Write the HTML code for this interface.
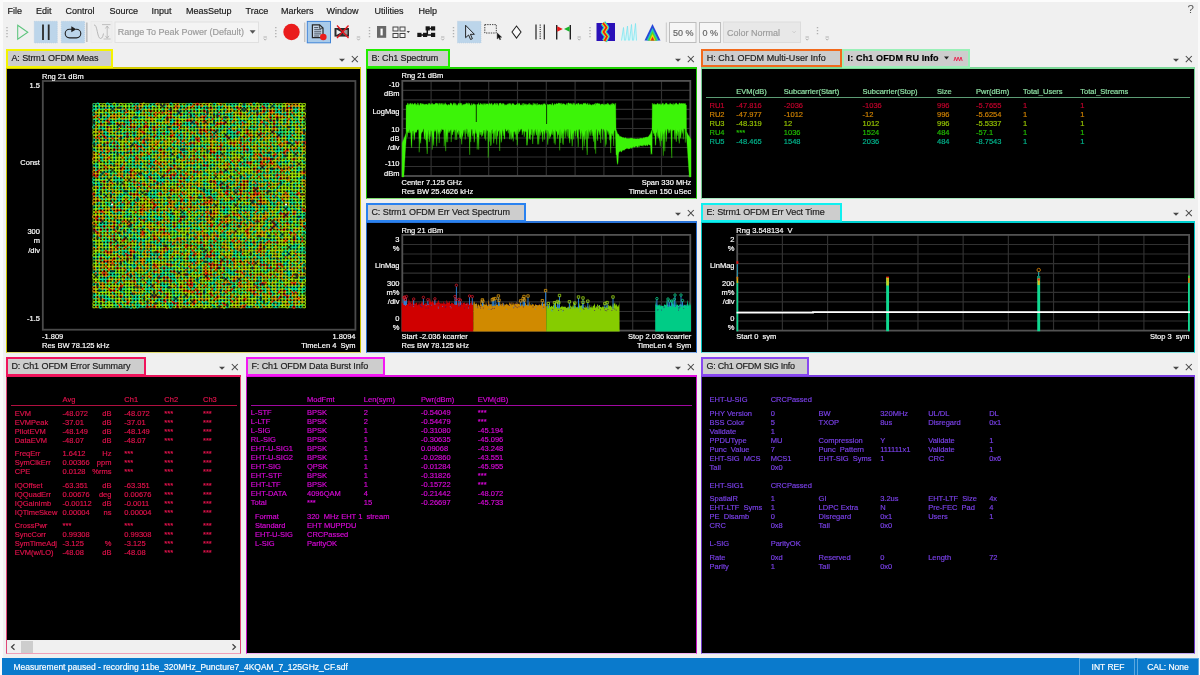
<!DOCTYPE html>
<html><head><meta charset="utf-8"><title>VSA</title>
<style>
html,body{margin:0;padding:0}
body{width:1200px;height:675px;overflow:hidden;background:#f0f0f0;font-family:"Liberation Sans",sans-serif;position:relative}
.t{position:absolute;white-space:pre;-webkit-text-stroke:.18px}
#w{position:absolute;left:0;top:0;width:1200px;height:675px;will-change:transform}
.u{font-size:9px;line-height:12px;color:#1a1a1a}
svg{position:absolute;overflow:visible}
</style></head><body><div id="w">
<div style="position:absolute;left:0px;top:0px;width:1200px;height:2px;background:#fcfcfc"></div>
<div style="position:absolute;left:0px;top:0px;width:3px;height:675px;background:#fafafa"></div>
<div style="position:absolute;left:1198px;top:0px;width:2px;height:675px;background:#fafafa"></div>
<div class="t u" style="left:7.6px;top:4.5px">File</div>
<div class="t u" style="left:36px;top:4.5px">Edit</div>
<div class="t u" style="left:65.5px;top:4.5px">Control</div>
<div class="t u" style="left:109.5px;top:4.5px">Source</div>
<div class="t u" style="left:151.5px;top:4.5px">Input</div>
<div class="t u" style="left:186px;top:4.5px">MeasSetup</div>
<div class="t u" style="left:245.5px;top:4.5px">Trace</div>
<div class="t u" style="left:281px;top:4.5px">Markers</div>
<div class="t u" style="left:326.5px;top:4.5px">Window</div>
<div class="t u" style="left:374.5px;top:4.5px">Utilities</div>
<div class="t u" style="left:418.5px;top:4.5px">Help</div>
<div class="t" style="left:1187.6px;top:2px;color:#555;font-size:11.5px;line-height:14px;-webkit-text-stroke:0">?</div>
<svg style="left:0;top:20px" width="800" height="26" viewBox="0 20 800 26">
<g fill="none" stroke-linecap="butt">
<!-- grip -->
<path d="M7 27v11" stroke="#b0b0b0" stroke-width="1.4" stroke-dasharray="1.3 1.7"/>
<!-- play -->
<path d="M17.7 25.2 L27.8 32.2 L17.7 39.3Z" stroke="#5cc47c" stroke-width="1.05" stroke-linejoin="miter"/>
<!-- pause -->
<rect x="34.3" y="21.3" width="23" height="21.6" fill="#bcd5ea" stroke="#a8c6e0" stroke-width=".6" stroke-dasharray="1 1"/>
<path d="M43 24.5v15.5M48.7 24.5v15.5" stroke="#2a2a2a" stroke-width="1.8"/>
<!-- loop -->
<rect x="61.3" y="21.3" width="23.3" height="21.6" fill="#bcd5ea" stroke="#a8c6e0" stroke-width=".6" stroke-dasharray="1 1"/>
<path d="M72.5 29.3 h-3 a4.3 4.3 0 0 0 0 8.6 h7 a4.3 4.3 0 0 0 0 -8.6 h-0.5" stroke="#1e1e1e" stroke-width="1.1"/>
<path d="M71.3 26.2 l5 3 l-5 3z" fill="#1e1e1e" stroke="none"/>
<path d="M86.8 22.5v19.5" stroke="#c0c0c0" stroke-width="1.7"/>
<!-- range icon (disabled) -->
<rect x="91" y="21.5" width="21" height="21" fill="#eeeeee" stroke="#e6e6e6" stroke-width=".6"/>
<path d="M94 25 c3.5 -1 3 13.5 6.5 13.5 c2 0 2.5 -3 3 -5" stroke="#b8b8b8" stroke-width="1"/>
<path d="M102 24.6h8.5M103.6 39h7M107.2 26v12M105.4 28.5l1.8-2.5l1.8 2.5M105.4 35.8l1.8 2.5l1.8-2.5" stroke="#b4b4b4" stroke-width=".8"/>
<!-- combo -->
<rect x="115" y="22" width="143.5" height="20.5" fill="#f4f4f4" stroke="#e0e0e0" stroke-width="1"/>
<path d="M249.6 30.3h6l-3 3.4z" fill="#555" stroke="none"/>
<!-- overflow chevrons -->
<g stroke="#a8a8a8" stroke-width=".9">
<path d="M263.5 37h3.4M263.8 38.6l1.4 1.6l1.4-1.6"/>
<path d="M356.8 37h3.4M357.1 38.6l1.4 1.6l1.4-1.6"/>
<path d="M441 37h3.4M441.3 38.6l1.4 1.6l1.4-1.6"/>
<path d="M577.5 37h3.4M577.8 38.6l1.4 1.6l1.4-1.6"/>
<path d="M805.5 37h3.4M805.8 38.6l1.4 1.6l1.4-1.6"/>
<path d="M825.5 37h3.4M825.8 38.6l1.4 1.6l1.4-1.6"/>
</g>
<!-- grips -->
<g stroke="#b0b0b0" stroke-width="1.4" stroke-dasharray="1.3 1.7">
<path d="M275.8 27v11"/><path d="M369.5 27v11"/><path d="M453.5 27v11"/><path d="M590 27v11"/><path d="M817.5 27v8"/>
</g>
<!-- record -->
<circle cx="291.5" cy="32" r="8.2" fill="#ea1c1c"/>
<path d="M304.8 22.5v19.5" stroke="#b4b4b4" stroke-width="1"/>
<!-- doc button -->
<rect x="307.3" y="21.4" width="23.2" height="21.4" fill="#a9cbea" stroke="#3f83d6" stroke-width="1"/>
<path d="M312.4 24.8h7.2l3.4 3.3v9.6h-10.6z" fill="#c4d4e4" stroke="#262626" stroke-width="1.2"/>
<path d="M319.4 25v3.3h3.4" fill="none" stroke="#262626" stroke-width=".8"/>
<path d="M314.2 27.6h4M314.2 29.7h7M314.2 31.8h7M314.2 33.9h7M314.2 36h5" stroke="#3a4450" stroke-width=".9"/>
<circle cx="323.3" cy="37" r="3.3" fill="#ea1c1c"/>
<!-- camera crossed -->
<rect x="334.5" y="28" width="14.5" height="8.6" fill="#2c2c2c"/>
<path d="M336.5 29.6l5 2.7l-5 2.7z" fill="#eee"/><rect x="343.5" y="30" width="4" height="4.6" fill="#999"/>
<path d="M337 25.5l11.5 12.5M348.5 25.5l-11.5 12.5" stroke="#e8141c" stroke-width="1.3"/>
<!-- group 3 -->
<rect x="377" y="26" width="9.2" height="11.8" fill="#686868" stroke="none"/><rect x="380.5" y="28.6" width="2.2" height="6.8" fill="#fff" stroke="none"/>
<g stroke="#444" stroke-width="1" fill="#f4f4f4">
<rect x="393" y="27" width="5" height="4"/><rect x="400" y="27" width="5" height="4"/><rect x="393" y="33.5" width="5" height="4"/><rect x="400" y="33.5" width="5" height="4"/>
</g>
<path d="M406.6 31h3.4l-1.7 2z" fill="#444"/>
<g fill="#161616"><rect x="417.3" y="32.8" width="4.2" height="4.2"/><rect x="423" y="32.8" width="4.2" height="4.2"/><rect x="431" y="32.8" width="4.2" height="4.2"/><rect x="425.6" y="26.3" width="4.2" height="4.2"/><rect x="431" y="26.3" width="4.2" height="4.2"/></g>
<path d="M420 34.9h13M427.3 28.4v6.5M427 28.4h6" stroke="#161616" stroke-width="1.5"/>
<!-- pointer button -->
<rect x="457.5" y="21.3" width="23.5" height="21.6" fill="#bcd5ea" stroke="#a8c6e0" stroke-width=".6" stroke-dasharray="1 1"/>
<path d="M465.6 25.3v12.4l3-2.7l2 4.5l1.8-.8l-2-4.4h4z" fill="#cfe0f0" stroke="#111" stroke-width=".9" stroke-linejoin="round"/>
<!-- rect select -->
<rect x="484.8" y="24.6" width="11.5" height="8.4" fill="none" stroke="#444" stroke-width="1" stroke-dasharray="1.4 1"/>
<path d="M497.2 33v6l1.6-1.4l1 2.2l.9-.4l-1-2.2h2z" fill="#111" stroke="#111" stroke-width=".4"/>
<!-- diamond -->
<path d="M516.5 26l4.5 6l-4.5 6l-4.5-6z" fill="#fafafa" stroke="#222" stroke-width="1.05"/>
<!-- bars -->
<path d="M536 24.5v15M544.3 24.5v15" stroke="#333" stroke-width="1.3"/><path d="M540.2 24.5v15" stroke="#333" stroke-width="1.1" stroke-dasharray="1.2 1"/>
<!-- flags -->
<path d="M556.7 25v14.5M570.3 25v14.5" stroke="#222" stroke-width="1.4"/>
<path d="M557.2 26.3l5.6 2.7l-5.6 2.7z" fill="#e81818"/><path d="M569.6 26.3l-5.6 2.7l5.6 2.7z" fill="#18b428"/>
<!-- spectrogram icon -->
<rect x="596.5" y="23" width="18.5" height="18" fill="#2a10b8"/>
<path d="M603 23l3.5 4.5l-3 4.5l3.5 4.5l-2.5 4.5" stroke="#18c8d8" stroke-width="5.5" stroke-linejoin="round" />
<path d="M603 23l3.5 4.5l-3 4.5l3.5 4.5l-2.5 4.5" stroke="#f0e020" stroke-width="3.4" stroke-linejoin="round" />
<path d="M603 23l3.5 4.5l-3 4.5l3.5 4.5l-2.5 4.5" stroke="#e82010" stroke-width="1.8" stroke-linejoin="round" />
<!-- waterfall icon -->
<g stroke="#7ce4f0" stroke-width=".8" fill="#d8f8fa"><path d="M621.5 40.5l2-13l1 13M625.5 40.5l2-14.5l1 14.5M629.5 40.5l2-16l1 16M633.5 40.5l2-17l1 17"/></g>
<!-- cumulative history icon -->
<path d="M644.5 40.5l8-16.5l8 16.5z" fill="#2848d8"/>
<path d="M646.5 40.5l6-12.5l6 12.5z" fill="#20c8c0"/>
<path d="M648 40.5l4.5-9.5l4.5 9.5z" fill="#58d820"/>
<path d="M649.5 40.5l3-6.5l3 6.5z" fill="#f0d810"/>
<path d="M650.7 40.5l1.8-3.8l1.8 3.8z" fill="#e82818"/>
<path d="M666.3 22.5v19.5" stroke="#c8c8c8" stroke-width="1"/>
<!-- 50% / 0% boxes -->
<rect x="669.5" y="22.5" width="26.5" height="20" fill="#f6f6f6" stroke="#bdbdbd" stroke-width="1"/>
<rect x="699.5" y="22.5" width="21" height="20" fill="#f6f6f6" stroke="#bdbdbd" stroke-width="1"/>
<rect x="723.5" y="22" width="77" height="20.5" fill="#e8e8e8" stroke="#dcdcdc" stroke-width="1"/>
<path d="M792.5 31.2l1.6 1.6l1.6-1.6" stroke="#c4c4c4" stroke-width=".8"/>
</g></svg>
<div class="t u" style="left:117.7px;top:26px;color:#9c9c9c">Range To Peak Power (Default)</div>
<div class="t u" style="left:673px;top:26.5px;color:#666">50 %</div>
<div class="t u" style="left:702.5px;top:26.5px;color:#666">0 %</div>
<div class="t u" style="left:727px;top:26.5px;color:#9c9c9c">Color Normal</div>
<div style="position:absolute;left:6px;top:69.2px;width:355.4px;height:283.8px;background:#000;box-sizing:border-box;border:1px solid #c8c000;border-top:none;border-bottom-color:#e0dc70"></div>
<div style="position:absolute;left:6px;top:67px;width:355.4px;height:2.3px;background:#d4cc00"></div>
<div style="position:absolute;left:6px;top:49.2px;width:106.8px;height:18.5px;background:#cdcdcd;box-sizing:border-box;border:2.1px solid #f4f400;border-bottom-width:2.6px"></div>
<div class="t u" style="left:11.4px;top:51.9px;color:#1c1c1c;letter-spacing:-0.089px">A: Strm1 OFDM Meas</div>
<svg style="left:336.4px;top:53px" width="26" height="13" viewBox="0 0 26 13"><path d="M3 5.8h6l-3 2.9z" fill="#484848"/><path d="M15.8 3l6 6.2M21.8 3l-6 6.2" stroke="#484848" stroke-width="1.05" fill="none"/></svg>
<div style="position:absolute;left:366px;top:69.2px;width:331px;height:129.8px;background:#000;box-sizing:border-box;border:1px solid #18c000;border-top:none;border-bottom-color:#80e070"></div>
<div style="position:absolute;left:366px;top:67px;width:331px;height:2.3px;background:#1cd000"></div>
<div style="position:absolute;left:366px;top:49.2px;width:83.6px;height:18.5px;background:#cdcdcd;box-sizing:border-box;border:2.1px solid #22ee00;border-bottom-width:2.6px"></div>
<div class="t u" style="left:371.4px;top:51.9px;color:#1c1c1c;letter-spacing:-0.127px">B: Ch1 Spectrum</div>
<svg style="left:672px;top:53px" width="26" height="13" viewBox="0 0 26 13"><path d="M3 5.8h6l-3 2.9z" fill="#484848"/><path d="M15.8 3l6 6.2M21.8 3l-6 6.2" stroke="#484848" stroke-width="1.05" fill="none"/></svg>
<div style="position:absolute;left:366px;top:223.2px;width:331px;height:129.8px;background:#000;box-sizing:border-box;border:1px solid #2468c8;border-top:none;border-bottom-color:#88b0e8"></div>
<div style="position:absolute;left:366px;top:221px;width:331px;height:2.3px;background:#2a74d8"></div>
<div style="position:absolute;left:366px;top:203.2px;width:159.8px;height:18.5px;background:#cdcdcd;box-sizing:border-box;border:2.1px solid #2a82f0;border-bottom-width:2.6px"></div>
<div class="t u" style="left:371.4px;top:205.9px;color:#1c1c1c;letter-spacing:-0.051px">C: Strm1 OFDM Err Vect Spectrum</div>
<svg style="left:672px;top:207px" width="26" height="13" viewBox="0 0 26 13"><path d="M3 5.8h6l-3 2.9z" fill="#484848"/><path d="M15.8 3l6 6.2M21.8 3l-6 6.2" stroke="#484848" stroke-width="1.05" fill="none"/></svg>
<div style="position:absolute;left:701px;top:69.2px;width:493.5px;height:129.8px;background:#000;box-sizing:border-box;border:1px solid #70c890;border-top:none;border-bottom-color:#a8e8c0"></div>
<div style="position:absolute;left:701px;top:67px;width:493.5px;height:2.3px;background:#7cd898"></div>
<div style="position:absolute;left:701.3px;top:49.2px;width:140.6px;height:17.4px;background:#cdcdcd;box-sizing:border-box;border:2.1px solid #f26a1c;border-bottom-width:2.1px"></div>
<div class="t u" style="left:706.6999999999999px;top:51.9px;color:#1c1c1c;letter-spacing:0.037px">H: Ch1 OFDM Multi-User Info</div>
<div style="position:absolute;left:842.2px;top:49.2px;width:127.6px;height:18.5px;background:#cdcdcd;box-sizing:border-box;border:2.1px solid #9af0b8;border-bottom-width:2.6px"></div>
<div class="t u" style="left:847.6px;top:51.9px;font-weight:700;color:#000;letter-spacing:0.139px">I: Ch1 OFDM RU Info</div>
<svg style="left:1169.5px;top:53px" width="26" height="13" viewBox="0 0 26 13"><path d="M3 5.8h6l-3 2.9z" fill="#484848"/><path d="M15.8 3l6 6.2M21.8 3l-6 6.2" stroke="#484848" stroke-width="1.05" fill="none"/></svg>
<div style="position:absolute;left:701px;top:223.2px;width:493.5px;height:129.8px;background:#000;box-sizing:border-box;border:1px solid #00c0c0;border-top:none;border-bottom-color:#80e0e0"></div>
<div style="position:absolute;left:701px;top:221px;width:493.5px;height:2.3px;background:#00d0d0"></div>
<div style="position:absolute;left:701px;top:203.2px;width:140.6px;height:18.5px;background:#cdcdcd;box-sizing:border-box;border:2.1px solid #10f0f0;border-bottom-width:2.6px"></div>
<div class="t u" style="left:706.4px;top:205.9px;color:#1c1c1c;letter-spacing:-0.085px">E: Strm1 OFDM Err Vect Time</div>
<svg style="left:1169.5px;top:207px" width="26" height="13" viewBox="0 0 26 13"><path d="M3 5.8h6l-3 2.9z" fill="#484848"/><path d="M15.8 3l6 6.2M21.8 3l-6 6.2" stroke="#484848" stroke-width="1.05" fill="none"/></svg>
<div style="position:absolute;left:6px;top:377.2px;width:235px;height:276.8px;background:#000;box-sizing:border-box;border:1px solid #e04878;border-top:none;border-bottom-color:#f0a0b8"></div>
<div style="position:absolute;left:6px;top:375px;width:235px;height:2.3px;background:#e8145a"></div>
<div style="position:absolute;left:6px;top:357.2px;width:139.6px;height:18.5px;background:#cdcdcd;box-sizing:border-box;border:2.1px solid #f0145c;border-bottom-width:2.6px"></div>
<div class="t u" style="left:11.4px;top:359.9px;color:#1c1c1c;letter-spacing:-0.063px">D: Ch1 OFDM Error Summary</div>
<svg style="left:216px;top:361px" width="26" height="13" viewBox="0 0 26 13"><path d="M3 5.8h6l-3 2.9z" fill="#484848"/><path d="M15.8 3l6 6.2M21.8 3l-6 6.2" stroke="#484848" stroke-width="1.05" fill="none"/></svg>
<div style="position:absolute;left:246px;top:377.2px;width:451px;height:276.8px;background:#000;box-sizing:border-box;border:1px solid #c810c8;border-top:none;border-bottom-color:#f0b0f0"></div>
<div style="position:absolute;left:246px;top:375px;width:451px;height:2.3px;background:#e010e0"></div>
<div style="position:absolute;left:246px;top:357.2px;width:139.2px;height:18.5px;background:#cdcdcd;box-sizing:border-box;border:2.1px solid #f418f4;border-bottom-width:2.6px"></div>
<div class="t u" style="left:251.4px;top:359.9px;color:#1c1c1c;letter-spacing:-0.067px">F: Ch1 OFDM Data Burst Info</div>
<svg style="left:672px;top:361px" width="26" height="13" viewBox="0 0 26 13"><path d="M3 5.8h6l-3 2.9z" fill="#484848"/><path d="M15.8 3l6 6.2M21.8 3l-6 6.2" stroke="#484848" stroke-width="1.05" fill="none"/></svg>
<div style="position:absolute;left:701px;top:377.2px;width:493.5px;height:276.8px;background:#000;box-sizing:border-box;border:1px solid #6c38c8;border-top:none;border-bottom-color:#c0a8f0"></div>
<div style="position:absolute;left:701px;top:375px;width:493.5px;height:2.3px;background:#7a3ee0"></div>
<div style="position:absolute;left:701px;top:357.2px;width:107.6px;height:18.5px;background:#cdcdcd;box-sizing:border-box;border:2.1px solid #8848f0;border-bottom-width:2.6px"></div>
<div class="t u" style="left:706.4px;top:359.9px;color:#1c1c1c;letter-spacing:-0.228px">G: Ch1 OFDM SIG Info</div>
<svg style="left:1169.5px;top:361px" width="26" height="13" viewBox="0 0 26 13"><path d="M3 5.8h6l-3 2.9z" fill="#484848"/><path d="M15.8 3l6 6.2M21.8 3l-6 6.2" stroke="#484848" stroke-width="1.05" fill="none"/></svg>
<svg style="left:940px;top:53px" width="30" height="12" viewBox="0 0 30 12"><path d="M4 3.5h5l-2.5 3z" fill="#222"/><path d="M14 8l1.2-4l1.5 4l1.4-4l1.5 4l1.4-4l1.2 4" stroke="#e8204c" stroke-width=".9" fill="none"/></svg>
<div style="position:absolute;left:7px;top:640px;width:233px;height:13px;background:#f0f0f0"></div>
<div style="position:absolute;left:20.5px;top:641px;width:12.5px;height:11.5px;background:#cdcdcd"></div>
<svg style="left:7px;top:641px" width="233" height="12" viewBox="0 0 233 12"><path d="M7.5 3.2l-3 2.8l3 2.8M225.5 3.2l3 2.8l-3 2.8" stroke="#404040" stroke-width="1.2" fill="none"/></svg>
<div style="position:absolute;left:2px;top:657.5px;width:1196px;height:17.5px;background:#0a7acc"></div>
<div class="t" style="left:13.5px;top:661px;font-size:8.5px;line-height:12px;color:#fff">Measurement paused - recording 11be_320MHz_Puncture7_4KQAM_7_125GHz_CF.sdf</div>
<div style="position:absolute;left:1078.5px;top:658px;width:56px;height:17px;box-sizing:border-box;border:1px solid #5aa8e0;border-bottom:none"></div>
<div style="position:absolute;left:1136.5px;top:658px;width:62px;height:17px;box-sizing:border-box;border:1px solid #5aa8e0;border-bottom:none"></div>
<div class="t" style="left:1058px;width:100px;text-align:center;top:661px;font-size:8.5px;line-height:12px;color:#fff">INT REF</div>
<div class="t" style="left:1118px;width:100px;text-align:center;top:661px;font-size:8.5px;line-height:12px;color:#fff">CAL: None</div>
<svg style="left:0;top:0" width="1200" height="675" viewBox="0 0 1200 675">
<rect x="42.8" y="81" width="312.59999999999997" height="248.7" fill="none" stroke="#4a4a4a" stroke-width="1.8"/>
<rect x="92.6" y="103" width="213" height="205.2" fill="#5c8c14"/>
<path d="M94.2 105.0h.01M97.8 104.2h.01M107.5 104.2h.01M110.8 104.9h.01M117.2 105.0h.01M134.1 104.9h.01M137.3 104.3h.01M150.9 104.9h.01M153.8 104.7h.01M171.0 104.2h.01M187.5 105.0h.01M190.8 104.4h.01M214.5 104.4h.01M227.0 104.8h.01M230.8 104.6h.01M234.2 104.6h.01M237.1 104.8h.01M244.4 104.7h.01M254.1 104.2h.01M264.2 104.3h.01M267.7 104.4h.01M274.1 104.8h.01M94.2 107.6h.01M97.3 108.0h.01M100.7 108.2h.01M104.6 108.2h.01M107.3 107.8h.01M110.5 107.7h.01M113.8 107.8h.01M120.7 107.6h.01M137.4 107.9h.01M144.5 107.7h.01M147.0 108.1h.01M150.9 107.9h.01M181.2 108.0h.01M197.8 108.1h.01M200.6 108.3h.01M203.7 107.4h.01M217.4 107.9h.01M220.7 107.8h.01M234.1 108.1h.01M244.4 107.4h.01M260.7 107.6h.01M267.0 107.9h.01M277.2 108.2h.01M280.5 107.7h.01M293.8 107.8h.01M297.4 108.0h.01M93.9 110.7h.01M117.7 110.9h.01M120.9 111.2h.01M124.1 110.6h.01M137.8 110.9h.01M140.7 111.0h.01M181.1 111.1h.01M187.5 110.8h.01M191.1 110.8h.01M197.3 110.6h.01M207.1 110.8h.01M217.0 111.2h.01M224.1 111.4h.01M244.4 111.3h.01M250.8 110.7h.01M253.6 111.2h.01M257.1 111.1h.01M260.3 110.6h.01M267.5 111.5h.01M277.3 111.3h.01M280.3 111.3h.01M294.2 110.7h.01M297.5 111.1h.01M94.1 114.6h.01M101.0 114.0h.01M107.9 114.1h.01M127.1 113.8h.01M137.8 114.0h.01M174.2 114.6h.01M177.8 113.9h.01M184.1 114.5h.01M187.2 114.1h.01M190.8 114.4h.01M194.1 114.0h.01M200.7 114.0h.01M204.1 114.4h.01M207.3 114.4h.01M214.5 114.0h.01M217.5 114.6h.01M220.5 113.8h.01M223.8 113.9h.01M227.7 114.2h.01M230.3 114.0h.01M247.4 114.4h.01M263.8 114.4h.01M280.9 114.0h.01M284.1 114.1h.01M290.8 113.9h.01M100.6 117.7h.01M103.7 117.1h.01M107.4 117.1h.01M133.9 117.5h.01M137.3 117.7h.01M140.9 117.7h.01M143.8 117.7h.01M163.7 117.5h.01M180.6 117.5h.01M183.9 117.2h.01M187.2 117.8h.01M194.3 117.2h.01M207.4 117.6h.01M210.6 117.8h.01M217.7 117.8h.01M224.4 117.8h.01M230.5 117.7h.01M237.8 117.7h.01M250.7 117.4h.01M257.7 117.7h.01M260.9 117.6h.01M294.0 117.8h.01M297.4 117.6h.01M94.5 120.4h.01M97.9 120.8h.01M104.0 120.7h.01M111.1 120.7h.01M117.2 120.5h.01M121.1 120.7h.01M123.8 120.4h.01M127.5 120.2h.01M157.4 120.5h.01M160.9 121.0h.01M170.8 120.9h.01M173.8 120.7h.01M194.2 121.0h.01M214.5 121.1h.01M217.2 120.2h.01M223.6 120.4h.01M230.4 120.3h.01M241.0 121.0h.01M243.6 120.9h.01M257.8 120.4h.01M263.6 120.3h.01M270.8 120.8h.01M277.1 121.0h.01M284.1 120.2h.01M290.7 120.7h.01M297.4 120.4h.01M94.5 124.0h.01M110.9 124.1h.01M114.3 123.5h.01M127.7 123.7h.01M144.0 123.5h.01M150.7 123.8h.01M154.3 124.2h.01M170.8 123.5h.01M184.4 124.1h.01M187.8 123.7h.01M190.6 124.0h.01M193.8 124.3h.01M200.4 123.6h.01M210.4 124.3h.01M214.3 124.1h.01M233.9 124.3h.01M240.6 124.1h.01M257.4 124.1h.01M263.8 124.2h.01M267.6 123.5h.01M277.6 124.0h.01M283.6 124.0h.01M291.0 124.2h.01M93.8 127.1h.01M100.8 126.8h.01M104.0 127.3h.01M117.8 126.9h.01M124.3 127.2h.01M137.7 127.1h.01M150.4 127.2h.01M167.7 126.6h.01M173.7 127.0h.01M177.6 127.4h.01M190.6 126.8h.01M193.8 126.8h.01M201.2 127.1h.01M207.6 126.6h.01M223.7 126.7h.01M227.6 127.0h.01M230.4 127.0h.01M244.5 127.3h.01M250.6 127.5h.01M257.2 127.0h.01M264.1 126.7h.01M270.6 127.0h.01M280.9 126.8h.01M290.5 127.3h.01M293.6 127.4h.01M301.1 127.1h.01M103.9 129.9h.01M114.2 130.7h.01M121.3 130.4h.01M150.9 130.1h.01M157.6 130.1h.01M167.3 130.7h.01M174.2 130.0h.01M181.0 130.6h.01M197.3 129.9h.01M220.3 130.1h.01M227.9 130.1h.01M231.0 130.5h.01M237.4 130.6h.01M240.4 130.0h.01M254.0 129.9h.01M280.5 130.1h.01M291.1 130.5h.01M293.6 130.2h.01M304.1 129.9h.01M104.6 133.2h.01M107.3 133.2h.01M117.5 133.3h.01M121.0 133.9h.01M123.8 133.4h.01M134.3 133.9h.01M147.9 133.1h.01M151.2 133.8h.01M157.6 133.7h.01M160.9 133.2h.01M167.4 133.1h.01M177.6 133.7h.01M181.1 133.4h.01M187.3 133.7h.01M197.0 133.6h.01M204.5 133.7h.01M214.5 133.4h.01M227.5 133.7h.01M230.9 133.4h.01M234.4 133.0h.01M267.7 133.1h.01M277.8 133.7h.01M280.6 133.5h.01M290.9 133.3h.01M294.1 133.7h.01M101.0 136.4h.01M107.7 136.6h.01M110.4 136.6h.01M114.2 136.3h.01M123.9 136.5h.01M134.2 136.8h.01M144.3 136.6h.01M157.0 137.0h.01M177.3 136.5h.01M180.9 136.5h.01M187.1 136.4h.01M193.9 136.8h.01M200.3 136.3h.01M203.9 136.3h.01M211.0 137.1h.01M214.5 136.6h.01M230.9 136.9h.01M233.7 136.8h.01M237.0 136.9h.01M280.9 136.8h.01M287.8 136.7h.01M290.6 136.2h.01M303.6 136.5h.01M94.5 140.0h.01M104.4 139.8h.01M107.6 140.1h.01M140.9 140.3h.01M180.5 140.1h.01M190.6 140.0h.01M194.0 140.1h.01M201.2 139.7h.01M217.3 140.1h.01M224.0 139.7h.01M247.4 139.6h.01M254.2 139.8h.01M260.3 139.7h.01M270.5 140.1h.01M287.5 139.9h.01M294.4 140.0h.01M297.3 140.2h.01M301.0 140.0h.01M303.6 140.0h.01M94.1 143.1h.01M97.8 142.7h.01M110.9 143.5h.01M117.4 143.2h.01M134.3 142.7h.01M137.9 143.2h.01M147.3 143.4h.01M160.8 143.0h.01M174.1 143.0h.01M181.0 142.8h.01M184.1 142.9h.01M257.0 142.7h.01M264.3 143.0h.01M291.0 143.0h.01M293.7 143.4h.01M110.4 146.3h.01M114.0 145.9h.01M127.7 146.6h.01M143.8 146.5h.01M147.8 146.6h.01M174.1 145.9h.01M177.3 146.1h.01M181.2 146.2h.01M184.5 146.1h.01M187.0 146.6h.01M190.4 146.5h.01M194.2 146.1h.01M197.7 146.2h.01M201.2 146.3h.01M204.5 146.7h.01M227.7 146.2h.01M231.2 146.5h.01M247.5 146.5h.01M274.0 146.3h.01M277.8 146.1h.01M94.4 149.4h.01M103.8 149.9h.01M133.8 149.4h.01M140.5 149.4h.01M167.4 149.8h.01M170.9 149.3h.01M180.8 149.4h.01M183.7 149.1h.01M190.6 149.4h.01M227.0 149.9h.01M230.7 149.5h.01M234.2 149.1h.01M250.4 149.4h.01M260.7 149.5h.01M277.6 149.7h.01M280.7 149.7h.01M290.5 149.9h.01M100.6 152.7h.01M103.9 152.4h.01M110.9 152.8h.01M114.1 153.0h.01M117.6 152.9h.01M120.5 152.5h.01M123.7 152.4h.01M127.8 152.4h.01M134.3 153.0h.01M137.8 153.1h.01M153.8 153.0h.01M157.6 152.8h.01M171.1 152.3h.01M183.7 152.6h.01M187.5 152.3h.01M197.2 152.6h.01M207.4 152.5h.01M217.3 152.8h.01M220.5 152.6h.01M227.1 153.0h.01M237.4 152.6h.01M240.8 153.0h.01M247.1 153.0h.01M250.8 152.9h.01M261.1 152.4h.01M271.0 152.3h.01M277.5 152.5h.01M287.7 152.6h.01M293.8 152.9h.01M300.2 152.4h.01M100.4 155.8h.01M114.1 155.9h.01M130.6 155.8h.01M134.2 156.3h.01M147.8 156.2h.01M150.8 155.5h.01M171.1 155.7h.01M177.5 155.8h.01M180.6 156.3h.01M190.7 156.2h.01M230.8 155.7h.01M250.7 155.5h.01M263.9 155.7h.01M267.5 155.8h.01M270.8 156.3h.01M276.9 156.2h.01M283.6 155.5h.01M297.1 156.0h.01M303.6 155.7h.01M101.1 158.9h.01M114.3 159.2h.01M127.2 159.3h.01M133.7 159.0h.01M144.2 159.0h.01M147.0 159.3h.01M150.5 159.2h.01M154.2 159.3h.01M167.4 159.3h.01M174.5 159.1h.01M203.7 159.2h.01M227.5 159.1h.01M244.0 158.8h.01M250.6 159.4h.01M261.0 158.9h.01M110.7 162.3h.01M134.0 161.9h.01M140.8 162.5h.01M151.1 162.3h.01M174.1 162.4h.01M184.2 162.0h.01M204.4 162.3h.01M207.2 162.1h.01M217.2 162.4h.01M230.8 162.4h.01M240.8 162.7h.01M244.2 162.1h.01M254.3 162.5h.01M267.2 162.0h.01M277.6 161.9h.01M280.8 162.2h.01M284.2 162.1h.01M287.3 162.1h.01M293.9 162.1h.01M303.9 162.7h.01M94.5 165.8h.01M97.9 165.3h.01M121.1 165.8h.01M134.2 165.4h.01M137.3 165.2h.01M141.1 165.5h.01M147.2 165.3h.01M150.5 165.6h.01M154.4 165.1h.01M170.6 165.9h.01M187.5 165.6h.01M190.5 165.3h.01M194.2 165.2h.01M200.7 165.2h.01M210.8 165.3h.01M213.9 165.7h.01M233.7 165.4h.01M240.8 165.6h.01M244.4 165.6h.01M247.6 165.2h.01M280.4 165.1h.01M290.4 165.5h.01M294.3 165.3h.01M97.1 168.8h.01M127.6 168.6h.01M140.5 168.5h.01M144.1 169.0h.01M153.7 168.8h.01M161.2 168.6h.01M194.2 168.5h.01M201.1 169.1h.01M204.5 168.5h.01M210.6 169.1h.01M217.2 168.4h.01M237.4 168.3h.01M257.8 168.6h.01M260.7 168.6h.01M264.3 168.4h.01M270.7 169.2h.01M277.3 169.1h.01M297.5 168.9h.01M300.8 168.9h.01M104.0 171.8h.01M107.4 172.4h.01M110.9 172.0h.01M123.9 171.7h.01M127.1 171.7h.01M150.6 172.2h.01M160.5 171.7h.01M177.1 171.7h.01M191.1 172.0h.01M204.1 172.2h.01M217.4 171.8h.01M224.5 172.0h.01M227.5 172.1h.01M234.2 172.0h.01M254.0 171.7h.01M264.2 171.7h.01M270.7 172.1h.01M287.3 171.7h.01M297.0 171.7h.01M101.0 174.8h.01M111.2 175.2h.01M124.5 175.3h.01M137.8 175.3h.01M144.5 174.8h.01M147.6 174.9h.01M151.2 175.4h.01M154.5 175.0h.01M157.5 175.0h.01M177.7 174.9h.01M183.8 174.9h.01M194.4 175.1h.01M203.8 174.9h.01M207.3 175.0h.01M247.0 175.4h.01M251.0 175.1h.01M273.7 175.3h.01M94.0 178.6h.01M101.0 178.4h.01M104.1 178.5h.01M114.0 177.9h.01M117.8 178.3h.01M120.7 177.9h.01M147.6 178.2h.01M153.9 178.7h.01M157.4 178.6h.01M160.5 178.3h.01M163.9 178.6h.01M167.6 178.3h.01M173.9 178.5h.01M180.7 178.3h.01M187.4 178.8h.01M197.1 178.3h.01M214.0 178.2h.01M233.9 178.2h.01M240.7 178.4h.01M243.7 178.3h.01M247.2 178.0h.01M263.6 178.4h.01M270.6 178.2h.01M277.7 178.1h.01M297.6 178.0h.01M300.8 178.1h.01M304.2 177.9h.01M93.8 181.9h.01M97.5 181.5h.01M107.4 181.5h.01M114.0 181.3h.01M117.2 181.9h.01M120.7 181.6h.01M140.7 181.7h.01M147.7 181.9h.01M157.7 181.2h.01M160.8 181.5h.01M163.7 181.7h.01M170.6 181.8h.01M174.1 181.1h.01M177.3 182.0h.01M187.7 181.4h.01M193.7 181.4h.01M203.8 181.2h.01M217.4 181.4h.01M220.8 181.2h.01M227.8 181.3h.01M230.8 181.3h.01M234.0 181.3h.01M241.0 182.0h.01M250.7 182.0h.01M257.2 181.6h.01M260.5 181.7h.01M264.0 181.4h.01M267.3 181.1h.01M273.7 181.5h.01M277.5 181.1h.01M281.1 181.3h.01M284.4 181.5h.01M94.4 184.4h.01M97.6 184.5h.01M100.6 185.2h.01M137.2 185.0h.01M140.4 185.1h.01M151.1 184.6h.01M154.4 184.8h.01M160.7 184.4h.01M184.6 185.2h.01M204.3 184.4h.01M207.8 184.6h.01M217.4 184.5h.01M230.4 185.0h.01M250.3 185.0h.01M254.0 184.5h.01M257.3 184.4h.01M267.1 184.7h.01M280.8 184.4h.01M287.1 184.4h.01M294.0 184.4h.01M100.4 188.0h.01M114.5 187.9h.01M121.1 188.1h.01M134.3 188.2h.01M144.2 188.1h.01M197.6 187.6h.01M200.3 188.2h.01M204.4 187.9h.01M217.2 188.2h.01M234.0 187.9h.01M237.0 187.7h.01M250.9 188.0h.01M260.4 188.3h.01M264.3 187.9h.01M277.7 188.1h.01M294.1 187.7h.01M297.4 188.4h.01M97.8 190.9h.01M107.3 191.4h.01M110.5 191.3h.01M124.3 191.5h.01M127.7 190.8h.01M131.1 191.1h.01M133.9 191.5h.01M151.0 191.0h.01M154.6 191.0h.01M157.7 191.4h.01M160.9 191.3h.01M204.3 190.9h.01M207.8 191.3h.01M223.8 191.4h.01M233.8 191.0h.01M237.7 191.0h.01M244.2 191.0h.01M247.6 191.0h.01M257.1 190.9h.01M270.3 191.0h.01M274.1 191.0h.01M287.3 190.8h.01M290.3 191.3h.01M300.9 191.5h.01M97.2 194.0h.01M104.2 194.7h.01M111.2 194.1h.01M114.3 194.1h.01M120.6 193.9h.01M123.7 194.7h.01M127.8 194.7h.01M147.7 194.7h.01M150.4 194.1h.01M154.2 194.2h.01M167.1 194.4h.01M174.0 194.8h.01M180.6 194.4h.01M194.0 194.0h.01M200.4 194.8h.01M207.4 194.4h.01M210.5 194.7h.01M214.0 194.3h.01M274.4 194.8h.01M280.3 194.2h.01M290.3 194.7h.01M293.8 194.6h.01M100.8 197.5h.01M117.2 198.0h.01M120.9 197.5h.01M131.1 197.2h.01M137.3 197.4h.01M150.8 197.8h.01M154.0 197.4h.01M157.8 197.7h.01M164.3 198.0h.01M200.4 197.6h.01M213.7 197.7h.01M237.7 197.4h.01M257.3 197.1h.01M267.4 198.0h.01M273.6 197.3h.01M277.6 197.7h.01M297.7 197.3h.01M117.6 200.6h.01M120.8 200.7h.01M137.2 200.8h.01M184.5 201.0h.01M187.2 200.4h.01M197.8 200.6h.01M220.5 200.8h.01M230.7 201.2h.01M234.1 201.1h.01M247.7 201.1h.01M254.2 200.8h.01M270.4 200.9h.01M277.0 200.9h.01M280.8 200.7h.01M287.1 201.1h.01M290.6 201.0h.01M301.0 201.2h.01M97.4 204.2h.01M101.2 204.1h.01M107.2 203.8h.01M110.9 204.0h.01M120.9 203.8h.01M124.0 204.2h.01M131.2 204.1h.01M133.8 203.6h.01M163.9 204.2h.01M167.2 203.7h.01M177.8 204.4h.01M181.0 203.9h.01M194.4 203.9h.01M214.0 204.3h.01M220.5 203.6h.01M224.3 204.2h.01M230.9 204.3h.01M240.3 203.7h.01M270.9 204.1h.01M273.8 204.2h.01M290.4 204.0h.01M293.7 204.0h.01M300.6 203.7h.01M94.6 207.2h.01M101.2 207.6h.01M111.2 206.9h.01M117.2 206.9h.01M120.7 207.1h.01M137.3 207.4h.01M157.5 207.0h.01M177.0 207.2h.01M200.8 207.4h.01M203.7 207.2h.01M207.5 207.6h.01M220.7 207.6h.01M227.3 207.2h.01M240.5 207.1h.01M243.7 207.6h.01M247.4 207.5h.01M250.5 207.2h.01M253.8 207.3h.01M260.8 207.0h.01M264.4 206.8h.01M267.1 207.4h.01M273.8 207.6h.01M280.8 207.3h.01M284.4 207.6h.01M287.2 207.6h.01M293.7 207.3h.01M300.8 207.1h.01M111.2 210.5h.01M127.7 210.1h.01M150.5 210.0h.01M154.6 210.8h.01M171.1 210.8h.01M197.2 210.2h.01M200.8 210.4h.01M204.5 210.1h.01M210.6 210.1h.01M220.8 210.8h.01M224.1 210.3h.01M227.0 210.4h.01M240.8 210.0h.01M243.7 210.4h.01M247.5 210.5h.01M250.5 210.3h.01M254.2 210.3h.01M263.6 210.6h.01M267.6 210.8h.01M280.5 210.1h.01M287.6 210.1h.01M290.4 210.5h.01M297.7 210.5h.01M300.5 210.5h.01M101.0 213.7h.01M113.9 214.0h.01M117.3 214.0h.01M120.7 213.3h.01M127.9 213.7h.01M130.5 213.4h.01M147.3 213.9h.01M150.4 213.4h.01M161.2 213.2h.01M167.6 213.9h.01M170.7 214.0h.01M184.1 213.3h.01M204.5 214.0h.01M224.3 213.5h.01M227.7 213.2h.01M240.9 213.7h.01M250.8 213.6h.01M257.1 213.3h.01M270.4 213.9h.01M277.1 213.4h.01M290.8 213.5h.01M297.4 214.0h.01M300.7 214.0h.01M304.0 213.6h.01M107.9 216.5h.01M127.2 216.9h.01M137.7 216.8h.01M141.0 216.7h.01M144.2 217.0h.01M147.6 216.9h.01M154.3 216.8h.01M157.4 216.7h.01M160.6 216.9h.01M170.9 217.0h.01M174.0 216.4h.01M187.3 217.1h.01M197.6 216.9h.01M201.2 216.5h.01M203.7 216.9h.01M234.4 216.9h.01M244.1 216.6h.01M251.1 216.7h.01M260.6 216.6h.01M274.0 216.8h.01M293.7 216.7h.01M297.8 216.7h.01M300.6 217.0h.01M303.6 216.5h.01M117.1 219.9h.01M137.8 219.8h.01M147.8 219.8h.01M150.5 220.0h.01M157.7 219.7h.01M160.7 219.7h.01M171.2 220.2h.01M197.4 220.3h.01M201.0 220.4h.01M204.3 219.8h.01M217.7 220.2h.01M237.1 220.1h.01M241.1 219.7h.01M247.1 220.1h.01M250.7 219.9h.01M267.3 220.1h.01M280.9 220.1h.01M290.6 219.6h.01M297.4 219.9h.01M100.4 223.6h.01M103.8 223.5h.01M107.2 223.3h.01M111.0 223.6h.01M117.7 223.2h.01M137.1 223.4h.01M171.2 223.4h.01M184.3 223.4h.01M191.0 222.9h.01M193.7 222.9h.01M197.2 223.5h.01M204.0 223.6h.01M217.6 223.1h.01M247.4 223.1h.01M253.9 223.4h.01M267.5 223.7h.01M277.2 223.4h.01M290.8 223.0h.01M304.4 223.5h.01M101.3 226.4h.01M124.1 226.1h.01M130.8 226.0h.01M144.3 226.5h.01M167.2 226.1h.01M170.9 226.8h.01M177.7 226.5h.01M180.6 226.3h.01M184.4 226.2h.01M187.4 226.5h.01M190.3 226.1h.01M214.3 226.6h.01M227.5 226.1h.01M240.9 226.7h.01M264.5 226.1h.01M277.7 226.0h.01M297.0 226.2h.01M97.2 229.8h.01M110.9 230.0h.01M120.7 229.3h.01M127.2 229.3h.01M130.4 230.0h.01M137.9 229.9h.01M147.2 229.4h.01M157.3 229.9h.01M170.8 229.4h.01M173.9 229.7h.01M190.5 229.4h.01M197.8 229.5h.01M200.6 229.3h.01M210.9 229.8h.01M227.5 229.8h.01M250.6 229.9h.01M263.9 230.0h.01M291.0 229.7h.01M123.9 232.9h.01M127.6 232.9h.01M130.9 232.7h.01M133.9 233.0h.01M137.8 233.0h.01M150.4 232.9h.01M190.6 232.8h.01M193.8 233.1h.01M207.7 232.4h.01M217.2 233.2h.01M224.3 232.9h.01M254.2 232.4h.01M267.4 233.0h.01M304.4 232.4h.01M94.4 235.9h.01M120.4 235.8h.01M124.1 235.7h.01M127.5 236.0h.01M134.4 235.7h.01M177.8 236.4h.01M181.1 236.0h.01M187.1 235.7h.01M200.8 236.4h.01M220.5 235.6h.01M224.3 236.3h.01M230.8 235.9h.01M237.5 235.7h.01M240.9 236.3h.01M273.9 235.8h.01M280.3 236.0h.01M297.5 235.9h.01M107.5 239.4h.01M130.8 239.6h.01M134.4 239.1h.01M137.5 239.2h.01M140.4 238.9h.01M143.9 239.6h.01M147.2 239.1h.01M161.1 239.2h.01M163.9 239.0h.01M187.0 239.1h.01M190.7 239.4h.01M193.9 239.2h.01M217.2 239.0h.01M240.7 239.5h.01M244.0 239.3h.01M250.5 239.7h.01M260.7 239.7h.01M264.4 238.9h.01M267.6 239.7h.01M270.9 239.7h.01M273.9 239.4h.01M297.5 238.9h.01M300.4 239.1h.01M94.3 242.1h.01M104.6 242.2h.01M107.1 242.8h.01M117.4 242.2h.01M137.7 242.3h.01M144.0 242.5h.01M151.1 242.3h.01M154.3 242.4h.01M160.4 242.6h.01M167.4 242.5h.01M171.1 242.7h.01M177.5 242.1h.01M187.2 242.9h.01M230.5 242.9h.01M247.8 242.3h.01M250.6 242.9h.01M257.4 242.3h.01M264.4 242.4h.01M94.4 246.1h.01M104.4 245.4h.01M107.5 245.3h.01M137.2 245.4h.01M144.3 245.3h.01M157.3 245.6h.01M161.0 245.5h.01M170.5 245.7h.01M174.0 246.1h.01M200.8 245.5h.01M214.2 245.9h.01M230.9 246.1h.01M247.7 245.3h.01M251.1 245.4h.01M257.1 245.5h.01M290.3 245.2h.01M294.0 245.8h.01M297.1 245.6h.01M107.6 248.8h.01M134.6 248.9h.01M137.8 249.0h.01M144.2 248.6h.01M150.6 249.1h.01M157.9 248.8h.01M177.6 248.5h.01M210.6 248.5h.01M220.3 248.9h.01M233.6 248.7h.01M247.3 248.5h.01M254.1 248.6h.01M290.6 249.2h.01M294.3 249.0h.01M301.0 248.5h.01M303.9 248.6h.01M113.9 252.4h.01M117.1 251.8h.01M124.3 251.7h.01M127.5 252.2h.01M141.1 252.2h.01M147.1 252.0h.01M150.4 251.7h.01M167.9 251.9h.01M170.6 252.5h.01M180.7 251.6h.01M190.7 252.0h.01M217.3 252.0h.01M224.3 251.9h.01M234.3 252.5h.01M237.0 251.8h.01M240.6 252.5h.01M254.2 252.5h.01M267.7 251.7h.01M277.6 251.7h.01M284.2 252.1h.01M287.7 252.3h.01M297.2 251.8h.01M300.4 251.9h.01M304.3 252.3h.01M97.9 255.7h.01M100.6 255.7h.01M103.8 255.7h.01M124.5 255.0h.01M134.5 254.9h.01M137.6 255.2h.01M140.8 255.6h.01M151.1 254.8h.01M153.9 255.5h.01M157.8 255.3h.01M163.9 255.6h.01M167.7 255.0h.01M177.3 255.5h.01M190.6 255.2h.01M204.4 255.1h.01M217.3 255.0h.01M234.2 255.7h.01M240.3 255.0h.01M254.0 254.9h.01M257.1 255.5h.01M267.3 255.2h.01M270.5 255.0h.01M283.8 254.9h.01M286.9 255.1h.01M293.8 255.3h.01M94.4 258.2h.01M97.9 258.7h.01M107.5 258.2h.01M117.6 258.6h.01M134.2 258.1h.01M137.5 258.8h.01M147.6 258.9h.01M150.5 258.2h.01M154.1 258.8h.01M157.0 258.4h.01M167.7 258.5h.01M174.4 258.4h.01M177.3 258.9h.01M180.4 258.8h.01M190.6 258.3h.01M193.7 258.9h.01M200.4 258.3h.01M203.7 258.5h.01M207.7 258.7h.01M210.8 258.9h.01M217.2 258.6h.01M224.1 258.9h.01M244.1 258.2h.01M257.7 258.1h.01M261.0 258.3h.01M270.5 258.8h.01M274.0 258.3h.01M280.5 258.1h.01M301.0 258.2h.01M124.5 262.1h.01M134.4 261.9h.01M147.3 261.4h.01M150.5 261.7h.01M167.4 261.9h.01M170.9 262.0h.01M174.3 261.9h.01M180.4 262.0h.01M191.0 261.4h.01M194.0 261.7h.01M204.5 261.8h.01M207.4 261.7h.01M210.6 262.0h.01M230.5 261.4h.01M250.9 261.8h.01M261.1 261.7h.01M277.7 261.3h.01M280.5 261.5h.01M287.3 261.4h.01M301.0 261.6h.01M127.8 264.8h.01M131.1 265.0h.01M134.3 264.7h.01M151.1 264.6h.01M177.2 264.9h.01M194.3 264.7h.01M224.0 265.0h.01M247.0 264.6h.01M270.2 265.3h.01M284.3 264.7h.01M287.7 264.8h.01M294.2 264.8h.01M303.8 264.7h.01M97.2 268.5h.01M127.4 268.5h.01M134.2 267.8h.01M143.9 268.0h.01M151.0 267.9h.01M160.7 268.5h.01M167.1 268.2h.01M171.0 268.5h.01M174.4 267.7h.01M184.5 268.5h.01M187.7 267.7h.01M197.3 267.7h.01M200.8 267.8h.01M227.0 267.9h.01M287.4 268.4h.01M94.4 271.8h.01M97.1 271.5h.01M111.1 271.1h.01M114.3 271.6h.01M127.3 271.2h.01M147.3 271.6h.01M163.7 271.5h.01M167.4 271.7h.01M177.0 271.0h.01M180.4 271.1h.01M187.6 271.6h.01M191.1 271.4h.01M200.8 271.6h.01M227.5 271.6h.01M230.5 271.4h.01M233.9 271.0h.01M243.8 271.0h.01M247.2 271.2h.01M267.5 271.1h.01M284.3 271.6h.01M287.5 270.9h.01M290.5 271.2h.01M303.7 271.1h.01M97.3 274.5h.01M111.1 274.6h.01M114.1 274.5h.01M117.7 274.5h.01M130.6 274.6h.01M137.2 274.6h.01M154.5 274.6h.01M157.3 274.3h.01M161.0 274.1h.01M164.3 274.3h.01M167.2 274.6h.01M170.7 274.1h.01M173.8 274.8h.01M213.8 274.2h.01M223.7 274.7h.01M231.0 274.1h.01M234.0 274.9h.01M237.0 274.2h.01M247.6 274.6h.01M277.3 274.5h.01M287.3 274.1h.01M290.6 274.2h.01M100.4 277.8h.01M104.1 277.7h.01M107.8 277.7h.01M127.2 277.8h.01M137.5 277.7h.01M141.2 278.1h.01M144.5 278.2h.01M154.2 277.7h.01M160.5 277.4h.01M170.7 277.4h.01M174.4 278.0h.01M181.1 277.6h.01M187.6 277.6h.01M200.6 277.4h.01M214.0 278.1h.01M217.3 277.5h.01M224.3 277.5h.01M227.7 278.2h.01M257.7 277.6h.01M261.1 277.4h.01M284.4 277.5h.01M300.6 278.1h.01M304.2 277.9h.01M101.2 280.7h.01M104.4 280.9h.01M114.1 280.7h.01M120.6 281.1h.01M137.3 280.8h.01M147.6 281.4h.01M150.9 281.4h.01M174.5 280.8h.01M197.3 280.5h.01M214.2 280.8h.01M230.9 281.2h.01M237.5 280.8h.01M261.0 281.1h.01M270.6 281.2h.01M280.5 281.2h.01M300.7 280.8h.01M94.2 284.3h.01M97.8 284.0h.01M117.7 283.9h.01M137.9 283.7h.01M141.2 284.1h.01M147.5 284.4h.01M151.0 284.3h.01M160.9 284.3h.01M163.9 284.4h.01M167.7 283.9h.01M177.3 283.9h.01M194.1 284.0h.01M210.9 283.8h.01M213.9 283.8h.01M227.8 284.4h.01M234.5 284.2h.01M257.1 284.2h.01M277.1 284.3h.01M296.9 283.7h.01M124.5 287.4h.01M147.1 287.4h.01M150.4 287.5h.01M164.4 287.5h.01M167.3 287.0h.01M177.8 287.0h.01M187.7 287.3h.01M194.2 287.5h.01M214.4 287.3h.01M233.9 287.2h.01M270.9 287.1h.01M277.6 287.6h.01M287.0 287.0h.01M290.7 287.7h.01M293.9 287.5h.01M297.0 287.7h.01M304.2 287.6h.01M100.5 290.9h.01M104.4 290.3h.01M120.5 290.7h.01M137.2 290.4h.01M147.2 290.7h.01M154.0 290.8h.01M164.1 290.2h.01M173.9 290.6h.01M177.4 290.4h.01M204.2 290.9h.01M214.5 290.5h.01M220.9 290.4h.01M234.3 290.3h.01M264.5 290.9h.01M271.1 291.0h.01M277.1 290.5h.01M287.3 290.4h.01M293.8 290.6h.01M297.4 290.5h.01M304.0 290.6h.01M94.5 294.1h.01M113.8 294.0h.01M124.6 294.2h.01M131.2 293.5h.01M144.6 293.8h.01M160.5 293.9h.01M174.0 294.1h.01M204.1 293.4h.01M220.4 293.4h.01M224.0 293.7h.01M240.6 294.2h.01M260.3 294.0h.01M274.1 294.0h.01M287.3 293.5h.01M290.7 293.6h.01M94.2 297.1h.01M100.8 297.2h.01M104.0 297.4h.01M107.4 297.0h.01M123.9 296.8h.01M127.1 296.8h.01M134.5 297.0h.01M137.9 296.8h.01M174.3 296.5h.01M177.8 296.6h.01M184.1 296.8h.01M190.9 296.9h.01M197.1 297.2h.01M204.0 297.1h.01M227.1 296.9h.01M250.9 297.1h.01M257.2 296.8h.01M260.6 296.8h.01M277.8 296.7h.01M284.4 296.7h.01M290.3 297.0h.01M107.6 300.1h.01M110.8 299.9h.01M114.1 300.3h.01M124.2 300.4h.01M134.5 299.9h.01M137.8 300.2h.01M157.3 300.4h.01M160.5 300.3h.01M167.1 300.4h.01M173.9 300.5h.01M177.2 300.6h.01M184.5 300.4h.01M187.6 300.1h.01M220.7 300.5h.01M223.8 300.6h.01M257.4 300.6h.01M260.4 300.3h.01M114.6 303.1h.01M120.8 303.4h.01M130.6 303.3h.01M137.5 303.2h.01M167.6 303.5h.01M171.1 303.3h.01M184.2 303.0h.01M203.7 303.3h.01M207.2 303.7h.01M220.7 303.8h.01M241.2 303.7h.01M257.8 303.2h.01M267.8 303.7h.01M273.6 303.3h.01M277.6 303.1h.01M280.4 303.3h.01M100.5 307.0h.01M117.4 306.2h.01M127.2 306.5h.01M130.9 307.0h.01M137.5 306.8h.01M140.9 306.2h.01M144.0 306.3h.01M170.5 306.9h.01M214.3 306.4h.01M227.1 306.6h.01M247.3 306.6h.01M250.3 306.4h.01M260.7 306.7h.01M274.3 306.6h.01M276.9 306.6h.01M290.5 306.3h.01M296.9 306.4h.01M300.4 306.6h.01" stroke="#00e4a4" stroke-width="3.3" stroke-linecap="round" fill="none"/>
<path d="M100.4 104.8h.01M104.3 104.7h.01M114.3 104.2h.01M120.9 104.3h.01M124.4 105.0h.01M143.7 104.2h.01M147.5 105.0h.01M160.5 104.6h.01M163.7 104.7h.01M174.5 104.6h.01M183.8 105.0h.01M203.9 104.3h.01M210.4 104.4h.01M217.7 104.4h.01M224.4 104.8h.01M240.4 104.4h.01M247.4 104.8h.01M257.2 104.2h.01M271.0 104.7h.01M277.1 104.9h.01M284.3 104.4h.01M300.3 104.5h.01M304.2 104.6h.01M117.9 108.0h.01M124.6 107.4h.01M134.3 107.7h.01M153.8 107.4h.01M157.8 107.7h.01M160.8 108.2h.01M171.0 107.5h.01M194.0 107.6h.01M224.5 107.6h.01M230.4 107.5h.01M247.5 107.5h.01M254.3 107.7h.01M273.6 108.0h.01M283.9 107.8h.01M300.8 107.7h.01M303.6 107.5h.01M97.2 111.2h.01M100.7 111.4h.01M104.0 110.8h.01M107.2 110.7h.01M111.0 111.1h.01M114.0 111.3h.01M130.7 111.1h.01M133.8 111.3h.01M147.1 111.2h.01M154.6 111.3h.01M157.9 111.3h.01M160.4 110.7h.01M164.6 111.3h.01M173.8 111.1h.01M200.8 111.0h.01M211.0 110.8h.01M220.7 110.7h.01M233.7 111.4h.01M237.5 110.9h.01M240.5 110.7h.01M284.0 110.8h.01M290.8 110.8h.01M300.9 111.4h.01M303.8 111.2h.01M97.8 114.5h.01M104.6 114.6h.01M111.1 114.4h.01M117.5 114.1h.01M121.1 114.4h.01M124.2 114.6h.01M130.8 113.9h.01M134.5 113.8h.01M140.5 114.4h.01M147.6 114.3h.01M157.4 114.4h.01M160.5 114.4h.01M164.5 114.5h.01M210.7 113.8h.01M234.1 113.9h.01M237.2 114.6h.01M244.1 113.9h.01M250.3 114.3h.01M253.9 114.4h.01M267.6 113.8h.01M274.0 114.6h.01M294.3 113.9h.01M297.2 114.5h.01M301.1 114.1h.01M304.4 113.8h.01M97.1 117.7h.01M117.9 117.7h.01M120.5 117.8h.01M127.5 117.1h.01M130.7 117.2h.01M154.1 117.6h.01M157.5 117.1h.01M160.6 117.7h.01M177.1 117.4h.01M197.5 117.0h.01M214.2 117.0h.01M220.6 117.6h.01M241.2 117.8h.01M244.1 117.6h.01M247.5 117.3h.01M253.8 117.2h.01M264.0 117.5h.01M267.5 117.0h.01M273.8 117.4h.01M287.7 117.2h.01M291.1 117.3h.01M300.3 117.0h.01M100.6 120.8h.01M133.8 121.0h.01M137.2 120.9h.01M141.1 120.5h.01M144.2 121.1h.01M154.6 120.5h.01M164.3 120.3h.01M180.9 120.2h.01M184.1 120.4h.01M197.2 120.4h.01M200.5 120.3h.01M207.1 120.5h.01M211.1 121.0h.01M220.5 120.6h.01M227.4 120.8h.01M237.1 120.3h.01M247.7 120.8h.01M250.5 120.9h.01M253.7 120.2h.01M280.8 120.8h.01M294.0 120.9h.01M97.3 123.8h.01M104.2 123.8h.01M137.9 123.7h.01M141.2 124.1h.01M147.8 123.8h.01M160.5 123.7h.01M163.7 123.6h.01M167.3 123.5h.01M204.0 124.3h.01M227.1 123.5h.01M237.1 123.5h.01M250.6 123.4h.01M253.7 124.0h.01M270.9 123.4h.01M280.9 123.6h.01M293.9 123.9h.01M300.8 123.9h.01M97.5 126.9h.01M111.2 126.7h.01M120.5 127.5h.01M161.0 127.2h.01M164.5 126.7h.01M170.9 127.1h.01M184.4 126.7h.01M197.4 127.2h.01M213.8 127.3h.01M217.1 126.9h.01M234.0 127.5h.01M237.0 126.8h.01M240.3 127.1h.01M247.0 127.1h.01M254.2 127.1h.01M260.7 126.9h.01M284.1 126.6h.01M287.1 126.8h.01M304.3 127.4h.01M94.2 130.6h.01M97.1 130.5h.01M117.3 130.5h.01M124.1 130.2h.01M127.5 129.9h.01M130.4 130.1h.01M133.9 130.6h.01M137.4 130.6h.01M144.5 130.4h.01M147.4 130.0h.01M160.7 130.3h.01M164.6 130.7h.01M177.7 130.2h.01M217.4 130.2h.01M224.1 130.1h.01M243.6 130.2h.01M251.1 130.2h.01M257.6 130.3h.01M267.3 130.7h.01M270.4 130.0h.01M287.5 130.6h.01M297.1 129.9h.01M300.4 130.5h.01M94.0 133.1h.01M97.9 133.7h.01M100.8 133.9h.01M111.0 133.5h.01M114.2 133.7h.01M130.8 133.8h.01M137.6 133.5h.01M141.2 133.7h.01M154.3 133.9h.01M170.8 133.2h.01M217.2 133.3h.01M220.8 133.5h.01M223.9 133.1h.01M240.8 133.5h.01M243.8 133.5h.01M271.0 133.3h.01M287.4 133.5h.01M297.2 133.6h.01M94.5 136.5h.01M130.8 136.5h.01M137.5 136.9h.01M140.9 136.3h.01M147.7 137.1h.01M160.8 136.6h.01M164.1 136.5h.01M167.2 136.8h.01M190.5 136.6h.01M197.8 136.3h.01M220.8 137.0h.01M224.4 136.3h.01M241.0 136.5h.01M247.8 136.8h.01M254.3 137.1h.01M257.3 136.4h.01M267.6 137.1h.01M270.7 137.0h.01M294.0 136.5h.01M296.9 137.1h.01M110.8 139.8h.01M114.2 140.1h.01M121.1 139.8h.01M124.3 139.8h.01M127.9 140.3h.01M134.0 139.8h.01M154.4 139.8h.01M157.1 140.2h.01M161.1 140.1h.01M167.5 139.7h.01M170.8 139.8h.01M174.6 140.0h.01M187.5 140.1h.01M203.6 140.2h.01M207.4 140.0h.01M214.0 140.3h.01M221.0 139.7h.01M227.3 139.8h.01M231.0 139.5h.01M234.5 140.1h.01M237.5 140.0h.01M240.5 140.1h.01M244.4 139.8h.01M257.5 139.6h.01M267.4 139.7h.01M273.9 140.1h.01M280.3 140.2h.01M284.1 139.9h.01M291.0 139.4h.01M101.2 142.9h.01M104.0 142.7h.01M120.7 143.2h.01M123.9 142.7h.01M127.6 143.3h.01M130.5 142.7h.01M140.5 143.0h.01M151.2 143.3h.01M154.3 143.2h.01M164.4 142.9h.01M167.4 143.2h.01M171.2 142.9h.01M187.5 143.3h.01M197.6 142.8h.01M200.5 142.9h.01M203.9 143.4h.01M213.8 143.0h.01M217.8 142.7h.01M224.4 142.9h.01M227.4 142.7h.01M237.6 142.9h.01M243.7 143.5h.01M250.6 142.7h.01M254.1 143.3h.01M260.9 143.0h.01M274.1 143.0h.01M277.6 143.3h.01M300.9 143.2h.01M94.0 146.0h.01M103.9 146.3h.01M120.8 146.0h.01M130.7 145.9h.01M134.6 145.9h.01M151.1 146.2h.01M154.2 146.6h.01M157.4 146.1h.01M160.4 146.0h.01M167.3 146.1h.01M171.2 146.5h.01M213.7 146.5h.01M237.3 146.4h.01M250.9 146.6h.01M261.1 146.4h.01M263.7 146.0h.01M284.1 146.7h.01M290.7 145.9h.01M293.8 146.4h.01M297.0 146.4h.01M300.5 146.2h.01M97.6 149.9h.01M111.0 149.2h.01M121.3 149.6h.01M147.1 149.7h.01M150.6 149.9h.01M157.6 149.2h.01M164.2 149.2h.01M174.0 149.8h.01M177.1 149.5h.01M187.8 149.4h.01M197.7 149.7h.01M200.5 149.3h.01M203.7 149.3h.01M207.4 149.7h.01M214.5 149.5h.01M237.2 149.4h.01M240.9 149.7h.01M254.2 149.9h.01M264.3 149.1h.01M267.5 149.3h.01M270.9 149.7h.01M284.4 149.3h.01M97.5 153.1h.01M144.6 152.9h.01M150.8 153.0h.01M160.7 152.6h.01M167.4 152.9h.01M173.7 153.1h.01M177.2 153.0h.01M190.3 152.5h.01M194.4 152.9h.01M200.7 152.9h.01M224.1 152.6h.01M230.3 153.1h.01M233.7 152.7h.01M253.9 152.5h.01M257.5 152.8h.01M267.7 152.7h.01M274.2 152.5h.01M280.4 152.5h.01M290.3 153.0h.01M304.2 152.7h.01M97.6 156.3h.01M107.9 155.6h.01M110.9 155.7h.01M121.0 156.0h.01M123.8 156.3h.01M127.1 155.7h.01M144.0 155.9h.01M154.0 156.2h.01M160.9 155.5h.01M174.2 155.8h.01M187.3 155.9h.01M197.1 155.9h.01M200.6 156.3h.01M207.5 155.8h.01M210.8 156.3h.01M234.5 156.1h.01M237.6 156.2h.01M240.9 155.8h.01M244.5 156.3h.01M247.5 155.8h.01M257.5 155.9h.01M280.7 155.8h.01M286.9 156.3h.01M290.3 155.7h.01M300.8 156.3h.01M97.3 158.7h.01M110.9 159.4h.01M117.4 159.4h.01M120.9 159.0h.01M124.2 159.1h.01M131.1 159.2h.01M140.8 159.3h.01M157.1 159.5h.01M161.0 159.4h.01M163.8 159.3h.01M177.4 159.3h.01M180.5 159.5h.01M200.9 158.8h.01M207.0 159.3h.01M214.4 159.2h.01M220.6 158.7h.01M224.3 159.3h.01M230.7 159.5h.01M234.0 158.8h.01M241.1 159.5h.01M247.4 159.1h.01M253.8 159.5h.01M274.4 159.5h.01M284.1 159.5h.01M287.8 159.3h.01M290.5 159.0h.01M297.6 158.9h.01M300.4 159.1h.01M304.4 159.2h.01M93.8 162.3h.01M100.8 162.3h.01M107.5 162.7h.01M117.6 162.2h.01M121.1 162.4h.01M130.5 162.2h.01M137.7 162.3h.01M143.8 162.0h.01M167.9 162.5h.01M170.8 162.5h.01M177.4 162.7h.01M181.2 162.4h.01M197.2 162.4h.01M201.0 161.9h.01M210.8 162.5h.01M213.8 161.9h.01M220.7 162.6h.01M224.3 162.2h.01M227.5 162.0h.01M233.8 162.5h.01M237.1 162.7h.01M264.4 162.8h.01M290.2 162.6h.01M297.7 162.2h.01M300.7 162.0h.01M100.5 165.2h.01M107.4 165.7h.01M143.8 165.9h.01M157.9 165.7h.01M164.1 165.2h.01M167.2 165.9h.01M177.1 165.5h.01M181.1 165.4h.01M183.9 165.1h.01M197.7 165.9h.01M217.8 165.4h.01M220.8 165.3h.01M230.8 165.1h.01M251.1 165.9h.01M254.1 165.8h.01M257.4 165.5h.01M267.7 165.5h.01M271.1 165.4h.01M273.6 165.5h.01M284.2 165.2h.01M287.7 165.6h.01M300.4 165.6h.01M304.2 165.6h.01M100.7 168.6h.01M110.9 168.5h.01M114.6 168.5h.01M117.3 168.5h.01M133.7 168.3h.01M137.8 169.1h.01M147.3 169.1h.01M150.4 169.1h.01M164.5 169.1h.01M167.3 169.0h.01M174.0 169.0h.01M183.8 168.5h.01M187.8 168.5h.01M197.0 168.4h.01M207.8 168.7h.01M214.4 168.9h.01M220.5 168.5h.01M223.8 168.8h.01M231.1 168.6h.01M240.8 168.3h.01M244.0 168.8h.01M247.4 168.5h.01M251.0 169.2h.01M284.1 169.0h.01M291.1 169.2h.01M294.1 168.6h.01M303.9 168.9h.01M100.6 171.7h.01M117.8 172.0h.01M120.9 171.8h.01M134.2 171.6h.01M137.7 171.9h.01M140.9 171.9h.01M144.4 172.1h.01M154.0 171.7h.01M157.1 172.4h.01M164.5 171.5h.01M174.6 171.8h.01M180.3 171.7h.01M184.2 172.3h.01M187.1 171.7h.01M207.0 171.7h.01M210.7 172.0h.01M214.3 172.1h.01M230.7 171.9h.01M237.8 171.8h.01M240.7 172.4h.01M244.3 172.0h.01M247.2 171.6h.01M250.6 171.9h.01M273.9 172.0h.01M284.4 172.1h.01M290.3 172.1h.01M294.2 171.8h.01M104.0 175.0h.01M160.7 175.5h.01M191.1 175.6h.01M197.7 175.3h.01M200.7 175.2h.01M210.9 174.9h.01M213.8 175.5h.01M217.7 175.5h.01M221.0 174.9h.01M224.1 175.4h.01M227.7 174.9h.01M230.7 175.2h.01M233.6 174.9h.01M254.3 175.4h.01M270.3 175.2h.01M287.6 174.9h.01M291.0 175.2h.01M294.2 175.2h.01M297.8 175.3h.01M300.6 175.2h.01M304.1 174.9h.01M97.8 178.8h.01M107.7 178.7h.01M111.1 178.2h.01M124.2 178.7h.01M127.3 178.6h.01M131.1 178.5h.01M137.6 178.4h.01M141.2 178.4h.01M144.0 178.7h.01M191.0 178.3h.01M194.0 178.1h.01M204.1 178.1h.01M207.5 178.2h.01M210.9 178.6h.01M217.0 178.1h.01M220.9 178.6h.01M223.8 178.8h.01M227.8 178.2h.01M230.8 178.5h.01M250.7 178.5h.01M254.1 178.3h.01M257.5 178.3h.01M261.1 178.1h.01M291.0 178.7h.01M293.8 178.0h.01M101.3 181.8h.01M124.5 181.7h.01M127.2 182.0h.01M131.2 181.9h.01M137.6 181.1h.01M144.2 182.0h.01M151.2 181.4h.01M190.9 181.1h.01M197.6 181.2h.01M200.4 181.9h.01M207.1 181.2h.01M224.2 181.1h.01M270.3 181.9h.01M287.4 181.6h.01M290.3 181.6h.01M294.2 181.8h.01M297.6 181.7h.01M104.3 185.0h.01M107.6 184.8h.01M111.2 184.4h.01M114.1 184.5h.01M117.6 184.7h.01M127.7 184.7h.01M133.8 185.0h.01M147.2 185.1h.01M164.4 185.0h.01M167.2 184.7h.01M180.6 184.7h.01M193.8 184.8h.01M200.6 185.1h.01M211.2 184.4h.01M214.4 184.8h.01M224.1 185.2h.01M234.2 185.1h.01M264.5 184.9h.01M273.9 184.4h.01M284.3 184.7h.01M290.7 184.6h.01M297.2 184.8h.01M300.3 184.8h.01M93.9 188.1h.01M107.2 188.3h.01M110.5 188.1h.01M117.6 187.8h.01M123.8 188.1h.01M127.2 187.9h.01M130.5 188.0h.01M140.8 188.3h.01M147.7 188.1h.01M151.2 188.4h.01M161.0 188.0h.01M167.3 187.7h.01M170.9 187.6h.01M174.1 187.8h.01M180.9 188.1h.01M183.7 188.3h.01M187.6 188.3h.01M194.5 188.2h.01M207.2 187.9h.01M211.1 188.2h.01M220.5 188.3h.01M231.1 187.5h.01M241.2 188.3h.01M247.8 188.3h.01M267.7 187.8h.01M270.6 188.0h.01M274.5 187.7h.01M281.1 187.8h.01M284.2 188.3h.01M287.7 188.1h.01M291.0 188.1h.01M303.8 187.7h.01M94.5 190.9h.01M100.7 191.6h.01M103.9 191.2h.01M114.0 191.6h.01M117.4 191.3h.01M143.8 190.9h.01M163.8 191.5h.01M167.8 191.2h.01M180.8 190.8h.01M184.4 191.4h.01M187.3 190.7h.01M191.1 191.5h.01M194.3 190.9h.01M213.8 191.4h.01M217.0 190.9h.01M220.4 191.2h.01M231.1 191.6h.01M260.9 191.3h.01M280.6 191.3h.01M283.8 191.3h.01M294.3 191.3h.01M297.7 191.3h.01M304.1 191.2h.01M100.8 194.2h.01M107.3 194.7h.01M117.1 194.1h.01M140.8 194.2h.01M143.8 194.0h.01M157.5 194.4h.01M164.1 194.7h.01M177.7 194.8h.01M187.6 194.4h.01M190.8 194.7h.01M197.1 194.1h.01M224.0 194.7h.01M230.7 194.2h.01M233.8 194.6h.01M244.3 194.6h.01M267.1 194.3h.01M277.2 194.2h.01M107.2 197.8h.01M124.0 197.5h.01M127.9 197.5h.01M140.7 197.7h.01M147.2 197.9h.01M167.7 198.0h.01M170.7 197.4h.01M183.8 197.3h.01M187.1 197.4h.01M197.3 197.6h.01M207.8 197.9h.01M217.7 197.4h.01M220.4 197.8h.01M224.1 197.6h.01M227.1 197.6h.01M234.4 197.2h.01M244.3 197.5h.01M264.1 198.0h.01M280.5 197.3h.01M284.1 198.0h.01M303.7 197.3h.01M103.9 200.4h.01M107.2 200.3h.01M111.0 200.4h.01M124.0 200.4h.01M127.2 200.5h.01M130.6 200.6h.01M141.0 200.8h.01M144.4 201.0h.01M147.4 200.5h.01M154.0 200.6h.01M161.2 200.8h.01M164.4 201.1h.01M167.2 200.5h.01M177.4 200.7h.01M194.1 201.1h.01M201.2 200.6h.01M203.8 200.6h.01M214.4 201.1h.01M224.5 200.9h.01M227.7 200.5h.01M237.7 200.7h.01M240.9 201.0h.01M244.0 200.8h.01M266.9 200.4h.01M297.1 200.9h.01M303.7 200.6h.01M103.9 203.9h.01M113.9 203.8h.01M117.9 204.1h.01M137.7 203.7h.01M140.8 204.1h.01M147.6 204.4h.01M150.8 203.9h.01M161.1 204.4h.01M173.9 203.8h.01M187.0 203.6h.01M233.8 203.6h.01M244.2 203.7h.01M267.8 204.1h.01M297.8 203.6h.01M97.6 207.4h.01M104.0 206.9h.01M107.9 207.3h.01M124.3 207.6h.01M127.4 207.3h.01M130.8 207.1h.01M134.0 206.8h.01M141.1 207.4h.01M147.2 207.0h.01M151.3 207.3h.01M164.5 207.6h.01M197.5 207.0h.01M217.7 207.4h.01M231.0 206.9h.01M234.1 206.8h.01M237.0 207.6h.01M271.1 207.5h.01M297.2 207.6h.01M304.4 206.9h.01M94.4 210.5h.01M97.1 210.4h.01M130.6 210.4h.01M134.3 210.2h.01M160.8 210.1h.01M173.8 210.6h.01M177.2 210.8h.01M184.3 210.2h.01M187.1 210.4h.01M190.4 210.4h.01M234.0 210.5h.01M237.3 210.6h.01M271.1 210.6h.01M274.0 210.2h.01M277.5 210.3h.01M284.1 210.6h.01M94.3 213.7h.01M97.9 213.9h.01M107.7 213.4h.01M110.5 213.7h.01M124.2 213.5h.01M133.8 213.6h.01M144.4 213.8h.01M153.7 214.0h.01M157.5 213.9h.01M177.3 213.3h.01M187.5 213.2h.01M190.6 213.8h.01M193.8 213.6h.01M197.1 214.0h.01M200.5 214.0h.01M220.6 214.0h.01M243.7 213.6h.01M247.7 213.7h.01M253.9 213.2h.01M260.3 213.2h.01M264.3 214.1h.01M273.9 213.9h.01M110.9 216.8h.01M113.8 216.6h.01M117.5 216.8h.01M131.2 217.2h.01M134.3 216.8h.01M150.7 216.7h.01M167.6 216.9h.01M177.3 216.8h.01M190.4 217.2h.01M194.1 216.8h.01M211.2 216.8h.01M217.2 216.6h.01M220.4 217.3h.01M224.3 216.7h.01M237.8 216.8h.01M247.7 216.6h.01M254.3 217.0h.01M267.2 216.7h.01M280.4 217.0h.01M290.4 216.6h.01M94.5 219.9h.01M104.1 220.2h.01M107.5 219.8h.01M110.7 219.9h.01M114.0 220.3h.01M127.6 219.8h.01M140.4 220.1h.01M187.9 220.2h.01M191.1 219.9h.01M193.7 219.8h.01M214.5 220.1h.01M220.8 220.0h.01M224.5 220.3h.01M253.7 219.8h.01M261.1 220.0h.01M271.1 219.6h.01M283.8 220.0h.01M287.3 219.7h.01M294.2 220.5h.01M97.2 223.4h.01M124.6 222.8h.01M140.6 222.8h.01M143.9 223.6h.01M147.2 223.6h.01M153.7 223.4h.01M161.2 223.0h.01M167.7 223.0h.01M181.2 223.6h.01M214.3 223.5h.01M224.1 223.3h.01M260.7 223.6h.01M264.2 223.6h.01M280.8 222.8h.01M284.1 223.1h.01M294.2 222.9h.01M94.3 226.5h.01M97.6 226.8h.01M107.5 226.7h.01M127.9 226.8h.01M134.3 226.4h.01M137.4 226.3h.01M150.8 226.1h.01M153.9 226.5h.01M157.6 226.6h.01M161.0 226.3h.01M193.8 226.7h.01M200.5 226.9h.01M203.8 226.7h.01M220.6 226.4h.01M231.1 226.5h.01M243.8 226.3h.01M247.8 226.6h.01M257.5 226.1h.01M270.3 226.0h.01M283.9 226.3h.01M287.1 226.7h.01M293.7 226.6h.01M301.1 226.2h.01M117.4 229.7h.01M124.6 229.6h.01M140.9 229.5h.01M144.3 229.9h.01M167.5 229.6h.01M181.2 229.6h.01M194.0 229.3h.01M204.0 229.9h.01M207.5 230.0h.01M214.0 229.9h.01M217.4 229.3h.01M220.5 229.9h.01M223.7 229.4h.01M230.7 229.8h.01M237.0 229.6h.01M241.2 229.7h.01M243.9 229.8h.01M257.5 229.5h.01M260.6 229.9h.01M267.4 230.0h.01M273.6 230.0h.01M287.0 230.0h.01M300.8 230.0h.01M304.0 229.6h.01M94.3 232.6h.01M101.3 232.5h.01M104.3 232.9h.01M110.7 233.0h.01M113.9 232.7h.01M117.6 233.1h.01M121.3 233.2h.01M147.8 233.0h.01M154.4 232.6h.01M160.8 232.9h.01M180.4 232.7h.01M184.4 233.3h.01M187.2 232.6h.01M200.6 233.0h.01M203.7 232.8h.01M220.5 232.8h.01M237.0 233.0h.01M240.5 233.2h.01M244.4 233.1h.01M251.0 232.7h.01M270.3 232.6h.01M273.8 233.0h.01M277.7 233.0h.01M283.7 232.6h.01M287.4 233.1h.01M300.7 232.5h.01M97.9 235.9h.01M104.1 236.3h.01M117.6 236.1h.01M130.6 236.3h.01M137.6 236.5h.01M147.3 235.8h.01M150.5 235.8h.01M157.7 235.6h.01M163.9 235.6h.01M167.8 235.7h.01M170.6 235.9h.01M183.7 235.8h.01M190.4 235.9h.01M211.1 236.3h.01M227.1 235.6h.01M233.9 236.4h.01M244.1 236.5h.01M250.3 235.9h.01M253.9 236.0h.01M266.9 235.9h.01M277.6 236.4h.01M284.1 236.2h.01M287.1 236.4h.01M290.8 236.3h.01M300.5 235.9h.01M94.0 239.6h.01M97.5 239.7h.01M101.0 239.5h.01M104.1 239.7h.01M110.8 239.3h.01M117.4 239.5h.01M120.5 239.0h.01M127.8 238.8h.01M150.9 239.4h.01M170.6 238.9h.01M173.8 239.3h.01M197.8 239.4h.01M221.0 239.7h.01M230.5 239.6h.01M237.7 239.3h.01M247.2 239.0h.01M254.1 238.8h.01M257.1 239.3h.01M277.5 239.5h.01M280.9 239.6h.01M290.5 239.4h.01M97.3 242.3h.01M100.9 242.7h.01M114.4 242.1h.01M120.8 242.3h.01M124.5 242.8h.01M127.2 242.9h.01M131.2 242.4h.01M134.5 242.9h.01M147.1 242.2h.01M157.7 242.3h.01M191.0 242.2h.01M194.0 242.1h.01M204.3 242.5h.01M207.2 242.1h.01M280.5 242.6h.01M287.0 242.8h.01M291.0 242.7h.01M293.7 242.6h.01M297.0 242.6h.01M300.4 242.8h.01M304.3 242.4h.01M97.9 245.8h.01M101.0 245.6h.01M114.1 245.4h.01M120.9 245.7h.01M123.9 246.1h.01M134.5 246.1h.01M164.4 246.1h.01M181.1 246.0h.01M184.0 245.8h.01M193.8 245.7h.01M207.7 245.9h.01M217.2 245.3h.01M224.3 245.9h.01M227.1 246.0h.01M234.1 246.0h.01M237.0 245.4h.01M254.2 245.8h.01M263.8 245.7h.01M267.2 245.3h.01M270.9 245.5h.01M274.4 245.6h.01M277.1 245.9h.01M281.1 245.6h.01M284.2 245.5h.01M287.8 245.5h.01M300.6 245.6h.01M303.7 245.7h.01M114.6 248.8h.01M120.7 249.1h.01M147.7 249.0h.01M154.6 248.9h.01M160.4 248.9h.01M170.5 248.8h.01M173.7 248.5h.01M180.5 248.8h.01M184.5 248.6h.01M187.0 249.1h.01M191.0 248.6h.01M194.5 249.2h.01M200.8 249.1h.01M203.8 249.0h.01M207.3 248.7h.01M214.4 249.1h.01M217.0 248.9h.01M230.5 249.2h.01M240.6 249.2h.01M250.4 248.9h.01M257.1 248.9h.01M266.9 248.5h.01M271.0 249.1h.01M273.7 248.7h.01M277.2 249.3h.01M280.6 249.1h.01M287.1 249.0h.01M94.3 252.1h.01M97.2 251.7h.01M100.8 252.2h.01M120.6 252.2h.01M137.4 251.8h.01M154.4 251.6h.01M187.9 252.0h.01M197.8 252.5h.01M200.3 251.6h.01M203.9 251.8h.01M207.7 252.4h.01M213.8 251.8h.01M220.5 252.5h.01M227.2 251.9h.01M230.6 252.2h.01M244.0 252.3h.01M247.7 252.1h.01M250.6 252.3h.01M270.5 252.1h.01M274.3 251.8h.01M280.6 252.1h.01M290.6 252.1h.01M293.9 252.4h.01M94.0 255.2h.01M107.4 255.7h.01M110.4 255.5h.01M114.6 255.6h.01M120.6 255.7h.01M144.4 255.5h.01M170.9 255.2h.01M174.3 255.2h.01M181.0 255.2h.01M184.3 255.1h.01M197.3 255.1h.01M200.8 255.7h.01M220.4 255.2h.01M224.3 254.9h.01M227.4 254.9h.01M237.2 255.1h.01M243.6 254.8h.01M247.0 255.3h.01M250.7 255.7h.01M273.6 255.6h.01M277.8 255.7h.01M280.6 255.5h.01M290.9 255.3h.01M297.4 255.0h.01M104.3 258.2h.01M110.8 258.9h.01M120.9 258.3h.01M123.9 258.6h.01M130.8 258.3h.01M163.8 258.1h.01M170.8 258.7h.01M184.1 258.5h.01M197.7 258.1h.01M213.9 258.3h.01M220.7 258.2h.01M227.7 258.6h.01M231.1 258.5h.01M247.5 258.2h.01M264.4 258.4h.01M267.0 258.7h.01M277.4 258.3h.01M287.0 258.4h.01M294.1 258.7h.01M297.4 258.5h.01M114.1 261.3h.01M127.7 261.7h.01M130.7 262.1h.01M153.7 262.0h.01M157.4 261.5h.01M160.6 261.5h.01M164.2 261.9h.01M177.0 261.6h.01M200.9 262.0h.01M214.1 261.9h.01M217.7 261.9h.01M224.3 262.1h.01M237.8 261.8h.01M244.4 261.5h.01M264.3 261.3h.01M267.2 261.9h.01M290.5 261.6h.01M293.7 262.0h.01M304.4 261.5h.01M94.2 264.9h.01M97.4 265.4h.01M104.2 264.8h.01M107.8 265.3h.01M123.9 265.2h.01M137.7 265.1h.01M141.3 264.7h.01M164.0 265.1h.01M174.2 265.2h.01M181.0 264.5h.01M184.0 265.0h.01M187.4 264.9h.01M191.1 264.6h.01M197.1 264.9h.01M203.8 264.9h.01M207.1 265.4h.01M230.6 265.2h.01M237.0 264.8h.01M240.8 264.8h.01M250.6 265.4h.01M257.5 265.0h.01M267.6 265.3h.01M273.6 265.0h.01M297.4 264.7h.01M104.5 268.4h.01M113.7 267.8h.01M131.1 267.7h.01M177.9 267.7h.01M181.0 268.1h.01M194.0 267.8h.01M207.2 268.2h.01M214.4 268.5h.01M221.2 268.5h.01M231.1 267.8h.01M237.6 267.8h.01M240.7 268.2h.01M247.0 268.3h.01M251.0 268.1h.01M257.3 267.9h.01M261.0 268.4h.01M264.3 268.1h.01M280.9 267.9h.01M284.5 268.1h.01M300.8 267.7h.01M101.2 271.0h.01M107.9 271.3h.01M117.4 271.1h.01M124.1 271.1h.01M130.5 271.4h.01M133.9 271.1h.01M137.4 271.8h.01M141.0 271.1h.01M144.5 271.7h.01M150.9 271.4h.01M160.8 271.0h.01M184.1 271.1h.01M194.3 271.6h.01M197.6 271.2h.01M213.8 271.0h.01M217.8 271.2h.01M224.2 271.3h.01M251.1 271.4h.01M254.0 271.4h.01M270.3 271.4h.01M273.7 270.9h.01M294.0 271.4h.01M297.1 271.1h.01M93.8 274.8h.01M100.9 274.1h.01M124.4 274.5h.01M147.7 274.8h.01M150.7 274.9h.01M177.4 274.8h.01M180.9 274.1h.01M191.2 274.4h.01M194.2 274.5h.01M197.9 274.3h.01M200.3 274.7h.01M220.4 274.1h.01M227.5 274.4h.01M240.7 274.4h.01M254.0 274.6h.01M264.1 274.8h.01M267.4 274.4h.01M273.7 274.9h.01M283.7 274.3h.01M94.1 277.9h.01M97.8 278.2h.01M131.2 278.1h.01M147.1 278.1h.01M157.2 278.2h.01M183.9 278.0h.01M194.3 277.5h.01M197.4 278.0h.01M204.3 277.9h.01M210.6 277.8h.01M220.6 278.0h.01M230.6 278.0h.01M244.3 278.1h.01M250.9 278.0h.01M270.5 277.4h.01M273.7 278.1h.01M277.6 277.7h.01M287.1 277.7h.01M290.7 277.7h.01M294.2 277.5h.01M297.6 277.6h.01M94.5 280.9h.01M97.4 281.0h.01M111.2 280.9h.01M127.7 281.4h.01M144.1 281.0h.01M154.0 281.0h.01M160.8 280.7h.01M167.7 280.9h.01M177.5 280.9h.01M180.9 281.0h.01M193.9 281.2h.01M200.5 280.8h.01M204.2 281.1h.01M207.7 281.4h.01M210.8 280.5h.01M217.5 280.7h.01M220.7 280.7h.01M224.2 281.4h.01M244.1 281.4h.01M250.6 281.3h.01M257.1 280.7h.01M263.7 281.2h.01M267.7 281.2h.01M273.8 281.3h.01M277.0 280.9h.01M284.3 281.0h.01M287.4 280.8h.01M290.8 280.5h.01M294.2 281.4h.01M297.3 280.9h.01M304.4 280.7h.01M107.1 284.5h.01M111.1 284.2h.01M114.5 284.4h.01M123.8 284.3h.01M130.7 284.0h.01M134.5 284.4h.01M144.4 283.9h.01M157.1 284.4h.01M171.2 284.1h.01M174.4 283.9h.01M180.4 283.8h.01M183.8 284.2h.01M197.4 284.5h.01M204.5 284.1h.01M207.7 283.8h.01M221.0 284.2h.01M237.0 284.3h.01M244.0 283.7h.01M251.0 284.0h.01M253.7 284.0h.01M267.5 284.1h.01M270.3 284.1h.01M273.8 284.4h.01M280.8 284.1h.01M283.6 284.2h.01M287.0 283.9h.01M303.8 284.0h.01M101.0 287.2h.01M107.7 286.9h.01M110.8 287.7h.01M117.9 287.1h.01M137.6 287.6h.01M140.6 287.6h.01M144.2 287.5h.01M157.4 287.5h.01M174.3 287.5h.01M184.0 287.1h.01M197.1 287.2h.01M200.6 287.4h.01M207.3 287.7h.01M210.3 287.6h.01M224.4 287.5h.01M237.3 287.0h.01M244.2 287.2h.01M247.2 287.1h.01M250.5 287.1h.01M257.4 287.2h.01M261.1 287.5h.01M274.0 287.7h.01M301.0 287.2h.01M97.1 290.4h.01M107.7 290.6h.01M117.3 290.4h.01M133.7 290.8h.01M140.8 290.3h.01M144.2 290.5h.01M150.9 291.0h.01M180.7 290.4h.01M201.0 290.9h.01M207.6 290.5h.01M210.6 290.9h.01M217.8 290.8h.01M240.3 290.5h.01M243.8 290.9h.01M256.9 290.6h.01M267.7 290.3h.01M274.2 290.9h.01M290.4 290.5h.01M97.6 294.0h.01M100.7 293.5h.01M104.0 293.4h.01M107.8 294.1h.01M111.0 293.5h.01M117.6 293.5h.01M121.3 294.0h.01M127.8 294.2h.01M137.6 293.5h.01M140.6 294.0h.01M147.9 294.1h.01M154.0 293.9h.01M157.8 294.1h.01M170.5 293.9h.01M184.1 293.8h.01M187.8 293.3h.01M190.5 293.5h.01M194.0 294.1h.01M207.3 293.3h.01M217.7 293.4h.01M227.8 294.0h.01M230.5 293.4h.01M234.1 294.1h.01M237.1 294.0h.01M244.5 293.5h.01M247.7 293.9h.01M266.9 293.8h.01M277.6 294.2h.01M280.3 293.5h.01M110.8 296.8h.01M130.6 296.8h.01M140.4 297.2h.01M144.4 297.3h.01M147.4 297.3h.01M160.7 297.0h.01M164.2 297.3h.01M170.7 296.7h.01M194.5 296.8h.01M201.0 297.2h.01M207.2 296.8h.01M211.2 297.3h.01M214.5 297.0h.01M220.7 297.4h.01M234.4 297.3h.01M237.2 297.2h.01M240.4 296.9h.01M243.6 296.9h.01M247.1 296.9h.01M254.4 297.4h.01M264.3 297.2h.01M267.5 297.1h.01M270.5 296.8h.01M293.8 297.1h.01M301.0 297.3h.01M304.2 297.2h.01M94.5 300.5h.01M97.5 300.6h.01M101.3 299.9h.01M120.5 299.9h.01M130.6 300.0h.01M140.4 300.2h.01M144.2 299.8h.01M147.4 300.2h.01M154.0 300.5h.01M170.5 300.6h.01M180.8 299.9h.01M190.5 300.3h.01M197.6 299.8h.01M217.1 299.9h.01M227.6 300.5h.01M240.4 300.0h.01M247.0 300.5h.01M251.0 299.8h.01M253.8 299.7h.01M264.0 300.4h.01M267.4 300.4h.01M270.3 300.6h.01M284.4 300.3h.01M300.3 300.0h.01M304.3 300.2h.01M94.1 303.7h.01M100.5 303.2h.01M103.8 303.7h.01M107.7 303.2h.01M111.0 303.7h.01M117.5 303.5h.01M124.1 303.3h.01M144.0 303.8h.01M153.8 303.0h.01M157.1 303.2h.01M160.7 303.8h.01M164.5 303.4h.01M180.7 303.2h.01M191.0 303.7h.01M197.0 303.8h.01M200.9 303.7h.01M211.0 303.1h.01M214.5 303.1h.01M233.6 303.2h.01M247.5 303.7h.01M251.0 303.8h.01M254.4 303.3h.01M270.5 303.4h.01M283.9 303.2h.01M300.7 303.3h.01M304.3 303.3h.01M94.1 306.7h.01M104.5 306.3h.01M107.3 306.7h.01M110.9 306.5h.01M134.3 306.9h.01M157.1 306.5h.01M160.6 306.3h.01M164.3 306.5h.01M167.0 307.0h.01M174.6 306.6h.01M180.5 306.9h.01M187.2 306.2h.01M191.0 306.7h.01M194.0 306.7h.01M197.4 306.4h.01M200.8 306.2h.01M204.3 307.0h.01M207.1 306.5h.01M210.8 306.8h.01M217.6 306.5h.01M224.1 307.0h.01M230.6 306.2h.01M237.1 306.3h.01M257.6 306.7h.01M267.6 306.4h.01M270.5 306.6h.01M281.0 306.3h.01M284.1 306.4h.01M287.4 306.8h.01M304.3 306.7h.01" stroke="#a2e400" stroke-width="3.3" stroke-linecap="round" fill="none"/>
<path d="M141.2 104.8h.01M157.2 104.4h.01M167.6 105.0h.01M177.8 104.6h.01M194.3 104.8h.01M200.7 104.8h.01M207.4 104.7h.01M220.4 104.6h.01M250.7 104.5h.01M287.3 104.5h.01M290.3 104.9h.01M294.2 104.6h.01M297.4 104.9h.01M140.8 108.1h.01M167.1 107.9h.01M174.4 108.2h.01M177.7 108.1h.01M187.7 107.9h.01M190.9 107.5h.01M227.4 107.8h.01M241.1 107.5h.01M257.3 107.7h.01M127.4 111.4h.01M143.9 110.8h.01M167.6 111.1h.01M177.3 110.7h.01M194.2 111.1h.01M227.3 111.1h.01M230.7 111.0h.01M247.3 111.1h.01M273.6 111.4h.01M114.5 114.5h.01M144.3 114.1h.01M154.2 114.2h.01M167.5 114.1h.01M260.8 113.9h.01M270.6 114.0h.01M277.4 114.4h.01M94.6 117.2h.01M110.8 117.3h.01M114.4 117.4h.01M124.5 117.5h.01M147.5 117.5h.01M150.6 117.6h.01M174.1 117.6h.01M201.2 117.5h.01M227.0 117.7h.01M234.2 117.4h.01M281.0 117.0h.01M284.3 117.7h.01M303.8 117.1h.01M151.2 120.4h.01M167.9 120.8h.01M233.9 120.3h.01M261.1 120.9h.01M267.5 120.3h.01M287.7 120.9h.01M300.7 120.4h.01M120.7 123.8h.01M131.0 124.2h.01M133.9 124.0h.01M157.8 124.1h.01M180.6 123.4h.01M207.1 123.9h.01M243.7 124.1h.01M247.4 124.1h.01M260.4 123.6h.01M287.5 123.4h.01M297.5 124.2h.01M127.4 126.7h.01M157.3 127.0h.01M180.4 127.1h.01M187.8 127.4h.01M204.5 127.0h.01M267.3 127.5h.01M297.0 127.4h.01M101.0 130.5h.01M107.5 130.3h.01M111.0 130.0h.01M140.9 130.6h.01M171.2 130.3h.01M187.5 129.9h.01M207.2 130.4h.01M214.3 130.3h.01M234.3 130.2h.01M260.4 130.6h.01M274.3 130.1h.01M277.7 129.8h.01M173.9 133.8h.01M184.1 133.4h.01M191.1 133.3h.01M194.3 133.2h.01M207.3 133.7h.01M211.1 133.1h.01M251.1 133.8h.01M257.4 133.5h.01M264.4 133.6h.01M274.4 133.7h.01M301.0 133.3h.01M304.0 133.4h.01M97.3 136.6h.01M117.9 136.7h.01M120.8 136.2h.01M173.9 137.1h.01M184.5 137.1h.01M207.4 136.5h.01M217.5 136.3h.01M250.6 136.5h.01M261.2 136.6h.01M264.0 136.5h.01M273.9 136.6h.01M284.3 137.0h.01M100.5 140.2h.01M117.7 139.7h.01M131.1 139.8h.01M137.6 139.5h.01M147.5 140.3h.01M151.0 140.1h.01M163.9 139.9h.01M177.9 140.2h.01M184.0 140.0h.01M211.1 140.2h.01M264.1 139.6h.01M277.6 139.8h.01M157.5 143.2h.01M177.2 142.9h.01M210.7 143.0h.01M220.7 142.8h.01M247.6 143.1h.01M270.5 143.1h.01M281.0 142.9h.01M284.0 143.1h.01M97.7 146.0h.01M100.4 146.0h.01M107.5 146.3h.01M124.1 146.0h.01M207.3 146.5h.01M211.0 146.4h.01M217.7 146.0h.01M234.0 146.0h.01M241.1 146.6h.01M254.3 146.4h.01M257.7 145.9h.01M267.5 146.1h.01M271.1 146.1h.01M281.0 146.5h.01M304.3 146.6h.01M101.2 149.6h.01M107.1 149.1h.01M117.2 149.9h.01M124.6 149.8h.01M127.5 149.8h.01M131.2 149.7h.01M137.7 149.4h.01M143.8 149.5h.01M153.8 149.6h.01M193.7 149.1h.01M217.0 149.2h.01M224.4 149.1h.01M257.0 149.7h.01M293.8 149.9h.01M303.9 149.5h.01M94.3 153.0h.01M107.3 152.3h.01M141.2 152.6h.01M147.3 152.5h.01M243.9 152.3h.01M263.9 152.9h.01M297.3 152.6h.01M94.5 156.2h.01M104.2 155.5h.01M137.1 156.0h.01M140.9 155.7h.01M157.4 155.8h.01M164.3 156.1h.01M167.1 155.8h.01M220.4 156.2h.01M224.2 156.0h.01M254.4 156.2h.01M93.8 158.9h.01M104.4 159.4h.01M107.8 158.7h.01M184.0 159.5h.01M187.1 158.8h.01M190.9 158.9h.01M194.1 158.8h.01M237.8 159.3h.01M257.1 158.9h.01M277.1 158.7h.01M124.4 162.4h.01M154.6 162.6h.01M157.4 162.2h.01M160.7 162.6h.01M164.1 162.5h.01M187.5 162.7h.01M190.5 162.6h.01M193.9 162.5h.01M273.7 162.1h.01M104.3 165.6h.01M110.6 165.6h.01M117.8 165.2h.01M124.1 165.5h.01M161.1 165.5h.01M224.0 165.6h.01M227.2 165.6h.01M237.1 165.6h.01M260.4 165.5h.01M264.2 165.8h.01M277.4 165.8h.01M297.7 165.1h.01M94.6 168.5h.01M104.1 169.1h.01M107.3 168.9h.01M124.1 168.4h.01M130.9 168.9h.01M157.9 168.9h.01M177.5 169.1h.01M180.7 168.7h.01M191.1 169.0h.01M227.2 168.5h.01M267.1 168.7h.01M273.9 168.3h.01M280.3 168.7h.01M287.2 168.8h.01M94.1 171.7h.01M147.1 172.0h.01M200.9 171.5h.01M260.3 172.1h.01M267.1 171.5h.01M280.3 171.9h.01M300.9 172.2h.01M107.5 174.7h.01M114.0 174.7h.01M117.6 175.5h.01M121.0 175.5h.01M127.1 175.0h.01M133.9 174.8h.01M140.6 175.1h.01M167.8 175.1h.01M187.2 174.8h.01M244.1 175.0h.01M264.4 175.1h.01M267.6 175.4h.01M280.5 175.4h.01M284.1 175.0h.01M134.2 178.1h.01M200.9 178.0h.01M237.6 178.3h.01M267.5 178.2h.01M283.7 178.6h.01M287.4 178.8h.01M110.7 181.3h.01M167.7 181.3h.01M184.1 181.9h.01M237.5 181.8h.01M253.6 181.8h.01M304.0 181.1h.01M124.0 185.1h.01M157.2 184.9h.01M187.0 184.9h.01M190.4 184.5h.01M197.9 185.2h.01M227.4 185.1h.01M237.2 184.7h.01M247.5 184.7h.01M261.0 185.0h.01M277.1 184.6h.01M304.3 184.8h.01M97.2 187.6h.01M137.3 187.6h.01M154.4 188.2h.01M157.2 187.8h.01M164.5 188.2h.01M177.4 188.1h.01M190.9 188.1h.01M213.8 187.7h.01M301.1 187.6h.01M120.4 191.6h.01M137.6 191.0h.01M173.9 191.6h.01M177.3 191.0h.01M197.8 191.3h.01M200.3 191.6h.01M264.2 191.4h.01M267.1 191.2h.01M277.6 190.9h.01M171.1 194.4h.01M184.1 194.7h.01M204.1 194.6h.01M221.2 194.4h.01M237.3 194.5h.01M250.4 194.4h.01M260.4 194.0h.01M264.3 193.9h.01M270.9 194.6h.01M283.7 194.8h.01M287.4 194.4h.01M300.3 194.4h.01M303.8 194.4h.01M94.4 197.3h.01M97.2 197.6h.01M104.1 197.3h.01M111.0 197.8h.01M114.3 197.6h.01M134.3 197.4h.01M144.1 197.9h.01M180.7 198.0h.01M194.1 197.2h.01M240.7 197.4h.01M250.4 197.1h.01M253.6 197.5h.01M270.9 197.5h.01M287.1 198.0h.01M293.7 197.8h.01M300.4 197.3h.01M94.1 200.6h.01M100.7 200.7h.01M150.4 201.0h.01M157.1 200.5h.01M171.1 200.6h.01M174.2 201.2h.01M190.3 201.2h.01M207.9 201.2h.01M217.8 200.7h.01M251.2 200.7h.01M257.7 200.6h.01M264.3 201.0h.01M274.3 200.7h.01M283.8 200.7h.01M93.8 203.7h.01M127.1 204.1h.01M144.3 203.8h.01M157.6 204.4h.01M170.7 204.4h.01M184.4 203.6h.01M190.6 203.8h.01M197.8 204.0h.01M200.7 203.9h.01M207.8 204.4h.01M211.1 203.6h.01M217.1 203.6h.01M237.8 204.3h.01M247.3 203.7h.01M254.1 204.3h.01M256.9 203.9h.01M263.7 203.8h.01M277.8 203.6h.01M283.8 204.1h.01M287.7 203.7h.01M303.7 204.1h.01M144.1 207.1h.01M167.3 207.2h.01M170.5 207.6h.01M173.8 207.2h.01M180.7 206.8h.01M183.8 207.2h.01M187.4 207.0h.01M194.0 206.8h.01M210.9 207.5h.01M214.2 207.0h.01M257.6 207.3h.01M277.3 207.3h.01M103.8 210.5h.01M107.6 210.1h.01M114.3 210.2h.01M124.2 210.3h.01M144.4 210.2h.01M147.3 210.6h.01M164.4 210.8h.01M167.7 210.3h.01M194.4 210.5h.01M207.4 210.4h.01M214.0 210.4h.01M217.1 210.2h.01M257.4 210.2h.01M293.7 210.8h.01M104.5 213.7h.01M141.0 213.6h.01M164.5 213.2h.01M174.4 213.6h.01M207.2 213.8h.01M217.1 213.3h.01M237.5 214.1h.01M267.5 213.9h.01M93.8 216.7h.01M100.8 216.5h.01M104.0 217.2h.01M120.9 216.4h.01M164.5 216.5h.01M213.9 216.7h.01M227.1 217.3h.01M240.7 216.4h.01M257.8 216.9h.01M263.8 216.5h.01M287.2 216.5h.01M124.6 220.1h.01M134.6 219.6h.01M154.4 219.6h.01M163.8 220.1h.01M167.3 220.4h.01M207.0 220.0h.01M210.6 220.4h.01M227.5 220.5h.01M230.4 220.3h.01M234.1 219.9h.01M244.4 220.5h.01M257.8 220.3h.01M264.0 219.6h.01M274.2 219.6h.01M277.8 219.8h.01M300.7 219.7h.01M304.2 220.2h.01M93.8 223.1h.01M127.7 223.3h.01M131.2 223.2h.01M133.9 223.6h.01M150.5 223.6h.01M164.6 223.3h.01M187.1 223.5h.01M201.0 223.4h.01M207.1 223.0h.01M210.7 223.0h.01M220.8 223.1h.01M227.1 223.5h.01M233.7 223.0h.01M237.6 223.5h.01M250.6 223.5h.01M301.1 223.6h.01M111.2 226.5h.01M121.1 226.6h.01M140.6 226.1h.01M147.4 226.7h.01M164.4 226.5h.01M207.5 226.8h.01M217.0 226.8h.01M233.7 226.4h.01M237.1 226.4h.01M250.4 226.5h.01M253.8 226.1h.01M260.4 226.6h.01M280.4 226.0h.01M114.4 229.4h.01M133.8 229.7h.01M150.7 229.7h.01M154.5 229.7h.01M177.4 229.6h.01M187.4 229.2h.01M254.4 229.4h.01M277.7 229.6h.01M280.7 230.1h.01M294.2 229.9h.01M297.5 229.3h.01M107.1 232.5h.01M141.0 233.3h.01M157.4 233.3h.01M167.4 233.2h.01M197.1 232.9h.01M214.4 233.0h.01M227.0 232.4h.01M230.5 233.3h.01M234.4 232.7h.01M257.6 232.8h.01M261.1 233.1h.01M264.0 233.0h.01M293.9 232.7h.01M107.7 236.0h.01M111.0 236.2h.01M140.9 236.5h.01M143.9 235.8h.01M161.0 236.2h.01M193.7 235.9h.01M197.8 235.8h.01M213.7 236.5h.01M247.4 236.2h.01M257.4 235.7h.01M260.9 235.7h.01M263.8 236.1h.01M294.4 236.2h.01M157.3 238.8h.01M181.1 238.9h.01M184.0 239.1h.01M204.4 239.7h.01M207.2 239.6h.01M213.7 239.0h.01M234.1 239.3h.01M283.9 239.5h.01M287.4 239.7h.01M140.9 242.7h.01M174.1 242.4h.01M180.6 242.6h.01M197.7 242.2h.01M214.1 242.7h.01M223.8 242.6h.01M234.4 242.1h.01M237.5 242.4h.01M240.3 242.2h.01M260.5 242.5h.01M267.0 242.4h.01M271.0 242.4h.01M273.6 242.2h.01M284.2 242.1h.01M110.5 245.8h.01M127.7 246.0h.01M130.7 246.0h.01M140.4 245.3h.01M147.5 245.5h.01M151.0 245.3h.01M154.3 246.1h.01M177.7 246.1h.01M240.8 245.8h.01M244.0 245.3h.01M94.3 248.5h.01M97.9 248.7h.01M110.9 248.5h.01M117.4 249.2h.01M124.1 248.5h.01M130.6 249.3h.01M140.6 248.6h.01M227.2 248.9h.01M237.2 249.1h.01M243.9 248.5h.01M264.2 248.6h.01M104.1 252.1h.01M144.4 252.1h.01M161.0 252.5h.01M163.7 252.0h.01M174.5 252.0h.01M177.6 252.4h.01M194.2 251.7h.01M257.2 252.5h.01M260.7 252.4h.01M264.2 252.1h.01M117.6 255.0h.01M147.0 255.6h.01M161.2 254.9h.01M187.4 255.0h.01M230.5 255.3h.01M261.1 255.5h.01M263.8 255.2h.01M300.6 255.7h.01M304.0 255.7h.01M141.2 258.1h.01M143.9 258.5h.01M161.0 258.4h.01M254.1 258.1h.01M290.6 258.6h.01M97.4 262.0h.01M100.9 262.1h.01M111.3 261.7h.01M117.4 262.1h.01M120.8 262.0h.01M137.1 261.8h.01M141.0 261.4h.01M144.0 261.7h.01M197.6 261.7h.01M234.4 261.8h.01M247.1 261.7h.01M253.6 262.0h.01M257.5 261.6h.01M274.2 261.3h.01M296.9 261.4h.01M110.4 265.0h.01M114.4 264.9h.01M117.4 265.1h.01M144.1 265.2h.01M147.3 265.2h.01M157.3 264.8h.01M161.1 265.0h.01M227.3 265.1h.01M234.5 265.2h.01M243.8 265.0h.01M253.9 265.3h.01M290.7 264.9h.01M300.5 264.6h.01M94.4 267.8h.01M101.0 267.8h.01M107.6 268.5h.01M110.9 267.8h.01M121.1 267.7h.01M123.8 267.8h.01M140.6 267.9h.01M147.6 268.2h.01M153.7 268.2h.01M157.3 267.9h.01M190.9 267.8h.01M203.9 268.4h.01M234.4 267.9h.01M244.1 268.5h.01M253.8 268.4h.01M290.5 268.5h.01M293.8 267.7h.01M297.1 268.0h.01M304.4 268.4h.01M157.6 271.7h.01M171.2 271.1h.01M203.9 271.2h.01M207.0 271.4h.01M210.4 271.3h.01M241.1 271.3h.01M277.8 271.5h.01M281.1 271.2h.01M300.2 271.2h.01M107.3 274.7h.01M133.8 274.4h.01M184.0 274.6h.01M204.3 274.8h.01M217.0 274.5h.01M243.7 274.8h.01M257.2 274.8h.01M280.7 274.8h.01M293.7 274.4h.01M297.7 274.6h.01M300.5 274.7h.01M304.0 274.1h.01M110.9 278.0h.01M124.4 277.9h.01M134.1 277.6h.01M150.7 277.5h.01M177.2 277.9h.01M190.3 277.6h.01M234.2 277.8h.01M237.2 277.3h.01M241.1 277.6h.01M247.7 278.0h.01M254.4 278.1h.01M263.8 278.1h.01M267.4 278.2h.01M280.8 277.3h.01M117.2 280.8h.01M124.2 281.2h.01M130.9 281.1h.01M184.1 280.6h.01M187.0 281.1h.01M227.3 281.0h.01M240.7 281.1h.01M247.3 280.7h.01M254.4 280.6h.01M100.5 284.3h.01M103.9 284.4h.01M120.5 283.8h.01M153.8 284.5h.01M200.7 284.2h.01M217.8 284.5h.01M230.3 284.6h.01M240.8 283.7h.01M247.0 284.3h.01M291.1 283.9h.01M301.0 284.5h.01M94.1 287.5h.01M97.4 287.3h.01M103.9 287.5h.01M114.3 287.5h.01M154.4 287.3h.01M160.9 287.8h.01M171.0 287.1h.01M190.8 287.0h.01M203.7 287.8h.01M217.3 287.5h.01M220.6 287.1h.01M227.4 287.3h.01M240.7 287.0h.01M254.4 287.3h.01M266.9 287.8h.01M94.1 290.9h.01M157.6 290.6h.01M190.5 290.8h.01M194.4 290.9h.01M223.9 290.4h.01M227.6 290.5h.01M247.4 290.6h.01M280.3 290.5h.01M134.0 293.8h.01M257.4 293.8h.01M263.7 294.1h.01M293.6 294.1h.01M297.3 294.1h.01M97.1 296.9h.01M113.8 296.6h.01M150.5 297.2h.01M157.6 296.9h.01M180.5 297.2h.01M187.4 297.4h.01M224.3 297.4h.01M231.1 297.4h.01M274.3 296.6h.01M297.5 297.3h.01M117.7 300.4h.01M127.3 300.4h.01M150.8 300.6h.01M200.7 300.0h.01M204.1 300.3h.01M207.5 299.7h.01M214.0 300.0h.01M231.1 300.4h.01M237.5 300.1h.01M274.3 299.8h.01M276.9 300.5h.01M287.4 299.8h.01M290.7 300.1h.01M294.0 300.0h.01M297.7 300.1h.01M141.2 303.0h.01M147.7 303.2h.01M151.0 303.4h.01M217.1 303.4h.01M237.0 303.3h.01M287.2 303.0h.01M294.1 303.2h.01M297.7 303.6h.01M97.1 306.6h.01M120.5 306.4h.01M150.8 306.3h.01M184.3 306.3h.01M221.0 306.6h.01M234.3 306.3h.01M241.0 306.8h.01M254.5 306.4h.01M264.2 306.7h.01" stroke="#ec9400" stroke-width="3.3" stroke-linecap="round" fill="none"/>
<path d="M197.4 104.4h.01M211.2 107.7h.01M237.3 107.4h.01M264.4 107.5h.01M287.2 108.0h.01M290.6 108.0h.01M150.8 111.4h.01M170.7 110.9h.01M204.4 110.7h.01M263.7 111.2h.01M270.8 111.0h.01M287.3 110.6h.01M170.4 113.9h.01M181.0 114.5h.01M240.7 114.0h.01M257.5 114.6h.01M287.3 114.2h.01M167.5 117.6h.01M170.6 117.4h.01M203.7 117.4h.01M270.6 117.8h.01M277.0 117.2h.01M107.1 120.9h.01M130.4 120.6h.01M177.7 120.9h.01M187.5 120.5h.01M190.7 120.7h.01M204.4 121.0h.01M273.8 120.6h.01M100.9 123.9h.01M117.3 123.7h.01M124.0 124.3h.01M174.3 123.8h.01M177.2 124.0h.01M197.6 123.9h.01M217.6 123.5h.01M220.5 123.4h.01M224.1 123.5h.01M274.0 123.6h.01M107.9 127.0h.01M130.9 127.0h.01M134.5 127.2h.01M144.6 127.1h.01M147.6 126.8h.01M154.3 127.2h.01M274.3 127.3h.01M154.4 129.8h.01M200.7 129.9h.01M204.2 130.0h.01M211.1 129.8h.01M247.3 130.7h.01M127.2 133.7h.01M144.0 133.1h.01M163.8 133.7h.01M201.0 133.3h.01M237.1 133.0h.01M246.9 133.0h.01M261.0 133.6h.01M104.6 136.7h.01M127.6 136.4h.01M153.9 136.8h.01M170.9 136.3h.01M227.1 137.0h.01M243.6 136.9h.01M277.6 137.1h.01M143.8 140.2h.01M197.4 140.0h.01M250.5 140.2h.01M107.2 142.9h.01M113.9 142.9h.01M143.8 142.7h.01M190.4 143.1h.01M193.8 143.2h.01M230.9 143.1h.01M234.3 143.3h.01M240.5 143.2h.01M287.4 142.6h.01M297.4 143.3h.01M304.4 142.7h.01M117.1 146.0h.01M137.6 146.5h.01M140.8 146.6h.01M220.4 145.9h.01M243.9 145.9h.01M114.4 149.7h.01M160.9 149.5h.01M210.8 149.8h.01M220.9 149.2h.01M244.2 149.2h.01M247.4 149.9h.01M287.5 149.8h.01M130.9 152.6h.01M164.0 152.9h.01M180.7 152.4h.01M210.7 152.9h.01M214.1 152.3h.01M284.2 152.9h.01M184.3 156.4h.01M194.0 156.1h.01M204.0 156.3h.01M217.5 156.0h.01M261.0 155.5h.01M273.9 155.6h.01M137.7 158.8h.01M197.6 159.3h.01M217.7 159.1h.01M264.2 158.9h.01M267.3 159.1h.01M270.5 159.4h.01M293.6 159.0h.01M247.6 162.4h.01M250.6 162.5h.01M261.1 162.3h.01M270.5 162.3h.01M174.4 165.9h.01M204.2 165.3h.01M207.1 165.7h.01M121.0 168.9h.01M171.2 168.5h.01M254.3 169.1h.01M97.2 172.0h.01M130.4 171.9h.01M167.4 171.9h.01M194.0 171.5h.01M197.0 171.7h.01M220.9 171.9h.01M257.4 172.0h.01M303.9 172.3h.01M94.1 174.7h.01M97.3 175.5h.01M130.9 175.1h.01M164.6 175.6h.01M170.9 175.5h.01M174.1 175.5h.01M180.7 175.3h.01M277.2 175.0h.01M150.9 178.0h.01M170.7 178.1h.01M184.6 178.2h.01M280.7 178.3h.01M103.9 181.7h.01M134.0 181.8h.01M154.5 181.1h.01M180.6 181.4h.01M210.6 181.6h.01M214.2 181.4h.01M244.0 181.6h.01M247.3 181.4h.01M144.5 184.3h.01M177.9 184.4h.01M220.7 185.0h.01M241.0 184.5h.01M243.9 185.1h.01M103.9 187.8h.01M227.3 187.6h.01M244.0 188.3h.01M254.1 188.2h.01M257.5 188.4h.01M147.1 190.9h.01M170.5 190.8h.01M227.4 191.4h.01M241.1 191.0h.01M254.3 190.8h.01M93.9 194.1h.01M130.4 193.9h.01M134.5 194.3h.01M137.4 194.6h.01M160.6 194.0h.01M227.3 194.1h.01M240.5 194.0h.01M254.3 194.6h.01M257.5 194.5h.01M297.1 194.2h.01M190.7 197.5h.01M204.5 197.7h.01M210.8 197.2h.01M230.8 197.8h.01M247.0 197.6h.01M260.4 197.9h.01M97.7 200.6h.01M181.2 201.1h.01M210.6 200.8h.01M260.7 200.6h.01M154.3 204.3h.01M203.7 204.0h.01M260.3 204.0h.01M114.4 206.9h.01M154.1 207.2h.01M190.4 207.0h.01M223.7 207.6h.01M100.5 210.9h.01M117.2 210.3h.01M120.4 210.1h.01M140.7 210.3h.01M157.3 210.2h.01M304.2 210.3h.01M210.4 214.0h.01M214.3 213.2h.01M233.7 214.0h.01M280.7 213.4h.01M283.8 213.8h.01M287.6 214.1h.01M294.0 213.7h.01M97.5 216.4h.01M180.9 217.2h.01M184.3 217.0h.01M207.2 216.6h.01M283.7 217.2h.01M97.2 219.7h.01M101.1 220.5h.01M143.8 220.3h.01M180.8 220.0h.01M114.5 222.9h.01M157.5 223.3h.01M174.1 223.0h.01M240.8 223.6h.01M273.8 223.5h.01M287.1 223.4h.01M103.9 226.5h.01M113.8 226.5h.01M174.5 226.7h.01M211.0 226.1h.01M224.1 226.5h.01M273.6 226.6h.01M304.0 226.6h.01M94.6 229.7h.01M101.0 229.7h.01M107.1 229.7h.01M160.5 229.3h.01M163.7 229.7h.01M247.8 229.6h.01M270.4 229.6h.01M283.9 229.5h.01M97.3 233.0h.01M143.9 232.9h.01M164.2 233.2h.01M247.6 233.1h.01M290.6 233.0h.01M100.4 236.2h.01M114.0 235.8h.01M154.1 236.3h.01M203.7 236.3h.01M207.5 235.6h.01M217.5 236.2h.01M113.9 239.1h.01M124.3 239.2h.01M154.3 239.1h.01M177.3 238.9h.01M294.3 239.5h.01M110.9 242.9h.01M201.1 242.7h.01M253.7 242.1h.01M277.1 242.3h.01M117.9 245.5h.01M187.1 245.5h.01M191.2 246.1h.01M204.4 245.6h.01M211.2 245.7h.01M260.5 245.7h.01M164.0 249.3h.01M167.5 249.3h.01M260.7 248.9h.01M107.6 252.3h.01M111.0 252.0h.01M131.0 251.7h.01M134.4 251.9h.01M157.4 251.7h.01M210.8 252.5h.01M127.4 255.4h.01M130.7 255.0h.01M193.7 255.1h.01M207.1 254.9h.01M211.1 255.5h.01M214.3 255.7h.01M100.8 258.2h.01M114.3 258.5h.01M127.9 258.8h.01M187.2 258.9h.01M234.1 258.7h.01M104.6 261.6h.01M107.3 261.6h.01M221.1 261.7h.01M227.4 262.0h.01M240.5 261.4h.01M154.3 264.7h.01M167.7 264.6h.01M171.1 264.9h.01M210.5 264.9h.01M214.2 265.1h.01M217.1 265.2h.01M220.6 264.5h.01M261.1 265.0h.01M264.3 264.9h.01M277.0 265.1h.01M280.6 264.6h.01M117.5 268.2h.01M137.2 268.0h.01M164.2 268.3h.01M211.1 268.2h.01M217.2 267.8h.01M223.9 268.5h.01M266.9 267.7h.01M270.7 267.7h.01M277.6 267.7h.01M104.1 271.1h.01M154.5 271.5h.01M173.9 271.4h.01M237.1 271.6h.01M104.2 274.8h.01M127.2 274.2h.01M187.2 274.2h.01M207.1 274.2h.01M210.7 274.3h.01M250.6 274.6h.01M260.7 274.3h.01M270.7 274.7h.01M164.0 278.0h.01M167.7 277.7h.01M207.5 278.1h.01M107.9 281.1h.01M134.2 280.9h.01M157.5 280.9h.01M164.6 280.6h.01M170.7 280.8h.01M190.3 281.0h.01M233.9 280.7h.01M187.4 283.8h.01M191.1 284.3h.01M223.7 284.2h.01M260.5 284.5h.01M263.6 283.9h.01M294.4 283.8h.01M120.7 287.0h.01M180.8 287.2h.01M110.9 290.5h.01M114.2 290.6h.01M160.4 290.4h.01M184.5 290.5h.01M187.1 290.8h.01M197.5 290.8h.01M230.5 290.3h.01M250.7 290.1h.01M254.4 291.0h.01M261.0 290.9h.01M284.5 290.8h.01M167.1 293.8h.01M197.6 293.5h.01M200.7 294.0h.01M210.7 293.5h.01M254.4 293.8h.01M270.5 293.9h.01M284.0 294.2h.01M120.9 296.7h.01M154.3 297.0h.01M167.3 297.0h.01M217.6 296.9h.01M280.4 297.2h.01M287.7 297.0h.01M103.9 300.3h.01M164.4 300.5h.01M194.4 300.4h.01M244.2 299.9h.01M127.6 303.3h.01M174.3 303.1h.01M177.2 303.2h.01M187.3 303.5h.01M194.0 303.5h.01M223.7 303.8h.01M147.6 306.5h.01M154.6 306.4h.01M177.7 306.2h.01M243.9 306.6h.01M294.0 307.0h.01" stroke="#f42408" stroke-width="3.3" stroke-linecap="round" fill="none"/>
<path d="M127.8 104.7h.01M131.1 104.2h.01M180.4 104.8h.01M261.2 105.0h.01M280.7 104.8h.01M127.8 108.1h.01M130.4 108.2h.01M163.9 107.9h.01M184.2 108.1h.01M207.3 107.4h.01M214.0 108.1h.01M250.5 107.7h.01M270.6 108.0h.01M184.5 110.8h.01M214.2 110.6h.01M151.2 114.2h.01M197.8 114.1h.01M190.7 117.8h.01M114.4 120.5h.01M147.6 120.5h.01M303.6 120.7h.01M107.7 124.2h.01M231.1 124.1h.01M304.2 123.8h.01M114.2 127.3h.01M141.0 126.7h.01M210.7 126.6h.01M220.8 127.1h.01M277.6 126.9h.01M184.2 130.4h.01M190.7 129.9h.01M193.8 130.7h.01M263.6 130.0h.01M284.3 129.9h.01M253.7 133.6h.01M284.3 133.1h.01M150.7 137.0h.01M300.5 137.1h.01M97.7 139.9h.01M207.8 143.3h.01M267.8 143.4h.01M163.8 146.7h.01M224.1 145.9h.01M287.7 146.5h.01M274.0 149.2h.01M297.4 149.9h.01M301.0 149.7h.01M203.9 152.6h.01M117.3 155.6h.01M214.3 156.2h.01M227.2 156.1h.01M294.0 156.0h.01M171.0 159.0h.01M210.8 159.5h.01M280.6 159.3h.01M97.3 162.6h.01M104.5 162.1h.01M114.3 162.2h.01M127.7 162.2h.01M147.7 161.9h.01M257.1 162.7h.01M114.1 165.2h.01M127.2 165.2h.01M131.0 165.4h.01M233.6 168.3h.01M114.1 172.0h.01M171.0 172.2h.01M277.5 171.5h.01M237.6 175.3h.01M240.7 175.2h.01M257.6 175.4h.01M261.1 174.7h.01M177.3 178.0h.01M273.8 178.6h.01M300.3 181.5h.01M121.2 184.5h.01M130.7 185.0h.01M171.0 184.6h.01M173.9 184.8h.01M271.1 184.3h.01M224.0 187.7h.01M140.4 191.3h.01M210.9 190.7h.01M250.6 191.4h.01M217.6 194.7h.01M247.6 194.5h.01M161.0 197.6h.01M174.5 197.9h.01M177.8 197.5h.01M290.7 197.3h.01M114.2 201.1h.01M133.8 200.9h.01M294.1 200.5h.01M227.8 203.6h.01M250.3 204.0h.01M281.0 203.9h.01M160.7 207.1h.01M290.5 207.4h.01M137.2 210.1h.01M181.1 210.3h.01M230.6 210.1h.01M260.8 210.4h.01M137.5 213.5h.01M180.4 213.7h.01M230.8 213.5h.01M124.3 216.9h.01M231.1 216.5h.01M271.0 216.4h.01M277.1 217.0h.01M121.1 219.6h.01M130.6 220.3h.01M174.1 220.2h.01M177.3 220.0h.01M184.1 220.3h.01M120.5 223.2h.01M177.8 223.3h.01M231.0 223.5h.01M244.0 223.0h.01M257.5 222.8h.01M270.3 223.2h.01M296.9 223.6h.01M117.2 226.5h.01M197.7 226.1h.01M267.6 226.1h.01M290.3 226.6h.01M104.1 229.9h.01M184.3 229.3h.01M234.0 229.7h.01M171.0 232.8h.01M174.2 232.7h.01M177.1 232.8h.01M210.5 232.5h.01M280.9 233.0h.01M297.0 232.8h.01M174.4 236.5h.01M271.0 236.3h.01M304.3 236.1h.01M167.5 239.0h.01M200.7 239.0h.01M210.6 239.2h.01M223.9 239.5h.01M227.2 239.3h.01M304.1 238.8h.01M163.9 242.2h.01M184.5 242.6h.01M210.8 242.0h.01M217.1 242.4h.01M220.8 242.2h.01M227.1 242.2h.01M244.2 242.0h.01M167.2 245.7h.01M197.3 245.8h.01M221.0 245.9h.01M100.8 248.6h.01M104.3 248.8h.01M127.6 248.7h.01M197.8 249.2h.01M223.8 249.3h.01M283.6 248.5h.01M297.8 249.3h.01M184.0 252.3h.01M237.1 258.6h.01M240.7 258.3h.01M250.7 258.1h.01M283.8 258.3h.01M303.8 258.1h.01M94.6 262.1h.01M183.8 262.1h.01M187.3 261.4h.01M270.9 261.9h.01M284.0 261.3h.01M100.8 265.2h.01M120.5 264.9h.01M200.4 264.9h.01M274.1 267.8h.01M120.5 271.4h.01M221.2 271.5h.01M257.1 271.2h.01M260.7 270.9h.01M263.9 271.4h.01M121.1 274.8h.01M140.6 274.8h.01M143.8 274.4h.01M114.5 277.8h.01M117.5 277.4h.01M120.7 277.5h.01M140.7 281.0h.01M127.7 284.6h.01M127.8 287.5h.01M130.7 287.6h.01M134.0 287.4h.01M231.0 287.6h.01M263.7 287.5h.01M280.8 287.1h.01M284.2 287.4h.01M124.5 290.3h.01M127.6 290.5h.01M130.5 290.2h.01M167.1 290.9h.01M170.4 290.6h.01M237.1 290.6h.01M300.8 290.5h.01M151.2 293.5h.01M163.7 293.6h.01M177.3 294.2h.01M180.4 293.4h.01M213.9 293.6h.01M250.6 293.8h.01M300.3 293.6h.01M303.7 294.1h.01M117.9 297.4h.01M210.6 300.0h.01M234.4 299.9h.01M280.9 300.1h.01M98.0 303.3h.01M134.4 303.1h.01M227.6 303.2h.01M230.4 303.6h.01M244.1 303.5h.01M260.4 303.5h.01M263.6 303.7h.01M290.8 303.4h.01M114.1 306.4h.01M123.7 306.4h.01" stroke="#40e838" stroke-width="3.3" stroke-linecap="round" fill="none"/>
<path d="M99.2 106.2h.01M112.5 106.2h.01M132.5 106.2h.01M145.8 106.2h.01M149.1 106.2h.01M155.8 106.2h.01M165.8 106.2h.01M182.4 106.2h.01M185.8 106.2h.01M195.8 106.2h.01M199.1 106.2h.01M205.8 106.2h.01M219.1 106.2h.01M222.4 106.2h.01M232.4 106.2h.01M242.4 106.2h.01M245.7 106.2h.01M249.1 106.2h.01M265.7 106.2h.01M272.4 106.2h.01M275.7 106.2h.01M279.0 106.2h.01M289.0 106.2h.01M95.9 109.4h.01M112.5 109.4h.01M129.2 109.4h.01M132.5 109.4h.01M142.5 109.4h.01M162.5 109.4h.01M169.1 109.4h.01M179.1 109.4h.01M195.8 109.4h.01M205.8 109.4h.01M219.1 109.4h.01M225.7 109.4h.01M235.7 109.4h.01M242.4 109.4h.01M275.7 109.4h.01M295.7 109.4h.01M105.9 112.6h.01M112.5 112.6h.01M115.8 112.6h.01M122.5 112.6h.01M135.8 112.6h.01M139.2 112.6h.01M145.8 112.6h.01M149.1 112.6h.01M179.1 112.6h.01M232.4 112.6h.01M249.1 112.6h.01M265.7 112.6h.01M275.7 112.6h.01M279.0 112.6h.01M285.7 112.6h.01M295.7 112.6h.01M302.3 112.6h.01M109.2 115.8h.01M122.5 115.8h.01M125.8 115.8h.01M149.1 115.8h.01M152.5 115.8h.01M165.8 115.8h.01M175.8 115.8h.01M192.4 115.8h.01M199.1 115.8h.01M229.1 115.8h.01M232.4 115.8h.01M252.4 115.8h.01M259.0 115.8h.01M272.4 115.8h.01M285.7 115.8h.01M292.3 115.8h.01M302.3 115.8h.01M105.9 119.0h.01M119.2 119.0h.01M132.5 119.0h.01M139.2 119.0h.01M162.5 119.0h.01M172.5 119.0h.01M205.8 119.0h.01M232.4 119.0h.01M239.1 119.0h.01M249.1 119.0h.01M252.4 119.0h.01M285.7 119.0h.01M99.2 122.2h.01M102.5 122.2h.01M112.5 122.2h.01M125.8 122.2h.01M129.2 122.2h.01M132.5 122.2h.01M135.8 122.2h.01M139.2 122.2h.01M142.5 122.2h.01M172.5 122.2h.01M185.8 122.2h.01M189.1 122.2h.01M192.4 122.2h.01M235.7 122.2h.01M239.1 122.2h.01M245.7 122.2h.01M252.4 122.2h.01M259.0 122.2h.01M265.7 122.2h.01M285.7 122.2h.01M292.3 122.2h.01M295.7 122.2h.01M299.0 122.2h.01M302.3 122.2h.01M109.2 125.4h.01M122.5 125.4h.01M125.8 125.4h.01M129.2 125.4h.01M139.2 125.4h.01M159.1 125.4h.01M162.5 125.4h.01M165.8 125.4h.01M182.4 125.4h.01M185.8 125.4h.01M189.1 125.4h.01M195.8 125.4h.01M212.4 125.4h.01M222.4 125.4h.01M232.4 125.4h.01M235.7 125.4h.01M252.4 125.4h.01M275.7 125.4h.01M299.0 125.4h.01M99.2 128.6h.01M102.5 128.6h.01M129.2 128.6h.01M132.5 128.6h.01M135.8 128.6h.01M149.1 128.6h.01M159.1 128.6h.01M162.5 128.6h.01M165.8 128.6h.01M172.5 128.6h.01M175.8 128.6h.01M189.1 128.6h.01M215.8 128.6h.01M219.1 128.6h.01M222.4 128.6h.01M239.1 128.6h.01M249.1 128.6h.01M252.4 128.6h.01M255.7 128.6h.01M279.0 128.6h.01M285.7 128.6h.01M105.9 131.9h.01M125.8 131.9h.01M129.2 131.9h.01M132.5 131.9h.01M135.8 131.9h.01M159.1 131.9h.01M165.8 131.9h.01M169.1 131.9h.01M209.1 131.9h.01M212.4 131.9h.01M215.8 131.9h.01M219.1 131.9h.01M229.1 131.9h.01M232.4 131.9h.01M235.7 131.9h.01M259.0 131.9h.01M275.7 131.9h.01M279.0 131.9h.01M282.4 131.9h.01M285.7 131.9h.01M289.0 131.9h.01M105.9 135.1h.01M125.8 135.1h.01M129.2 135.1h.01M132.5 135.1h.01M135.8 135.1h.01M152.5 135.1h.01M159.1 135.1h.01M162.5 135.1h.01M165.8 135.1h.01M175.8 135.1h.01M182.4 135.1h.01M192.4 135.1h.01M199.1 135.1h.01M219.1 135.1h.01M222.4 135.1h.01M225.7 135.1h.01M232.4 135.1h.01M235.7 135.1h.01M239.1 135.1h.01M245.7 135.1h.01M262.4 135.1h.01M265.7 135.1h.01M272.4 135.1h.01M279.0 135.1h.01M282.4 135.1h.01M285.7 135.1h.01M289.0 135.1h.01M295.7 135.1h.01M302.3 135.1h.01M119.2 138.3h.01M122.5 138.3h.01M142.5 138.3h.01M155.8 138.3h.01M159.1 138.3h.01M165.8 138.3h.01M179.1 138.3h.01M182.4 138.3h.01M185.8 138.3h.01M192.4 138.3h.01M205.8 138.3h.01M219.1 138.3h.01M222.4 138.3h.01M225.7 138.3h.01M232.4 138.3h.01M242.4 138.3h.01M249.1 138.3h.01M255.7 138.3h.01M262.4 138.3h.01M272.4 138.3h.01M275.7 138.3h.01M289.0 138.3h.01M292.3 138.3h.01M112.5 141.5h.01M115.8 141.5h.01M129.2 141.5h.01M135.8 141.5h.01M145.8 141.5h.01M162.5 141.5h.01M175.8 141.5h.01M189.1 141.5h.01M202.4 141.5h.01M219.1 141.5h.01M222.4 141.5h.01M225.7 141.5h.01M242.4 141.5h.01M249.1 141.5h.01M252.4 141.5h.01M272.4 141.5h.01M275.7 141.5h.01M282.4 141.5h.01M289.0 141.5h.01M95.9 144.7h.01M102.5 144.7h.01M105.9 144.7h.01M109.2 144.7h.01M119.2 144.7h.01M125.8 144.7h.01M132.5 144.7h.01M139.2 144.7h.01M142.5 144.7h.01M172.5 144.7h.01M192.4 144.7h.01M202.4 144.7h.01M205.8 144.7h.01M209.1 144.7h.01M215.8 144.7h.01M219.1 144.7h.01M225.7 144.7h.01M239.1 144.7h.01M242.4 144.7h.01M252.4 144.7h.01M259.0 144.7h.01M272.4 144.7h.01M302.3 144.7h.01M115.8 147.9h.01M119.2 147.9h.01M139.2 147.9h.01M145.8 147.9h.01M159.1 147.9h.01M162.5 147.9h.01M169.1 147.9h.01M179.1 147.9h.01M192.4 147.9h.01M205.8 147.9h.01M222.4 147.9h.01M232.4 147.9h.01M235.7 147.9h.01M239.1 147.9h.01M242.4 147.9h.01M249.1 147.9h.01M259.0 147.9h.01M265.7 147.9h.01M269.0 147.9h.01M279.0 147.9h.01M282.4 147.9h.01M299.0 147.9h.01M95.9 151.1h.01M115.8 151.1h.01M129.2 151.1h.01M132.5 151.1h.01M139.2 151.1h.01M142.5 151.1h.01M145.8 151.1h.01M152.5 151.1h.01M155.8 151.1h.01M182.4 151.1h.01M185.8 151.1h.01M199.1 151.1h.01M209.1 151.1h.01M219.1 151.1h.01M229.1 151.1h.01M242.4 151.1h.01M245.7 151.1h.01M249.1 151.1h.01M252.4 151.1h.01M265.7 151.1h.01M275.7 151.1h.01M279.0 151.1h.01M282.4 151.1h.01M292.3 151.1h.01M295.7 151.1h.01M299.0 151.1h.01M105.9 154.3h.01M109.2 154.3h.01M122.5 154.3h.01M165.8 154.3h.01M179.1 154.3h.01M185.8 154.3h.01M195.8 154.3h.01M199.1 154.3h.01M212.4 154.3h.01M215.8 154.3h.01M219.1 154.3h.01M225.7 154.3h.01M229.1 154.3h.01M242.4 154.3h.01M252.4 154.3h.01M265.7 154.3h.01M269.0 154.3h.01M282.4 154.3h.01M102.5 157.5h.01M125.8 157.5h.01M129.2 157.5h.01M132.5 157.5h.01M142.5 157.5h.01M145.8 157.5h.01M149.1 157.5h.01M159.1 157.5h.01M179.1 157.5h.01M182.4 157.5h.01M189.1 157.5h.01M199.1 157.5h.01M202.4 157.5h.01M215.8 157.5h.01M219.1 157.5h.01M222.4 157.5h.01M245.7 157.5h.01M249.1 157.5h.01M259.0 157.5h.01M272.4 157.5h.01M275.7 157.5h.01M282.4 157.5h.01M285.7 157.5h.01M102.5 160.7h.01M109.2 160.7h.01M125.8 160.7h.01M132.5 160.7h.01M152.5 160.7h.01M189.1 160.7h.01M195.8 160.7h.01M212.4 160.7h.01M225.7 160.7h.01M229.1 160.7h.01M245.7 160.7h.01M249.1 160.7h.01M255.7 160.7h.01M259.0 160.7h.01M269.0 160.7h.01M285.7 160.7h.01M289.0 160.7h.01M302.3 160.7h.01M95.9 163.9h.01M105.9 163.9h.01M109.2 163.9h.01M112.5 163.9h.01M122.5 163.9h.01M129.2 163.9h.01M132.5 163.9h.01M142.5 163.9h.01M152.5 163.9h.01M162.5 163.9h.01M169.1 163.9h.01M175.8 163.9h.01M179.1 163.9h.01M195.8 163.9h.01M199.1 163.9h.01M205.8 163.9h.01M212.4 163.9h.01M222.4 163.9h.01M232.4 163.9h.01M239.1 163.9h.01M259.0 163.9h.01M279.0 163.9h.01M95.9 167.1h.01M125.8 167.1h.01M132.5 167.1h.01M135.8 167.1h.01M139.2 167.1h.01M149.1 167.1h.01M159.1 167.1h.01M165.8 167.1h.01M172.5 167.1h.01M185.8 167.1h.01M195.8 167.1h.01M205.8 167.1h.01M249.1 167.1h.01M259.0 167.1h.01M265.7 167.1h.01M299.0 167.1h.01M95.9 170.3h.01M109.2 170.3h.01M125.8 170.3h.01M129.2 170.3h.01M145.8 170.3h.01M149.1 170.3h.01M175.8 170.3h.01M182.4 170.3h.01M185.8 170.3h.01M195.8 170.3h.01M199.1 170.3h.01M239.1 170.3h.01M272.4 170.3h.01M275.7 170.3h.01M279.0 170.3h.01M292.3 170.3h.01M299.0 170.3h.01M102.5 173.5h.01M115.8 173.5h.01M129.2 173.5h.01M142.5 173.5h.01M149.1 173.5h.01M155.8 173.5h.01M165.8 173.5h.01M169.1 173.5h.01M182.4 173.5h.01M195.8 173.5h.01M205.8 173.5h.01M212.4 173.5h.01M229.1 173.5h.01M245.7 173.5h.01M259.0 173.5h.01M262.4 173.5h.01M265.7 173.5h.01M269.0 173.5h.01M275.7 173.5h.01M279.0 173.5h.01M285.7 173.5h.01M289.0 173.5h.01M99.2 176.7h.01M105.9 176.7h.01M115.8 176.7h.01M139.2 176.7h.01M145.8 176.7h.01M159.1 176.7h.01M172.5 176.7h.01M175.8 176.7h.01M189.1 176.7h.01M212.4 176.7h.01M222.4 176.7h.01M232.4 176.7h.01M242.4 176.7h.01M249.1 176.7h.01M255.7 176.7h.01M262.4 176.7h.01M279.0 176.7h.01M302.3 176.7h.01M109.2 179.9h.01M115.8 179.9h.01M119.2 179.9h.01M122.5 179.9h.01M132.5 179.9h.01M135.8 179.9h.01M145.8 179.9h.01M159.1 179.9h.01M162.5 179.9h.01M169.1 179.9h.01M185.8 179.9h.01M189.1 179.9h.01M195.8 179.9h.01M205.8 179.9h.01M252.4 179.9h.01M255.7 179.9h.01M265.7 179.9h.01M272.4 179.9h.01M292.3 179.9h.01M299.0 179.9h.01M99.2 183.2h.01M129.2 183.2h.01M132.5 183.2h.01M155.8 183.2h.01M182.4 183.2h.01M205.8 183.2h.01M219.1 183.2h.01M222.4 183.2h.01M225.7 183.2h.01M232.4 183.2h.01M239.1 183.2h.01M249.1 183.2h.01M282.4 183.2h.01M289.0 183.2h.01M295.7 183.2h.01M299.0 183.2h.01M115.8 186.4h.01M119.2 186.4h.01M129.2 186.4h.01M132.5 186.4h.01M169.1 186.4h.01M179.1 186.4h.01M192.4 186.4h.01M195.8 186.4h.01M222.4 186.4h.01M225.7 186.4h.01M239.1 186.4h.01M249.1 186.4h.01M255.7 186.4h.01M265.7 186.4h.01M279.0 186.4h.01M302.3 186.4h.01M99.2 189.6h.01M105.9 189.6h.01M119.2 189.6h.01M122.5 189.6h.01M135.8 189.6h.01M145.8 189.6h.01M152.5 189.6h.01M155.8 189.6h.01M169.1 189.6h.01M182.4 189.6h.01M185.8 189.6h.01M199.1 189.6h.01M202.4 189.6h.01M205.8 189.6h.01M209.1 189.6h.01M212.4 189.6h.01M225.7 189.6h.01M229.1 189.6h.01M249.1 189.6h.01M262.4 189.6h.01M265.7 189.6h.01M269.0 189.6h.01M275.7 189.6h.01M99.2 192.8h.01M125.8 192.8h.01M139.2 192.8h.01M149.1 192.8h.01M155.8 192.8h.01M162.5 192.8h.01M169.1 192.8h.01M205.8 192.8h.01M209.1 192.8h.01M215.8 192.8h.01M229.1 192.8h.01M265.7 192.8h.01M279.0 192.8h.01M292.3 192.8h.01M295.7 192.8h.01M95.9 196.0h.01M99.2 196.0h.01M105.9 196.0h.01M119.2 196.0h.01M122.5 196.0h.01M129.2 196.0h.01M142.5 196.0h.01M149.1 196.0h.01M152.5 196.0h.01M155.8 196.0h.01M172.5 196.0h.01M182.4 196.0h.01M185.8 196.0h.01M192.4 196.0h.01M199.1 196.0h.01M205.8 196.0h.01M212.4 196.0h.01M215.8 196.0h.01M225.7 196.0h.01M232.4 196.0h.01M235.7 196.0h.01M239.1 196.0h.01M242.4 196.0h.01M249.1 196.0h.01M265.7 196.0h.01M269.0 196.0h.01M272.4 196.0h.01M295.7 196.0h.01M102.5 199.2h.01M105.9 199.2h.01M112.5 199.2h.01M119.2 199.2h.01M129.2 199.2h.01M135.8 199.2h.01M139.2 199.2h.01M165.8 199.2h.01M172.5 199.2h.01M179.1 199.2h.01M185.8 199.2h.01M215.8 199.2h.01M222.4 199.2h.01M235.7 199.2h.01M239.1 199.2h.01M249.1 199.2h.01M259.0 199.2h.01M269.0 199.2h.01M279.0 199.2h.01M292.3 199.2h.01M99.2 202.4h.01M105.9 202.4h.01M115.8 202.4h.01M132.5 202.4h.01M155.8 202.4h.01M159.1 202.4h.01M165.8 202.4h.01M179.1 202.4h.01M185.8 202.4h.01M192.4 202.4h.01M195.8 202.4h.01M199.1 202.4h.01M202.4 202.4h.01M222.4 202.4h.01M225.7 202.4h.01M229.1 202.4h.01M232.4 202.4h.01M235.7 202.4h.01M242.4 202.4h.01M252.4 202.4h.01M255.7 202.4h.01M272.4 202.4h.01M275.7 202.4h.01M282.4 202.4h.01M292.3 202.4h.01M295.7 202.4h.01M299.0 202.4h.01M109.2 205.6h.01M112.5 205.6h.01M119.2 205.6h.01M122.5 205.6h.01M132.5 205.6h.01M175.8 205.6h.01M185.8 205.6h.01M199.1 205.6h.01M212.4 205.6h.01M235.7 205.6h.01M239.1 205.6h.01M245.7 205.6h.01M249.1 205.6h.01M259.0 205.6h.01M262.4 205.6h.01M265.7 205.6h.01M275.7 205.6h.01M285.7 205.6h.01M99.2 208.8h.01M102.5 208.8h.01M122.5 208.8h.01M129.2 208.8h.01M132.5 208.8h.01M155.8 208.8h.01M169.1 208.8h.01M189.1 208.8h.01M225.7 208.8h.01M229.1 208.8h.01M252.4 208.8h.01M259.0 208.8h.01M265.7 208.8h.01M272.4 208.8h.01M289.0 208.8h.01M295.7 208.8h.01M112.5 212.0h.01M119.2 212.0h.01M125.8 212.0h.01M145.8 212.0h.01M155.8 212.0h.01M162.5 212.0h.01M165.8 212.0h.01M182.4 212.0h.01M185.8 212.0h.01M192.4 212.0h.01M195.8 212.0h.01M225.7 212.0h.01M239.1 212.0h.01M252.4 212.0h.01M259.0 212.0h.01M262.4 212.0h.01M279.0 212.0h.01M282.4 212.0h.01M105.9 215.2h.01M125.8 215.2h.01M135.8 215.2h.01M149.1 215.2h.01M155.8 215.2h.01M169.1 215.2h.01M182.4 215.2h.01M185.8 215.2h.01M192.4 215.2h.01M199.1 215.2h.01M209.1 215.2h.01M219.1 215.2h.01M252.4 215.2h.01M285.7 215.2h.01M289.0 215.2h.01M99.2 218.4h.01M105.9 218.4h.01M109.2 218.4h.01M112.5 218.4h.01M132.5 218.4h.01M142.5 218.4h.01M149.1 218.4h.01M155.8 218.4h.01M159.1 218.4h.01M162.5 218.4h.01M172.5 218.4h.01M179.1 218.4h.01M185.8 218.4h.01M195.8 218.4h.01M219.1 218.4h.01M235.7 218.4h.01M245.7 218.4h.01M269.0 218.4h.01M272.4 218.4h.01M299.0 218.4h.01M302.3 218.4h.01M102.5 221.6h.01M105.9 221.6h.01M119.2 221.6h.01M139.2 221.6h.01M145.8 221.6h.01M152.5 221.6h.01M155.8 221.6h.01M165.8 221.6h.01M182.4 221.6h.01M189.1 221.6h.01M199.1 221.6h.01M205.8 221.6h.01M215.8 221.6h.01M232.4 221.6h.01M239.1 221.6h.01M252.4 221.6h.01M265.7 221.6h.01M275.7 221.6h.01M282.4 221.6h.01M285.7 221.6h.01M289.0 221.6h.01M292.3 221.6h.01M99.2 224.8h.01M102.5 224.8h.01M105.9 224.8h.01M132.5 224.8h.01M135.8 224.8h.01M155.8 224.8h.01M162.5 224.8h.01M165.8 224.8h.01M169.1 224.8h.01M179.1 224.8h.01M209.1 224.8h.01M222.4 224.8h.01M225.7 224.8h.01M229.1 224.8h.01M232.4 224.8h.01M235.7 224.8h.01M239.1 224.8h.01M265.7 224.8h.01M275.7 224.8h.01M282.4 224.8h.01M295.7 224.8h.01M102.5 228.0h.01M105.9 228.0h.01M115.8 228.0h.01M122.5 228.0h.01M132.5 228.0h.01M142.5 228.0h.01M175.8 228.0h.01M179.1 228.0h.01M192.4 228.0h.01M195.8 228.0h.01M199.1 228.0h.01M205.8 228.0h.01M209.1 228.0h.01M222.4 228.0h.01M229.1 228.0h.01M232.4 228.0h.01M235.7 228.0h.01M252.4 228.0h.01M262.4 228.0h.01M269.0 228.0h.01M272.4 228.0h.01M279.0 228.0h.01M302.3 228.0h.01M102.5 231.3h.01M105.9 231.3h.01M109.2 231.3h.01M129.2 231.3h.01M139.2 231.3h.01M149.1 231.3h.01M165.8 231.3h.01M169.1 231.3h.01M175.8 231.3h.01M212.4 231.3h.01M215.8 231.3h.01M225.7 231.3h.01M255.7 231.3h.01M272.4 231.3h.01M279.0 231.3h.01M292.3 231.3h.01M299.0 231.3h.01M302.3 231.3h.01M102.5 234.5h.01M109.2 234.5h.01M112.5 234.5h.01M115.8 234.5h.01M119.2 234.5h.01M139.2 234.5h.01M145.8 234.5h.01M195.8 234.5h.01M209.1 234.5h.01M222.4 234.5h.01M225.7 234.5h.01M232.4 234.5h.01M242.4 234.5h.01M252.4 234.5h.01M269.0 234.5h.01M282.4 234.5h.01M289.0 234.5h.01M302.3 234.5h.01M99.2 237.7h.01M102.5 237.7h.01M105.9 237.7h.01M112.5 237.7h.01M122.5 237.7h.01M132.5 237.7h.01M135.8 237.7h.01M139.2 237.7h.01M149.1 237.7h.01M159.1 237.7h.01M172.5 237.7h.01M192.4 237.7h.01M202.4 237.7h.01M215.8 237.7h.01M225.7 237.7h.01M245.7 237.7h.01M255.7 237.7h.01M262.4 237.7h.01M282.4 237.7h.01M299.0 237.7h.01M102.5 240.9h.01M105.9 240.9h.01M109.2 240.9h.01M112.5 240.9h.01M139.2 240.9h.01M142.5 240.9h.01M155.8 240.9h.01M162.5 240.9h.01M182.4 240.9h.01M202.4 240.9h.01M209.1 240.9h.01M212.4 240.9h.01M219.1 240.9h.01M222.4 240.9h.01M235.7 240.9h.01M259.0 240.9h.01M265.7 240.9h.01M272.4 240.9h.01M275.7 240.9h.01M289.0 240.9h.01M112.5 244.1h.01M115.8 244.1h.01M125.8 244.1h.01M142.5 244.1h.01M155.8 244.1h.01M159.1 244.1h.01M182.4 244.1h.01M192.4 244.1h.01M195.8 244.1h.01M202.4 244.1h.01M209.1 244.1h.01M212.4 244.1h.01M215.8 244.1h.01M219.1 244.1h.01M232.4 244.1h.01M245.7 244.1h.01M252.4 244.1h.01M272.4 244.1h.01M275.7 244.1h.01M289.0 244.1h.01M295.7 244.1h.01M299.0 244.1h.01M302.3 244.1h.01M95.9 247.3h.01M119.2 247.3h.01M122.5 247.3h.01M129.2 247.3h.01M135.8 247.3h.01M139.2 247.3h.01M172.5 247.3h.01M182.4 247.3h.01M199.1 247.3h.01M202.4 247.3h.01M209.1 247.3h.01M215.8 247.3h.01M219.1 247.3h.01M232.4 247.3h.01M242.4 247.3h.01M245.7 247.3h.01M255.7 247.3h.01M265.7 247.3h.01M272.4 247.3h.01M282.4 247.3h.01M285.7 247.3h.01M292.3 247.3h.01M295.7 247.3h.01M302.3 247.3h.01M102.5 250.5h.01M119.2 250.5h.01M122.5 250.5h.01M125.8 250.5h.01M135.8 250.5h.01M139.2 250.5h.01M142.5 250.5h.01M169.1 250.5h.01M172.5 250.5h.01M185.8 250.5h.01M195.8 250.5h.01M202.4 250.5h.01M229.1 250.5h.01M235.7 250.5h.01M269.0 250.5h.01M285.7 250.5h.01M289.0 250.5h.01M302.3 250.5h.01M99.2 253.7h.01M119.2 253.7h.01M122.5 253.7h.01M129.2 253.7h.01M152.5 253.7h.01M155.8 253.7h.01M159.1 253.7h.01M165.8 253.7h.01M192.4 253.7h.01M202.4 253.7h.01M205.8 253.7h.01M212.4 253.7h.01M215.8 253.7h.01M219.1 253.7h.01M235.7 253.7h.01M259.0 253.7h.01M265.7 253.7h.01M282.4 253.7h.01M289.0 253.7h.01M105.9 256.9h.01M109.2 256.9h.01M135.8 256.9h.01M142.5 256.9h.01M165.8 256.9h.01M182.4 256.9h.01M189.1 256.9h.01M195.8 256.9h.01M202.4 256.9h.01M215.8 256.9h.01M222.4 256.9h.01M232.4 256.9h.01M235.7 256.9h.01M242.4 256.9h.01M245.7 256.9h.01M249.1 256.9h.01M252.4 256.9h.01M259.0 256.9h.01M262.4 256.9h.01M265.7 256.9h.01M269.0 256.9h.01M292.3 256.9h.01M299.0 256.9h.01M102.5 260.1h.01M135.8 260.1h.01M149.1 260.1h.01M159.1 260.1h.01M162.5 260.1h.01M175.8 260.1h.01M182.4 260.1h.01M189.1 260.1h.01M192.4 260.1h.01M195.8 260.1h.01M209.1 260.1h.01M212.4 260.1h.01M219.1 260.1h.01M225.7 260.1h.01M229.1 260.1h.01M242.4 260.1h.01M255.7 260.1h.01M262.4 260.1h.01M265.7 260.1h.01M289.0 260.1h.01M295.7 260.1h.01M99.2 263.3h.01M105.9 263.3h.01M115.8 263.3h.01M119.2 263.3h.01M125.8 263.3h.01M139.2 263.3h.01M145.8 263.3h.01M172.5 263.3h.01M179.1 263.3h.01M202.4 263.3h.01M219.1 263.3h.01M225.7 263.3h.01M229.1 263.3h.01M232.4 263.3h.01M262.4 263.3h.01M265.7 263.3h.01M285.7 263.3h.01M292.3 263.3h.01M299.0 263.3h.01M115.8 266.5h.01M122.5 266.5h.01M132.5 266.5h.01M135.8 266.5h.01M142.5 266.5h.01M162.5 266.5h.01M165.8 266.5h.01M179.1 266.5h.01M182.4 266.5h.01M199.1 266.5h.01M209.1 266.5h.01M219.1 266.5h.01M232.4 266.5h.01M239.1 266.5h.01M252.4 266.5h.01M259.0 266.5h.01M262.4 266.5h.01M269.0 266.5h.01M279.0 266.5h.01M292.3 266.5h.01M302.3 266.5h.01M102.5 269.7h.01M105.9 269.7h.01M129.2 269.7h.01M149.1 269.7h.01M155.8 269.7h.01M162.5 269.7h.01M165.8 269.7h.01M169.1 269.7h.01M172.5 269.7h.01M192.4 269.7h.01M212.4 269.7h.01M225.7 269.7h.01M229.1 269.7h.01M235.7 269.7h.01M252.4 269.7h.01M262.4 269.7h.01M269.0 269.7h.01M272.4 269.7h.01M299.0 269.7h.01M302.3 269.7h.01M109.2 272.9h.01M112.5 272.9h.01M125.8 272.9h.01M135.8 272.9h.01M145.8 272.9h.01M152.5 272.9h.01M162.5 272.9h.01M189.1 272.9h.01M195.8 272.9h.01M199.1 272.9h.01M215.8 272.9h.01M229.1 272.9h.01M232.4 272.9h.01M252.4 272.9h.01M265.7 272.9h.01M289.0 272.9h.01M299.0 272.9h.01M109.2 276.1h.01M112.5 276.1h.01M115.8 276.1h.01M132.5 276.1h.01M135.8 276.1h.01M155.8 276.1h.01M162.5 276.1h.01M169.1 276.1h.01M172.5 276.1h.01M185.8 276.1h.01M205.8 276.1h.01M209.1 276.1h.01M219.1 276.1h.01M245.7 276.1h.01M249.1 276.1h.01M252.4 276.1h.01M272.4 276.1h.01M289.0 276.1h.01M102.5 279.3h.01M105.9 279.3h.01M125.8 279.3h.01M129.2 279.3h.01M132.5 279.3h.01M139.2 279.3h.01M149.1 279.3h.01M152.5 279.3h.01M159.1 279.3h.01M165.8 279.3h.01M172.5 279.3h.01M175.8 279.3h.01M182.4 279.3h.01M195.8 279.3h.01M199.1 279.3h.01M215.8 279.3h.01M219.1 279.3h.01M229.1 279.3h.01M239.1 279.3h.01M242.4 279.3h.01M249.1 279.3h.01M252.4 279.3h.01M259.0 279.3h.01M269.0 279.3h.01M272.4 279.3h.01M275.7 279.3h.01M289.0 279.3h.01M302.3 279.3h.01M105.9 282.6h.01M112.5 282.6h.01M119.2 282.6h.01M122.5 282.6h.01M149.1 282.6h.01M155.8 282.6h.01M162.5 282.6h.01M172.5 282.6h.01M175.8 282.6h.01M185.8 282.6h.01M199.1 282.6h.01M205.8 282.6h.01M209.1 282.6h.01M212.4 282.6h.01M222.4 282.6h.01M232.4 282.6h.01M242.4 282.6h.01M245.7 282.6h.01M255.7 282.6h.01M259.0 282.6h.01M282.4 282.6h.01M109.2 285.8h.01M142.5 285.8h.01M162.5 285.8h.01M165.8 285.8h.01M195.8 285.8h.01M202.4 285.8h.01M209.1 285.8h.01M215.8 285.8h.01M222.4 285.8h.01M225.7 285.8h.01M232.4 285.8h.01M235.7 285.8h.01M259.0 285.8h.01M262.4 285.8h.01M269.0 285.8h.01M282.4 285.8h.01M299.0 285.8h.01M99.2 289.0h.01M115.8 289.0h.01M122.5 289.0h.01M145.8 289.0h.01M149.1 289.0h.01M152.5 289.0h.01M159.1 289.0h.01M162.5 289.0h.01M172.5 289.0h.01M189.1 289.0h.01M192.4 289.0h.01M205.8 289.0h.01M209.1 289.0h.01M215.8 289.0h.01M222.4 289.0h.01M225.7 289.0h.01M239.1 289.0h.01M242.4 289.0h.01M259.0 289.0h.01M262.4 289.0h.01M265.7 289.0h.01M285.7 289.0h.01M292.3 289.0h.01M295.7 289.0h.01M302.3 289.0h.01M112.5 292.2h.01M122.5 292.2h.01M149.1 292.2h.01M159.1 292.2h.01M172.5 292.2h.01M195.8 292.2h.01M199.1 292.2h.01M205.8 292.2h.01M232.4 292.2h.01M235.7 292.2h.01M242.4 292.2h.01M245.7 292.2h.01M255.7 292.2h.01M265.7 292.2h.01M272.4 292.2h.01M302.3 292.2h.01M95.9 295.4h.01M99.2 295.4h.01M102.5 295.4h.01M105.9 295.4h.01M115.8 295.4h.01M132.5 295.4h.01M135.8 295.4h.01M139.2 295.4h.01M142.5 295.4h.01M152.5 295.4h.01M165.8 295.4h.01M179.1 295.4h.01M195.8 295.4h.01M215.8 295.4h.01M222.4 295.4h.01M229.1 295.4h.01M235.7 295.4h.01M252.4 295.4h.01M272.4 295.4h.01M279.0 295.4h.01M299.0 295.4h.01M95.9 298.6h.01M105.9 298.6h.01M109.2 298.6h.01M122.5 298.6h.01M132.5 298.6h.01M135.8 298.6h.01M139.2 298.6h.01M142.5 298.6h.01M149.1 298.6h.01M152.5 298.6h.01M159.1 298.6h.01M162.5 298.6h.01M172.5 298.6h.01M175.8 298.6h.01M189.1 298.6h.01M212.4 298.6h.01M229.1 298.6h.01M232.4 298.6h.01M269.0 298.6h.01M285.7 298.6h.01M292.3 298.6h.01M95.9 301.8h.01M105.9 301.8h.01M125.8 301.8h.01M132.5 301.8h.01M145.8 301.8h.01M155.8 301.8h.01M162.5 301.8h.01M175.8 301.8h.01M185.8 301.8h.01M199.1 301.8h.01M202.4 301.8h.01M205.8 301.8h.01M215.8 301.8h.01M219.1 301.8h.01M229.1 301.8h.01M262.4 301.8h.01M269.0 301.8h.01M275.7 301.8h.01M289.0 301.8h.01M292.3 301.8h.01M299.0 301.8h.01M95.9 305.0h.01M105.9 305.0h.01M115.8 305.0h.01M122.5 305.0h.01M135.8 305.0h.01M139.2 305.0h.01M145.8 305.0h.01M149.1 305.0h.01M152.5 305.0h.01M162.5 305.0h.01M169.1 305.0h.01M172.5 305.0h.01M175.8 305.0h.01M185.8 305.0h.01M189.1 305.0h.01M195.8 305.0h.01M212.4 305.0h.01M219.1 305.0h.01M255.7 305.0h.01M259.0 305.0h.01M265.7 305.0h.01M272.4 305.0h.01M279.0 305.0h.01M292.3 305.0h.01" stroke="#00e4a4" stroke-width="1.9" stroke-linecap="round" fill="none"/>
<path d="M95.9 106.2h.01M102.5 106.2h.01M109.2 106.2h.01M119.2 106.2h.01M125.8 106.2h.01M129.2 106.2h.01M142.5 106.2h.01M152.5 106.2h.01M159.1 106.2h.01M162.5 106.2h.01M169.1 106.2h.01M189.1 106.2h.01M209.1 106.2h.01M215.8 106.2h.01M229.1 106.2h.01M235.7 106.2h.01M239.1 106.2h.01M252.4 106.2h.01M259.0 106.2h.01M269.0 106.2h.01M282.4 106.2h.01M285.7 106.2h.01M302.3 106.2h.01M109.2 109.4h.01M119.2 109.4h.01M145.8 109.4h.01M152.5 109.4h.01M155.8 109.4h.01M165.8 109.4h.01M175.8 109.4h.01M189.1 109.4h.01M199.1 109.4h.01M222.4 109.4h.01M229.1 109.4h.01M245.7 109.4h.01M249.1 109.4h.01M259.0 109.4h.01M262.4 109.4h.01M285.7 109.4h.01M289.0 109.4h.01M302.3 109.4h.01M99.2 112.6h.01M102.5 112.6h.01M109.2 112.6h.01M119.2 112.6h.01M129.2 112.6h.01M132.5 112.6h.01M142.5 112.6h.01M172.5 112.6h.01M175.8 112.6h.01M182.4 112.6h.01M195.8 112.6h.01M199.1 112.6h.01M215.8 112.6h.01M222.4 112.6h.01M229.1 112.6h.01M242.4 112.6h.01M245.7 112.6h.01M255.7 112.6h.01M259.0 112.6h.01M289.0 112.6h.01M299.0 112.6h.01M102.5 115.8h.01M129.2 115.8h.01M135.8 115.8h.01M139.2 115.8h.01M142.5 115.8h.01M145.8 115.8h.01M159.1 115.8h.01M162.5 115.8h.01M169.1 115.8h.01M172.5 115.8h.01M179.1 115.8h.01M182.4 115.8h.01M185.8 115.8h.01M189.1 115.8h.01M209.1 115.8h.01M212.4 115.8h.01M215.8 115.8h.01M222.4 115.8h.01M225.7 115.8h.01M235.7 115.8h.01M239.1 115.8h.01M242.4 115.8h.01M255.7 115.8h.01M262.4 115.8h.01M265.7 115.8h.01M279.0 115.8h.01M289.0 115.8h.01M299.0 115.8h.01M102.5 119.0h.01M112.5 119.0h.01M125.8 119.0h.01M129.2 119.0h.01M135.8 119.0h.01M142.5 119.0h.01M145.8 119.0h.01M149.1 119.0h.01M155.8 119.0h.01M169.1 119.0h.01M175.8 119.0h.01M179.1 119.0h.01M182.4 119.0h.01M185.8 119.0h.01M195.8 119.0h.01M202.4 119.0h.01M215.8 119.0h.01M219.1 119.0h.01M229.1 119.0h.01M235.7 119.0h.01M242.4 119.0h.01M245.7 119.0h.01M255.7 119.0h.01M259.0 119.0h.01M262.4 119.0h.01M275.7 119.0h.01M279.0 119.0h.01M282.4 119.0h.01M299.0 119.0h.01M302.3 119.0h.01M95.9 122.2h.01M105.9 122.2h.01M115.8 122.2h.01M119.2 122.2h.01M122.5 122.2h.01M149.1 122.2h.01M152.5 122.2h.01M155.8 122.2h.01M159.1 122.2h.01M162.5 122.2h.01M175.8 122.2h.01M179.1 122.2h.01M199.1 122.2h.01M205.8 122.2h.01M212.4 122.2h.01M215.8 122.2h.01M219.1 122.2h.01M229.1 122.2h.01M249.1 122.2h.01M255.7 122.2h.01M275.7 122.2h.01M282.4 122.2h.01M289.0 122.2h.01M99.2 125.4h.01M105.9 125.4h.01M112.5 125.4h.01M115.8 125.4h.01M132.5 125.4h.01M135.8 125.4h.01M142.5 125.4h.01M149.1 125.4h.01M152.5 125.4h.01M155.8 125.4h.01M169.1 125.4h.01M175.8 125.4h.01M199.1 125.4h.01M202.4 125.4h.01M209.1 125.4h.01M219.1 125.4h.01M225.7 125.4h.01M229.1 125.4h.01M239.1 125.4h.01M245.7 125.4h.01M249.1 125.4h.01M262.4 125.4h.01M269.0 125.4h.01M272.4 125.4h.01M279.0 125.4h.01M289.0 125.4h.01M292.3 125.4h.01M295.7 125.4h.01M302.3 125.4h.01M105.9 128.6h.01M109.2 128.6h.01M112.5 128.6h.01M115.8 128.6h.01M142.5 128.6h.01M145.8 128.6h.01M182.4 128.6h.01M185.8 128.6h.01M195.8 128.6h.01M202.4 128.6h.01M205.8 128.6h.01M212.4 128.6h.01M225.7 128.6h.01M235.7 128.6h.01M262.4 128.6h.01M265.7 128.6h.01M269.0 128.6h.01M275.7 128.6h.01M282.4 128.6h.01M292.3 128.6h.01M295.7 128.6h.01M299.0 128.6h.01M112.5 131.9h.01M119.2 131.9h.01M122.5 131.9h.01M145.8 131.9h.01M149.1 131.9h.01M152.5 131.9h.01M155.8 131.9h.01M175.8 131.9h.01M179.1 131.9h.01M182.4 131.9h.01M185.8 131.9h.01M189.1 131.9h.01M195.8 131.9h.01M202.4 131.9h.01M222.4 131.9h.01M225.7 131.9h.01M242.4 131.9h.01M245.7 131.9h.01M249.1 131.9h.01M252.4 131.9h.01M255.7 131.9h.01M265.7 131.9h.01M292.3 131.9h.01M299.0 131.9h.01M95.9 135.1h.01M109.2 135.1h.01M119.2 135.1h.01M122.5 135.1h.01M142.5 135.1h.01M145.8 135.1h.01M185.8 135.1h.01M189.1 135.1h.01M195.8 135.1h.01M202.4 135.1h.01M209.1 135.1h.01M229.1 135.1h.01M242.4 135.1h.01M255.7 135.1h.01M259.0 135.1h.01M275.7 135.1h.01M299.0 135.1h.01M102.5 138.3h.01M115.8 138.3h.01M132.5 138.3h.01M152.5 138.3h.01M162.5 138.3h.01M169.1 138.3h.01M172.5 138.3h.01M175.8 138.3h.01M189.1 138.3h.01M202.4 138.3h.01M209.1 138.3h.01M235.7 138.3h.01M252.4 138.3h.01M282.4 138.3h.01M285.7 138.3h.01M295.7 138.3h.01M299.0 138.3h.01M302.3 138.3h.01M99.2 141.5h.01M102.5 141.5h.01M105.9 141.5h.01M109.2 141.5h.01M119.2 141.5h.01M122.5 141.5h.01M132.5 141.5h.01M139.2 141.5h.01M149.1 141.5h.01M152.5 141.5h.01M169.1 141.5h.01M185.8 141.5h.01M192.4 141.5h.01M195.8 141.5h.01M205.8 141.5h.01M209.1 141.5h.01M212.4 141.5h.01M229.1 141.5h.01M232.4 141.5h.01M255.7 141.5h.01M259.0 141.5h.01M262.4 141.5h.01M265.7 141.5h.01M269.0 141.5h.01M279.0 141.5h.01M292.3 141.5h.01M112.5 144.7h.01M122.5 144.7h.01M159.1 144.7h.01M162.5 144.7h.01M169.1 144.7h.01M175.8 144.7h.01M179.1 144.7h.01M195.8 144.7h.01M199.1 144.7h.01M229.1 144.7h.01M232.4 144.7h.01M235.7 144.7h.01M249.1 144.7h.01M255.7 144.7h.01M275.7 144.7h.01M285.7 144.7h.01M292.3 144.7h.01M295.7 144.7h.01M299.0 144.7h.01M95.9 147.9h.01M99.2 147.9h.01M105.9 147.9h.01M109.2 147.9h.01M122.5 147.9h.01M129.2 147.9h.01M132.5 147.9h.01M149.1 147.9h.01M155.8 147.9h.01M175.8 147.9h.01M189.1 147.9h.01M195.8 147.9h.01M199.1 147.9h.01M209.1 147.9h.01M212.4 147.9h.01M215.8 147.9h.01M219.1 147.9h.01M225.7 147.9h.01M229.1 147.9h.01M245.7 147.9h.01M252.4 147.9h.01M255.7 147.9h.01M275.7 147.9h.01M289.0 147.9h.01M302.3 147.9h.01M99.2 151.1h.01M105.9 151.1h.01M112.5 151.1h.01M119.2 151.1h.01M122.5 151.1h.01M125.8 151.1h.01M135.8 151.1h.01M149.1 151.1h.01M162.5 151.1h.01M165.8 151.1h.01M169.1 151.1h.01M172.5 151.1h.01M179.1 151.1h.01M192.4 151.1h.01M205.8 151.1h.01M215.8 151.1h.01M222.4 151.1h.01M225.7 151.1h.01M235.7 151.1h.01M239.1 151.1h.01M255.7 151.1h.01M259.0 151.1h.01M302.3 151.1h.01M95.9 154.3h.01M112.5 154.3h.01M115.8 154.3h.01M129.2 154.3h.01M132.5 154.3h.01M139.2 154.3h.01M155.8 154.3h.01M169.1 154.3h.01M189.1 154.3h.01M192.4 154.3h.01M202.4 154.3h.01M205.8 154.3h.01M209.1 154.3h.01M222.4 154.3h.01M232.4 154.3h.01M235.7 154.3h.01M239.1 154.3h.01M245.7 154.3h.01M249.1 154.3h.01M272.4 154.3h.01M279.0 154.3h.01M289.0 154.3h.01M292.3 154.3h.01M299.0 154.3h.01M95.9 157.5h.01M105.9 157.5h.01M112.5 157.5h.01M115.8 157.5h.01M119.2 157.5h.01M152.5 157.5h.01M165.8 157.5h.01M169.1 157.5h.01M172.5 157.5h.01M175.8 157.5h.01M192.4 157.5h.01M209.1 157.5h.01M212.4 157.5h.01M229.1 157.5h.01M232.4 157.5h.01M239.1 157.5h.01M242.4 157.5h.01M252.4 157.5h.01M289.0 157.5h.01M292.3 157.5h.01M302.3 157.5h.01M95.9 160.7h.01M105.9 160.7h.01M112.5 160.7h.01M115.8 160.7h.01M119.2 160.7h.01M122.5 160.7h.01M129.2 160.7h.01M139.2 160.7h.01M145.8 160.7h.01M159.1 160.7h.01M162.5 160.7h.01M165.8 160.7h.01M172.5 160.7h.01M175.8 160.7h.01M179.1 160.7h.01M199.1 160.7h.01M209.1 160.7h.01M215.8 160.7h.01M219.1 160.7h.01M222.4 160.7h.01M235.7 160.7h.01M242.4 160.7h.01M252.4 160.7h.01M265.7 160.7h.01M272.4 160.7h.01M275.7 160.7h.01M282.4 160.7h.01M292.3 160.7h.01M295.7 160.7h.01M99.2 163.9h.01M102.5 163.9h.01M119.2 163.9h.01M125.8 163.9h.01M145.8 163.9h.01M182.4 163.9h.01M185.8 163.9h.01M189.1 163.9h.01M202.4 163.9h.01M209.1 163.9h.01M215.8 163.9h.01M219.1 163.9h.01M252.4 163.9h.01M255.7 163.9h.01M275.7 163.9h.01M282.4 163.9h.01M289.0 163.9h.01M295.7 163.9h.01M299.0 163.9h.01M302.3 163.9h.01M99.2 167.1h.01M109.2 167.1h.01M115.8 167.1h.01M119.2 167.1h.01M142.5 167.1h.01M179.1 167.1h.01M182.4 167.1h.01M189.1 167.1h.01M192.4 167.1h.01M199.1 167.1h.01M212.4 167.1h.01M222.4 167.1h.01M225.7 167.1h.01M232.4 167.1h.01M239.1 167.1h.01M242.4 167.1h.01M282.4 167.1h.01M295.7 167.1h.01M302.3 167.1h.01M102.5 170.3h.01M112.5 170.3h.01M115.8 170.3h.01M119.2 170.3h.01M135.8 170.3h.01M139.2 170.3h.01M152.5 170.3h.01M159.1 170.3h.01M162.5 170.3h.01M165.8 170.3h.01M172.5 170.3h.01M179.1 170.3h.01M189.1 170.3h.01M192.4 170.3h.01M209.1 170.3h.01M212.4 170.3h.01M215.8 170.3h.01M229.1 170.3h.01M232.4 170.3h.01M242.4 170.3h.01M245.7 170.3h.01M249.1 170.3h.01M252.4 170.3h.01M255.7 170.3h.01M262.4 170.3h.01M265.7 170.3h.01M269.0 170.3h.01M295.7 170.3h.01M302.3 170.3h.01M95.9 173.5h.01M99.2 173.5h.01M109.2 173.5h.01M132.5 173.5h.01M139.2 173.5h.01M145.8 173.5h.01M162.5 173.5h.01M189.1 173.5h.01M192.4 173.5h.01M202.4 173.5h.01M209.1 173.5h.01M232.4 173.5h.01M242.4 173.5h.01M249.1 173.5h.01M252.4 173.5h.01M255.7 173.5h.01M292.3 173.5h.01M295.7 173.5h.01M299.0 173.5h.01M109.2 176.7h.01M119.2 176.7h.01M125.8 176.7h.01M129.2 176.7h.01M135.8 176.7h.01M142.5 176.7h.01M152.5 176.7h.01M155.8 176.7h.01M162.5 176.7h.01M165.8 176.7h.01M169.1 176.7h.01M179.1 176.7h.01M185.8 176.7h.01M195.8 176.7h.01M199.1 176.7h.01M209.1 176.7h.01M215.8 176.7h.01M219.1 176.7h.01M225.7 176.7h.01M235.7 176.7h.01M239.1 176.7h.01M265.7 176.7h.01M269.0 176.7h.01M272.4 176.7h.01M282.4 176.7h.01M285.7 176.7h.01M292.3 176.7h.01M295.7 176.7h.01M299.0 176.7h.01M95.9 179.9h.01M99.2 179.9h.01M102.5 179.9h.01M105.9 179.9h.01M112.5 179.9h.01M129.2 179.9h.01M139.2 179.9h.01M142.5 179.9h.01M149.1 179.9h.01M152.5 179.9h.01M155.8 179.9h.01M165.8 179.9h.01M172.5 179.9h.01M175.8 179.9h.01M182.4 179.9h.01M199.1 179.9h.01M202.4 179.9h.01M209.1 179.9h.01M212.4 179.9h.01M215.8 179.9h.01M219.1 179.9h.01M222.4 179.9h.01M239.1 179.9h.01M245.7 179.9h.01M259.0 179.9h.01M275.7 179.9h.01M285.7 179.9h.01M295.7 179.9h.01M95.9 183.2h.01M105.9 183.2h.01M115.8 183.2h.01M119.2 183.2h.01M122.5 183.2h.01M125.8 183.2h.01M145.8 183.2h.01M152.5 183.2h.01M165.8 183.2h.01M169.1 183.2h.01M172.5 183.2h.01M175.8 183.2h.01M179.1 183.2h.01M185.8 183.2h.01M192.4 183.2h.01M202.4 183.2h.01M209.1 183.2h.01M212.4 183.2h.01M235.7 183.2h.01M242.4 183.2h.01M245.7 183.2h.01M252.4 183.2h.01M262.4 183.2h.01M275.7 183.2h.01M285.7 183.2h.01M292.3 183.2h.01M302.3 183.2h.01M105.9 186.4h.01M112.5 186.4h.01M122.5 186.4h.01M125.8 186.4h.01M135.8 186.4h.01M142.5 186.4h.01M145.8 186.4h.01M155.8 186.4h.01M159.1 186.4h.01M165.8 186.4h.01M175.8 186.4h.01M185.8 186.4h.01M189.1 186.4h.01M205.8 186.4h.01M209.1 186.4h.01M212.4 186.4h.01M232.4 186.4h.01M242.4 186.4h.01M245.7 186.4h.01M252.4 186.4h.01M259.0 186.4h.01M275.7 186.4h.01M282.4 186.4h.01M285.7 186.4h.01M292.3 186.4h.01M295.7 186.4h.01M299.0 186.4h.01M95.9 189.6h.01M102.5 189.6h.01M115.8 189.6h.01M129.2 189.6h.01M139.2 189.6h.01M149.1 189.6h.01M162.5 189.6h.01M175.8 189.6h.01M189.1 189.6h.01M192.4 189.6h.01M195.8 189.6h.01M219.1 189.6h.01M222.4 189.6h.01M242.4 189.6h.01M245.7 189.6h.01M252.4 189.6h.01M255.7 189.6h.01M259.0 189.6h.01M272.4 189.6h.01M279.0 189.6h.01M282.4 189.6h.01M285.7 189.6h.01M289.0 189.6h.01M292.3 189.6h.01M295.7 189.6h.01M299.0 189.6h.01M95.9 192.8h.01M102.5 192.8h.01M105.9 192.8h.01M119.2 192.8h.01M122.5 192.8h.01M129.2 192.8h.01M132.5 192.8h.01M135.8 192.8h.01M152.5 192.8h.01M172.5 192.8h.01M175.8 192.8h.01M179.1 192.8h.01M189.1 192.8h.01M192.4 192.8h.01M195.8 192.8h.01M199.1 192.8h.01M212.4 192.8h.01M222.4 192.8h.01M239.1 192.8h.01M242.4 192.8h.01M252.4 192.8h.01M269.0 192.8h.01M272.4 192.8h.01M275.7 192.8h.01M282.4 192.8h.01M289.0 192.8h.01M302.3 192.8h.01M102.5 196.0h.01M109.2 196.0h.01M112.5 196.0h.01M115.8 196.0h.01M125.8 196.0h.01M132.5 196.0h.01M135.8 196.0h.01M145.8 196.0h.01M159.1 196.0h.01M162.5 196.0h.01M165.8 196.0h.01M169.1 196.0h.01M195.8 196.0h.01M209.1 196.0h.01M245.7 196.0h.01M262.4 196.0h.01M279.0 196.0h.01M299.0 196.0h.01M302.3 196.0h.01M95.9 199.2h.01M99.2 199.2h.01M109.2 199.2h.01M122.5 199.2h.01M132.5 199.2h.01M142.5 199.2h.01M149.1 199.2h.01M155.8 199.2h.01M159.1 199.2h.01M175.8 199.2h.01M189.1 199.2h.01M195.8 199.2h.01M199.1 199.2h.01M202.4 199.2h.01M209.1 199.2h.01M229.1 199.2h.01M245.7 199.2h.01M255.7 199.2h.01M262.4 199.2h.01M265.7 199.2h.01M272.4 199.2h.01M275.7 199.2h.01M285.7 199.2h.01M289.0 199.2h.01M295.7 199.2h.01M302.3 199.2h.01M95.9 202.4h.01M102.5 202.4h.01M125.8 202.4h.01M142.5 202.4h.01M145.8 202.4h.01M162.5 202.4h.01M182.4 202.4h.01M215.8 202.4h.01M219.1 202.4h.01M239.1 202.4h.01M245.7 202.4h.01M249.1 202.4h.01M259.0 202.4h.01M285.7 202.4h.01M289.0 202.4h.01M302.3 202.4h.01M95.9 205.6h.01M102.5 205.6h.01M115.8 205.6h.01M125.8 205.6h.01M129.2 205.6h.01M145.8 205.6h.01M149.1 205.6h.01M152.5 205.6h.01M159.1 205.6h.01M165.8 205.6h.01M179.1 205.6h.01M182.4 205.6h.01M189.1 205.6h.01M195.8 205.6h.01M202.4 205.6h.01M205.8 205.6h.01M209.1 205.6h.01M215.8 205.6h.01M219.1 205.6h.01M222.4 205.6h.01M225.7 205.6h.01M229.1 205.6h.01M242.4 205.6h.01M269.0 205.6h.01M279.0 205.6h.01M282.4 205.6h.01M289.0 205.6h.01M295.7 205.6h.01M302.3 205.6h.01M95.9 208.8h.01M105.9 208.8h.01M115.8 208.8h.01M119.2 208.8h.01M125.8 208.8h.01M139.2 208.8h.01M162.5 208.8h.01M165.8 208.8h.01M172.5 208.8h.01M192.4 208.8h.01M202.4 208.8h.01M205.8 208.8h.01M209.1 208.8h.01M212.4 208.8h.01M215.8 208.8h.01M219.1 208.8h.01M222.4 208.8h.01M232.4 208.8h.01M235.7 208.8h.01M239.1 208.8h.01M242.4 208.8h.01M245.7 208.8h.01M255.7 208.8h.01M262.4 208.8h.01M269.0 208.8h.01M275.7 208.8h.01M279.0 208.8h.01M282.4 208.8h.01M292.3 208.8h.01M299.0 208.8h.01M105.9 212.0h.01M109.2 212.0h.01M122.5 212.0h.01M129.2 212.0h.01M132.5 212.0h.01M139.2 212.0h.01M149.1 212.0h.01M152.5 212.0h.01M159.1 212.0h.01M169.1 212.0h.01M172.5 212.0h.01M175.8 212.0h.01M199.1 212.0h.01M202.4 212.0h.01M212.4 212.0h.01M215.8 212.0h.01M219.1 212.0h.01M229.1 212.0h.01M235.7 212.0h.01M269.0 212.0h.01M275.7 212.0h.01M285.7 212.0h.01M292.3 212.0h.01M299.0 212.0h.01M302.3 212.0h.01M95.9 215.2h.01M99.2 215.2h.01M102.5 215.2h.01M109.2 215.2h.01M119.2 215.2h.01M122.5 215.2h.01M139.2 215.2h.01M145.8 215.2h.01M152.5 215.2h.01M162.5 215.2h.01M175.8 215.2h.01M179.1 215.2h.01M189.1 215.2h.01M195.8 215.2h.01M205.8 215.2h.01M215.8 215.2h.01M222.4 215.2h.01M225.7 215.2h.01M232.4 215.2h.01M245.7 215.2h.01M262.4 215.2h.01M269.0 215.2h.01M275.7 215.2h.01M279.0 215.2h.01M282.4 215.2h.01M292.3 215.2h.01M295.7 215.2h.01M299.0 215.2h.01M122.5 218.4h.01M125.8 218.4h.01M129.2 218.4h.01M135.8 218.4h.01M152.5 218.4h.01M165.8 218.4h.01M175.8 218.4h.01M182.4 218.4h.01M189.1 218.4h.01M205.8 218.4h.01M209.1 218.4h.01M212.4 218.4h.01M229.1 218.4h.01M239.1 218.4h.01M249.1 218.4h.01M255.7 218.4h.01M259.0 218.4h.01M282.4 218.4h.01M292.3 218.4h.01M295.7 218.4h.01M95.9 221.6h.01M99.2 221.6h.01M115.8 221.6h.01M132.5 221.6h.01M135.8 221.6h.01M142.5 221.6h.01M149.1 221.6h.01M162.5 221.6h.01M172.5 221.6h.01M175.8 221.6h.01M185.8 221.6h.01M202.4 221.6h.01M212.4 221.6h.01M219.1 221.6h.01M229.1 221.6h.01M235.7 221.6h.01M245.7 221.6h.01M262.4 221.6h.01M295.7 221.6h.01M302.3 221.6h.01M112.5 224.8h.01M115.8 224.8h.01M122.5 224.8h.01M125.8 224.8h.01M139.2 224.8h.01M142.5 224.8h.01M145.8 224.8h.01M152.5 224.8h.01M172.5 224.8h.01M175.8 224.8h.01M182.4 224.8h.01M185.8 224.8h.01M192.4 224.8h.01M202.4 224.8h.01M205.8 224.8h.01M242.4 224.8h.01M249.1 224.8h.01M259.0 224.8h.01M269.0 224.8h.01M272.4 224.8h.01M285.7 224.8h.01M292.3 224.8h.01M95.9 228.0h.01M99.2 228.0h.01M119.2 228.0h.01M125.8 228.0h.01M135.8 228.0h.01M145.8 228.0h.01M155.8 228.0h.01M159.1 228.0h.01M162.5 228.0h.01M165.8 228.0h.01M172.5 228.0h.01M182.4 228.0h.01M185.8 228.0h.01M212.4 228.0h.01M225.7 228.0h.01M245.7 228.0h.01M259.0 228.0h.01M289.0 228.0h.01M295.7 228.0h.01M299.0 228.0h.01M99.2 231.3h.01M112.5 231.3h.01M119.2 231.3h.01M122.5 231.3h.01M132.5 231.3h.01M145.8 231.3h.01M155.8 231.3h.01M172.5 231.3h.01M182.4 231.3h.01M185.8 231.3h.01M189.1 231.3h.01M195.8 231.3h.01M199.1 231.3h.01M205.8 231.3h.01M219.1 231.3h.01M229.1 231.3h.01M239.1 231.3h.01M242.4 231.3h.01M249.1 231.3h.01M252.4 231.3h.01M259.0 231.3h.01M269.0 231.3h.01M282.4 231.3h.01M285.7 231.3h.01M289.0 231.3h.01M295.7 231.3h.01M95.9 234.5h.01M105.9 234.5h.01M125.8 234.5h.01M132.5 234.5h.01M135.8 234.5h.01M149.1 234.5h.01M155.8 234.5h.01M159.1 234.5h.01M172.5 234.5h.01M175.8 234.5h.01M179.1 234.5h.01M182.4 234.5h.01M185.8 234.5h.01M192.4 234.5h.01M212.4 234.5h.01M219.1 234.5h.01M235.7 234.5h.01M239.1 234.5h.01M245.7 234.5h.01M255.7 234.5h.01M259.0 234.5h.01M262.4 234.5h.01M265.7 234.5h.01M272.4 234.5h.01M279.0 234.5h.01M285.7 234.5h.01M292.3 234.5h.01M299.0 234.5h.01M109.2 237.7h.01M119.2 237.7h.01M125.8 237.7h.01M142.5 237.7h.01M145.8 237.7h.01M162.5 237.7h.01M165.8 237.7h.01M182.4 237.7h.01M185.8 237.7h.01M189.1 237.7h.01M199.1 237.7h.01M205.8 237.7h.01M219.1 237.7h.01M229.1 237.7h.01M239.1 237.7h.01M242.4 237.7h.01M252.4 237.7h.01M265.7 237.7h.01M269.0 237.7h.01M272.4 237.7h.01M275.7 237.7h.01M289.0 237.7h.01M95.9 240.9h.01M99.2 240.9h.01M115.8 240.9h.01M119.2 240.9h.01M125.8 240.9h.01M145.8 240.9h.01M149.1 240.9h.01M165.8 240.9h.01M172.5 240.9h.01M195.8 240.9h.01M199.1 240.9h.01M205.8 240.9h.01M229.1 240.9h.01M242.4 240.9h.01M249.1 240.9h.01M252.4 240.9h.01M255.7 240.9h.01M262.4 240.9h.01M279.0 240.9h.01M282.4 240.9h.01M292.3 240.9h.01M295.7 240.9h.01M299.0 240.9h.01M95.9 244.1h.01M99.2 244.1h.01M102.5 244.1h.01M105.9 244.1h.01M109.2 244.1h.01M122.5 244.1h.01M132.5 244.1h.01M135.8 244.1h.01M145.8 244.1h.01M152.5 244.1h.01M165.8 244.1h.01M169.1 244.1h.01M175.8 244.1h.01M199.1 244.1h.01M205.8 244.1h.01M222.4 244.1h.01M229.1 244.1h.01M235.7 244.1h.01M249.1 244.1h.01M259.0 244.1h.01M262.4 244.1h.01M269.0 244.1h.01M279.0 244.1h.01M282.4 244.1h.01M285.7 244.1h.01M292.3 244.1h.01M105.9 247.3h.01M109.2 247.3h.01M112.5 247.3h.01M142.5 247.3h.01M152.5 247.3h.01M155.8 247.3h.01M159.1 247.3h.01M162.5 247.3h.01M169.1 247.3h.01M175.8 247.3h.01M179.1 247.3h.01M189.1 247.3h.01M192.4 247.3h.01M229.1 247.3h.01M249.1 247.3h.01M252.4 247.3h.01M262.4 247.3h.01M269.0 247.3h.01M289.0 247.3h.01M299.0 247.3h.01M95.9 250.5h.01M99.2 250.5h.01M109.2 250.5h.01M129.2 250.5h.01M152.5 250.5h.01M155.8 250.5h.01M159.1 250.5h.01M162.5 250.5h.01M165.8 250.5h.01M175.8 250.5h.01M179.1 250.5h.01M182.4 250.5h.01M189.1 250.5h.01M222.4 250.5h.01M245.7 250.5h.01M252.4 250.5h.01M262.4 250.5h.01M265.7 250.5h.01M272.4 250.5h.01M279.0 250.5h.01M282.4 250.5h.01M292.3 250.5h.01M105.9 253.7h.01M112.5 253.7h.01M115.8 253.7h.01M132.5 253.7h.01M139.2 253.7h.01M142.5 253.7h.01M162.5 253.7h.01M169.1 253.7h.01M172.5 253.7h.01M175.8 253.7h.01M179.1 253.7h.01M185.8 253.7h.01M209.1 253.7h.01M225.7 253.7h.01M229.1 253.7h.01M232.4 253.7h.01M245.7 253.7h.01M252.4 253.7h.01M255.7 253.7h.01M269.0 253.7h.01M272.4 253.7h.01M279.0 253.7h.01M285.7 253.7h.01M292.3 253.7h.01M299.0 253.7h.01M95.9 256.9h.01M99.2 256.9h.01M102.5 256.9h.01M112.5 256.9h.01M115.8 256.9h.01M125.8 256.9h.01M132.5 256.9h.01M139.2 256.9h.01M145.8 256.9h.01M149.1 256.9h.01M162.5 256.9h.01M169.1 256.9h.01M175.8 256.9h.01M185.8 256.9h.01M192.4 256.9h.01M199.1 256.9h.01M212.4 256.9h.01M219.1 256.9h.01M239.1 256.9h.01M279.0 256.9h.01M289.0 256.9h.01M99.2 260.1h.01M115.8 260.1h.01M119.2 260.1h.01M125.8 260.1h.01M129.2 260.1h.01M139.2 260.1h.01M152.5 260.1h.01M155.8 260.1h.01M165.8 260.1h.01M172.5 260.1h.01M179.1 260.1h.01M185.8 260.1h.01M199.1 260.1h.01M205.8 260.1h.01M215.8 260.1h.01M222.4 260.1h.01M235.7 260.1h.01M239.1 260.1h.01M249.1 260.1h.01M259.0 260.1h.01M269.0 260.1h.01M272.4 260.1h.01M275.7 260.1h.01M282.4 260.1h.01M285.7 260.1h.01M292.3 260.1h.01M299.0 260.1h.01M302.3 260.1h.01M95.9 263.3h.01M122.5 263.3h.01M129.2 263.3h.01M132.5 263.3h.01M149.1 263.3h.01M152.5 263.3h.01M155.8 263.3h.01M159.1 263.3h.01M162.5 263.3h.01M169.1 263.3h.01M175.8 263.3h.01M182.4 263.3h.01M199.1 263.3h.01M215.8 263.3h.01M222.4 263.3h.01M245.7 263.3h.01M255.7 263.3h.01M259.0 263.3h.01M272.4 263.3h.01M275.7 263.3h.01M282.4 263.3h.01M289.0 263.3h.01M295.7 263.3h.01M95.9 266.5h.01M99.2 266.5h.01M109.2 266.5h.01M112.5 266.5h.01M125.8 266.5h.01M129.2 266.5h.01M139.2 266.5h.01M145.8 266.5h.01M159.1 266.5h.01M169.1 266.5h.01M172.5 266.5h.01M175.8 266.5h.01M185.8 266.5h.01M192.4 266.5h.01M202.4 266.5h.01M215.8 266.5h.01M222.4 266.5h.01M229.1 266.5h.01M235.7 266.5h.01M245.7 266.5h.01M249.1 266.5h.01M255.7 266.5h.01M265.7 266.5h.01M272.4 266.5h.01M275.7 266.5h.01M285.7 266.5h.01M289.0 266.5h.01M299.0 266.5h.01M99.2 269.7h.01M119.2 269.7h.01M122.5 269.7h.01M132.5 269.7h.01M139.2 269.7h.01M175.8 269.7h.01M179.1 269.7h.01M182.4 269.7h.01M189.1 269.7h.01M209.1 269.7h.01M222.4 269.7h.01M232.4 269.7h.01M239.1 269.7h.01M242.4 269.7h.01M249.1 269.7h.01M255.7 269.7h.01M259.0 269.7h.01M265.7 269.7h.01M282.4 269.7h.01M289.0 269.7h.01M295.7 269.7h.01M115.8 272.9h.01M119.2 272.9h.01M122.5 272.9h.01M139.2 272.9h.01M142.5 272.9h.01M155.8 272.9h.01M165.8 272.9h.01M182.4 272.9h.01M185.8 272.9h.01M192.4 272.9h.01M202.4 272.9h.01M209.1 272.9h.01M212.4 272.9h.01M219.1 272.9h.01M235.7 272.9h.01M239.1 272.9h.01M249.1 272.9h.01M255.7 272.9h.01M259.0 272.9h.01M262.4 272.9h.01M269.0 272.9h.01M272.4 272.9h.01M275.7 272.9h.01M279.0 272.9h.01M285.7 272.9h.01M292.3 272.9h.01M295.7 272.9h.01M302.3 272.9h.01M95.9 276.1h.01M99.2 276.1h.01M102.5 276.1h.01M119.2 276.1h.01M125.8 276.1h.01M139.2 276.1h.01M165.8 276.1h.01M175.8 276.1h.01M182.4 276.1h.01M189.1 276.1h.01M195.8 276.1h.01M225.7 276.1h.01M229.1 276.1h.01M232.4 276.1h.01M239.1 276.1h.01M242.4 276.1h.01M269.0 276.1h.01M279.0 276.1h.01M282.4 276.1h.01M295.7 276.1h.01M299.0 276.1h.01M302.3 276.1h.01M95.9 279.3h.01M109.2 279.3h.01M115.8 279.3h.01M122.5 279.3h.01M135.8 279.3h.01M145.8 279.3h.01M155.8 279.3h.01M162.5 279.3h.01M169.1 279.3h.01M185.8 279.3h.01M202.4 279.3h.01M212.4 279.3h.01M222.4 279.3h.01M232.4 279.3h.01M245.7 279.3h.01M255.7 279.3h.01M262.4 279.3h.01M279.0 279.3h.01M292.3 279.3h.01M295.7 279.3h.01M299.0 279.3h.01M109.2 282.6h.01M125.8 282.6h.01M129.2 282.6h.01M132.5 282.6h.01M139.2 282.6h.01M142.5 282.6h.01M152.5 282.6h.01M165.8 282.6h.01M179.1 282.6h.01M182.4 282.6h.01M189.1 282.6h.01M195.8 282.6h.01M202.4 282.6h.01M252.4 282.6h.01M269.0 282.6h.01M275.7 282.6h.01M285.7 282.6h.01M289.0 282.6h.01M302.3 282.6h.01M95.9 285.8h.01M112.5 285.8h.01M115.8 285.8h.01M119.2 285.8h.01M125.8 285.8h.01M132.5 285.8h.01M155.8 285.8h.01M159.1 285.8h.01M169.1 285.8h.01M172.5 285.8h.01M179.1 285.8h.01M185.8 285.8h.01M212.4 285.8h.01M219.1 285.8h.01M229.1 285.8h.01M245.7 285.8h.01M252.4 285.8h.01M265.7 285.8h.01M272.4 285.8h.01M279.0 285.8h.01M289.0 285.8h.01M292.3 285.8h.01M295.7 285.8h.01M302.3 285.8h.01M95.9 289.0h.01M105.9 289.0h.01M112.5 289.0h.01M129.2 289.0h.01M132.5 289.0h.01M135.8 289.0h.01M155.8 289.0h.01M165.8 289.0h.01M175.8 289.0h.01M179.1 289.0h.01M182.4 289.0h.01M185.8 289.0h.01M199.1 289.0h.01M219.1 289.0h.01M229.1 289.0h.01M235.7 289.0h.01M252.4 289.0h.01M255.7 289.0h.01M272.4 289.0h.01M282.4 289.0h.01M289.0 289.0h.01M299.0 289.0h.01M99.2 292.2h.01M102.5 292.2h.01M105.9 292.2h.01M109.2 292.2h.01M115.8 292.2h.01M119.2 292.2h.01M125.8 292.2h.01M129.2 292.2h.01M142.5 292.2h.01M155.8 292.2h.01M165.8 292.2h.01M169.1 292.2h.01M175.8 292.2h.01M179.1 292.2h.01M182.4 292.2h.01M185.8 292.2h.01M202.4 292.2h.01M209.1 292.2h.01M212.4 292.2h.01M222.4 292.2h.01M259.0 292.2h.01M275.7 292.2h.01M282.4 292.2h.01M285.7 292.2h.01M299.0 292.2h.01M109.2 295.4h.01M125.8 295.4h.01M149.1 295.4h.01M162.5 295.4h.01M169.1 295.4h.01M175.8 295.4h.01M182.4 295.4h.01M185.8 295.4h.01M189.1 295.4h.01M192.4 295.4h.01M199.1 295.4h.01M202.4 295.4h.01M205.8 295.4h.01M225.7 295.4h.01M242.4 295.4h.01M249.1 295.4h.01M262.4 295.4h.01M269.0 295.4h.01M275.7 295.4h.01M282.4 295.4h.01M295.7 295.4h.01M302.3 295.4h.01M112.5 298.6h.01M115.8 298.6h.01M119.2 298.6h.01M129.2 298.6h.01M145.8 298.6h.01M155.8 298.6h.01M169.1 298.6h.01M179.1 298.6h.01M182.4 298.6h.01M185.8 298.6h.01M192.4 298.6h.01M195.8 298.6h.01M209.1 298.6h.01M219.1 298.6h.01M222.4 298.6h.01M225.7 298.6h.01M239.1 298.6h.01M242.4 298.6h.01M249.1 298.6h.01M252.4 298.6h.01M255.7 298.6h.01M259.0 298.6h.01M262.4 298.6h.01M282.4 298.6h.01M99.2 301.8h.01M102.5 301.8h.01M109.2 301.8h.01M115.8 301.8h.01M119.2 301.8h.01M122.5 301.8h.01M135.8 301.8h.01M139.2 301.8h.01M152.5 301.8h.01M159.1 301.8h.01M169.1 301.8h.01M179.1 301.8h.01M189.1 301.8h.01M192.4 301.8h.01M209.1 301.8h.01M212.4 301.8h.01M222.4 301.8h.01M225.7 301.8h.01M235.7 301.8h.01M239.1 301.8h.01M242.4 301.8h.01M245.7 301.8h.01M249.1 301.8h.01M252.4 301.8h.01M259.0 301.8h.01M265.7 301.8h.01M279.0 301.8h.01M285.7 301.8h.01M295.7 301.8h.01M102.5 305.0h.01M109.2 305.0h.01M112.5 305.0h.01M125.8 305.0h.01M129.2 305.0h.01M142.5 305.0h.01M159.1 305.0h.01M165.8 305.0h.01M179.1 305.0h.01M182.4 305.0h.01M199.1 305.0h.01M205.8 305.0h.01M209.1 305.0h.01M215.8 305.0h.01M232.4 305.0h.01M235.7 305.0h.01M239.1 305.0h.01M249.1 305.0h.01M252.4 305.0h.01M269.0 305.0h.01M282.4 305.0h.01M295.7 305.0h.01M299.0 305.0h.01" stroke="#a2e400" stroke-width="1.9" stroke-linecap="round" fill="none"/>
<path d="M105.9 106.2h.01M139.2 106.2h.01M179.1 106.2h.01M202.4 106.2h.01M225.7 106.2h.01M292.3 106.2h.01M295.7 106.2h.01M299.0 106.2h.01M99.2 109.4h.01M115.8 109.4h.01M122.5 109.4h.01M149.1 109.4h.01M182.4 109.4h.01M209.1 109.4h.01M212.4 109.4h.01M215.8 109.4h.01M232.4 109.4h.01M252.4 109.4h.01M265.7 109.4h.01M269.0 109.4h.01M272.4 109.4h.01M279.0 109.4h.01M282.4 109.4h.01M292.3 109.4h.01M299.0 109.4h.01M95.9 112.6h.01M165.8 112.6h.01M205.8 112.6h.01M209.1 112.6h.01M212.4 112.6h.01M225.7 112.6h.01M235.7 112.6h.01M239.1 112.6h.01M252.4 112.6h.01M262.4 112.6h.01M269.0 112.6h.01M272.4 112.6h.01M282.4 112.6h.01M99.2 115.8h.01M105.9 115.8h.01M112.5 115.8h.01M115.8 115.8h.01M119.2 115.8h.01M132.5 115.8h.01M202.4 115.8h.01M245.7 115.8h.01M249.1 115.8h.01M269.0 115.8h.01M275.7 115.8h.01M282.4 115.8h.01M295.7 115.8h.01M109.2 119.0h.01M115.8 119.0h.01M122.5 119.0h.01M152.5 119.0h.01M165.8 119.0h.01M189.1 119.0h.01M192.4 119.0h.01M199.1 119.0h.01M209.1 119.0h.01M265.7 119.0h.01M292.3 119.0h.01M165.8 122.2h.01M169.1 122.2h.01M202.4 122.2h.01M209.1 122.2h.01M222.4 122.2h.01M232.4 122.2h.01M269.0 122.2h.01M279.0 122.2h.01M102.5 125.4h.01M172.5 125.4h.01M192.4 125.4h.01M205.8 125.4h.01M242.4 125.4h.01M255.7 125.4h.01M259.0 125.4h.01M282.4 125.4h.01M285.7 125.4h.01M95.9 128.6h.01M152.5 128.6h.01M169.1 128.6h.01M199.1 128.6h.01M232.4 128.6h.01M242.4 128.6h.01M245.7 128.6h.01M259.0 128.6h.01M272.4 128.6h.01M289.0 128.6h.01M302.3 128.6h.01M95.9 131.9h.01M102.5 131.9h.01M109.2 131.9h.01M115.8 131.9h.01M139.2 131.9h.01M172.5 131.9h.01M192.4 131.9h.01M199.1 131.9h.01M269.0 131.9h.01M295.7 131.9h.01M302.3 131.9h.01M115.8 135.1h.01M139.2 135.1h.01M149.1 135.1h.01M205.8 135.1h.01M252.4 135.1h.01M269.0 135.1h.01M109.2 138.3h.01M125.8 138.3h.01M145.8 138.3h.01M149.1 138.3h.01M215.8 138.3h.01M239.1 138.3h.01M245.7 138.3h.01M259.0 138.3h.01M265.7 138.3h.01M269.0 138.3h.01M279.0 138.3h.01M95.9 141.5h.01M125.8 141.5h.01M142.5 141.5h.01M155.8 141.5h.01M159.1 141.5h.01M165.8 141.5h.01M179.1 141.5h.01M215.8 141.5h.01M235.7 141.5h.01M239.1 141.5h.01M285.7 141.5h.01M299.0 141.5h.01M302.3 141.5h.01M99.2 144.7h.01M129.2 144.7h.01M145.8 144.7h.01M149.1 144.7h.01M152.5 144.7h.01M165.8 144.7h.01M182.4 144.7h.01M189.1 144.7h.01M212.4 144.7h.01M222.4 144.7h.01M245.7 144.7h.01M262.4 144.7h.01M265.7 144.7h.01M282.4 144.7h.01M102.5 147.9h.01M135.8 147.9h.01M142.5 147.9h.01M165.8 147.9h.01M182.4 147.9h.01M185.8 147.9h.01M272.4 147.9h.01M285.7 147.9h.01M292.3 147.9h.01M159.1 151.1h.01M175.8 151.1h.01M189.1 151.1h.01M202.4 151.1h.01M212.4 151.1h.01M262.4 151.1h.01M269.0 151.1h.01M272.4 151.1h.01M289.0 151.1h.01M102.5 154.3h.01M119.2 154.3h.01M125.8 154.3h.01M142.5 154.3h.01M159.1 154.3h.01M162.5 154.3h.01M175.8 154.3h.01M182.4 154.3h.01M285.7 154.3h.01M295.7 154.3h.01M302.3 154.3h.01M99.2 157.5h.01M155.8 157.5h.01M162.5 157.5h.01M205.8 157.5h.01M225.7 157.5h.01M235.7 157.5h.01M255.7 157.5h.01M262.4 157.5h.01M265.7 157.5h.01M269.0 157.5h.01M279.0 157.5h.01M295.7 157.5h.01M299.0 157.5h.01M135.8 160.7h.01M142.5 160.7h.01M149.1 160.7h.01M169.1 160.7h.01M182.4 160.7h.01M202.4 160.7h.01M205.8 160.7h.01M262.4 160.7h.01M279.0 160.7h.01M115.8 163.9h.01M135.8 163.9h.01M139.2 163.9h.01M155.8 163.9h.01M165.8 163.9h.01M192.4 163.9h.01M225.7 163.9h.01M235.7 163.9h.01M249.1 163.9h.01M269.0 163.9h.01M292.3 163.9h.01M112.5 167.1h.01M145.8 167.1h.01M155.8 167.1h.01M162.5 167.1h.01M169.1 167.1h.01M175.8 167.1h.01M215.8 167.1h.01M219.1 167.1h.01M235.7 167.1h.01M255.7 167.1h.01M269.0 167.1h.01M275.7 167.1h.01M285.7 167.1h.01M122.5 170.3h.01M142.5 170.3h.01M155.8 170.3h.01M205.8 170.3h.01M285.7 170.3h.01M289.0 170.3h.01M119.2 173.5h.01M122.5 173.5h.01M152.5 173.5h.01M159.1 173.5h.01M172.5 173.5h.01M199.1 173.5h.01M219.1 173.5h.01M222.4 173.5h.01M302.3 173.5h.01M102.5 176.7h.01M112.5 176.7h.01M132.5 176.7h.01M182.4 176.7h.01M205.8 176.7h.01M229.1 176.7h.01M245.7 176.7h.01M252.4 176.7h.01M275.7 176.7h.01M289.0 176.7h.01M179.1 179.9h.01M192.4 179.9h.01M225.7 179.9h.01M232.4 179.9h.01M235.7 179.9h.01M242.4 179.9h.01M262.4 179.9h.01M279.0 179.9h.01M289.0 179.9h.01M302.3 179.9h.01M109.2 183.2h.01M135.8 183.2h.01M142.5 183.2h.01M149.1 183.2h.01M159.1 183.2h.01M189.1 183.2h.01M195.8 183.2h.01M199.1 183.2h.01M229.1 183.2h.01M259.0 183.2h.01M265.7 183.2h.01M272.4 183.2h.01M279.0 183.2h.01M95.9 186.4h.01M109.2 186.4h.01M152.5 186.4h.01M162.5 186.4h.01M172.5 186.4h.01M199.1 186.4h.01M202.4 186.4h.01M215.8 186.4h.01M229.1 186.4h.01M235.7 186.4h.01M262.4 186.4h.01M272.4 186.4h.01M109.2 189.6h.01M112.5 189.6h.01M125.8 189.6h.01M142.5 189.6h.01M165.8 189.6h.01M179.1 189.6h.01M215.8 189.6h.01M302.3 189.6h.01M109.2 192.8h.01M115.8 192.8h.01M159.1 192.8h.01M165.8 192.8h.01M185.8 192.8h.01M202.4 192.8h.01M219.1 192.8h.01M232.4 192.8h.01M235.7 192.8h.01M245.7 192.8h.01M139.2 196.0h.01M189.1 196.0h.01M219.1 196.0h.01M222.4 196.0h.01M252.4 196.0h.01M255.7 196.0h.01M282.4 196.0h.01M285.7 196.0h.01M289.0 196.0h.01M115.8 199.2h.01M162.5 199.2h.01M169.1 199.2h.01M192.4 199.2h.01M205.8 199.2h.01M225.7 199.2h.01M242.4 199.2h.01M252.4 199.2h.01M119.2 202.4h.01M139.2 202.4h.01M149.1 202.4h.01M172.5 202.4h.01M189.1 202.4h.01M212.4 202.4h.01M262.4 202.4h.01M265.7 202.4h.01M269.0 202.4h.01M279.0 202.4h.01M99.2 205.6h.01M135.8 205.6h.01M139.2 205.6h.01M162.5 205.6h.01M169.1 205.6h.01M172.5 205.6h.01M252.4 205.6h.01M255.7 205.6h.01M292.3 205.6h.01M299.0 205.6h.01M109.2 208.8h.01M112.5 208.8h.01M135.8 208.8h.01M145.8 208.8h.01M149.1 208.8h.01M159.1 208.8h.01M179.1 208.8h.01M185.8 208.8h.01M195.8 208.8h.01M199.1 208.8h.01M285.7 208.8h.01M99.2 212.0h.01M115.8 212.0h.01M142.5 212.0h.01M179.1 212.0h.01M209.1 212.0h.01M232.4 212.0h.01M242.4 212.0h.01M249.1 212.0h.01M265.7 212.0h.01M272.4 212.0h.01M289.0 212.0h.01M295.7 212.0h.01M112.5 215.2h.01M115.8 215.2h.01M142.5 215.2h.01M159.1 215.2h.01M212.4 215.2h.01M235.7 215.2h.01M249.1 215.2h.01M255.7 215.2h.01M259.0 215.2h.01M265.7 215.2h.01M272.4 215.2h.01M102.5 218.4h.01M119.2 218.4h.01M145.8 218.4h.01M199.1 218.4h.01M202.4 218.4h.01M222.4 218.4h.01M225.7 218.4h.01M242.4 218.4h.01M252.4 218.4h.01M262.4 218.4h.01M275.7 218.4h.01M279.0 218.4h.01M109.2 221.6h.01M112.5 221.6h.01M129.2 221.6h.01M159.1 221.6h.01M169.1 221.6h.01M192.4 221.6h.01M195.8 221.6h.01M209.1 221.6h.01M242.4 221.6h.01M249.1 221.6h.01M269.0 221.6h.01M272.4 221.6h.01M279.0 221.6h.01M109.2 224.8h.01M149.1 224.8h.01M159.1 224.8h.01M195.8 224.8h.01M199.1 224.8h.01M252.4 224.8h.01M255.7 224.8h.01M262.4 224.8h.01M289.0 224.8h.01M302.3 224.8h.01M112.5 228.0h.01M149.1 228.0h.01M152.5 228.0h.01M189.1 228.0h.01M202.4 228.0h.01M215.8 228.0h.01M239.1 228.0h.01M242.4 228.0h.01M249.1 228.0h.01M265.7 228.0h.01M275.7 228.0h.01M285.7 228.0h.01M125.8 231.3h.01M135.8 231.3h.01M159.1 231.3h.01M179.1 231.3h.01M192.4 231.3h.01M232.4 231.3h.01M235.7 231.3h.01M262.4 231.3h.01M265.7 231.3h.01M99.2 234.5h.01M122.5 234.5h.01M129.2 234.5h.01M152.5 234.5h.01M162.5 234.5h.01M165.8 234.5h.01M189.1 234.5h.01M199.1 234.5h.01M202.4 234.5h.01M205.8 234.5h.01M215.8 234.5h.01M229.1 234.5h.01M249.1 234.5h.01M95.9 237.7h.01M155.8 237.7h.01M169.1 237.7h.01M179.1 237.7h.01M209.1 237.7h.01M212.4 237.7h.01M235.7 237.7h.01M249.1 237.7h.01M279.0 237.7h.01M285.7 237.7h.01M295.7 237.7h.01M135.8 240.9h.01M169.1 240.9h.01M175.8 240.9h.01M179.1 240.9h.01M185.8 240.9h.01M192.4 240.9h.01M225.7 240.9h.01M129.2 244.1h.01M139.2 244.1h.01M149.1 244.1h.01M162.5 244.1h.01M185.8 244.1h.01M225.7 244.1h.01M255.7 244.1h.01M99.2 247.3h.01M102.5 247.3h.01M145.8 247.3h.01M149.1 247.3h.01M212.4 247.3h.01M225.7 247.3h.01M235.7 247.3h.01M239.1 247.3h.01M259.0 247.3h.01M275.7 247.3h.01M112.5 250.5h.01M115.8 250.5h.01M132.5 250.5h.01M145.8 250.5h.01M225.7 250.5h.01M232.4 250.5h.01M239.1 250.5h.01M242.4 250.5h.01M249.1 250.5h.01M255.7 250.5h.01M275.7 250.5h.01M295.7 250.5h.01M109.2 253.7h.01M145.8 253.7h.01M149.1 253.7h.01M189.1 253.7h.01M199.1 253.7h.01M222.4 253.7h.01M275.7 253.7h.01M122.5 256.9h.01M152.5 256.9h.01M155.8 256.9h.01M229.1 256.9h.01M255.7 256.9h.01M272.4 256.9h.01M275.7 256.9h.01M295.7 256.9h.01M95.9 260.1h.01M105.9 260.1h.01M109.2 260.1h.01M132.5 260.1h.01M142.5 260.1h.01M169.1 260.1h.01M245.7 260.1h.01M252.4 260.1h.01M279.0 260.1h.01M102.5 263.3h.01M109.2 263.3h.01M135.8 263.3h.01M142.5 263.3h.01M165.8 263.3h.01M185.8 263.3h.01M189.1 263.3h.01M205.8 263.3h.01M235.7 263.3h.01M242.4 263.3h.01M269.0 263.3h.01M279.0 263.3h.01M302.3 263.3h.01M102.5 266.5h.01M152.5 266.5h.01M195.8 266.5h.01M212.4 266.5h.01M95.9 269.7h.01M112.5 269.7h.01M135.8 269.7h.01M142.5 269.7h.01M145.8 269.7h.01M159.1 269.7h.01M245.7 269.7h.01M292.3 269.7h.01M99.2 272.9h.01M129.2 272.9h.01M132.5 272.9h.01M149.1 272.9h.01M159.1 272.9h.01M175.8 272.9h.01M179.1 272.9h.01M245.7 272.9h.01M282.4 272.9h.01M105.9 276.1h.01M129.2 276.1h.01M145.8 276.1h.01M179.1 276.1h.01M199.1 276.1h.01M212.4 276.1h.01M215.8 276.1h.01M222.4 276.1h.01M235.7 276.1h.01M255.7 276.1h.01M262.4 276.1h.01M265.7 276.1h.01M285.7 276.1h.01M112.5 279.3h.01M119.2 279.3h.01M189.1 279.3h.01M192.4 279.3h.01M205.8 279.3h.01M235.7 279.3h.01M282.4 279.3h.01M285.7 279.3h.01M99.2 282.6h.01M102.5 282.6h.01M135.8 282.6h.01M159.1 282.6h.01M169.1 282.6h.01M215.8 282.6h.01M225.7 282.6h.01M229.1 282.6h.01M249.1 282.6h.01M272.4 282.6h.01M299.0 282.6h.01M102.5 285.8h.01M129.2 285.8h.01M139.2 285.8h.01M149.1 285.8h.01M152.5 285.8h.01M182.4 285.8h.01M199.1 285.8h.01M242.4 285.8h.01M249.1 285.8h.01M275.7 285.8h.01M102.5 289.0h.01M139.2 289.0h.01M249.1 289.0h.01M269.0 289.0h.01M275.7 289.0h.01M95.9 292.2h.01M132.5 292.2h.01M135.8 292.2h.01M139.2 292.2h.01M152.5 292.2h.01M162.5 292.2h.01M189.1 292.2h.01M215.8 292.2h.01M219.1 292.2h.01M252.4 292.2h.01M269.0 292.2h.01M112.5 295.4h.01M119.2 295.4h.01M122.5 295.4h.01M145.8 295.4h.01M155.8 295.4h.01M159.1 295.4h.01M219.1 295.4h.01M232.4 295.4h.01M239.1 295.4h.01M245.7 295.4h.01M255.7 295.4h.01M259.0 295.4h.01M265.7 295.4h.01M289.0 295.4h.01M292.3 295.4h.01M99.2 298.6h.01M102.5 298.6h.01M125.8 298.6h.01M165.8 298.6h.01M199.1 298.6h.01M202.4 298.6h.01M205.8 298.6h.01M265.7 298.6h.01M272.4 298.6h.01M275.7 298.6h.01M295.7 298.6h.01M302.3 298.6h.01M129.2 301.8h.01M182.4 301.8h.01M195.8 301.8h.01M255.7 301.8h.01M282.4 301.8h.01M302.3 301.8h.01M132.5 305.0h.01M155.8 305.0h.01M192.4 305.0h.01M202.4 305.0h.01M242.4 305.0h.01M262.4 305.0h.01M275.7 305.0h.01M285.7 305.0h.01M289.0 305.0h.01" stroke="#ec9400" stroke-width="1.9" stroke-linecap="round" fill="none"/>
<path d="M135.8 106.2h.01M175.8 106.2h.01M192.4 106.2h.01M262.4 106.2h.01M105.9 109.4h.01M125.8 109.4h.01M135.8 109.4h.01M139.2 109.4h.01M185.8 109.4h.01M239.1 109.4h.01M255.7 109.4h.01M125.8 112.6h.01M155.8 112.6h.01M159.1 112.6h.01M162.5 112.6h.01M189.1 112.6h.01M219.1 112.6h.01M292.3 112.6h.01M95.9 115.8h.01M155.8 115.8h.01M195.8 115.8h.01M205.8 115.8h.01M219.1 115.8h.01M99.2 119.0h.01M212.4 119.0h.01M222.4 119.0h.01M289.0 119.0h.01M109.2 122.2h.01M145.8 122.2h.01M195.8 122.2h.01M225.7 122.2h.01M242.4 122.2h.01M262.4 122.2h.01M95.9 125.4h.01M145.8 125.4h.01M179.1 125.4h.01M215.8 125.4h.01M265.7 125.4h.01M119.2 128.6h.01M139.2 128.6h.01M179.1 128.6h.01M229.1 128.6h.01M99.2 131.9h.01M142.5 131.9h.01M205.8 131.9h.01M239.1 131.9h.01M272.4 131.9h.01M99.2 135.1h.01M102.5 135.1h.01M155.8 135.1h.01M172.5 135.1h.01M179.1 135.1h.01M212.4 135.1h.01M215.8 135.1h.01M249.1 135.1h.01M292.3 135.1h.01M95.9 138.3h.01M99.2 138.3h.01M105.9 138.3h.01M112.5 138.3h.01M135.8 138.3h.01M139.2 138.3h.01M195.8 138.3h.01M199.1 138.3h.01M212.4 138.3h.01M229.1 138.3h.01M172.5 141.5h.01M182.4 141.5h.01M199.1 141.5h.01M295.7 141.5h.01M135.8 144.7h.01M155.8 144.7h.01M185.8 144.7h.01M279.0 144.7h.01M152.5 147.9h.01M172.5 147.9h.01M202.4 147.9h.01M295.7 147.9h.01M102.5 151.1h.01M109.2 151.1h.01M195.8 151.1h.01M285.7 151.1h.01M99.2 154.3h.01M149.1 154.3h.01M172.5 154.3h.01M255.7 154.3h.01M259.0 154.3h.01M275.7 154.3h.01M109.2 157.5h.01M122.5 157.5h.01M135.8 157.5h.01M99.2 160.7h.01M155.8 160.7h.01M232.4 160.7h.01M239.1 160.7h.01M149.1 163.9h.01M159.1 163.9h.01M229.1 163.9h.01M242.4 163.9h.01M262.4 163.9h.01M265.7 163.9h.01M272.4 163.9h.01M105.9 167.1h.01M122.5 167.1h.01M152.5 167.1h.01M262.4 167.1h.01M279.0 167.1h.01M289.0 167.1h.01M292.3 167.1h.01M99.2 170.3h.01M132.5 170.3h.01M169.1 170.3h.01M225.7 170.3h.01M235.7 170.3h.01M259.0 170.3h.01M282.4 170.3h.01M105.9 173.5h.01M135.8 173.5h.01M175.8 173.5h.01M185.8 173.5h.01M215.8 173.5h.01M239.1 173.5h.01M95.9 176.7h.01M122.5 176.7h.01M149.1 176.7h.01M192.4 176.7h.01M259.0 176.7h.01M125.8 179.9h.01M112.5 183.2h.01M139.2 183.2h.01M162.5 183.2h.01M215.8 183.2h.01M255.7 183.2h.01M269.0 183.2h.01M139.2 186.4h.01M149.1 186.4h.01M182.4 186.4h.01M269.0 186.4h.01M172.5 189.6h.01M235.7 189.6h.01M239.1 189.6h.01M112.5 192.8h.01M182.4 192.8h.01M225.7 192.8h.01M249.1 192.8h.01M255.7 192.8h.01M259.0 192.8h.01M285.7 192.8h.01M299.0 192.8h.01M179.1 196.0h.01M275.7 196.0h.01M125.8 199.2h.01M145.8 199.2h.01M152.5 199.2h.01M182.4 199.2h.01M212.4 199.2h.01M232.4 199.2h.01M282.4 199.2h.01M112.5 202.4h.01M122.5 202.4h.01M129.2 202.4h.01M135.8 202.4h.01M152.5 202.4h.01M169.1 202.4h.01M205.8 202.4h.01M209.1 202.4h.01M142.5 205.6h.01M155.8 205.6h.01M142.5 208.8h.01M152.5 208.8h.01M175.8 208.8h.01M182.4 208.8h.01M302.3 208.8h.01M95.9 212.0h.01M102.5 212.0h.01M135.8 212.0h.01M189.1 212.0h.01M205.8 212.0h.01M245.7 212.0h.01M255.7 212.0h.01M202.4 215.2h.01M229.1 215.2h.01M239.1 215.2h.01M95.9 218.4h.01M115.8 218.4h.01M139.2 218.4h.01M265.7 218.4h.01M122.5 221.6h.01M125.8 221.6h.01M179.1 221.6h.01M222.4 221.6h.01M225.7 221.6h.01M255.7 221.6h.01M259.0 221.6h.01M95.9 224.8h.01M119.2 224.8h.01M129.2 224.8h.01M212.4 224.8h.01M219.1 224.8h.01M245.7 224.8h.01M95.9 231.3h.01M115.8 231.3h.01M142.5 231.3h.01M202.4 231.3h.01M222.4 231.3h.01M245.7 231.3h.01M142.5 234.5h.01M169.1 234.5h.01M275.7 234.5h.01M295.7 234.5h.01M195.8 237.7h.01M302.3 237.7h.01M122.5 240.9h.01M132.5 240.9h.01M159.1 240.9h.01M215.8 240.9h.01M232.4 240.9h.01M239.1 240.9h.01M245.7 240.9h.01M269.0 240.9h.01M285.7 240.9h.01M302.3 240.9h.01M172.5 244.1h.01M265.7 244.1h.01M115.8 247.3h.01M125.8 247.3h.01M165.8 247.3h.01M185.8 247.3h.01M195.8 247.3h.01M222.4 247.3h.01M105.9 250.5h.01M149.1 250.5h.01M192.4 250.5h.01M212.4 250.5h.01M259.0 250.5h.01M125.8 253.7h.01M182.4 253.7h.01M195.8 253.7h.01M242.4 253.7h.01M295.7 253.7h.01M119.2 256.9h.01M159.1 256.9h.01M172.5 256.9h.01M205.8 256.9h.01M209.1 256.9h.01M225.7 256.9h.01M285.7 256.9h.01M112.5 260.1h.01M122.5 260.1h.01M202.4 260.1h.01M232.4 260.1h.01M112.5 263.3h.01M192.4 263.3h.01M195.8 263.3h.01M209.1 263.3h.01M212.4 263.3h.01M249.1 263.3h.01M252.4 263.3h.01M105.9 266.5h.01M155.8 266.5h.01M189.1 266.5h.01M205.8 266.5h.01M282.4 266.5h.01M109.2 269.7h.01M125.8 269.7h.01M185.8 269.7h.01M195.8 269.7h.01M205.8 269.7h.01M215.8 269.7h.01M275.7 269.7h.01M285.7 269.7h.01M95.9 272.9h.01M102.5 272.9h.01M105.9 272.9h.01M205.8 272.9h.01M222.4 272.9h.01M242.4 272.9h.01M122.5 276.1h.01M142.5 276.1h.01M149.1 276.1h.01M159.1 276.1h.01M275.7 276.1h.01M292.3 276.1h.01M142.5 279.3h.01M209.1 279.3h.01M225.7 279.3h.01M95.9 282.6h.01M115.8 282.6h.01M145.8 282.6h.01M192.4 282.6h.01M239.1 282.6h.01M262.4 282.6h.01M265.7 282.6h.01M292.3 282.6h.01M295.7 282.6h.01M122.5 285.8h.01M135.8 285.8h.01M175.8 285.8h.01M189.1 285.8h.01M192.4 285.8h.01M205.8 285.8h.01M239.1 285.8h.01M255.7 285.8h.01M285.7 285.8h.01M109.2 289.0h.01M119.2 289.0h.01M142.5 289.0h.01M195.8 289.0h.01M212.4 289.0h.01M232.4 289.0h.01M192.4 292.2h.01M225.7 292.2h.01M279.0 292.2h.01M292.3 292.2h.01M295.7 292.2h.01M212.4 295.4h.01M285.7 295.4h.01M215.8 298.6h.01M235.7 298.6h.01M245.7 298.6h.01M279.0 298.6h.01M299.0 298.6h.01M165.8 301.8h.01M172.5 301.8h.01M232.4 301.8h.01M272.4 301.8h.01M119.2 305.0h.01M225.7 305.0h.01M245.7 305.0h.01" stroke="#f42408" stroke-width="1.9" stroke-linecap="round" fill="none"/>
<path d="M115.8 106.2h.01M122.5 106.2h.01M172.5 106.2h.01M212.4 106.2h.01M255.7 106.2h.01M102.5 109.4h.01M159.1 109.4h.01M172.5 109.4h.01M192.4 109.4h.01M202.4 109.4h.01M152.5 112.6h.01M169.1 112.6h.01M185.8 112.6h.01M192.4 112.6h.01M202.4 112.6h.01M95.9 119.0h.01M159.1 119.0h.01M225.7 119.0h.01M269.0 119.0h.01M272.4 119.0h.01M295.7 119.0h.01M182.4 122.2h.01M272.4 122.2h.01M119.2 125.4h.01M122.5 128.6h.01M125.8 128.6h.01M155.8 128.6h.01M192.4 128.6h.01M209.1 128.6h.01M162.5 131.9h.01M262.4 131.9h.01M112.5 135.1h.01M169.1 135.1h.01M129.2 138.3h.01M245.7 141.5h.01M115.8 144.7h.01M269.0 144.7h.01M289.0 144.7h.01M112.5 147.9h.01M125.8 147.9h.01M262.4 147.9h.01M232.4 151.1h.01M135.8 154.3h.01M145.8 154.3h.01M152.5 154.3h.01M262.4 154.3h.01M139.2 157.5h.01M185.8 157.5h.01M195.8 157.5h.01M185.8 160.7h.01M192.4 160.7h.01M299.0 160.7h.01M172.5 163.9h.01M245.7 163.9h.01M285.7 163.9h.01M102.5 167.1h.01M129.2 167.1h.01M202.4 167.1h.01M209.1 167.1h.01M229.1 167.1h.01M245.7 167.1h.01M252.4 167.1h.01M272.4 167.1h.01M105.9 170.3h.01M202.4 170.3h.01M219.1 170.3h.01M222.4 170.3h.01M112.5 173.5h.01M125.8 173.5h.01M179.1 173.5h.01M225.7 173.5h.01M235.7 173.5h.01M272.4 173.5h.01M282.4 173.5h.01M202.4 176.7h.01M229.1 179.9h.01M249.1 179.9h.01M269.0 179.9h.01M282.4 179.9h.01M102.5 183.2h.01M99.2 186.4h.01M102.5 186.4h.01M219.1 186.4h.01M289.0 186.4h.01M132.5 189.6h.01M159.1 189.6h.01M232.4 189.6h.01M142.5 192.8h.01M145.8 192.8h.01M262.4 192.8h.01M175.8 196.0h.01M202.4 196.0h.01M229.1 196.0h.01M259.0 196.0h.01M292.3 196.0h.01M219.1 199.2h.01M299.0 199.2h.01M109.2 202.4h.01M175.8 202.4h.01M105.9 205.6h.01M192.4 205.6h.01M232.4 205.6h.01M272.4 205.6h.01M249.1 208.8h.01M222.4 212.0h.01M129.2 215.2h.01M132.5 215.2h.01M165.8 215.2h.01M172.5 215.2h.01M242.4 215.2h.01M302.3 215.2h.01M169.1 218.4h.01M192.4 218.4h.01M215.8 218.4h.01M232.4 218.4h.01M285.7 218.4h.01M289.0 218.4h.01M299.0 221.6h.01M189.1 224.8h.01M215.8 224.8h.01M279.0 224.8h.01M299.0 224.8h.01M109.2 228.0h.01M129.2 228.0h.01M139.2 228.0h.01M169.1 228.0h.01M219.1 228.0h.01M255.7 228.0h.01M282.4 228.0h.01M292.3 228.0h.01M152.5 231.3h.01M162.5 231.3h.01M209.1 231.3h.01M275.7 231.3h.01M115.8 237.7h.01M129.2 237.7h.01M152.5 237.7h.01M175.8 237.7h.01M222.4 237.7h.01M232.4 237.7h.01M259.0 237.7h.01M292.3 237.7h.01M129.2 240.9h.01M152.5 240.9h.01M189.1 240.9h.01M119.2 244.1h.01M179.1 244.1h.01M189.1 244.1h.01M239.1 244.1h.01M242.4 244.1h.01M132.5 247.3h.01M205.8 247.3h.01M279.0 247.3h.01M199.1 250.5h.01M205.8 250.5h.01M209.1 250.5h.01M215.8 250.5h.01M219.1 250.5h.01M299.0 250.5h.01M95.9 253.7h.01M102.5 253.7h.01M135.8 253.7h.01M239.1 253.7h.01M249.1 253.7h.01M262.4 253.7h.01M302.3 253.7h.01M129.2 256.9h.01M179.1 256.9h.01M282.4 256.9h.01M302.3 256.9h.01M145.8 260.1h.01M239.1 263.3h.01M119.2 266.5h.01M149.1 266.5h.01M225.7 266.5h.01M242.4 266.5h.01M295.7 266.5h.01M115.8 269.7h.01M152.5 269.7h.01M199.1 269.7h.01M202.4 269.7h.01M219.1 269.7h.01M279.0 269.7h.01M169.1 272.9h.01M172.5 272.9h.01M225.7 272.9h.01M152.5 276.1h.01M192.4 276.1h.01M202.4 276.1h.01M259.0 276.1h.01M99.2 279.3h.01M179.1 279.3h.01M265.7 279.3h.01M219.1 282.6h.01M235.7 282.6h.01M279.0 282.6h.01M99.2 285.8h.01M105.9 285.8h.01M145.8 285.8h.01M125.8 289.0h.01M169.1 289.0h.01M202.4 289.0h.01M245.7 289.0h.01M279.0 289.0h.01M145.8 292.2h.01M229.1 292.2h.01M239.1 292.2h.01M249.1 292.2h.01M262.4 292.2h.01M289.0 292.2h.01M129.2 295.4h.01M172.5 295.4h.01M209.1 295.4h.01M289.0 298.6h.01M112.5 301.8h.01M142.5 301.8h.01M149.1 301.8h.01M99.2 305.0h.01M222.4 305.0h.01M229.1 305.0h.01M302.3 305.0h.01" stroke="#40e838" stroke-width="1.9" stroke-linecap="round" fill="none"/>
<path d="M94.2 104.6h.01M97.5 104.6h.01M100.9 104.6h.01M104.2 104.6h.01M107.5 104.6h.01M110.9 104.6h.01M114.2 104.6h.01M117.5 104.6h.01M120.8 104.6h.01M124.2 104.6h.01M127.5 104.6h.01M130.8 104.6h.01M134.2 104.6h.01M137.5 104.6h.01M140.8 104.6h.01M144.2 104.6h.01M147.5 104.6h.01M150.8 104.6h.01M154.1 104.6h.01M157.5 104.6h.01M160.8 104.6h.01M164.1 104.6h.01M167.5 104.6h.01M170.8 104.6h.01M174.1 104.6h.01M177.5 104.6h.01M180.8 104.6h.01M184.1 104.6h.01M187.4 104.6h.01M190.8 104.6h.01M194.1 104.6h.01M197.4 104.6h.01M200.8 104.6h.01M204.1 104.6h.01M207.4 104.6h.01M210.8 104.6h.01M214.1 104.6h.01M217.4 104.6h.01M220.7 104.6h.01M224.1 104.6h.01M227.4 104.6h.01M230.7 104.6h.01M234.1 104.6h.01M237.4 104.6h.01M240.7 104.6h.01M244.1 104.6h.01M247.4 104.6h.01M250.7 104.6h.01M254.0 104.6h.01M257.4 104.6h.01M260.7 104.6h.01M264.0 104.6h.01M267.4 104.6h.01M270.7 104.6h.01M274.0 104.6h.01M277.4 104.6h.01M280.7 104.6h.01M284.0 104.6h.01M287.3 104.6h.01M290.7 104.6h.01M294.0 104.6h.01M297.3 104.6h.01M300.7 104.6h.01M304.0 104.6h.01M94.2 107.8h.01M97.5 107.8h.01M100.9 107.8h.01M104.2 107.8h.01M107.5 107.8h.01M110.9 107.8h.01M114.2 107.8h.01M117.5 107.8h.01M120.8 107.8h.01M124.2 107.8h.01M127.5 107.8h.01M130.8 107.8h.01M134.2 107.8h.01M137.5 107.8h.01M140.8 107.8h.01M144.2 107.8h.01M147.5 107.8h.01M150.8 107.8h.01M154.1 107.8h.01M157.5 107.8h.01M160.8 107.8h.01M164.1 107.8h.01M167.5 107.8h.01M170.8 107.8h.01M174.1 107.8h.01M177.5 107.8h.01M180.8 107.8h.01M184.1 107.8h.01M187.4 107.8h.01M190.8 107.8h.01M194.1 107.8h.01M197.4 107.8h.01M200.8 107.8h.01M204.1 107.8h.01M207.4 107.8h.01M210.8 107.8h.01M214.1 107.8h.01M217.4 107.8h.01M220.7 107.8h.01M224.1 107.8h.01M227.4 107.8h.01M230.7 107.8h.01M234.1 107.8h.01M237.4 107.8h.01M240.7 107.8h.01M244.1 107.8h.01M247.4 107.8h.01M250.7 107.8h.01M254.0 107.8h.01M257.4 107.8h.01M260.7 107.8h.01M264.0 107.8h.01M267.4 107.8h.01M270.7 107.8h.01M274.0 107.8h.01M277.4 107.8h.01M280.7 107.8h.01M284.0 107.8h.01M287.3 107.8h.01M290.7 107.8h.01M294.0 107.8h.01M297.3 107.8h.01M300.7 107.8h.01M304.0 107.8h.01M94.2 111.0h.01M97.5 111.0h.01M100.9 111.0h.01M104.2 111.0h.01M107.5 111.0h.01M110.9 111.0h.01M114.2 111.0h.01M117.5 111.0h.01M120.8 111.0h.01M124.2 111.0h.01M127.5 111.0h.01M130.8 111.0h.01M134.2 111.0h.01M137.5 111.0h.01M140.8 111.0h.01M144.2 111.0h.01M147.5 111.0h.01M150.8 111.0h.01M154.1 111.0h.01M157.5 111.0h.01M160.8 111.0h.01M164.1 111.0h.01M167.5 111.0h.01M170.8 111.0h.01M174.1 111.0h.01M177.5 111.0h.01M180.8 111.0h.01M184.1 111.0h.01M187.4 111.0h.01M190.8 111.0h.01M194.1 111.0h.01M197.4 111.0h.01M200.8 111.0h.01M204.1 111.0h.01M207.4 111.0h.01M210.8 111.0h.01M214.1 111.0h.01M217.4 111.0h.01M220.7 111.0h.01M224.1 111.0h.01M227.4 111.0h.01M230.7 111.0h.01M234.1 111.0h.01M237.4 111.0h.01M240.7 111.0h.01M244.1 111.0h.01M247.4 111.0h.01M250.7 111.0h.01M254.0 111.0h.01M257.4 111.0h.01M260.7 111.0h.01M264.0 111.0h.01M267.4 111.0h.01M270.7 111.0h.01M274.0 111.0h.01M277.4 111.0h.01M280.7 111.0h.01M284.0 111.0h.01M287.3 111.0h.01M290.7 111.0h.01M294.0 111.0h.01M297.3 111.0h.01M300.7 111.0h.01M304.0 111.0h.01M94.2 114.2h.01M97.5 114.2h.01M100.9 114.2h.01M104.2 114.2h.01M107.5 114.2h.01M110.9 114.2h.01M114.2 114.2h.01M117.5 114.2h.01M120.8 114.2h.01M124.2 114.2h.01M127.5 114.2h.01M130.8 114.2h.01M134.2 114.2h.01M137.5 114.2h.01M140.8 114.2h.01M144.2 114.2h.01M147.5 114.2h.01M150.8 114.2h.01M154.1 114.2h.01M157.5 114.2h.01M160.8 114.2h.01M164.1 114.2h.01M167.5 114.2h.01M170.8 114.2h.01M174.1 114.2h.01M177.5 114.2h.01M180.8 114.2h.01M184.1 114.2h.01M187.4 114.2h.01M190.8 114.2h.01M194.1 114.2h.01M197.4 114.2h.01M200.8 114.2h.01M204.1 114.2h.01M207.4 114.2h.01M210.8 114.2h.01M214.1 114.2h.01M217.4 114.2h.01M220.7 114.2h.01M224.1 114.2h.01M227.4 114.2h.01M230.7 114.2h.01M234.1 114.2h.01M237.4 114.2h.01M240.7 114.2h.01M244.1 114.2h.01M247.4 114.2h.01M250.7 114.2h.01M254.0 114.2h.01M257.4 114.2h.01M260.7 114.2h.01M264.0 114.2h.01M267.4 114.2h.01M270.7 114.2h.01M274.0 114.2h.01M277.4 114.2h.01M280.7 114.2h.01M284.0 114.2h.01M287.3 114.2h.01M290.7 114.2h.01M294.0 114.2h.01M297.3 114.2h.01M300.7 114.2h.01M304.0 114.2h.01M94.2 117.4h.01M97.5 117.4h.01M100.9 117.4h.01M104.2 117.4h.01M107.5 117.4h.01M110.9 117.4h.01M114.2 117.4h.01M117.5 117.4h.01M120.8 117.4h.01M124.2 117.4h.01M127.5 117.4h.01M130.8 117.4h.01M134.2 117.4h.01M137.5 117.4h.01M140.8 117.4h.01M144.2 117.4h.01M147.5 117.4h.01M150.8 117.4h.01M154.1 117.4h.01M157.5 117.4h.01M160.8 117.4h.01M164.1 117.4h.01M167.5 117.4h.01M170.8 117.4h.01M174.1 117.4h.01M177.5 117.4h.01M180.8 117.4h.01M184.1 117.4h.01M187.4 117.4h.01M190.8 117.4h.01M194.1 117.4h.01M197.4 117.4h.01M200.8 117.4h.01M204.1 117.4h.01M207.4 117.4h.01M210.8 117.4h.01M214.1 117.4h.01M217.4 117.4h.01M220.7 117.4h.01M224.1 117.4h.01M227.4 117.4h.01M230.7 117.4h.01M234.1 117.4h.01M237.4 117.4h.01M240.7 117.4h.01M244.1 117.4h.01M247.4 117.4h.01M250.7 117.4h.01M254.0 117.4h.01M257.4 117.4h.01M260.7 117.4h.01M264.0 117.4h.01M267.4 117.4h.01M270.7 117.4h.01M274.0 117.4h.01M277.4 117.4h.01M280.7 117.4h.01M284.0 117.4h.01M287.3 117.4h.01M290.7 117.4h.01M294.0 117.4h.01M297.3 117.4h.01M300.7 117.4h.01M304.0 117.4h.01M94.2 120.6h.01M97.5 120.6h.01M100.9 120.6h.01M104.2 120.6h.01M107.5 120.6h.01M110.9 120.6h.01M114.2 120.6h.01M117.5 120.6h.01M120.8 120.6h.01M124.2 120.6h.01M127.5 120.6h.01M130.8 120.6h.01M134.2 120.6h.01M137.5 120.6h.01M140.8 120.6h.01M144.2 120.6h.01M147.5 120.6h.01M150.8 120.6h.01M154.1 120.6h.01M157.5 120.6h.01M160.8 120.6h.01M164.1 120.6h.01M167.5 120.6h.01M170.8 120.6h.01M174.1 120.6h.01M177.5 120.6h.01M180.8 120.6h.01M184.1 120.6h.01M187.4 120.6h.01M190.8 120.6h.01M194.1 120.6h.01M197.4 120.6h.01M200.8 120.6h.01M204.1 120.6h.01M207.4 120.6h.01M210.8 120.6h.01M214.1 120.6h.01M217.4 120.6h.01M220.7 120.6h.01M224.1 120.6h.01M227.4 120.6h.01M230.7 120.6h.01M234.1 120.6h.01M237.4 120.6h.01M240.7 120.6h.01M244.1 120.6h.01M247.4 120.6h.01M250.7 120.6h.01M254.0 120.6h.01M257.4 120.6h.01M260.7 120.6h.01M264.0 120.6h.01M267.4 120.6h.01M270.7 120.6h.01M274.0 120.6h.01M277.4 120.6h.01M280.7 120.6h.01M284.0 120.6h.01M287.3 120.6h.01M290.7 120.6h.01M294.0 120.6h.01M297.3 120.6h.01M300.7 120.6h.01M304.0 120.6h.01M94.2 123.8h.01M97.5 123.8h.01M100.9 123.8h.01M104.2 123.8h.01M107.5 123.8h.01M110.9 123.8h.01M114.2 123.8h.01M117.5 123.8h.01M120.8 123.8h.01M124.2 123.8h.01M127.5 123.8h.01M130.8 123.8h.01M134.2 123.8h.01M137.5 123.8h.01M140.8 123.8h.01M144.2 123.8h.01M147.5 123.8h.01M150.8 123.8h.01M154.1 123.8h.01M157.5 123.8h.01M160.8 123.8h.01M164.1 123.8h.01M167.5 123.8h.01M170.8 123.8h.01M174.1 123.8h.01M177.5 123.8h.01M180.8 123.8h.01M184.1 123.8h.01M187.4 123.8h.01M190.8 123.8h.01M194.1 123.8h.01M197.4 123.8h.01M200.8 123.8h.01M204.1 123.8h.01M207.4 123.8h.01M210.8 123.8h.01M214.1 123.8h.01M217.4 123.8h.01M220.7 123.8h.01M224.1 123.8h.01M227.4 123.8h.01M230.7 123.8h.01M234.1 123.8h.01M237.4 123.8h.01M240.7 123.8h.01M244.1 123.8h.01M247.4 123.8h.01M250.7 123.8h.01M254.0 123.8h.01M257.4 123.8h.01M260.7 123.8h.01M264.0 123.8h.01M267.4 123.8h.01M270.7 123.8h.01M274.0 123.8h.01M277.4 123.8h.01M280.7 123.8h.01M284.0 123.8h.01M287.3 123.8h.01M290.7 123.8h.01M294.0 123.8h.01M297.3 123.8h.01M300.7 123.8h.01M304.0 123.8h.01M94.2 127.0h.01M97.5 127.0h.01M100.9 127.0h.01M104.2 127.0h.01M107.5 127.0h.01M110.9 127.0h.01M114.2 127.0h.01M117.5 127.0h.01M120.8 127.0h.01M124.2 127.0h.01M127.5 127.0h.01M130.8 127.0h.01M134.2 127.0h.01M137.5 127.0h.01M140.8 127.0h.01M144.2 127.0h.01M147.5 127.0h.01M150.8 127.0h.01M154.1 127.0h.01M157.5 127.0h.01M160.8 127.0h.01M164.1 127.0h.01M167.5 127.0h.01M170.8 127.0h.01M174.1 127.0h.01M177.5 127.0h.01M180.8 127.0h.01M184.1 127.0h.01M187.4 127.0h.01M190.8 127.0h.01M194.1 127.0h.01M197.4 127.0h.01M200.8 127.0h.01M204.1 127.0h.01M207.4 127.0h.01M210.8 127.0h.01M214.1 127.0h.01M217.4 127.0h.01M220.7 127.0h.01M224.1 127.0h.01M227.4 127.0h.01M230.7 127.0h.01M234.1 127.0h.01M237.4 127.0h.01M240.7 127.0h.01M244.1 127.0h.01M247.4 127.0h.01M250.7 127.0h.01M254.0 127.0h.01M257.4 127.0h.01M260.7 127.0h.01M264.0 127.0h.01M267.4 127.0h.01M270.7 127.0h.01M274.0 127.0h.01M277.4 127.0h.01M280.7 127.0h.01M284.0 127.0h.01M287.3 127.0h.01M290.7 127.0h.01M294.0 127.0h.01M297.3 127.0h.01M300.7 127.0h.01M304.0 127.0h.01M94.2 130.3h.01M97.5 130.3h.01M100.9 130.3h.01M104.2 130.3h.01M107.5 130.3h.01M110.9 130.3h.01M114.2 130.3h.01M117.5 130.3h.01M120.8 130.3h.01M124.2 130.3h.01M127.5 130.3h.01M130.8 130.3h.01M134.2 130.3h.01M137.5 130.3h.01M140.8 130.3h.01M144.2 130.3h.01M147.5 130.3h.01M150.8 130.3h.01M154.1 130.3h.01M157.5 130.3h.01M160.8 130.3h.01M164.1 130.3h.01M167.5 130.3h.01M170.8 130.3h.01M174.1 130.3h.01M177.5 130.3h.01M180.8 130.3h.01M184.1 130.3h.01M187.4 130.3h.01M190.8 130.3h.01M194.1 130.3h.01M197.4 130.3h.01M200.8 130.3h.01M204.1 130.3h.01M207.4 130.3h.01M210.8 130.3h.01M214.1 130.3h.01M217.4 130.3h.01M220.7 130.3h.01M224.1 130.3h.01M227.4 130.3h.01M230.7 130.3h.01M234.1 130.3h.01M237.4 130.3h.01M240.7 130.3h.01M244.1 130.3h.01M247.4 130.3h.01M250.7 130.3h.01M254.0 130.3h.01M257.4 130.3h.01M260.7 130.3h.01M264.0 130.3h.01M267.4 130.3h.01M270.7 130.3h.01M274.0 130.3h.01M277.4 130.3h.01M280.7 130.3h.01M284.0 130.3h.01M287.3 130.3h.01M290.7 130.3h.01M294.0 130.3h.01M297.3 130.3h.01M300.7 130.3h.01M304.0 130.3h.01M94.2 133.5h.01M97.5 133.5h.01M100.9 133.5h.01M104.2 133.5h.01M107.5 133.5h.01M110.9 133.5h.01M114.2 133.5h.01M117.5 133.5h.01M120.8 133.5h.01M124.2 133.5h.01M127.5 133.5h.01M130.8 133.5h.01M134.2 133.5h.01M137.5 133.5h.01M140.8 133.5h.01M144.2 133.5h.01M147.5 133.5h.01M150.8 133.5h.01M154.1 133.5h.01M157.5 133.5h.01M160.8 133.5h.01M164.1 133.5h.01M167.5 133.5h.01M170.8 133.5h.01M174.1 133.5h.01M177.5 133.5h.01M180.8 133.5h.01M184.1 133.5h.01M187.4 133.5h.01M190.8 133.5h.01M194.1 133.5h.01M197.4 133.5h.01M200.8 133.5h.01M204.1 133.5h.01M207.4 133.5h.01M210.8 133.5h.01M214.1 133.5h.01M217.4 133.5h.01M220.7 133.5h.01M224.1 133.5h.01M227.4 133.5h.01M230.7 133.5h.01M234.1 133.5h.01M237.4 133.5h.01M240.7 133.5h.01M244.1 133.5h.01M247.4 133.5h.01M250.7 133.5h.01M254.0 133.5h.01M257.4 133.5h.01M260.7 133.5h.01M264.0 133.5h.01M267.4 133.5h.01M270.7 133.5h.01M274.0 133.5h.01M277.4 133.5h.01M280.7 133.5h.01M284.0 133.5h.01M287.3 133.5h.01M290.7 133.5h.01M294.0 133.5h.01M297.3 133.5h.01M300.7 133.5h.01M304.0 133.5h.01M94.2 136.7h.01M97.5 136.7h.01M100.9 136.7h.01M104.2 136.7h.01M107.5 136.7h.01M110.9 136.7h.01M114.2 136.7h.01M117.5 136.7h.01M120.8 136.7h.01M124.2 136.7h.01M127.5 136.7h.01M130.8 136.7h.01M134.2 136.7h.01M137.5 136.7h.01M140.8 136.7h.01M144.2 136.7h.01M147.5 136.7h.01M150.8 136.7h.01M154.1 136.7h.01M157.5 136.7h.01M160.8 136.7h.01M164.1 136.7h.01M167.5 136.7h.01M170.8 136.7h.01M174.1 136.7h.01M177.5 136.7h.01M180.8 136.7h.01M184.1 136.7h.01M187.4 136.7h.01M190.8 136.7h.01M194.1 136.7h.01M197.4 136.7h.01M200.8 136.7h.01M204.1 136.7h.01M207.4 136.7h.01M210.8 136.7h.01M214.1 136.7h.01M217.4 136.7h.01M220.7 136.7h.01M224.1 136.7h.01M227.4 136.7h.01M230.7 136.7h.01M234.1 136.7h.01M237.4 136.7h.01M240.7 136.7h.01M244.1 136.7h.01M247.4 136.7h.01M250.7 136.7h.01M254.0 136.7h.01M257.4 136.7h.01M260.7 136.7h.01M264.0 136.7h.01M267.4 136.7h.01M270.7 136.7h.01M274.0 136.7h.01M277.4 136.7h.01M280.7 136.7h.01M284.0 136.7h.01M287.3 136.7h.01M290.7 136.7h.01M294.0 136.7h.01M297.3 136.7h.01M300.7 136.7h.01M304.0 136.7h.01M94.2 139.9h.01M97.5 139.9h.01M100.9 139.9h.01M104.2 139.9h.01M107.5 139.9h.01M110.9 139.9h.01M114.2 139.9h.01M117.5 139.9h.01M120.8 139.9h.01M124.2 139.9h.01M127.5 139.9h.01M130.8 139.9h.01M134.2 139.9h.01M137.5 139.9h.01M140.8 139.9h.01M144.2 139.9h.01M147.5 139.9h.01M150.8 139.9h.01M154.1 139.9h.01M157.5 139.9h.01M160.8 139.9h.01M164.1 139.9h.01M167.5 139.9h.01M170.8 139.9h.01M174.1 139.9h.01M177.5 139.9h.01M180.8 139.9h.01M184.1 139.9h.01M187.4 139.9h.01M190.8 139.9h.01M194.1 139.9h.01M197.4 139.9h.01M200.8 139.9h.01M204.1 139.9h.01M207.4 139.9h.01M210.8 139.9h.01M214.1 139.9h.01M217.4 139.9h.01M220.7 139.9h.01M224.1 139.9h.01M227.4 139.9h.01M230.7 139.9h.01M234.1 139.9h.01M237.4 139.9h.01M240.7 139.9h.01M244.1 139.9h.01M247.4 139.9h.01M250.7 139.9h.01M254.0 139.9h.01M257.4 139.9h.01M260.7 139.9h.01M264.0 139.9h.01M267.4 139.9h.01M270.7 139.9h.01M274.0 139.9h.01M277.4 139.9h.01M280.7 139.9h.01M284.0 139.9h.01M287.3 139.9h.01M290.7 139.9h.01M294.0 139.9h.01M297.3 139.9h.01M300.7 139.9h.01M304.0 139.9h.01M94.2 143.1h.01M97.5 143.1h.01M100.9 143.1h.01M104.2 143.1h.01M107.5 143.1h.01M110.9 143.1h.01M114.2 143.1h.01M117.5 143.1h.01M120.8 143.1h.01M124.2 143.1h.01M127.5 143.1h.01M130.8 143.1h.01M134.2 143.1h.01M137.5 143.1h.01M140.8 143.1h.01M144.2 143.1h.01M147.5 143.1h.01M150.8 143.1h.01M154.1 143.1h.01M157.5 143.1h.01M160.8 143.1h.01M164.1 143.1h.01M167.5 143.1h.01M170.8 143.1h.01M174.1 143.1h.01M177.5 143.1h.01M180.8 143.1h.01M184.1 143.1h.01M187.4 143.1h.01M190.8 143.1h.01M194.1 143.1h.01M197.4 143.1h.01M200.8 143.1h.01M204.1 143.1h.01M207.4 143.1h.01M210.8 143.1h.01M214.1 143.1h.01M217.4 143.1h.01M220.7 143.1h.01M224.1 143.1h.01M227.4 143.1h.01M230.7 143.1h.01M234.1 143.1h.01M237.4 143.1h.01M240.7 143.1h.01M244.1 143.1h.01M247.4 143.1h.01M250.7 143.1h.01M254.0 143.1h.01M257.4 143.1h.01M260.7 143.1h.01M264.0 143.1h.01M267.4 143.1h.01M270.7 143.1h.01M274.0 143.1h.01M277.4 143.1h.01M280.7 143.1h.01M284.0 143.1h.01M287.3 143.1h.01M290.7 143.1h.01M294.0 143.1h.01M297.3 143.1h.01M300.7 143.1h.01M304.0 143.1h.01M94.2 146.3h.01M97.5 146.3h.01M100.9 146.3h.01M104.2 146.3h.01M107.5 146.3h.01M110.9 146.3h.01M114.2 146.3h.01M117.5 146.3h.01M120.8 146.3h.01M124.2 146.3h.01M127.5 146.3h.01M130.8 146.3h.01M134.2 146.3h.01M137.5 146.3h.01M140.8 146.3h.01M144.2 146.3h.01M147.5 146.3h.01M150.8 146.3h.01M154.1 146.3h.01M157.5 146.3h.01M160.8 146.3h.01M164.1 146.3h.01M167.5 146.3h.01M170.8 146.3h.01M174.1 146.3h.01M177.5 146.3h.01M180.8 146.3h.01M184.1 146.3h.01M187.4 146.3h.01M190.8 146.3h.01M194.1 146.3h.01M197.4 146.3h.01M200.8 146.3h.01M204.1 146.3h.01M207.4 146.3h.01M210.8 146.3h.01M214.1 146.3h.01M217.4 146.3h.01M220.7 146.3h.01M224.1 146.3h.01M227.4 146.3h.01M230.7 146.3h.01M234.1 146.3h.01M237.4 146.3h.01M240.7 146.3h.01M244.1 146.3h.01M247.4 146.3h.01M250.7 146.3h.01M254.0 146.3h.01M257.4 146.3h.01M260.7 146.3h.01M264.0 146.3h.01M267.4 146.3h.01M270.7 146.3h.01M274.0 146.3h.01M277.4 146.3h.01M280.7 146.3h.01M284.0 146.3h.01M287.3 146.3h.01M290.7 146.3h.01M294.0 146.3h.01M297.3 146.3h.01M300.7 146.3h.01M304.0 146.3h.01M94.2 149.5h.01M97.5 149.5h.01M100.9 149.5h.01M104.2 149.5h.01M107.5 149.5h.01M110.9 149.5h.01M114.2 149.5h.01M117.5 149.5h.01M120.8 149.5h.01M124.2 149.5h.01M127.5 149.5h.01M130.8 149.5h.01M134.2 149.5h.01M137.5 149.5h.01M140.8 149.5h.01M144.2 149.5h.01M147.5 149.5h.01M150.8 149.5h.01M154.1 149.5h.01M157.5 149.5h.01M160.8 149.5h.01M164.1 149.5h.01M167.5 149.5h.01M170.8 149.5h.01M174.1 149.5h.01M177.5 149.5h.01M180.8 149.5h.01M184.1 149.5h.01M187.4 149.5h.01M190.8 149.5h.01M194.1 149.5h.01M197.4 149.5h.01M200.8 149.5h.01M204.1 149.5h.01M207.4 149.5h.01M210.8 149.5h.01M214.1 149.5h.01M217.4 149.5h.01M220.7 149.5h.01M224.1 149.5h.01M227.4 149.5h.01M230.7 149.5h.01M234.1 149.5h.01M237.4 149.5h.01M240.7 149.5h.01M244.1 149.5h.01M247.4 149.5h.01M250.7 149.5h.01M254.0 149.5h.01M257.4 149.5h.01M260.7 149.5h.01M264.0 149.5h.01M267.4 149.5h.01M270.7 149.5h.01M274.0 149.5h.01M277.4 149.5h.01M280.7 149.5h.01M284.0 149.5h.01M287.3 149.5h.01M290.7 149.5h.01M294.0 149.5h.01M297.3 149.5h.01M300.7 149.5h.01M304.0 149.5h.01M94.2 152.7h.01M97.5 152.7h.01M100.9 152.7h.01M104.2 152.7h.01M107.5 152.7h.01M110.9 152.7h.01M114.2 152.7h.01M117.5 152.7h.01M120.8 152.7h.01M124.2 152.7h.01M127.5 152.7h.01M130.8 152.7h.01M134.2 152.7h.01M137.5 152.7h.01M140.8 152.7h.01M144.2 152.7h.01M147.5 152.7h.01M150.8 152.7h.01M154.1 152.7h.01M157.5 152.7h.01M160.8 152.7h.01M164.1 152.7h.01M167.5 152.7h.01M170.8 152.7h.01M174.1 152.7h.01M177.5 152.7h.01M180.8 152.7h.01M184.1 152.7h.01M187.4 152.7h.01M190.8 152.7h.01M194.1 152.7h.01M197.4 152.7h.01M200.8 152.7h.01M204.1 152.7h.01M207.4 152.7h.01M210.8 152.7h.01M214.1 152.7h.01M217.4 152.7h.01M220.7 152.7h.01M224.1 152.7h.01M227.4 152.7h.01M230.7 152.7h.01M234.1 152.7h.01M237.4 152.7h.01M240.7 152.7h.01M244.1 152.7h.01M247.4 152.7h.01M250.7 152.7h.01M254.0 152.7h.01M257.4 152.7h.01M260.7 152.7h.01M264.0 152.7h.01M267.4 152.7h.01M270.7 152.7h.01M274.0 152.7h.01M277.4 152.7h.01M280.7 152.7h.01M284.0 152.7h.01M287.3 152.7h.01M290.7 152.7h.01M294.0 152.7h.01M297.3 152.7h.01M300.7 152.7h.01M304.0 152.7h.01M94.2 155.9h.01M97.5 155.9h.01M100.9 155.9h.01M104.2 155.9h.01M107.5 155.9h.01M110.9 155.9h.01M114.2 155.9h.01M117.5 155.9h.01M120.8 155.9h.01M124.2 155.9h.01M127.5 155.9h.01M130.8 155.9h.01M134.2 155.9h.01M137.5 155.9h.01M140.8 155.9h.01M144.2 155.9h.01M147.5 155.9h.01M150.8 155.9h.01M154.1 155.9h.01M157.5 155.9h.01M160.8 155.9h.01M164.1 155.9h.01M167.5 155.9h.01M170.8 155.9h.01M174.1 155.9h.01M177.5 155.9h.01M180.8 155.9h.01M184.1 155.9h.01M187.4 155.9h.01M190.8 155.9h.01M194.1 155.9h.01M197.4 155.9h.01M200.8 155.9h.01M204.1 155.9h.01M207.4 155.9h.01M210.8 155.9h.01M214.1 155.9h.01M217.4 155.9h.01M220.7 155.9h.01M224.1 155.9h.01M227.4 155.9h.01M230.7 155.9h.01M234.1 155.9h.01M237.4 155.9h.01M240.7 155.9h.01M244.1 155.9h.01M247.4 155.9h.01M250.7 155.9h.01M254.0 155.9h.01M257.4 155.9h.01M260.7 155.9h.01M264.0 155.9h.01M267.4 155.9h.01M270.7 155.9h.01M274.0 155.9h.01M277.4 155.9h.01M280.7 155.9h.01M284.0 155.9h.01M287.3 155.9h.01M290.7 155.9h.01M294.0 155.9h.01M297.3 155.9h.01M300.7 155.9h.01M304.0 155.9h.01M94.2 159.1h.01M97.5 159.1h.01M100.9 159.1h.01M104.2 159.1h.01M107.5 159.1h.01M110.9 159.1h.01M114.2 159.1h.01M117.5 159.1h.01M120.8 159.1h.01M124.2 159.1h.01M127.5 159.1h.01M130.8 159.1h.01M134.2 159.1h.01M137.5 159.1h.01M140.8 159.1h.01M144.2 159.1h.01M147.5 159.1h.01M150.8 159.1h.01M154.1 159.1h.01M157.5 159.1h.01M160.8 159.1h.01M164.1 159.1h.01M167.5 159.1h.01M170.8 159.1h.01M174.1 159.1h.01M177.5 159.1h.01M180.8 159.1h.01M184.1 159.1h.01M187.4 159.1h.01M190.8 159.1h.01M194.1 159.1h.01M197.4 159.1h.01M200.8 159.1h.01M204.1 159.1h.01M207.4 159.1h.01M210.8 159.1h.01M214.1 159.1h.01M217.4 159.1h.01M220.7 159.1h.01M224.1 159.1h.01M227.4 159.1h.01M230.7 159.1h.01M234.1 159.1h.01M237.4 159.1h.01M240.7 159.1h.01M244.1 159.1h.01M247.4 159.1h.01M250.7 159.1h.01M254.0 159.1h.01M257.4 159.1h.01M260.7 159.1h.01M264.0 159.1h.01M267.4 159.1h.01M270.7 159.1h.01M274.0 159.1h.01M277.4 159.1h.01M280.7 159.1h.01M284.0 159.1h.01M287.3 159.1h.01M290.7 159.1h.01M294.0 159.1h.01M297.3 159.1h.01M300.7 159.1h.01M304.0 159.1h.01M94.2 162.3h.01M97.5 162.3h.01M100.9 162.3h.01M104.2 162.3h.01M107.5 162.3h.01M110.9 162.3h.01M114.2 162.3h.01M117.5 162.3h.01M120.8 162.3h.01M124.2 162.3h.01M127.5 162.3h.01M130.8 162.3h.01M134.2 162.3h.01M137.5 162.3h.01M140.8 162.3h.01M144.2 162.3h.01M147.5 162.3h.01M150.8 162.3h.01M154.1 162.3h.01M157.5 162.3h.01M160.8 162.3h.01M164.1 162.3h.01M167.5 162.3h.01M170.8 162.3h.01M174.1 162.3h.01M177.5 162.3h.01M180.8 162.3h.01M184.1 162.3h.01M187.4 162.3h.01M190.8 162.3h.01M194.1 162.3h.01M197.4 162.3h.01M200.8 162.3h.01M204.1 162.3h.01M207.4 162.3h.01M210.8 162.3h.01M214.1 162.3h.01M217.4 162.3h.01M220.7 162.3h.01M224.1 162.3h.01M227.4 162.3h.01M230.7 162.3h.01M234.1 162.3h.01M237.4 162.3h.01M240.7 162.3h.01M244.1 162.3h.01M247.4 162.3h.01M250.7 162.3h.01M254.0 162.3h.01M257.4 162.3h.01M260.7 162.3h.01M264.0 162.3h.01M267.4 162.3h.01M270.7 162.3h.01M274.0 162.3h.01M277.4 162.3h.01M280.7 162.3h.01M284.0 162.3h.01M287.3 162.3h.01M290.7 162.3h.01M294.0 162.3h.01M297.3 162.3h.01M300.7 162.3h.01M304.0 162.3h.01M94.2 165.5h.01M97.5 165.5h.01M100.9 165.5h.01M104.2 165.5h.01M107.5 165.5h.01M110.9 165.5h.01M114.2 165.5h.01M117.5 165.5h.01M120.8 165.5h.01M124.2 165.5h.01M127.5 165.5h.01M130.8 165.5h.01M134.2 165.5h.01M137.5 165.5h.01M140.8 165.5h.01M144.2 165.5h.01M147.5 165.5h.01M150.8 165.5h.01M154.1 165.5h.01M157.5 165.5h.01M160.8 165.5h.01M164.1 165.5h.01M167.5 165.5h.01M170.8 165.5h.01M174.1 165.5h.01M177.5 165.5h.01M180.8 165.5h.01M184.1 165.5h.01M187.4 165.5h.01M190.8 165.5h.01M194.1 165.5h.01M197.4 165.5h.01M200.8 165.5h.01M204.1 165.5h.01M207.4 165.5h.01M210.8 165.5h.01M214.1 165.5h.01M217.4 165.5h.01M220.7 165.5h.01M224.1 165.5h.01M227.4 165.5h.01M230.7 165.5h.01M234.1 165.5h.01M237.4 165.5h.01M240.7 165.5h.01M244.1 165.5h.01M247.4 165.5h.01M250.7 165.5h.01M254.0 165.5h.01M257.4 165.5h.01M260.7 165.5h.01M264.0 165.5h.01M267.4 165.5h.01M270.7 165.5h.01M274.0 165.5h.01M277.4 165.5h.01M280.7 165.5h.01M284.0 165.5h.01M287.3 165.5h.01M290.7 165.5h.01M294.0 165.5h.01M297.3 165.5h.01M300.7 165.5h.01M304.0 165.5h.01M94.2 168.7h.01M97.5 168.7h.01M100.9 168.7h.01M104.2 168.7h.01M107.5 168.7h.01M110.9 168.7h.01M114.2 168.7h.01M117.5 168.7h.01M120.8 168.7h.01M124.2 168.7h.01M127.5 168.7h.01M130.8 168.7h.01M134.2 168.7h.01M137.5 168.7h.01M140.8 168.7h.01M144.2 168.7h.01M147.5 168.7h.01M150.8 168.7h.01M154.1 168.7h.01M157.5 168.7h.01M160.8 168.7h.01M164.1 168.7h.01M167.5 168.7h.01M170.8 168.7h.01M174.1 168.7h.01M177.5 168.7h.01M180.8 168.7h.01M184.1 168.7h.01M187.4 168.7h.01M190.8 168.7h.01M194.1 168.7h.01M197.4 168.7h.01M200.8 168.7h.01M204.1 168.7h.01M207.4 168.7h.01M210.8 168.7h.01M214.1 168.7h.01M217.4 168.7h.01M220.7 168.7h.01M224.1 168.7h.01M227.4 168.7h.01M230.7 168.7h.01M234.1 168.7h.01M237.4 168.7h.01M240.7 168.7h.01M244.1 168.7h.01M247.4 168.7h.01M250.7 168.7h.01M254.0 168.7h.01M257.4 168.7h.01M260.7 168.7h.01M264.0 168.7h.01M267.4 168.7h.01M270.7 168.7h.01M274.0 168.7h.01M277.4 168.7h.01M280.7 168.7h.01M284.0 168.7h.01M287.3 168.7h.01M290.7 168.7h.01M294.0 168.7h.01M297.3 168.7h.01M300.7 168.7h.01M304.0 168.7h.01M94.2 171.9h.01M97.5 171.9h.01M100.9 171.9h.01M104.2 171.9h.01M107.5 171.9h.01M110.9 171.9h.01M114.2 171.9h.01M117.5 171.9h.01M120.8 171.9h.01M124.2 171.9h.01M127.5 171.9h.01M130.8 171.9h.01M134.2 171.9h.01M137.5 171.9h.01M140.8 171.9h.01M144.2 171.9h.01M147.5 171.9h.01M150.8 171.9h.01M154.1 171.9h.01M157.5 171.9h.01M160.8 171.9h.01M164.1 171.9h.01M167.5 171.9h.01M170.8 171.9h.01M174.1 171.9h.01M177.5 171.9h.01M180.8 171.9h.01M184.1 171.9h.01M187.4 171.9h.01M190.8 171.9h.01M194.1 171.9h.01M197.4 171.9h.01M200.8 171.9h.01M204.1 171.9h.01M207.4 171.9h.01M210.8 171.9h.01M214.1 171.9h.01M217.4 171.9h.01M220.7 171.9h.01M224.1 171.9h.01M227.4 171.9h.01M230.7 171.9h.01M234.1 171.9h.01M237.4 171.9h.01M240.7 171.9h.01M244.1 171.9h.01M247.4 171.9h.01M250.7 171.9h.01M254.0 171.9h.01M257.4 171.9h.01M260.7 171.9h.01M264.0 171.9h.01M267.4 171.9h.01M270.7 171.9h.01M274.0 171.9h.01M277.4 171.9h.01M280.7 171.9h.01M284.0 171.9h.01M287.3 171.9h.01M290.7 171.9h.01M294.0 171.9h.01M297.3 171.9h.01M300.7 171.9h.01M304.0 171.9h.01M94.2 175.1h.01M97.5 175.1h.01M100.9 175.1h.01M104.2 175.1h.01M107.5 175.1h.01M110.9 175.1h.01M114.2 175.1h.01M117.5 175.1h.01M120.8 175.1h.01M124.2 175.1h.01M127.5 175.1h.01M130.8 175.1h.01M134.2 175.1h.01M137.5 175.1h.01M140.8 175.1h.01M144.2 175.1h.01M147.5 175.1h.01M150.8 175.1h.01M154.1 175.1h.01M157.5 175.1h.01M160.8 175.1h.01M164.1 175.1h.01M167.5 175.1h.01M170.8 175.1h.01M174.1 175.1h.01M177.5 175.1h.01M180.8 175.1h.01M184.1 175.1h.01M187.4 175.1h.01M190.8 175.1h.01M194.1 175.1h.01M197.4 175.1h.01M200.8 175.1h.01M204.1 175.1h.01M207.4 175.1h.01M210.8 175.1h.01M214.1 175.1h.01M217.4 175.1h.01M220.7 175.1h.01M224.1 175.1h.01M227.4 175.1h.01M230.7 175.1h.01M234.1 175.1h.01M237.4 175.1h.01M240.7 175.1h.01M244.1 175.1h.01M247.4 175.1h.01M250.7 175.1h.01M254.0 175.1h.01M257.4 175.1h.01M260.7 175.1h.01M264.0 175.1h.01M267.4 175.1h.01M270.7 175.1h.01M274.0 175.1h.01M277.4 175.1h.01M280.7 175.1h.01M284.0 175.1h.01M287.3 175.1h.01M290.7 175.1h.01M294.0 175.1h.01M297.3 175.1h.01M300.7 175.1h.01M304.0 175.1h.01M94.2 178.3h.01M97.5 178.3h.01M100.9 178.3h.01M104.2 178.3h.01M107.5 178.3h.01M110.9 178.3h.01M114.2 178.3h.01M117.5 178.3h.01M120.8 178.3h.01M124.2 178.3h.01M127.5 178.3h.01M130.8 178.3h.01M134.2 178.3h.01M137.5 178.3h.01M140.8 178.3h.01M144.2 178.3h.01M147.5 178.3h.01M150.8 178.3h.01M154.1 178.3h.01M157.5 178.3h.01M160.8 178.3h.01M164.1 178.3h.01M167.5 178.3h.01M170.8 178.3h.01M174.1 178.3h.01M177.5 178.3h.01M180.8 178.3h.01M184.1 178.3h.01M187.4 178.3h.01M190.8 178.3h.01M194.1 178.3h.01M197.4 178.3h.01M200.8 178.3h.01M204.1 178.3h.01M207.4 178.3h.01M210.8 178.3h.01M214.1 178.3h.01M217.4 178.3h.01M220.7 178.3h.01M224.1 178.3h.01M227.4 178.3h.01M230.7 178.3h.01M234.1 178.3h.01M237.4 178.3h.01M240.7 178.3h.01M244.1 178.3h.01M247.4 178.3h.01M250.7 178.3h.01M254.0 178.3h.01M257.4 178.3h.01M260.7 178.3h.01M264.0 178.3h.01M267.4 178.3h.01M270.7 178.3h.01M274.0 178.3h.01M277.4 178.3h.01M280.7 178.3h.01M284.0 178.3h.01M287.3 178.3h.01M290.7 178.3h.01M294.0 178.3h.01M297.3 178.3h.01M300.7 178.3h.01M304.0 178.3h.01M94.2 181.6h.01M97.5 181.6h.01M100.9 181.6h.01M104.2 181.6h.01M107.5 181.6h.01M110.9 181.6h.01M114.2 181.6h.01M117.5 181.6h.01M120.8 181.6h.01M124.2 181.6h.01M127.5 181.6h.01M130.8 181.6h.01M134.2 181.6h.01M137.5 181.6h.01M140.8 181.6h.01M144.2 181.6h.01M147.5 181.6h.01M150.8 181.6h.01M154.1 181.6h.01M157.5 181.6h.01M160.8 181.6h.01M164.1 181.6h.01M167.5 181.6h.01M170.8 181.6h.01M174.1 181.6h.01M177.5 181.6h.01M180.8 181.6h.01M184.1 181.6h.01M187.4 181.6h.01M190.8 181.6h.01M194.1 181.6h.01M197.4 181.6h.01M200.8 181.6h.01M204.1 181.6h.01M207.4 181.6h.01M210.8 181.6h.01M214.1 181.6h.01M217.4 181.6h.01M220.7 181.6h.01M224.1 181.6h.01M227.4 181.6h.01M230.7 181.6h.01M234.1 181.6h.01M237.4 181.6h.01M240.7 181.6h.01M244.1 181.6h.01M247.4 181.6h.01M250.7 181.6h.01M254.0 181.6h.01M257.4 181.6h.01M260.7 181.6h.01M264.0 181.6h.01M267.4 181.6h.01M270.7 181.6h.01M274.0 181.6h.01M277.4 181.6h.01M280.7 181.6h.01M284.0 181.6h.01M287.3 181.6h.01M290.7 181.6h.01M294.0 181.6h.01M297.3 181.6h.01M300.7 181.6h.01M304.0 181.6h.01M94.2 184.8h.01M97.5 184.8h.01M100.9 184.8h.01M104.2 184.8h.01M107.5 184.8h.01M110.9 184.8h.01M114.2 184.8h.01M117.5 184.8h.01M120.8 184.8h.01M124.2 184.8h.01M127.5 184.8h.01M130.8 184.8h.01M134.2 184.8h.01M137.5 184.8h.01M140.8 184.8h.01M144.2 184.8h.01M147.5 184.8h.01M150.8 184.8h.01M154.1 184.8h.01M157.5 184.8h.01M160.8 184.8h.01M164.1 184.8h.01M167.5 184.8h.01M170.8 184.8h.01M174.1 184.8h.01M177.5 184.8h.01M180.8 184.8h.01M184.1 184.8h.01M187.4 184.8h.01M190.8 184.8h.01M194.1 184.8h.01M197.4 184.8h.01M200.8 184.8h.01M204.1 184.8h.01M207.4 184.8h.01M210.8 184.8h.01M214.1 184.8h.01M217.4 184.8h.01M220.7 184.8h.01M224.1 184.8h.01M227.4 184.8h.01M230.7 184.8h.01M234.1 184.8h.01M237.4 184.8h.01M240.7 184.8h.01M244.1 184.8h.01M247.4 184.8h.01M250.7 184.8h.01M254.0 184.8h.01M257.4 184.8h.01M260.7 184.8h.01M264.0 184.8h.01M267.4 184.8h.01M270.7 184.8h.01M274.0 184.8h.01M277.4 184.8h.01M280.7 184.8h.01M284.0 184.8h.01M287.3 184.8h.01M290.7 184.8h.01M294.0 184.8h.01M297.3 184.8h.01M300.7 184.8h.01M304.0 184.8h.01M94.2 188.0h.01M97.5 188.0h.01M100.9 188.0h.01M104.2 188.0h.01M107.5 188.0h.01M110.9 188.0h.01M114.2 188.0h.01M117.5 188.0h.01M120.8 188.0h.01M124.2 188.0h.01M127.5 188.0h.01M130.8 188.0h.01M134.2 188.0h.01M137.5 188.0h.01M140.8 188.0h.01M144.2 188.0h.01M147.5 188.0h.01M150.8 188.0h.01M154.1 188.0h.01M157.5 188.0h.01M160.8 188.0h.01M164.1 188.0h.01M167.5 188.0h.01M170.8 188.0h.01M174.1 188.0h.01M177.5 188.0h.01M180.8 188.0h.01M184.1 188.0h.01M187.4 188.0h.01M190.8 188.0h.01M194.1 188.0h.01M197.4 188.0h.01M200.8 188.0h.01M204.1 188.0h.01M207.4 188.0h.01M210.8 188.0h.01M214.1 188.0h.01M217.4 188.0h.01M220.7 188.0h.01M224.1 188.0h.01M227.4 188.0h.01M230.7 188.0h.01M234.1 188.0h.01M237.4 188.0h.01M240.7 188.0h.01M244.1 188.0h.01M247.4 188.0h.01M250.7 188.0h.01M254.0 188.0h.01M257.4 188.0h.01M260.7 188.0h.01M264.0 188.0h.01M267.4 188.0h.01M270.7 188.0h.01M274.0 188.0h.01M277.4 188.0h.01M280.7 188.0h.01M284.0 188.0h.01M287.3 188.0h.01M290.7 188.0h.01M294.0 188.0h.01M297.3 188.0h.01M300.7 188.0h.01M304.0 188.0h.01M94.2 191.2h.01M97.5 191.2h.01M100.9 191.2h.01M104.2 191.2h.01M107.5 191.2h.01M110.9 191.2h.01M114.2 191.2h.01M117.5 191.2h.01M120.8 191.2h.01M124.2 191.2h.01M127.5 191.2h.01M130.8 191.2h.01M134.2 191.2h.01M137.5 191.2h.01M140.8 191.2h.01M144.2 191.2h.01M147.5 191.2h.01M150.8 191.2h.01M154.1 191.2h.01M157.5 191.2h.01M160.8 191.2h.01M164.1 191.2h.01M167.5 191.2h.01M170.8 191.2h.01M174.1 191.2h.01M177.5 191.2h.01M180.8 191.2h.01M184.1 191.2h.01M187.4 191.2h.01M190.8 191.2h.01M194.1 191.2h.01M197.4 191.2h.01M200.8 191.2h.01M204.1 191.2h.01M207.4 191.2h.01M210.8 191.2h.01M214.1 191.2h.01M217.4 191.2h.01M220.7 191.2h.01M224.1 191.2h.01M227.4 191.2h.01M230.7 191.2h.01M234.1 191.2h.01M237.4 191.2h.01M240.7 191.2h.01M244.1 191.2h.01M247.4 191.2h.01M250.7 191.2h.01M254.0 191.2h.01M257.4 191.2h.01M260.7 191.2h.01M264.0 191.2h.01M267.4 191.2h.01M270.7 191.2h.01M274.0 191.2h.01M277.4 191.2h.01M280.7 191.2h.01M284.0 191.2h.01M287.3 191.2h.01M290.7 191.2h.01M294.0 191.2h.01M297.3 191.2h.01M300.7 191.2h.01M304.0 191.2h.01M94.2 194.4h.01M97.5 194.4h.01M100.9 194.4h.01M104.2 194.4h.01M107.5 194.4h.01M110.9 194.4h.01M114.2 194.4h.01M117.5 194.4h.01M120.8 194.4h.01M124.2 194.4h.01M127.5 194.4h.01M130.8 194.4h.01M134.2 194.4h.01M137.5 194.4h.01M140.8 194.4h.01M144.2 194.4h.01M147.5 194.4h.01M150.8 194.4h.01M154.1 194.4h.01M157.5 194.4h.01M160.8 194.4h.01M164.1 194.4h.01M167.5 194.4h.01M170.8 194.4h.01M174.1 194.4h.01M177.5 194.4h.01M180.8 194.4h.01M184.1 194.4h.01M187.4 194.4h.01M190.8 194.4h.01M194.1 194.4h.01M197.4 194.4h.01M200.8 194.4h.01M204.1 194.4h.01M207.4 194.4h.01M210.8 194.4h.01M214.1 194.4h.01M217.4 194.4h.01M220.7 194.4h.01M224.1 194.4h.01M227.4 194.4h.01M230.7 194.4h.01M234.1 194.4h.01M237.4 194.4h.01M240.7 194.4h.01M244.1 194.4h.01M247.4 194.4h.01M250.7 194.4h.01M254.0 194.4h.01M257.4 194.4h.01M260.7 194.4h.01M264.0 194.4h.01M267.4 194.4h.01M270.7 194.4h.01M274.0 194.4h.01M277.4 194.4h.01M280.7 194.4h.01M284.0 194.4h.01M287.3 194.4h.01M290.7 194.4h.01M294.0 194.4h.01M297.3 194.4h.01M300.7 194.4h.01M304.0 194.4h.01M94.2 197.6h.01M97.5 197.6h.01M100.9 197.6h.01M104.2 197.6h.01M107.5 197.6h.01M110.9 197.6h.01M114.2 197.6h.01M117.5 197.6h.01M120.8 197.6h.01M124.2 197.6h.01M127.5 197.6h.01M130.8 197.6h.01M134.2 197.6h.01M137.5 197.6h.01M140.8 197.6h.01M144.2 197.6h.01M147.5 197.6h.01M150.8 197.6h.01M154.1 197.6h.01M157.5 197.6h.01M160.8 197.6h.01M164.1 197.6h.01M167.5 197.6h.01M170.8 197.6h.01M174.1 197.6h.01M177.5 197.6h.01M180.8 197.6h.01M184.1 197.6h.01M187.4 197.6h.01M190.8 197.6h.01M194.1 197.6h.01M197.4 197.6h.01M200.8 197.6h.01M204.1 197.6h.01M207.4 197.6h.01M210.8 197.6h.01M214.1 197.6h.01M217.4 197.6h.01M220.7 197.6h.01M224.1 197.6h.01M227.4 197.6h.01M230.7 197.6h.01M234.1 197.6h.01M237.4 197.6h.01M240.7 197.6h.01M244.1 197.6h.01M247.4 197.6h.01M250.7 197.6h.01M254.0 197.6h.01M257.4 197.6h.01M260.7 197.6h.01M264.0 197.6h.01M267.4 197.6h.01M270.7 197.6h.01M274.0 197.6h.01M277.4 197.6h.01M280.7 197.6h.01M284.0 197.6h.01M287.3 197.6h.01M290.7 197.6h.01M294.0 197.6h.01M297.3 197.6h.01M300.7 197.6h.01M304.0 197.6h.01M94.2 200.8h.01M97.5 200.8h.01M100.9 200.8h.01M104.2 200.8h.01M107.5 200.8h.01M110.9 200.8h.01M114.2 200.8h.01M117.5 200.8h.01M120.8 200.8h.01M124.2 200.8h.01M127.5 200.8h.01M130.8 200.8h.01M134.2 200.8h.01M137.5 200.8h.01M140.8 200.8h.01M144.2 200.8h.01M147.5 200.8h.01M150.8 200.8h.01M154.1 200.8h.01M157.5 200.8h.01M160.8 200.8h.01M164.1 200.8h.01M167.5 200.8h.01M170.8 200.8h.01M174.1 200.8h.01M177.5 200.8h.01M180.8 200.8h.01M184.1 200.8h.01M187.4 200.8h.01M190.8 200.8h.01M194.1 200.8h.01M197.4 200.8h.01M200.8 200.8h.01M204.1 200.8h.01M207.4 200.8h.01M210.8 200.8h.01M214.1 200.8h.01M217.4 200.8h.01M220.7 200.8h.01M224.1 200.8h.01M227.4 200.8h.01M230.7 200.8h.01M234.1 200.8h.01M237.4 200.8h.01M240.7 200.8h.01M244.1 200.8h.01M247.4 200.8h.01M250.7 200.8h.01M254.0 200.8h.01M257.4 200.8h.01M260.7 200.8h.01M264.0 200.8h.01M267.4 200.8h.01M270.7 200.8h.01M274.0 200.8h.01M277.4 200.8h.01M280.7 200.8h.01M284.0 200.8h.01M287.3 200.8h.01M290.7 200.8h.01M294.0 200.8h.01M297.3 200.8h.01M300.7 200.8h.01M304.0 200.8h.01M94.2 204.0h.01M97.5 204.0h.01M100.9 204.0h.01M104.2 204.0h.01M107.5 204.0h.01M110.9 204.0h.01M114.2 204.0h.01M117.5 204.0h.01M120.8 204.0h.01M124.2 204.0h.01M127.5 204.0h.01M130.8 204.0h.01M134.2 204.0h.01M137.5 204.0h.01M140.8 204.0h.01M144.2 204.0h.01M147.5 204.0h.01M150.8 204.0h.01M154.1 204.0h.01M157.5 204.0h.01M160.8 204.0h.01M164.1 204.0h.01M167.5 204.0h.01M170.8 204.0h.01M174.1 204.0h.01M177.5 204.0h.01M180.8 204.0h.01M184.1 204.0h.01M187.4 204.0h.01M190.8 204.0h.01M194.1 204.0h.01M197.4 204.0h.01M200.8 204.0h.01M204.1 204.0h.01M207.4 204.0h.01M210.8 204.0h.01M214.1 204.0h.01M217.4 204.0h.01M220.7 204.0h.01M224.1 204.0h.01M227.4 204.0h.01M230.7 204.0h.01M234.1 204.0h.01M237.4 204.0h.01M240.7 204.0h.01M244.1 204.0h.01M247.4 204.0h.01M250.7 204.0h.01M254.0 204.0h.01M257.4 204.0h.01M260.7 204.0h.01M264.0 204.0h.01M267.4 204.0h.01M270.7 204.0h.01M274.0 204.0h.01M277.4 204.0h.01M280.7 204.0h.01M284.0 204.0h.01M287.3 204.0h.01M290.7 204.0h.01M294.0 204.0h.01M297.3 204.0h.01M300.7 204.0h.01M304.0 204.0h.01M94.2 207.2h.01M97.5 207.2h.01M100.9 207.2h.01M104.2 207.2h.01M107.5 207.2h.01M110.9 207.2h.01M114.2 207.2h.01M117.5 207.2h.01M120.8 207.2h.01M124.2 207.2h.01M127.5 207.2h.01M130.8 207.2h.01M134.2 207.2h.01M137.5 207.2h.01M140.8 207.2h.01M144.2 207.2h.01M147.5 207.2h.01M150.8 207.2h.01M154.1 207.2h.01M157.5 207.2h.01M160.8 207.2h.01M164.1 207.2h.01M167.5 207.2h.01M170.8 207.2h.01M174.1 207.2h.01M177.5 207.2h.01M180.8 207.2h.01M184.1 207.2h.01M187.4 207.2h.01M190.8 207.2h.01M194.1 207.2h.01M197.4 207.2h.01M200.8 207.2h.01M204.1 207.2h.01M207.4 207.2h.01M210.8 207.2h.01M214.1 207.2h.01M217.4 207.2h.01M220.7 207.2h.01M224.1 207.2h.01M227.4 207.2h.01M230.7 207.2h.01M234.1 207.2h.01M237.4 207.2h.01M240.7 207.2h.01M244.1 207.2h.01M247.4 207.2h.01M250.7 207.2h.01M254.0 207.2h.01M257.4 207.2h.01M260.7 207.2h.01M264.0 207.2h.01M267.4 207.2h.01M270.7 207.2h.01M274.0 207.2h.01M277.4 207.2h.01M280.7 207.2h.01M284.0 207.2h.01M287.3 207.2h.01M290.7 207.2h.01M294.0 207.2h.01M297.3 207.2h.01M300.7 207.2h.01M304.0 207.2h.01M94.2 210.4h.01M97.5 210.4h.01M100.9 210.4h.01M104.2 210.4h.01M107.5 210.4h.01M110.9 210.4h.01M114.2 210.4h.01M117.5 210.4h.01M120.8 210.4h.01M124.2 210.4h.01M127.5 210.4h.01M130.8 210.4h.01M134.2 210.4h.01M137.5 210.4h.01M140.8 210.4h.01M144.2 210.4h.01M147.5 210.4h.01M150.8 210.4h.01M154.1 210.4h.01M157.5 210.4h.01M160.8 210.4h.01M164.1 210.4h.01M167.5 210.4h.01M170.8 210.4h.01M174.1 210.4h.01M177.5 210.4h.01M180.8 210.4h.01M184.1 210.4h.01M187.4 210.4h.01M190.8 210.4h.01M194.1 210.4h.01M197.4 210.4h.01M200.8 210.4h.01M204.1 210.4h.01M207.4 210.4h.01M210.8 210.4h.01M214.1 210.4h.01M217.4 210.4h.01M220.7 210.4h.01M224.1 210.4h.01M227.4 210.4h.01M230.7 210.4h.01M234.1 210.4h.01M237.4 210.4h.01M240.7 210.4h.01M244.1 210.4h.01M247.4 210.4h.01M250.7 210.4h.01M254.0 210.4h.01M257.4 210.4h.01M260.7 210.4h.01M264.0 210.4h.01M267.4 210.4h.01M270.7 210.4h.01M274.0 210.4h.01M277.4 210.4h.01M280.7 210.4h.01M284.0 210.4h.01M287.3 210.4h.01M290.7 210.4h.01M294.0 210.4h.01M297.3 210.4h.01M300.7 210.4h.01M304.0 210.4h.01M94.2 213.6h.01M97.5 213.6h.01M100.9 213.6h.01M104.2 213.6h.01M107.5 213.6h.01M110.9 213.6h.01M114.2 213.6h.01M117.5 213.6h.01M120.8 213.6h.01M124.2 213.6h.01M127.5 213.6h.01M130.8 213.6h.01M134.2 213.6h.01M137.5 213.6h.01M140.8 213.6h.01M144.2 213.6h.01M147.5 213.6h.01M150.8 213.6h.01M154.1 213.6h.01M157.5 213.6h.01M160.8 213.6h.01M164.1 213.6h.01M167.5 213.6h.01M170.8 213.6h.01M174.1 213.6h.01M177.5 213.6h.01M180.8 213.6h.01M184.1 213.6h.01M187.4 213.6h.01M190.8 213.6h.01M194.1 213.6h.01M197.4 213.6h.01M200.8 213.6h.01M204.1 213.6h.01M207.4 213.6h.01M210.8 213.6h.01M214.1 213.6h.01M217.4 213.6h.01M220.7 213.6h.01M224.1 213.6h.01M227.4 213.6h.01M230.7 213.6h.01M234.1 213.6h.01M237.4 213.6h.01M240.7 213.6h.01M244.1 213.6h.01M247.4 213.6h.01M250.7 213.6h.01M254.0 213.6h.01M257.4 213.6h.01M260.7 213.6h.01M264.0 213.6h.01M267.4 213.6h.01M270.7 213.6h.01M274.0 213.6h.01M277.4 213.6h.01M280.7 213.6h.01M284.0 213.6h.01M287.3 213.6h.01M290.7 213.6h.01M294.0 213.6h.01M297.3 213.6h.01M300.7 213.6h.01M304.0 213.6h.01M94.2 216.8h.01M97.5 216.8h.01M100.9 216.8h.01M104.2 216.8h.01M107.5 216.8h.01M110.9 216.8h.01M114.2 216.8h.01M117.5 216.8h.01M120.8 216.8h.01M124.2 216.8h.01M127.5 216.8h.01M130.8 216.8h.01M134.2 216.8h.01M137.5 216.8h.01M140.8 216.8h.01M144.2 216.8h.01M147.5 216.8h.01M150.8 216.8h.01M154.1 216.8h.01M157.5 216.8h.01M160.8 216.8h.01M164.1 216.8h.01M167.5 216.8h.01M170.8 216.8h.01M174.1 216.8h.01M177.5 216.8h.01M180.8 216.8h.01M184.1 216.8h.01M187.4 216.8h.01M190.8 216.8h.01M194.1 216.8h.01M197.4 216.8h.01M200.8 216.8h.01M204.1 216.8h.01M207.4 216.8h.01M210.8 216.8h.01M214.1 216.8h.01M217.4 216.8h.01M220.7 216.8h.01M224.1 216.8h.01M227.4 216.8h.01M230.7 216.8h.01M234.1 216.8h.01M237.4 216.8h.01M240.7 216.8h.01M244.1 216.8h.01M247.4 216.8h.01M250.7 216.8h.01M254.0 216.8h.01M257.4 216.8h.01M260.7 216.8h.01M264.0 216.8h.01M267.4 216.8h.01M270.7 216.8h.01M274.0 216.8h.01M277.4 216.8h.01M280.7 216.8h.01M284.0 216.8h.01M287.3 216.8h.01M290.7 216.8h.01M294.0 216.8h.01M297.3 216.8h.01M300.7 216.8h.01M304.0 216.8h.01M94.2 220.0h.01M97.5 220.0h.01M100.9 220.0h.01M104.2 220.0h.01M107.5 220.0h.01M110.9 220.0h.01M114.2 220.0h.01M117.5 220.0h.01M120.8 220.0h.01M124.2 220.0h.01M127.5 220.0h.01M130.8 220.0h.01M134.2 220.0h.01M137.5 220.0h.01M140.8 220.0h.01M144.2 220.0h.01M147.5 220.0h.01M150.8 220.0h.01M154.1 220.0h.01M157.5 220.0h.01M160.8 220.0h.01M164.1 220.0h.01M167.5 220.0h.01M170.8 220.0h.01M174.1 220.0h.01M177.5 220.0h.01M180.8 220.0h.01M184.1 220.0h.01M187.4 220.0h.01M190.8 220.0h.01M194.1 220.0h.01M197.4 220.0h.01M200.8 220.0h.01M204.1 220.0h.01M207.4 220.0h.01M210.8 220.0h.01M214.1 220.0h.01M217.4 220.0h.01M220.7 220.0h.01M224.1 220.0h.01M227.4 220.0h.01M230.7 220.0h.01M234.1 220.0h.01M237.4 220.0h.01M240.7 220.0h.01M244.1 220.0h.01M247.4 220.0h.01M250.7 220.0h.01M254.0 220.0h.01M257.4 220.0h.01M260.7 220.0h.01M264.0 220.0h.01M267.4 220.0h.01M270.7 220.0h.01M274.0 220.0h.01M277.4 220.0h.01M280.7 220.0h.01M284.0 220.0h.01M287.3 220.0h.01M290.7 220.0h.01M294.0 220.0h.01M297.3 220.0h.01M300.7 220.0h.01M304.0 220.0h.01M94.2 223.2h.01M97.5 223.2h.01M100.9 223.2h.01M104.2 223.2h.01M107.5 223.2h.01M110.9 223.2h.01M114.2 223.2h.01M117.5 223.2h.01M120.8 223.2h.01M124.2 223.2h.01M127.5 223.2h.01M130.8 223.2h.01M134.2 223.2h.01M137.5 223.2h.01M140.8 223.2h.01M144.2 223.2h.01M147.5 223.2h.01M150.8 223.2h.01M154.1 223.2h.01M157.5 223.2h.01M160.8 223.2h.01M164.1 223.2h.01M167.5 223.2h.01M170.8 223.2h.01M174.1 223.2h.01M177.5 223.2h.01M180.8 223.2h.01M184.1 223.2h.01M187.4 223.2h.01M190.8 223.2h.01M194.1 223.2h.01M197.4 223.2h.01M200.8 223.2h.01M204.1 223.2h.01M207.4 223.2h.01M210.8 223.2h.01M214.1 223.2h.01M217.4 223.2h.01M220.7 223.2h.01M224.1 223.2h.01M227.4 223.2h.01M230.7 223.2h.01M234.1 223.2h.01M237.4 223.2h.01M240.7 223.2h.01M244.1 223.2h.01M247.4 223.2h.01M250.7 223.2h.01M254.0 223.2h.01M257.4 223.2h.01M260.7 223.2h.01M264.0 223.2h.01M267.4 223.2h.01M270.7 223.2h.01M274.0 223.2h.01M277.4 223.2h.01M280.7 223.2h.01M284.0 223.2h.01M287.3 223.2h.01M290.7 223.2h.01M294.0 223.2h.01M297.3 223.2h.01M300.7 223.2h.01M304.0 223.2h.01M94.2 226.4h.01M97.5 226.4h.01M100.9 226.4h.01M104.2 226.4h.01M107.5 226.4h.01M110.9 226.4h.01M114.2 226.4h.01M117.5 226.4h.01M120.8 226.4h.01M124.2 226.4h.01M127.5 226.4h.01M130.8 226.4h.01M134.2 226.4h.01M137.5 226.4h.01M140.8 226.4h.01M144.2 226.4h.01M147.5 226.4h.01M150.8 226.4h.01M154.1 226.4h.01M157.5 226.4h.01M160.8 226.4h.01M164.1 226.4h.01M167.5 226.4h.01M170.8 226.4h.01M174.1 226.4h.01M177.5 226.4h.01M180.8 226.4h.01M184.1 226.4h.01M187.4 226.4h.01M190.8 226.4h.01M194.1 226.4h.01M197.4 226.4h.01M200.8 226.4h.01M204.1 226.4h.01M207.4 226.4h.01M210.8 226.4h.01M214.1 226.4h.01M217.4 226.4h.01M220.7 226.4h.01M224.1 226.4h.01M227.4 226.4h.01M230.7 226.4h.01M234.1 226.4h.01M237.4 226.4h.01M240.7 226.4h.01M244.1 226.4h.01M247.4 226.4h.01M250.7 226.4h.01M254.0 226.4h.01M257.4 226.4h.01M260.7 226.4h.01M264.0 226.4h.01M267.4 226.4h.01M270.7 226.4h.01M274.0 226.4h.01M277.4 226.4h.01M280.7 226.4h.01M284.0 226.4h.01M287.3 226.4h.01M290.7 226.4h.01M294.0 226.4h.01M297.3 226.4h.01M300.7 226.4h.01M304.0 226.4h.01M94.2 229.6h.01M97.5 229.6h.01M100.9 229.6h.01M104.2 229.6h.01M107.5 229.6h.01M110.9 229.6h.01M114.2 229.6h.01M117.5 229.6h.01M120.8 229.6h.01M124.2 229.6h.01M127.5 229.6h.01M130.8 229.6h.01M134.2 229.6h.01M137.5 229.6h.01M140.8 229.6h.01M144.2 229.6h.01M147.5 229.6h.01M150.8 229.6h.01M154.1 229.6h.01M157.5 229.6h.01M160.8 229.6h.01M164.1 229.6h.01M167.5 229.6h.01M170.8 229.6h.01M174.1 229.6h.01M177.5 229.6h.01M180.8 229.6h.01M184.1 229.6h.01M187.4 229.6h.01M190.8 229.6h.01M194.1 229.6h.01M197.4 229.6h.01M200.8 229.6h.01M204.1 229.6h.01M207.4 229.6h.01M210.8 229.6h.01M214.1 229.6h.01M217.4 229.6h.01M220.7 229.6h.01M224.1 229.6h.01M227.4 229.6h.01M230.7 229.6h.01M234.1 229.6h.01M237.4 229.6h.01M240.7 229.6h.01M244.1 229.6h.01M247.4 229.6h.01M250.7 229.6h.01M254.0 229.6h.01M257.4 229.6h.01M260.7 229.6h.01M264.0 229.6h.01M267.4 229.6h.01M270.7 229.6h.01M274.0 229.6h.01M277.4 229.6h.01M280.7 229.6h.01M284.0 229.6h.01M287.3 229.6h.01M290.7 229.6h.01M294.0 229.6h.01M297.3 229.6h.01M300.7 229.6h.01M304.0 229.6h.01M94.2 232.9h.01M97.5 232.9h.01M100.9 232.9h.01M104.2 232.9h.01M107.5 232.9h.01M110.9 232.9h.01M114.2 232.9h.01M117.5 232.9h.01M120.8 232.9h.01M124.2 232.9h.01M127.5 232.9h.01M130.8 232.9h.01M134.2 232.9h.01M137.5 232.9h.01M140.8 232.9h.01M144.2 232.9h.01M147.5 232.9h.01M150.8 232.9h.01M154.1 232.9h.01M157.5 232.9h.01M160.8 232.9h.01M164.1 232.9h.01M167.5 232.9h.01M170.8 232.9h.01M174.1 232.9h.01M177.5 232.9h.01M180.8 232.9h.01M184.1 232.9h.01M187.4 232.9h.01M190.8 232.9h.01M194.1 232.9h.01M197.4 232.9h.01M200.8 232.9h.01M204.1 232.9h.01M207.4 232.9h.01M210.8 232.9h.01M214.1 232.9h.01M217.4 232.9h.01M220.7 232.9h.01M224.1 232.9h.01M227.4 232.9h.01M230.7 232.9h.01M234.1 232.9h.01M237.4 232.9h.01M240.7 232.9h.01M244.1 232.9h.01M247.4 232.9h.01M250.7 232.9h.01M254.0 232.9h.01M257.4 232.9h.01M260.7 232.9h.01M264.0 232.9h.01M267.4 232.9h.01M270.7 232.9h.01M274.0 232.9h.01M277.4 232.9h.01M280.7 232.9h.01M284.0 232.9h.01M287.3 232.9h.01M290.7 232.9h.01M294.0 232.9h.01M297.3 232.9h.01M300.7 232.9h.01M304.0 232.9h.01M94.2 236.1h.01M97.5 236.1h.01M100.9 236.1h.01M104.2 236.1h.01M107.5 236.1h.01M110.9 236.1h.01M114.2 236.1h.01M117.5 236.1h.01M120.8 236.1h.01M124.2 236.1h.01M127.5 236.1h.01M130.8 236.1h.01M134.2 236.1h.01M137.5 236.1h.01M140.8 236.1h.01M144.2 236.1h.01M147.5 236.1h.01M150.8 236.1h.01M154.1 236.1h.01M157.5 236.1h.01M160.8 236.1h.01M164.1 236.1h.01M167.5 236.1h.01M170.8 236.1h.01M174.1 236.1h.01M177.5 236.1h.01M180.8 236.1h.01M184.1 236.1h.01M187.4 236.1h.01M190.8 236.1h.01M194.1 236.1h.01M197.4 236.1h.01M200.8 236.1h.01M204.1 236.1h.01M207.4 236.1h.01M210.8 236.1h.01M214.1 236.1h.01M217.4 236.1h.01M220.7 236.1h.01M224.1 236.1h.01M227.4 236.1h.01M230.7 236.1h.01M234.1 236.1h.01M237.4 236.1h.01M240.7 236.1h.01M244.1 236.1h.01M247.4 236.1h.01M250.7 236.1h.01M254.0 236.1h.01M257.4 236.1h.01M260.7 236.1h.01M264.0 236.1h.01M267.4 236.1h.01M270.7 236.1h.01M274.0 236.1h.01M277.4 236.1h.01M280.7 236.1h.01M284.0 236.1h.01M287.3 236.1h.01M290.7 236.1h.01M294.0 236.1h.01M297.3 236.1h.01M300.7 236.1h.01M304.0 236.1h.01M94.2 239.3h.01M97.5 239.3h.01M100.9 239.3h.01M104.2 239.3h.01M107.5 239.3h.01M110.9 239.3h.01M114.2 239.3h.01M117.5 239.3h.01M120.8 239.3h.01M124.2 239.3h.01M127.5 239.3h.01M130.8 239.3h.01M134.2 239.3h.01M137.5 239.3h.01M140.8 239.3h.01M144.2 239.3h.01M147.5 239.3h.01M150.8 239.3h.01M154.1 239.3h.01M157.5 239.3h.01M160.8 239.3h.01M164.1 239.3h.01M167.5 239.3h.01M170.8 239.3h.01M174.1 239.3h.01M177.5 239.3h.01M180.8 239.3h.01M184.1 239.3h.01M187.4 239.3h.01M190.8 239.3h.01M194.1 239.3h.01M197.4 239.3h.01M200.8 239.3h.01M204.1 239.3h.01M207.4 239.3h.01M210.8 239.3h.01M214.1 239.3h.01M217.4 239.3h.01M220.7 239.3h.01M224.1 239.3h.01M227.4 239.3h.01M230.7 239.3h.01M234.1 239.3h.01M237.4 239.3h.01M240.7 239.3h.01M244.1 239.3h.01M247.4 239.3h.01M250.7 239.3h.01M254.0 239.3h.01M257.4 239.3h.01M260.7 239.3h.01M264.0 239.3h.01M267.4 239.3h.01M270.7 239.3h.01M274.0 239.3h.01M277.4 239.3h.01M280.7 239.3h.01M284.0 239.3h.01M287.3 239.3h.01M290.7 239.3h.01M294.0 239.3h.01M297.3 239.3h.01M300.7 239.3h.01M304.0 239.3h.01M94.2 242.5h.01M97.5 242.5h.01M100.9 242.5h.01M104.2 242.5h.01M107.5 242.5h.01M110.9 242.5h.01M114.2 242.5h.01M117.5 242.5h.01M120.8 242.5h.01M124.2 242.5h.01M127.5 242.5h.01M130.8 242.5h.01M134.2 242.5h.01M137.5 242.5h.01M140.8 242.5h.01M144.2 242.5h.01M147.5 242.5h.01M150.8 242.5h.01M154.1 242.5h.01M157.5 242.5h.01M160.8 242.5h.01M164.1 242.5h.01M167.5 242.5h.01M170.8 242.5h.01M174.1 242.5h.01M177.5 242.5h.01M180.8 242.5h.01M184.1 242.5h.01M187.4 242.5h.01M190.8 242.5h.01M194.1 242.5h.01M197.4 242.5h.01M200.8 242.5h.01M204.1 242.5h.01M207.4 242.5h.01M210.8 242.5h.01M214.1 242.5h.01M217.4 242.5h.01M220.7 242.5h.01M224.1 242.5h.01M227.4 242.5h.01M230.7 242.5h.01M234.1 242.5h.01M237.4 242.5h.01M240.7 242.5h.01M244.1 242.5h.01M247.4 242.5h.01M250.7 242.5h.01M254.0 242.5h.01M257.4 242.5h.01M260.7 242.5h.01M264.0 242.5h.01M267.4 242.5h.01M270.7 242.5h.01M274.0 242.5h.01M277.4 242.5h.01M280.7 242.5h.01M284.0 242.5h.01M287.3 242.5h.01M290.7 242.5h.01M294.0 242.5h.01M297.3 242.5h.01M300.7 242.5h.01M304.0 242.5h.01M94.2 245.7h.01M97.5 245.7h.01M100.9 245.7h.01M104.2 245.7h.01M107.5 245.7h.01M110.9 245.7h.01M114.2 245.7h.01M117.5 245.7h.01M120.8 245.7h.01M124.2 245.7h.01M127.5 245.7h.01M130.8 245.7h.01M134.2 245.7h.01M137.5 245.7h.01M140.8 245.7h.01M144.2 245.7h.01M147.5 245.7h.01M150.8 245.7h.01M154.1 245.7h.01M157.5 245.7h.01M160.8 245.7h.01M164.1 245.7h.01M167.5 245.7h.01M170.8 245.7h.01M174.1 245.7h.01M177.5 245.7h.01M180.8 245.7h.01M184.1 245.7h.01M187.4 245.7h.01M190.8 245.7h.01M194.1 245.7h.01M197.4 245.7h.01M200.8 245.7h.01M204.1 245.7h.01M207.4 245.7h.01M210.8 245.7h.01M214.1 245.7h.01M217.4 245.7h.01M220.7 245.7h.01M224.1 245.7h.01M227.4 245.7h.01M230.7 245.7h.01M234.1 245.7h.01M237.4 245.7h.01M240.7 245.7h.01M244.1 245.7h.01M247.4 245.7h.01M250.7 245.7h.01M254.0 245.7h.01M257.4 245.7h.01M260.7 245.7h.01M264.0 245.7h.01M267.4 245.7h.01M270.7 245.7h.01M274.0 245.7h.01M277.4 245.7h.01M280.7 245.7h.01M284.0 245.7h.01M287.3 245.7h.01M290.7 245.7h.01M294.0 245.7h.01M297.3 245.7h.01M300.7 245.7h.01M304.0 245.7h.01M94.2 248.9h.01M97.5 248.9h.01M100.9 248.9h.01M104.2 248.9h.01M107.5 248.9h.01M110.9 248.9h.01M114.2 248.9h.01M117.5 248.9h.01M120.8 248.9h.01M124.2 248.9h.01M127.5 248.9h.01M130.8 248.9h.01M134.2 248.9h.01M137.5 248.9h.01M140.8 248.9h.01M144.2 248.9h.01M147.5 248.9h.01M150.8 248.9h.01M154.1 248.9h.01M157.5 248.9h.01M160.8 248.9h.01M164.1 248.9h.01M167.5 248.9h.01M170.8 248.9h.01M174.1 248.9h.01M177.5 248.9h.01M180.8 248.9h.01M184.1 248.9h.01M187.4 248.9h.01M190.8 248.9h.01M194.1 248.9h.01M197.4 248.9h.01M200.8 248.9h.01M204.1 248.9h.01M207.4 248.9h.01M210.8 248.9h.01M214.1 248.9h.01M217.4 248.9h.01M220.7 248.9h.01M224.1 248.9h.01M227.4 248.9h.01M230.7 248.9h.01M234.1 248.9h.01M237.4 248.9h.01M240.7 248.9h.01M244.1 248.9h.01M247.4 248.9h.01M250.7 248.9h.01M254.0 248.9h.01M257.4 248.9h.01M260.7 248.9h.01M264.0 248.9h.01M267.4 248.9h.01M270.7 248.9h.01M274.0 248.9h.01M277.4 248.9h.01M280.7 248.9h.01M284.0 248.9h.01M287.3 248.9h.01M290.7 248.9h.01M294.0 248.9h.01M297.3 248.9h.01M300.7 248.9h.01M304.0 248.9h.01M94.2 252.1h.01M97.5 252.1h.01M100.9 252.1h.01M104.2 252.1h.01M107.5 252.1h.01M110.9 252.1h.01M114.2 252.1h.01M117.5 252.1h.01M120.8 252.1h.01M124.2 252.1h.01M127.5 252.1h.01M130.8 252.1h.01M134.2 252.1h.01M137.5 252.1h.01M140.8 252.1h.01M144.2 252.1h.01M147.5 252.1h.01M150.8 252.1h.01M154.1 252.1h.01M157.5 252.1h.01M160.8 252.1h.01M164.1 252.1h.01M167.5 252.1h.01M170.8 252.1h.01M174.1 252.1h.01M177.5 252.1h.01M180.8 252.1h.01M184.1 252.1h.01M187.4 252.1h.01M190.8 252.1h.01M194.1 252.1h.01M197.4 252.1h.01M200.8 252.1h.01M204.1 252.1h.01M207.4 252.1h.01M210.8 252.1h.01M214.1 252.1h.01M217.4 252.1h.01M220.7 252.1h.01M224.1 252.1h.01M227.4 252.1h.01M230.7 252.1h.01M234.1 252.1h.01M237.4 252.1h.01M240.7 252.1h.01M244.1 252.1h.01M247.4 252.1h.01M250.7 252.1h.01M254.0 252.1h.01M257.4 252.1h.01M260.7 252.1h.01M264.0 252.1h.01M267.4 252.1h.01M270.7 252.1h.01M274.0 252.1h.01M277.4 252.1h.01M280.7 252.1h.01M284.0 252.1h.01M287.3 252.1h.01M290.7 252.1h.01M294.0 252.1h.01M297.3 252.1h.01M300.7 252.1h.01M304.0 252.1h.01M94.2 255.3h.01M97.5 255.3h.01M100.9 255.3h.01M104.2 255.3h.01M107.5 255.3h.01M110.9 255.3h.01M114.2 255.3h.01M117.5 255.3h.01M120.8 255.3h.01M124.2 255.3h.01M127.5 255.3h.01M130.8 255.3h.01M134.2 255.3h.01M137.5 255.3h.01M140.8 255.3h.01M144.2 255.3h.01M147.5 255.3h.01M150.8 255.3h.01M154.1 255.3h.01M157.5 255.3h.01M160.8 255.3h.01M164.1 255.3h.01M167.5 255.3h.01M170.8 255.3h.01M174.1 255.3h.01M177.5 255.3h.01M180.8 255.3h.01M184.1 255.3h.01M187.4 255.3h.01M190.8 255.3h.01M194.1 255.3h.01M197.4 255.3h.01M200.8 255.3h.01M204.1 255.3h.01M207.4 255.3h.01M210.8 255.3h.01M214.1 255.3h.01M217.4 255.3h.01M220.7 255.3h.01M224.1 255.3h.01M227.4 255.3h.01M230.7 255.3h.01M234.1 255.3h.01M237.4 255.3h.01M240.7 255.3h.01M244.1 255.3h.01M247.4 255.3h.01M250.7 255.3h.01M254.0 255.3h.01M257.4 255.3h.01M260.7 255.3h.01M264.0 255.3h.01M267.4 255.3h.01M270.7 255.3h.01M274.0 255.3h.01M277.4 255.3h.01M280.7 255.3h.01M284.0 255.3h.01M287.3 255.3h.01M290.7 255.3h.01M294.0 255.3h.01M297.3 255.3h.01M300.7 255.3h.01M304.0 255.3h.01M94.2 258.5h.01M97.5 258.5h.01M100.9 258.5h.01M104.2 258.5h.01M107.5 258.5h.01M110.9 258.5h.01M114.2 258.5h.01M117.5 258.5h.01M120.8 258.5h.01M124.2 258.5h.01M127.5 258.5h.01M130.8 258.5h.01M134.2 258.5h.01M137.5 258.5h.01M140.8 258.5h.01M144.2 258.5h.01M147.5 258.5h.01M150.8 258.5h.01M154.1 258.5h.01M157.5 258.5h.01M160.8 258.5h.01M164.1 258.5h.01M167.5 258.5h.01M170.8 258.5h.01M174.1 258.5h.01M177.5 258.5h.01M180.8 258.5h.01M184.1 258.5h.01M187.4 258.5h.01M190.8 258.5h.01M194.1 258.5h.01M197.4 258.5h.01M200.8 258.5h.01M204.1 258.5h.01M207.4 258.5h.01M210.8 258.5h.01M214.1 258.5h.01M217.4 258.5h.01M220.7 258.5h.01M224.1 258.5h.01M227.4 258.5h.01M230.7 258.5h.01M234.1 258.5h.01M237.4 258.5h.01M240.7 258.5h.01M244.1 258.5h.01M247.4 258.5h.01M250.7 258.5h.01M254.0 258.5h.01M257.4 258.5h.01M260.7 258.5h.01M264.0 258.5h.01M267.4 258.5h.01M270.7 258.5h.01M274.0 258.5h.01M277.4 258.5h.01M280.7 258.5h.01M284.0 258.5h.01M287.3 258.5h.01M290.7 258.5h.01M294.0 258.5h.01M297.3 258.5h.01M300.7 258.5h.01M304.0 258.5h.01M94.2 261.7h.01M97.5 261.7h.01M100.9 261.7h.01M104.2 261.7h.01M107.5 261.7h.01M110.9 261.7h.01M114.2 261.7h.01M117.5 261.7h.01M120.8 261.7h.01M124.2 261.7h.01M127.5 261.7h.01M130.8 261.7h.01M134.2 261.7h.01M137.5 261.7h.01M140.8 261.7h.01M144.2 261.7h.01M147.5 261.7h.01M150.8 261.7h.01M154.1 261.7h.01M157.5 261.7h.01M160.8 261.7h.01M164.1 261.7h.01M167.5 261.7h.01M170.8 261.7h.01M174.1 261.7h.01M177.5 261.7h.01M180.8 261.7h.01M184.1 261.7h.01M187.4 261.7h.01M190.8 261.7h.01M194.1 261.7h.01M197.4 261.7h.01M200.8 261.7h.01M204.1 261.7h.01M207.4 261.7h.01M210.8 261.7h.01M214.1 261.7h.01M217.4 261.7h.01M220.7 261.7h.01M224.1 261.7h.01M227.4 261.7h.01M230.7 261.7h.01M234.1 261.7h.01M237.4 261.7h.01M240.7 261.7h.01M244.1 261.7h.01M247.4 261.7h.01M250.7 261.7h.01M254.0 261.7h.01M257.4 261.7h.01M260.7 261.7h.01M264.0 261.7h.01M267.4 261.7h.01M270.7 261.7h.01M274.0 261.7h.01M277.4 261.7h.01M280.7 261.7h.01M284.0 261.7h.01M287.3 261.7h.01M290.7 261.7h.01M294.0 261.7h.01M297.3 261.7h.01M300.7 261.7h.01M304.0 261.7h.01M94.2 264.9h.01M97.5 264.9h.01M100.9 264.9h.01M104.2 264.9h.01M107.5 264.9h.01M110.9 264.9h.01M114.2 264.9h.01M117.5 264.9h.01M120.8 264.9h.01M124.2 264.9h.01M127.5 264.9h.01M130.8 264.9h.01M134.2 264.9h.01M137.5 264.9h.01M140.8 264.9h.01M144.2 264.9h.01M147.5 264.9h.01M150.8 264.9h.01M154.1 264.9h.01M157.5 264.9h.01M160.8 264.9h.01M164.1 264.9h.01M167.5 264.9h.01M170.8 264.9h.01M174.1 264.9h.01M177.5 264.9h.01M180.8 264.9h.01M184.1 264.9h.01M187.4 264.9h.01M190.8 264.9h.01M194.1 264.9h.01M197.4 264.9h.01M200.8 264.9h.01M204.1 264.9h.01M207.4 264.9h.01M210.8 264.9h.01M214.1 264.9h.01M217.4 264.9h.01M220.7 264.9h.01M224.1 264.9h.01M227.4 264.9h.01M230.7 264.9h.01M234.1 264.9h.01M237.4 264.9h.01M240.7 264.9h.01M244.1 264.9h.01M247.4 264.9h.01M250.7 264.9h.01M254.0 264.9h.01M257.4 264.9h.01M260.7 264.9h.01M264.0 264.9h.01M267.4 264.9h.01M270.7 264.9h.01M274.0 264.9h.01M277.4 264.9h.01M280.7 264.9h.01M284.0 264.9h.01M287.3 264.9h.01M290.7 264.9h.01M294.0 264.9h.01M297.3 264.9h.01M300.7 264.9h.01M304.0 264.9h.01M94.2 268.1h.01M97.5 268.1h.01M100.9 268.1h.01M104.2 268.1h.01M107.5 268.1h.01M110.9 268.1h.01M114.2 268.1h.01M117.5 268.1h.01M120.8 268.1h.01M124.2 268.1h.01M127.5 268.1h.01M130.8 268.1h.01M134.2 268.1h.01M137.5 268.1h.01M140.8 268.1h.01M144.2 268.1h.01M147.5 268.1h.01M150.8 268.1h.01M154.1 268.1h.01M157.5 268.1h.01M160.8 268.1h.01M164.1 268.1h.01M167.5 268.1h.01M170.8 268.1h.01M174.1 268.1h.01M177.5 268.1h.01M180.8 268.1h.01M184.1 268.1h.01M187.4 268.1h.01M190.8 268.1h.01M194.1 268.1h.01M197.4 268.1h.01M200.8 268.1h.01M204.1 268.1h.01M207.4 268.1h.01M210.8 268.1h.01M214.1 268.1h.01M217.4 268.1h.01M220.7 268.1h.01M224.1 268.1h.01M227.4 268.1h.01M230.7 268.1h.01M234.1 268.1h.01M237.4 268.1h.01M240.7 268.1h.01M244.1 268.1h.01M247.4 268.1h.01M250.7 268.1h.01M254.0 268.1h.01M257.4 268.1h.01M260.7 268.1h.01M264.0 268.1h.01M267.4 268.1h.01M270.7 268.1h.01M274.0 268.1h.01M277.4 268.1h.01M280.7 268.1h.01M284.0 268.1h.01M287.3 268.1h.01M290.7 268.1h.01M294.0 268.1h.01M297.3 268.1h.01M300.7 268.1h.01M304.0 268.1h.01M94.2 271.3h.01M97.5 271.3h.01M100.9 271.3h.01M104.2 271.3h.01M107.5 271.3h.01M110.9 271.3h.01M114.2 271.3h.01M117.5 271.3h.01M120.8 271.3h.01M124.2 271.3h.01M127.5 271.3h.01M130.8 271.3h.01M134.2 271.3h.01M137.5 271.3h.01M140.8 271.3h.01M144.2 271.3h.01M147.5 271.3h.01M150.8 271.3h.01M154.1 271.3h.01M157.5 271.3h.01M160.8 271.3h.01M164.1 271.3h.01M167.5 271.3h.01M170.8 271.3h.01M174.1 271.3h.01M177.5 271.3h.01M180.8 271.3h.01M184.1 271.3h.01M187.4 271.3h.01M190.8 271.3h.01M194.1 271.3h.01M197.4 271.3h.01M200.8 271.3h.01M204.1 271.3h.01M207.4 271.3h.01M210.8 271.3h.01M214.1 271.3h.01M217.4 271.3h.01M220.7 271.3h.01M224.1 271.3h.01M227.4 271.3h.01M230.7 271.3h.01M234.1 271.3h.01M237.4 271.3h.01M240.7 271.3h.01M244.1 271.3h.01M247.4 271.3h.01M250.7 271.3h.01M254.0 271.3h.01M257.4 271.3h.01M260.7 271.3h.01M264.0 271.3h.01M267.4 271.3h.01M270.7 271.3h.01M274.0 271.3h.01M277.4 271.3h.01M280.7 271.3h.01M284.0 271.3h.01M287.3 271.3h.01M290.7 271.3h.01M294.0 271.3h.01M297.3 271.3h.01M300.7 271.3h.01M304.0 271.3h.01M94.2 274.5h.01M97.5 274.5h.01M100.9 274.5h.01M104.2 274.5h.01M107.5 274.5h.01M110.9 274.5h.01M114.2 274.5h.01M117.5 274.5h.01M120.8 274.5h.01M124.2 274.5h.01M127.5 274.5h.01M130.8 274.5h.01M134.2 274.5h.01M137.5 274.5h.01M140.8 274.5h.01M144.2 274.5h.01M147.5 274.5h.01M150.8 274.5h.01M154.1 274.5h.01M157.5 274.5h.01M160.8 274.5h.01M164.1 274.5h.01M167.5 274.5h.01M170.8 274.5h.01M174.1 274.5h.01M177.5 274.5h.01M180.8 274.5h.01M184.1 274.5h.01M187.4 274.5h.01M190.8 274.5h.01M194.1 274.5h.01M197.4 274.5h.01M200.8 274.5h.01M204.1 274.5h.01M207.4 274.5h.01M210.8 274.5h.01M214.1 274.5h.01M217.4 274.5h.01M220.7 274.5h.01M224.1 274.5h.01M227.4 274.5h.01M230.7 274.5h.01M234.1 274.5h.01M237.4 274.5h.01M240.7 274.5h.01M244.1 274.5h.01M247.4 274.5h.01M250.7 274.5h.01M254.0 274.5h.01M257.4 274.5h.01M260.7 274.5h.01M264.0 274.5h.01M267.4 274.5h.01M270.7 274.5h.01M274.0 274.5h.01M277.4 274.5h.01M280.7 274.5h.01M284.0 274.5h.01M287.3 274.5h.01M290.7 274.5h.01M294.0 274.5h.01M297.3 274.5h.01M300.7 274.5h.01M304.0 274.5h.01M94.2 277.7h.01M97.5 277.7h.01M100.9 277.7h.01M104.2 277.7h.01M107.5 277.7h.01M110.9 277.7h.01M114.2 277.7h.01M117.5 277.7h.01M120.8 277.7h.01M124.2 277.7h.01M127.5 277.7h.01M130.8 277.7h.01M134.2 277.7h.01M137.5 277.7h.01M140.8 277.7h.01M144.2 277.7h.01M147.5 277.7h.01M150.8 277.7h.01M154.1 277.7h.01M157.5 277.7h.01M160.8 277.7h.01M164.1 277.7h.01M167.5 277.7h.01M170.8 277.7h.01M174.1 277.7h.01M177.5 277.7h.01M180.8 277.7h.01M184.1 277.7h.01M187.4 277.7h.01M190.8 277.7h.01M194.1 277.7h.01M197.4 277.7h.01M200.8 277.7h.01M204.1 277.7h.01M207.4 277.7h.01M210.8 277.7h.01M214.1 277.7h.01M217.4 277.7h.01M220.7 277.7h.01M224.1 277.7h.01M227.4 277.7h.01M230.7 277.7h.01M234.1 277.7h.01M237.4 277.7h.01M240.7 277.7h.01M244.1 277.7h.01M247.4 277.7h.01M250.7 277.7h.01M254.0 277.7h.01M257.4 277.7h.01M260.7 277.7h.01M264.0 277.7h.01M267.4 277.7h.01M270.7 277.7h.01M274.0 277.7h.01M277.4 277.7h.01M280.7 277.7h.01M284.0 277.7h.01M287.3 277.7h.01M290.7 277.7h.01M294.0 277.7h.01M297.3 277.7h.01M300.7 277.7h.01M304.0 277.7h.01M94.2 280.9h.01M97.5 280.9h.01M100.9 280.9h.01M104.2 280.9h.01M107.5 280.9h.01M110.9 280.9h.01M114.2 280.9h.01M117.5 280.9h.01M120.8 280.9h.01M124.2 280.9h.01M127.5 280.9h.01M130.8 280.9h.01M134.2 280.9h.01M137.5 280.9h.01M140.8 280.9h.01M144.2 280.9h.01M147.5 280.9h.01M150.8 280.9h.01M154.1 280.9h.01M157.5 280.9h.01M160.8 280.9h.01M164.1 280.9h.01M167.5 280.9h.01M170.8 280.9h.01M174.1 280.9h.01M177.5 280.9h.01M180.8 280.9h.01M184.1 280.9h.01M187.4 280.9h.01M190.8 280.9h.01M194.1 280.9h.01M197.4 280.9h.01M200.8 280.9h.01M204.1 280.9h.01M207.4 280.9h.01M210.8 280.9h.01M214.1 280.9h.01M217.4 280.9h.01M220.7 280.9h.01M224.1 280.9h.01M227.4 280.9h.01M230.7 280.9h.01M234.1 280.9h.01M237.4 280.9h.01M240.7 280.9h.01M244.1 280.9h.01M247.4 280.9h.01M250.7 280.9h.01M254.0 280.9h.01M257.4 280.9h.01M260.7 280.9h.01M264.0 280.9h.01M267.4 280.9h.01M270.7 280.9h.01M274.0 280.9h.01M277.4 280.9h.01M280.7 280.9h.01M284.0 280.9h.01M287.3 280.9h.01M290.7 280.9h.01M294.0 280.9h.01M297.3 280.9h.01M300.7 280.9h.01M304.0 280.9h.01M94.2 284.2h.01M97.5 284.2h.01M100.9 284.2h.01M104.2 284.2h.01M107.5 284.2h.01M110.9 284.2h.01M114.2 284.2h.01M117.5 284.2h.01M120.8 284.2h.01M124.2 284.2h.01M127.5 284.2h.01M130.8 284.2h.01M134.2 284.2h.01M137.5 284.2h.01M140.8 284.2h.01M144.2 284.2h.01M147.5 284.2h.01M150.8 284.2h.01M154.1 284.2h.01M157.5 284.2h.01M160.8 284.2h.01M164.1 284.2h.01M167.5 284.2h.01M170.8 284.2h.01M174.1 284.2h.01M177.5 284.2h.01M180.8 284.2h.01M184.1 284.2h.01M187.4 284.2h.01M190.8 284.2h.01M194.1 284.2h.01M197.4 284.2h.01M200.8 284.2h.01M204.1 284.2h.01M207.4 284.2h.01M210.8 284.2h.01M214.1 284.2h.01M217.4 284.2h.01M220.7 284.2h.01M224.1 284.2h.01M227.4 284.2h.01M230.7 284.2h.01M234.1 284.2h.01M237.4 284.2h.01M240.7 284.2h.01M244.1 284.2h.01M247.4 284.2h.01M250.7 284.2h.01M254.0 284.2h.01M257.4 284.2h.01M260.7 284.2h.01M264.0 284.2h.01M267.4 284.2h.01M270.7 284.2h.01M274.0 284.2h.01M277.4 284.2h.01M280.7 284.2h.01M284.0 284.2h.01M287.3 284.2h.01M290.7 284.2h.01M294.0 284.2h.01M297.3 284.2h.01M300.7 284.2h.01M304.0 284.2h.01M94.2 287.4h.01M97.5 287.4h.01M100.9 287.4h.01M104.2 287.4h.01M107.5 287.4h.01M110.9 287.4h.01M114.2 287.4h.01M117.5 287.4h.01M120.8 287.4h.01M124.2 287.4h.01M127.5 287.4h.01M130.8 287.4h.01M134.2 287.4h.01M137.5 287.4h.01M140.8 287.4h.01M144.2 287.4h.01M147.5 287.4h.01M150.8 287.4h.01M154.1 287.4h.01M157.5 287.4h.01M160.8 287.4h.01M164.1 287.4h.01M167.5 287.4h.01M170.8 287.4h.01M174.1 287.4h.01M177.5 287.4h.01M180.8 287.4h.01M184.1 287.4h.01M187.4 287.4h.01M190.8 287.4h.01M194.1 287.4h.01M197.4 287.4h.01M200.8 287.4h.01M204.1 287.4h.01M207.4 287.4h.01M210.8 287.4h.01M214.1 287.4h.01M217.4 287.4h.01M220.7 287.4h.01M224.1 287.4h.01M227.4 287.4h.01M230.7 287.4h.01M234.1 287.4h.01M237.4 287.4h.01M240.7 287.4h.01M244.1 287.4h.01M247.4 287.4h.01M250.7 287.4h.01M254.0 287.4h.01M257.4 287.4h.01M260.7 287.4h.01M264.0 287.4h.01M267.4 287.4h.01M270.7 287.4h.01M274.0 287.4h.01M277.4 287.4h.01M280.7 287.4h.01M284.0 287.4h.01M287.3 287.4h.01M290.7 287.4h.01M294.0 287.4h.01M297.3 287.4h.01M300.7 287.4h.01M304.0 287.4h.01M94.2 290.6h.01M97.5 290.6h.01M100.9 290.6h.01M104.2 290.6h.01M107.5 290.6h.01M110.9 290.6h.01M114.2 290.6h.01M117.5 290.6h.01M120.8 290.6h.01M124.2 290.6h.01M127.5 290.6h.01M130.8 290.6h.01M134.2 290.6h.01M137.5 290.6h.01M140.8 290.6h.01M144.2 290.6h.01M147.5 290.6h.01M150.8 290.6h.01M154.1 290.6h.01M157.5 290.6h.01M160.8 290.6h.01M164.1 290.6h.01M167.5 290.6h.01M170.8 290.6h.01M174.1 290.6h.01M177.5 290.6h.01M180.8 290.6h.01M184.1 290.6h.01M187.4 290.6h.01M190.8 290.6h.01M194.1 290.6h.01M197.4 290.6h.01M200.8 290.6h.01M204.1 290.6h.01M207.4 290.6h.01M210.8 290.6h.01M214.1 290.6h.01M217.4 290.6h.01M220.7 290.6h.01M224.1 290.6h.01M227.4 290.6h.01M230.7 290.6h.01M234.1 290.6h.01M237.4 290.6h.01M240.7 290.6h.01M244.1 290.6h.01M247.4 290.6h.01M250.7 290.6h.01M254.0 290.6h.01M257.4 290.6h.01M260.7 290.6h.01M264.0 290.6h.01M267.4 290.6h.01M270.7 290.6h.01M274.0 290.6h.01M277.4 290.6h.01M280.7 290.6h.01M284.0 290.6h.01M287.3 290.6h.01M290.7 290.6h.01M294.0 290.6h.01M297.3 290.6h.01M300.7 290.6h.01M304.0 290.6h.01M94.2 293.8h.01M97.5 293.8h.01M100.9 293.8h.01M104.2 293.8h.01M107.5 293.8h.01M110.9 293.8h.01M114.2 293.8h.01M117.5 293.8h.01M120.8 293.8h.01M124.2 293.8h.01M127.5 293.8h.01M130.8 293.8h.01M134.2 293.8h.01M137.5 293.8h.01M140.8 293.8h.01M144.2 293.8h.01M147.5 293.8h.01M150.8 293.8h.01M154.1 293.8h.01M157.5 293.8h.01M160.8 293.8h.01M164.1 293.8h.01M167.5 293.8h.01M170.8 293.8h.01M174.1 293.8h.01M177.5 293.8h.01M180.8 293.8h.01M184.1 293.8h.01M187.4 293.8h.01M190.8 293.8h.01M194.1 293.8h.01M197.4 293.8h.01M200.8 293.8h.01M204.1 293.8h.01M207.4 293.8h.01M210.8 293.8h.01M214.1 293.8h.01M217.4 293.8h.01M220.7 293.8h.01M224.1 293.8h.01M227.4 293.8h.01M230.7 293.8h.01M234.1 293.8h.01M237.4 293.8h.01M240.7 293.8h.01M244.1 293.8h.01M247.4 293.8h.01M250.7 293.8h.01M254.0 293.8h.01M257.4 293.8h.01M260.7 293.8h.01M264.0 293.8h.01M267.4 293.8h.01M270.7 293.8h.01M274.0 293.8h.01M277.4 293.8h.01M280.7 293.8h.01M284.0 293.8h.01M287.3 293.8h.01M290.7 293.8h.01M294.0 293.8h.01M297.3 293.8h.01M300.7 293.8h.01M304.0 293.8h.01M94.2 297.0h.01M97.5 297.0h.01M100.9 297.0h.01M104.2 297.0h.01M107.5 297.0h.01M110.9 297.0h.01M114.2 297.0h.01M117.5 297.0h.01M120.8 297.0h.01M124.2 297.0h.01M127.5 297.0h.01M130.8 297.0h.01M134.2 297.0h.01M137.5 297.0h.01M140.8 297.0h.01M144.2 297.0h.01M147.5 297.0h.01M150.8 297.0h.01M154.1 297.0h.01M157.5 297.0h.01M160.8 297.0h.01M164.1 297.0h.01M167.5 297.0h.01M170.8 297.0h.01M174.1 297.0h.01M177.5 297.0h.01M180.8 297.0h.01M184.1 297.0h.01M187.4 297.0h.01M190.8 297.0h.01M194.1 297.0h.01M197.4 297.0h.01M200.8 297.0h.01M204.1 297.0h.01M207.4 297.0h.01M210.8 297.0h.01M214.1 297.0h.01M217.4 297.0h.01M220.7 297.0h.01M224.1 297.0h.01M227.4 297.0h.01M230.7 297.0h.01M234.1 297.0h.01M237.4 297.0h.01M240.7 297.0h.01M244.1 297.0h.01M247.4 297.0h.01M250.7 297.0h.01M254.0 297.0h.01M257.4 297.0h.01M260.7 297.0h.01M264.0 297.0h.01M267.4 297.0h.01M270.7 297.0h.01M274.0 297.0h.01M277.4 297.0h.01M280.7 297.0h.01M284.0 297.0h.01M287.3 297.0h.01M290.7 297.0h.01M294.0 297.0h.01M297.3 297.0h.01M300.7 297.0h.01M304.0 297.0h.01M94.2 300.2h.01M97.5 300.2h.01M100.9 300.2h.01M104.2 300.2h.01M107.5 300.2h.01M110.9 300.2h.01M114.2 300.2h.01M117.5 300.2h.01M120.8 300.2h.01M124.2 300.2h.01M127.5 300.2h.01M130.8 300.2h.01M134.2 300.2h.01M137.5 300.2h.01M140.8 300.2h.01M144.2 300.2h.01M147.5 300.2h.01M150.8 300.2h.01M154.1 300.2h.01M157.5 300.2h.01M160.8 300.2h.01M164.1 300.2h.01M167.5 300.2h.01M170.8 300.2h.01M174.1 300.2h.01M177.5 300.2h.01M180.8 300.2h.01M184.1 300.2h.01M187.4 300.2h.01M190.8 300.2h.01M194.1 300.2h.01M197.4 300.2h.01M200.8 300.2h.01M204.1 300.2h.01M207.4 300.2h.01M210.8 300.2h.01M214.1 300.2h.01M217.4 300.2h.01M220.7 300.2h.01M224.1 300.2h.01M227.4 300.2h.01M230.7 300.2h.01M234.1 300.2h.01M237.4 300.2h.01M240.7 300.2h.01M244.1 300.2h.01M247.4 300.2h.01M250.7 300.2h.01M254.0 300.2h.01M257.4 300.2h.01M260.7 300.2h.01M264.0 300.2h.01M267.4 300.2h.01M270.7 300.2h.01M274.0 300.2h.01M277.4 300.2h.01M280.7 300.2h.01M284.0 300.2h.01M287.3 300.2h.01M290.7 300.2h.01M294.0 300.2h.01M297.3 300.2h.01M300.7 300.2h.01M304.0 300.2h.01M94.2 303.4h.01M97.5 303.4h.01M100.9 303.4h.01M104.2 303.4h.01M107.5 303.4h.01M110.9 303.4h.01M114.2 303.4h.01M117.5 303.4h.01M120.8 303.4h.01M124.2 303.4h.01M127.5 303.4h.01M130.8 303.4h.01M134.2 303.4h.01M137.5 303.4h.01M140.8 303.4h.01M144.2 303.4h.01M147.5 303.4h.01M150.8 303.4h.01M154.1 303.4h.01M157.5 303.4h.01M160.8 303.4h.01M164.1 303.4h.01M167.5 303.4h.01M170.8 303.4h.01M174.1 303.4h.01M177.5 303.4h.01M180.8 303.4h.01M184.1 303.4h.01M187.4 303.4h.01M190.8 303.4h.01M194.1 303.4h.01M197.4 303.4h.01M200.8 303.4h.01M204.1 303.4h.01M207.4 303.4h.01M210.8 303.4h.01M214.1 303.4h.01M217.4 303.4h.01M220.7 303.4h.01M224.1 303.4h.01M227.4 303.4h.01M230.7 303.4h.01M234.1 303.4h.01M237.4 303.4h.01M240.7 303.4h.01M244.1 303.4h.01M247.4 303.4h.01M250.7 303.4h.01M254.0 303.4h.01M257.4 303.4h.01M260.7 303.4h.01M264.0 303.4h.01M267.4 303.4h.01M270.7 303.4h.01M274.0 303.4h.01M277.4 303.4h.01M280.7 303.4h.01M284.0 303.4h.01M287.3 303.4h.01M290.7 303.4h.01M294.0 303.4h.01M297.3 303.4h.01M300.7 303.4h.01M304.0 303.4h.01M94.2 306.6h.01M97.5 306.6h.01M100.9 306.6h.01M104.2 306.6h.01M107.5 306.6h.01M110.9 306.6h.01M114.2 306.6h.01M117.5 306.6h.01M120.8 306.6h.01M124.2 306.6h.01M127.5 306.6h.01M130.8 306.6h.01M134.2 306.6h.01M137.5 306.6h.01M140.8 306.6h.01M144.2 306.6h.01M147.5 306.6h.01M150.8 306.6h.01M154.1 306.6h.01M157.5 306.6h.01M160.8 306.6h.01M164.1 306.6h.01M167.5 306.6h.01M170.8 306.6h.01M174.1 306.6h.01M177.5 306.6h.01M180.8 306.6h.01M184.1 306.6h.01M187.4 306.6h.01M190.8 306.6h.01M194.1 306.6h.01M197.4 306.6h.01M200.8 306.6h.01M204.1 306.6h.01M207.4 306.6h.01M210.8 306.6h.01M214.1 306.6h.01M217.4 306.6h.01M220.7 306.6h.01M224.1 306.6h.01M227.4 306.6h.01M230.7 306.6h.01M234.1 306.6h.01M237.4 306.6h.01M240.7 306.6h.01M244.1 306.6h.01M247.4 306.6h.01M250.7 306.6h.01M254.0 306.6h.01M257.4 306.6h.01M260.7 306.6h.01M264.0 306.6h.01M267.4 306.6h.01M270.7 306.6h.01M274.0 306.6h.01M277.4 306.6h.01M280.7 306.6h.01M284.0 306.6h.01M287.3 306.6h.01M290.7 306.6h.01M294.0 306.6h.01M297.3 306.6h.01M300.7 306.6h.01M304.0 306.6h.01" stroke="#000" stroke-width="1.9" stroke-linecap="round" fill="none"/>
<path d="M192.4 301.8h.01M139.2 173.5h.01M99.2 290.6h.01M304.0 170.3h.01M275.7 224.8h.01M119.2 107.8h.01M150.8 245.7h.01M127.5 152.7h.01M100.9 115.8h.01M250.7 253.7h.01M269.0 191.2h.01M294.0 242.5h.01M264.0 301.8h.01M220.7 290.6h.01M285.7 215.2h.01M169.1 127.0h.01M205.8 276.1h.01M182.4 216.8h.01M177.5 111.0h.01M227.4 224.8h.01M305.7 228.0h.01M137.5 287.4h.01M115.8 240.9h.01M187.4 234.5h.01M260.7 204.0h.01M219.1 306.6h.01M247.4 216.8h.01M259.0 135.1h.01M145.8 194.4h.01M144.2 298.6h.01M202.4 248.9h.01M155.8 295.4h.01M240.7 250.5h.01M269.0 152.7h.01M102.5 173.5h.01M122.5 245.7h.01M137.5 109.4h.01M230.7 168.7h.01M124.2 188.0h.01M140.8 173.5h.01M229.1 284.2h.01M134.2 133.5h.01M97.5 237.7h.01M252.4 200.8h.01M94.2 226.4h.01M285.7 155.9h.01M302.3 277.7h.01M272.4 106.2h.01M119.2 232.9h.01M117.5 183.2h.01M117.5 228.0h.01M172.5 154.3h.01M287.3 178.3h.01M234.1 287.4h.01M127.5 136.7h.01M134.2 256.9h.01M100.9 184.8h.01M264.0 247.3h.01M175.8 298.6h.01M130.8 216.8h.01M170.8 109.4h.01M215.8 205.6h.01M304.0 176.7h.01M100.9 192.8h.01M267.4 192.8h.01M240.7 139.9h.01M147.5 301.8h.01M282.4 234.5h.01M252.4 268.1h.01M287.3 229.6h.01M129.2 226.4h.01M197.4 127.0h.01M225.7 135.1h.01M217.4 115.8h.01M285.7 208.8h.01M160.8 104.6h.01M297.3 276.1h.01M239.1 279.3h.01M147.5 139.9h.01M109.2 179.9h.01M112.5 109.4h.01M167.5 119.0h.01M210.8 191.2h.01M130.8 276.1h.01M254.0 136.7h.01M205.8 122.2h.01M182.4 149.5h.01M257.4 112.6h.01M207.4 112.6h.01M252.4 202.4h.01M184.1 149.5h.01M210.8 212.0h.01M152.5 285.8h.01M94.2 231.3h.01M140.8 287.4h.01M110.9 200.8h.01M304.0 143.1h.01M110.9 196.0h.01M222.4 183.2h.01M125.8 237.7h.01M129.2 221.6h.01M294.0 237.7h.01M277.4 127.0h.01M159.1 277.7h.01M299.0 216.8h.01M179.1 112.6h.01M257.4 287.4h.01M237.4 210.4h.01M222.4 260.1h.01M237.4 297.0h.01M272.4 228.0h.01M290.7 181.6h.01M242.4 157.5h.01M280.7 183.2h.01M289.0 127.0h.01M155.8 252.1h.01M204.1 252.1h.01M217.4 130.3h.01M254.0 127.0h.01M225.7 216.8h.01M135.8 117.4h.01M114.2 229.6h.01M172.5 213.6h.01M100.9 298.6h.01M240.7 176.7h.01M304.0 269.7h.01M240.7 207.2h.01M257.4 280.9h.01M227.4 186.4h.01M304.0 131.9h.01M302.3 194.4h.01M295.7 274.5h.01M220.7 220.0h.01M120.8 138.3h.01M270.7 120.6h.01M169.1 287.4h.01M137.5 199.2h.01M190.8 115.8h.01M104.2 144.7h.01M130.8 224.8h.01M289.0 247.3h.01M305.7 111.0h.01M284.0 168.7h.01M199.1 197.6h.01M164.1 111.0h.01M117.5 154.3h.01M152.5 295.4h.01M159.1 297.0h.01M284.0 109.4h.01M192.4 122.2h.01M269.0 236.1h.01M214.1 115.8h.01M109.2 123.8h.01M219.1 268.1h.01M264.0 213.6h.01M100.9 303.4h.01M167.5 280.9h.01M292.3 144.7h.01M174.1 160.7h.01M295.7 154.3h.01M244.1 104.6h.01M299.0 163.9h.01M197.4 279.3h.01M179.1 168.7h.01M112.5 271.3h.01M162.5 106.2h.01M162.5 176.7h.01M102.5 221.6h.01M130.8 146.3h.01M235.7 192.8h.01M214.1 122.2h.01M134.2 229.6h.01M257.4 221.6h.01M262.4 284.2h.01M209.1 197.6h.01M185.8 295.4h.01M255.7 189.6h.01M155.8 303.4h.01M207.4 151.1h.01M157.5 183.2h.01M305.7 119.0h.01M225.7 170.3h.01M289.0 143.1h.01M182.4 212.0h.01M277.4 119.0h.01M94.2 144.7h.01M97.5 285.8h.01M260.7 298.6h.01M185.8 274.5h.01M154.1 229.6h.01M207.4 207.2h.01M255.7 263.3h.01M169.1 197.6h.01M100.9 130.3h.01M229.1 138.3h.01M177.5 157.5h.01M95.9 276.1h.01M260.7 242.5h.01M227.4 305.0h.01M225.7 122.2h.01M119.2 125.4h.01M235.7 231.3h.01M154.1 292.2h.01M204.1 189.6h.01M169.1 287.4h.01M120.8 263.3h.01M235.7 205.6h.01M272.4 159.1h.01M142.5 192.8h.01M132.5 144.7h.01M225.7 117.4h.01M239.1 199.2h.01M245.7 109.4h.01M222.4 188.0h.01M117.5 130.3h.01M179.1 272.9h.01M230.7 176.7h.01M259.0 236.1h.01M239.1 226.4h.01M122.5 183.2h.01M125.8 191.2h.01M242.4 109.4h.01M272.4 168.7h.01M272.4 221.6h.01M212.4 218.4h.01M277.4 258.5h.01M289.0 253.7h.01M105.9 196.0h.01M257.4 204.0h.01M134.2 287.4h.01M210.8 181.6h.01M129.2 179.9h.01M279.0 135.1h.01M272.4 131.9h.01M120.8 289.0h.01M130.8 207.2h.01M107.5 184.8h.01M164.1 245.7h.01M295.7 277.7h.01M94.2 122.2h.01M267.4 264.9h.01M165.8 245.7h.01M132.5 293.8h.01M262.4 167.1h.01M124.2 231.3h.01M205.8 261.7h.01M142.5 229.6h.01M215.8 131.9h.01M204.1 292.2h.01M127.5 260.1h.01M222.4 154.3h.01M114.2 165.5h.01M164.1 104.6h.01M207.4 107.8h.01M205.8 250.5h.01M112.5 170.3h.01M222.4 277.7h.01M225.7 279.3h.01M254.0 284.2h.01M215.8 176.7h.01" stroke="#101828" stroke-width="2.6" stroke-linecap="round" fill="none" opacity=".8"/>
<circle cx="112" cy="204.5" r="1" fill="#fff"/><circle cx="286" cy="204.5" r="1" fill="#fff"/>
</svg>
<div class="t" style="left:42.0px;top:71.90px;font-size:7.5px;line-height:9px;color:#fff;">Rng 21 dBm</div>
<div class="t" style="right:1160.1px;top:80.90px;font-size:7.5px;line-height:9px;color:#fff;">1.5</div>
<div class="t" style="right:1160.1px;top:157.90px;font-size:7.5px;line-height:9px;color:#fff;">Const</div>
<div class="t" style="right:1160.1px;top:226.90px;font-size:7.5px;line-height:9px;color:#fff;">300</div>
<div class="t" style="right:1160.1px;top:235.90px;font-size:7.5px;line-height:9px;color:#fff;">m</div>
<div class="t" style="right:1160.1px;top:245.90px;font-size:7.5px;line-height:9px;color:#fff;">/div</div>
<div class="t" style="right:1160.1px;top:313.90px;font-size:7.5px;line-height:9px;color:#fff;">-1.5</div>
<div class="t" style="left:42.0px;top:331.90px;font-size:7.5px;line-height:9px;color:#fff;">-1.809</div>
<div class="t" style="left:42.0px;top:340.90px;font-size:7.5px;line-height:9px;color:#fff;">Res BW 78.125 kHz</div>
<div class="t" style="right:844.5px;top:331.90px;font-size:7.5px;line-height:9px;color:#fff;">1.8094</div>
<div class="t" style="right:844.5px;top:340.90px;font-size:7.5px;line-height:9px;color:#fff;">TimeLen 4  Sym</div>
<svg style="left:0;top:0" width="1200" height="675" viewBox="0 0 1200 675">
<path d="M431.10 80.9V176M459.90 80.9V176M488.70 80.9V176M517.50 80.9V176M546.30 80.9V176M575.10 80.9V176M603.90 80.9V176M632.70 80.9V176M661.50 80.9V176M402.3 90.41H690.3M402.3 99.92H690.3M402.3 109.43H690.3M402.3 118.94H690.3M402.3 128.45H690.3M402.3 137.96H690.3M402.3 147.47H690.3M402.3 156.98H690.3M402.3 166.49H690.3" stroke="#313131" stroke-width="1.15" fill="none"/><rect x="402.3" y="80.9" width="287.99999999999994" height="95.1" fill="none" stroke="#525252" stroke-width="1.8"/>
<path d="M402.0 177.0L402.2 143.0L403.5 139.5L405.0 136.0L406.0 133.0L406.1 105.0L406.7 105.3L407.2 104.4L407.7 102.9L408.2 103.8L408.7 105.4L409.2 103.5L409.7 104.9L410.2 103.4L410.7 102.9L411.2 104.1L411.7 104.7L412.2 103.1L412.7 104.3L413.2 104.0L413.7 105.3L414.2 103.8L414.7 103.3L415.2 103.0L415.7 105.1L416.2 104.0L416.7 105.4L417.2 105.1L417.7 102.9L418.2 103.3L418.7 105.0L419.2 105.5L419.7 104.8L420.2 103.1L420.7 103.8L421.2 103.2L421.7 104.7L422.2 103.9L422.7 103.6L423.2 104.8L423.7 103.7L424.2 104.2L424.7 105.0L425.2 103.8L425.7 105.1L426.2 104.0L426.7 103.9L427.2 105.0L427.7 104.7L428.2 103.3L428.7 104.7L429.2 103.0L429.7 104.1L430.2 104.7L430.7 104.5L431.2 103.3L431.7 104.8L432.2 103.1L432.7 104.2L433.2 104.8L433.7 104.0L434.2 104.4L434.7 104.1L435.2 103.8L435.7 102.9L436.2 103.4L436.7 103.1L437.2 103.7L437.7 103.4L438.2 103.3L438.7 105.4L439.2 103.9L439.7 103.1L440.2 103.2L440.7 104.7L441.2 104.3L441.7 103.0L442.2 105.3L442.7 103.4L443.2 103.4L443.7 105.2L444.2 104.5L444.7 103.8L445.2 102.7L445.7 104.3L446.2 104.0L446.7 104.7L447.2 105.5L447.7 105.3L448.2 104.0L448.7 105.1L449.2 104.8L449.7 105.3L450.2 103.3L450.7 103.0L451.2 103.4L451.7 103.6L452.2 105.4L452.7 105.0L453.2 104.1L453.7 102.7L454.2 105.0L454.7 102.8L455.2 104.9L455.7 103.3L456.2 104.3L456.7 105.5L457.2 105.5L457.7 104.7L458.2 104.1L458.7 102.9L459.2 105.3L459.7 103.0L460.2 103.2L460.7 102.9L461.2 105.5L461.7 103.1L462.2 104.8L462.7 105.5L463.2 104.2L463.7 104.9L464.2 103.7L464.7 104.9L465.2 104.0L465.7 104.2L466.2 102.7L466.7 103.4L467.2 104.6L467.7 103.3L468.2 102.7L468.7 105.0L469.2 103.3L469.7 103.5L470.2 105.2L470.7 105.3L471.2 105.5L471.7 103.2L472.2 104.8L472.7 105.3L473.2 103.6L473.7 103.9L474.2 105.0L474.7 103.7L475.2 104.3L475.7 105.2L476.2 104.4L476.7 104.5L477.2 104.3L477.7 104.5L478.2 104.3L478.7 102.7L479.2 105.0L479.7 105.1L480.2 104.2L480.7 103.0L481.2 104.0L481.7 104.3L482.2 105.2L482.7 103.7L483.2 103.5L483.7 105.4L484.2 103.3L484.7 104.3L485.2 105.3L485.7 103.4L486.2 104.2L486.7 103.7L487.2 104.0L487.7 103.7L488.2 104.0L488.7 105.5L489.2 103.0L489.7 103.4L490.2 104.7L490.7 103.7L491.2 104.1L491.7 102.9L492.2 103.9L492.7 105.4L493.2 104.8L493.7 104.4L494.2 103.3L494.7 103.4L495.2 103.2L495.7 104.5L496.2 104.9L496.7 103.1L497.2 103.8L497.7 103.4L498.2 105.4L498.7 105.4L499.2 103.1L499.7 103.6L500.2 102.9L500.7 103.1L501.2 104.5L501.7 104.2L502.2 103.1L502.7 104.5L503.2 104.0L503.7 103.2L504.2 104.0L504.7 105.2L505.2 105.2L505.7 104.5L506.2 105.2L506.7 104.7L507.2 103.8L507.7 105.0L508.2 103.4L508.7 104.8L509.2 103.1L509.7 104.0L510.2 104.5L510.7 103.3L511.2 104.5L511.7 105.5L512.2 103.3L512.7 103.7L513.2 103.6L513.7 103.8L514.2 104.9L514.7 104.7L515.2 105.0L515.7 105.0L516.2 104.4L516.7 104.3L517.2 104.8L517.7 102.9L518.2 103.2L518.7 105.1L519.2 103.3L519.7 103.4L520.2 104.9L520.7 105.2L521.2 105.1L521.7 105.2L522.2 103.3L522.7 105.3L523.2 105.5L523.7 103.0L524.2 103.8L524.7 105.0L525.2 103.7L525.7 105.2L526.2 103.7L526.7 105.4L527.2 104.4L527.7 104.7L528.2 104.7L528.7 103.5L529.2 105.2L529.7 103.1L530.2 104.7L530.7 104.6L531.2 104.4L531.7 105.1L532.2 105.4L532.7 104.7L533.2 102.8L533.7 105.3L534.2 104.2L534.7 103.4L535.2 103.5L535.7 104.4L536.2 105.4L536.7 104.0L537.2 103.0L537.7 105.2L538.2 104.9L538.7 104.6L539.2 103.9L539.7 104.6L540.2 105.2L540.7 104.6L541.2 104.7L541.7 104.2L542.2 105.5L542.7 104.6L543.2 103.5L543.7 104.4L544.2 104.1L544.7 103.4L545.2 104.8L545.7 104.9L546.2 103.7L546.7 104.5L547.2 104.2L547.7 104.5L548.2 104.6L548.7 105.0L549.2 104.0L549.7 104.5L550.2 104.4L550.7 104.0L551.2 105.1L551.7 105.3L552.2 102.8L552.7 103.8L553.2 104.9L553.7 105.5L554.2 104.3L554.7 103.5L555.2 104.4L555.7 104.5L556.2 103.6L556.7 103.4L557.2 104.1L557.7 103.7L558.2 103.3L558.7 103.1L559.2 103.5L559.7 102.9L560.2 103.4L560.7 103.6L561.2 105.3L561.7 102.9L562.2 104.7L562.7 103.8L563.2 103.9L563.7 103.4L564.2 104.3L564.7 103.9L565.2 105.2L565.7 104.8L566.2 104.7L566.7 103.2L567.2 105.4L567.7 103.4L568.2 102.9L568.7 102.8L569.2 103.4L569.7 103.8L570.2 103.5L570.7 103.2L571.2 104.5L571.7 103.4L572.2 105.3L572.7 104.0L573.2 102.7L573.7 103.9L574.2 105.1L574.7 103.1L575.2 105.3L575.7 105.1L576.2 103.8L576.7 104.1L577.2 103.4L577.7 105.2L578.2 103.3L578.7 103.1L579.2 103.9L579.7 104.9L580.2 104.4L580.7 103.8L581.2 104.7L581.7 103.7L582.2 105.0L582.7 104.6L583.2 103.3L583.7 103.3L584.2 104.3L584.7 102.9L585.2 104.3L585.7 102.8L586.2 104.4L586.7 104.3L587.2 104.2L587.7 102.9L588.2 105.0L588.7 105.1L589.2 103.4L589.7 105.0L590.2 104.5L590.7 104.8L591.2 105.1L591.7 105.4L592.2 104.1L592.7 105.3L593.2 104.6L593.7 104.9L594.2 103.7L594.7 104.0L595.2 105.4L595.7 102.9L596.2 104.0L596.7 103.6L597.2 103.3L597.7 103.2L598.2 103.9L598.7 103.4L599.2 104.0L599.7 103.5L600.2 104.3L600.7 105.5L601.2 104.3L601.7 104.1L602.2 104.2L602.7 103.7L603.2 105.1L603.7 104.5L604.2 103.7L604.7 105.5L605.2 104.6L605.7 104.2L606.2 103.8L606.7 104.6L607.2 104.4L607.7 103.0L608.2 103.4L608.7 104.3L609.2 105.3L609.7 104.5L610.2 105.5L610.7 104.2L611.2 103.6L611.7 104.4L612.2 104.8L612.7 102.9L613.2 103.7L613.7 104.0L614.2 103.6L614.7 105.4L615.2 104.5L615.7 103.1L616.0 128.9L616.5 130.4L617.0 132.1L617.5 133.4L618.0 133.9L618.5 134.3L619.0 135.0L619.5 136.3L620.0 136.6L620.5 136.4L621.0 136.6L621.5 137.0L622.0 136.9L622.5 137.5L623.0 137.9L623.5 137.6L624.0 137.6L624.5 138.3L625.0 138.0L625.5 137.6L626.0 138.1L626.5 138.4L627.0 138.6L627.5 138.4L628.0 138.6L628.5 138.6L629.0 138.4L629.5 138.5L630.0 138.2L630.5 138.2L631.0 137.9L631.5 138.2L632.0 138.1L632.5 138.2L633.0 138.6L633.5 138.9L634.0 138.3L634.5 138.8L635.0 138.9L635.5 138.8L636.0 139.0L636.5 138.9L637.0 138.5L637.5 138.7L638.0 138.7L638.5 138.9L639.0 138.6L639.5 138.8L640.0 138.2L640.5 138.2L641.0 137.9L641.5 138.3L642.0 138.6L642.5 138.4L643.0 137.8L643.5 138.0L644.0 137.4L644.5 138.2L645.0 137.2L645.5 137.6L646.0 136.9L646.5 137.1L647.0 137.4L647.5 136.9L648.0 136.7L648.5 136.5L649.0 136.0L649.5 134.8L650.0 134.7L650.5 133.7L651.0 132.3L651.5 130.8L652.0 129.6L652.3 103.0L652.8 105.1L653.3 103.7L653.8 104.9L654.3 103.5L654.8 105.1L655.3 104.1L655.8 105.0L656.3 104.4L656.8 104.2L657.3 103.3L657.8 103.4L658.3 104.7L658.8 103.7L659.3 103.8L659.8 104.5L660.3 103.5L660.8 105.3L661.3 105.1L661.8 104.1L662.3 103.7L662.8 103.0L663.3 103.4L663.8 105.4L664.3 104.1L664.8 105.0L665.3 104.1L665.8 102.9L666.3 103.8L666.8 102.8L667.3 104.5L667.8 104.3L668.3 105.0L668.8 103.9L669.3 103.5L669.8 105.1L670.3 102.9L670.8 104.3L671.3 104.0L671.8 104.3L672.3 104.9L672.8 103.7L673.3 103.3L673.8 105.4L674.3 104.5L674.8 103.7L675.3 104.2L675.8 103.0L676.3 102.9L676.8 103.5L677.3 104.6L677.8 104.2L678.3 104.9L678.8 103.6L679.3 103.2L679.8 102.9L680.3 103.9L680.8 103.6L681.3 103.0L681.8 103.9L682.3 103.2L682.8 104.2L683.3 103.1L683.8 104.2L684.3 103.6L684.8 103.8L685.3 103.3L685.8 105.0L686.4 105.0L686.5 131.5L688.0 134.5L690.0 137.5L691.0 139.5L691.0 177.0L691.0 177.0L689.3 177.0L688.6 167.0L687.6 152.0L686.6 138.0L685.8 128.8L685.3 142.6L684.8 129.2L684.3 128.8L683.8 128.5L683.3 139.3L682.8 130.2L682.3 133.5L681.8 128.9L681.3 132.6L680.8 138.4L680.3 137.6L679.8 129.1L679.3 143.5L678.8 139.9L678.3 132.7L677.8 130.1L677.3 135.8L676.8 132.7L676.3 141.8L675.8 138.8L675.3 128.7L674.8 139.6L674.3 129.9L673.8 130.0L673.3 129.7L672.8 131.1L672.3 129.0L671.8 158.0L671.3 142.5L670.8 131.3L670.3 129.0L669.8 130.2L669.3 132.7L668.8 133.3L668.3 130.0L667.8 128.8L667.3 129.5L666.8 135.2L666.3 141.7L665.8 129.1L665.3 131.1L664.8 151.3L664.3 131.4L663.8 134.4L663.3 155.8L662.8 139.1L662.3 130.7L661.8 139.9L661.3 141.1L660.8 130.5L660.3 146.5L659.8 141.5L659.3 139.3L658.8 135.5L658.3 138.0L657.8 128.7L657.3 136.7L656.8 132.0L656.3 132.9L655.8 144.5L655.3 145.4L654.8 132.4L654.3 136.0L653.8 133.6L653.3 133.2L652.8 129.2L652.3 131.6L652.0 154.3L651.5 152.4L651.0 154.4L650.5 145.2L650.0 145.2L649.5 144.9L649.0 144.8L648.5 144.1L648.0 145.1L647.5 145.7L647.0 145.9L646.5 144.6L646.0 145.2L645.5 145.8L645.0 145.7L644.5 144.4L644.0 145.5L643.5 144.4L643.0 146.4L642.5 145.8L642.0 145.0L641.5 145.9L641.0 146.1L640.5 145.5L640.0 145.1L639.5 146.8L639.0 145.1L638.5 146.6L638.0 146.7L637.5 147.2L637.0 147.2L636.5 145.9L636.0 145.9L635.5 146.5L635.0 146.8L634.5 147.3L634.0 147.2L633.5 146.3L633.0 147.8L632.5 147.6L632.0 148.1L631.5 148.5L631.0 147.2L630.5 148.0L630.0 148.8L629.5 148.4L629.0 148.9L628.5 149.0L628.0 147.9L627.5 148.8L627.0 148.1L626.5 148.6L626.0 149.1L625.5 148.9L625.0 148.9L624.5 150.2L624.0 150.0L623.5 150.1L623.0 150.6L622.5 150.1L622.0 151.2L621.5 151.8L621.0 152.2L620.5 150.6L620.0 151.3L619.5 151.8L619.0 151.9L618.5 154.6L618.0 163.0L617.5 164.4L617.0 161.7L616.5 154.6L616.0 155.0L615.7 141.8L615.2 131.3L614.7 130.7L614.2 129.3L613.7 146.0L613.2 131.8L612.7 135.9L612.2 133.7L611.7 133.5L611.2 140.1L610.7 153.1L610.2 138.6L609.7 140.3L609.2 133.5L608.7 130.7L608.2 134.7L607.7 131.9L607.2 130.5L606.7 129.5L606.2 144.6L605.7 133.9L605.2 146.7L604.7 132.5L604.2 130.6L603.7 129.1L603.2 129.3L602.7 139.8L602.2 130.1L601.7 128.5L601.2 129.1L600.7 143.1L600.2 130.3L599.7 132.7L599.2 135.3L598.7 131.7L598.2 129.8L597.7 140.8L597.2 138.6L596.7 128.9L596.2 129.7L595.7 153.7L595.2 129.3L594.7 149.4L594.2 131.5L593.7 141.7L593.2 136.2L592.7 130.5L592.2 136.1L591.7 132.9L591.2 129.3L590.7 130.6L590.2 135.8L589.7 130.6L589.2 132.8L588.7 138.5L588.2 129.1L587.7 135.6L587.2 155.0L586.7 146.8L586.2 129.8L585.7 131.7L585.2 139.7L584.7 133.5L584.2 146.3L583.7 137.3L583.2 135.3L582.7 150.2L582.2 134.5L581.7 130.3L581.2 136.3L580.7 139.3L580.2 134.1L579.7 130.3L579.2 128.8L578.7 130.0L578.2 147.1L577.7 137.4L577.2 137.6L576.7 130.5L576.2 129.5L575.7 136.2L575.2 131.0L574.7 130.6L574.2 131.4L573.7 139.5L573.2 132.1L572.7 134.8L572.2 146.3L571.7 138.8L571.2 139.1L570.7 129.1L570.2 139.0L569.7 143.3L569.2 138.2L568.7 137.7L568.2 129.2L567.7 129.1L567.2 136.7L566.7 132.4L566.2 129.3L565.7 131.2L565.2 138.1L564.7 132.1L564.2 128.6L563.7 134.5L563.2 144.8L562.7 143.0L562.2 132.5L561.7 138.0L561.2 131.0L560.7 143.0L560.2 128.6L559.7 150.4L559.2 129.3L558.7 135.2L558.2 132.9L557.7 138.8L557.2 134.5L556.7 130.9L556.2 131.6L555.7 129.5L555.2 144.7L554.7 132.3L554.2 143.3L553.7 136.4L553.2 130.4L552.7 135.0L552.2 128.9L551.7 133.6L551.2 134.6L550.7 136.3L550.2 136.9L549.7 138.8L549.2 134.3L548.7 130.3L548.2 139.5L547.7 144.7L547.2 130.3L546.7 129.7L546.2 133.4L545.7 129.5L545.2 130.7L544.7 134.6L544.2 139.8L543.7 131.4L543.2 131.0L542.7 141.8L542.2 134.4L541.7 132.0L541.2 131.2L540.7 135.7L540.2 129.1L539.7 133.5L539.2 137.9L538.7 144.4L538.2 131.1L537.7 144.4L537.2 128.6L536.7 134.2L536.2 135.5L535.7 132.1L535.2 128.7L534.7 131.3L534.2 135.8L533.7 131.2L533.2 136.2L532.7 144.0L532.2 129.8L531.7 129.0L531.2 135.1L530.7 133.4L530.2 139.8L529.7 138.2L529.2 138.6L528.7 128.5L528.2 130.0L527.7 139.9L527.2 145.3L526.7 145.2L526.2 131.7L525.7 132.0L525.2 130.5L524.7 131.7L524.2 136.9L523.7 131.8L523.2 130.4L522.7 132.2L522.2 135.1L521.7 128.8L521.2 129.2L520.7 129.3L520.2 130.4L519.7 132.0L519.2 130.2L518.7 133.8L518.2 128.6L517.7 132.1L517.2 145.3L516.7 129.4L516.2 140.1L515.7 131.2L515.2 134.7L514.7 132.0L514.2 130.9L513.7 132.3L513.2 141.5L512.7 136.1L512.2 138.5L511.7 131.0L511.2 139.7L510.7 130.9L510.2 137.6L509.7 139.3L509.2 130.3L508.7 129.2L508.2 133.4L507.7 129.5L507.2 130.2L506.7 131.3L506.2 131.3L505.7 128.9L505.2 128.7L504.7 139.1L504.2 138.8L503.7 130.5L503.2 136.0L502.7 131.2L502.2 129.2L501.7 140.0L501.2 142.5L500.7 130.7L500.2 135.8L499.7 151.0L499.2 129.7L498.7 131.4L498.2 130.4L497.7 136.5L497.2 134.4L496.7 144.6L496.2 129.3L495.7 131.4L495.2 139.1L494.7 130.6L494.2 139.2L493.7 143.4L493.2 132.2L492.7 133.7L492.2 128.8L491.7 130.7L491.2 144.5L490.7 145.9L490.2 133.0L489.7 131.5L489.2 141.7L488.7 130.9L488.2 157.7L487.7 129.8L487.2 131.1L486.7 128.9L486.2 133.8L485.7 140.6L485.2 129.9L484.7 138.7L484.2 130.1L483.7 130.2L483.2 133.3L482.7 135.9L482.2 133.3L481.7 136.8L481.2 132.1L480.7 132.1L480.2 135.2L479.7 130.7L479.2 135.3L478.7 149.7L478.2 137.5L477.7 136.8L477.2 149.5L476.7 131.4L476.2 133.8L475.7 132.9L475.2 129.0L474.7 137.5L474.2 142.3L473.7 134.8L473.2 132.7L472.7 136.3L472.2 129.6L471.7 129.1L471.2 131.0L470.7 142.1L470.2 134.0L469.7 154.9L469.2 131.1L468.7 137.2L468.2 131.4L467.7 136.7L467.2 129.5L466.7 128.6L466.2 133.8L465.7 128.9L465.2 139.6L464.7 132.5L464.2 129.4L463.7 130.6L463.2 133.5L462.7 136.3L462.2 137.0L461.7 144.4L461.2 132.6L460.7 139.0L460.2 137.0L459.7 137.8L459.2 131.2L458.7 130.3L458.2 134.7L457.7 132.4L457.2 132.0L456.7 140.0L456.2 129.0L455.7 131.1L455.2 140.1L454.7 130.3L454.2 129.5L453.7 131.9L453.2 129.2L452.7 135.1L452.2 134.2L451.7 128.7L451.2 142.1L450.7 129.5L450.2 130.5L449.7 130.9L449.2 132.8L448.7 132.5L448.2 129.2L447.7 142.2L447.2 130.4L446.7 142.2L446.2 133.8L445.7 151.2L445.2 128.6L444.7 133.8L444.2 146.4L443.7 129.6L443.2 130.0L442.7 129.1L442.2 130.1L441.7 128.5L441.2 131.7L440.7 129.7L440.2 133.6L439.7 131.5L439.2 143.1L438.7 134.8L438.2 132.4L437.7 128.7L437.2 136.1L436.7 146.4L436.2 134.1L435.7 129.2L435.2 131.2L434.7 131.6L434.2 129.2L433.7 145.6L433.2 140.5L432.7 134.2L432.2 149.7L431.7 130.8L431.2 131.2L430.7 136.7L430.2 129.5L429.7 138.6L429.2 142.1L428.7 136.3L428.2 129.6L427.7 139.2L427.2 154.0L426.7 146.4L426.2 139.1L425.7 140.2L425.2 131.4L424.7 137.9L424.2 139.3L423.7 128.7L423.2 129.1L422.7 132.1L422.2 131.1L421.7 132.9L421.2 133.7L420.7 143.4L420.2 140.0L419.7 137.8L419.2 152.3L418.7 130.9L418.2 129.2L417.7 130.1L417.2 129.5L416.7 132.1L416.2 132.6L415.7 132.3L415.2 132.3L414.7 136.8L414.2 140.3L413.7 134.6L413.2 130.8L412.7 131.1L412.2 136.4L411.7 147.9L411.2 145.2L410.7 133.2L410.2 132.5L409.7 129.1L409.2 133.2L408.7 131.1L408.2 133.0L407.7 131.4L407.2 137.3L406.7 128.7L406.3 138.0L405.3 152.0L404.3 170.0L403.8 177.0L402.0 177.0Z" fill="#3cf408" stroke="#3cf408" stroke-width=".3" stroke-linejoin="round"/>
<path d="M476.3 104v18M546.6 104v20" stroke="#0a3a00" stroke-width="1"/>
</svg>
<div class="t" style="left:401.5px;top:70.90px;font-size:7.5px;line-height:9px;color:#fff;">Rng 21 dBm</div>
<div class="t" style="right:800.5px;top:79.90px;font-size:7.5px;line-height:9px;color:#fff;">-10</div>
<div class="t" style="right:800.5px;top:88.90px;font-size:7.5px;line-height:9px;color:#fff;">dBm</div>
<div class="t" style="right:800.5px;top:106.90px;font-size:7.5px;line-height:9px;color:#fff;">LogMag</div>
<div class="t" style="right:800.5px;top:124.90px;font-size:7.5px;line-height:9px;color:#fff;">10</div>
<div class="t" style="right:800.5px;top:133.90px;font-size:7.5px;line-height:9px;color:#fff;">dB</div>
<div class="t" style="right:800.5px;top:142.90px;font-size:7.5px;line-height:9px;color:#fff;">/div</div>
<div class="t" style="right:800.5px;top:158.90px;font-size:7.5px;line-height:9px;color:#fff;">-110</div>
<div class="t" style="right:800.5px;top:168.90px;font-size:7.5px;line-height:9px;color:#fff;">dBm</div>
<div class="t" style="left:401.5px;top:177.90px;font-size:7.5px;line-height:9px;color:#fff;">Center 7.125 GHz</div>
<div class="t" style="left:401.5px;top:186.90px;font-size:7.5px;line-height:9px;color:#fff;">Res BW 25.4626 kHz</div>
<div class="t" style="right:508.70000000000005px;top:177.90px;font-size:7.5px;line-height:9px;color:#fff;">Span 330 MHz</div>
<div class="t" style="right:508.70000000000005px;top:186.90px;font-size:7.5px;line-height:9px;color:#fff;">TimeLen 150 uSec</div>
<svg style="left:0;top:0" width="1200" height="675" viewBox="0 0 1200 675">
<path d="M431.10 234.9V330.6M459.90 234.9V330.6M488.70 234.9V330.6M517.50 234.9V330.6M546.30 234.9V330.6M575.10 234.9V330.6M603.90 234.9V330.6M632.70 234.9V330.6M661.50 234.9V330.6M402.3 244.47H690.3M402.3 254.04H690.3M402.3 263.61H690.3M402.3 273.18H690.3M402.3 282.75H690.3M402.3 292.32H690.3M402.3 301.89H690.3M402.3 311.46H690.3M402.3 321.03H690.3" stroke="#313131" stroke-width="1.15" fill="none"/><rect x="402.3" y="234.9" width="287.99999999999994" height="95.70000000000002" fill="none" stroke="#525252" stroke-width="1.8"/>
<path d="M401.6 331.4L401.6 299.9L402.2 303.5L402.7 302.7L403.3 303.9L403.8 298.6L404.4 303.2L404.9 302.1L405.5 302.0L406.0 304.1L406.6 304.0L407.1 303.8L407.7 304.6L408.2 297.9L408.8 303.4L409.3 299.2L409.9 302.8L410.4 302.8L411.0 300.7L411.5 303.9L412.1 303.7L412.6 298.8L413.2 302.6L413.7 303.5L414.3 303.7L414.8 303.0L415.4 303.9L415.9 302.5L416.5 303.1L417.0 302.1L417.6 305.4L418.1 305.1L418.7 303.2L419.2 301.7L419.8 304.9L420.3 303.1L420.9 304.2L421.4 302.9L422.0 301.1L422.5 302.6L423.1 302.4L423.6 304.9L424.2 304.2L424.7 303.2L425.3 303.5L425.8 303.0L426.4 303.8L426.9 302.7L427.5 304.0L428.0 304.0L428.6 303.5L429.1 303.3L429.7 297.3L430.2 299.4L430.8 301.9L431.3 302.1L431.9 302.6L432.4 299.8L433.0 302.3L433.5 302.3L434.1 303.9L434.6 298.9L435.2 303.2L435.7 303.3L436.3 302.4L436.8 303.4L437.4 302.5L437.9 301.0L438.5 299.7L439.0 303.1L439.6 302.3L440.1 303.9L440.7 302.9L441.2 302.3L441.8 304.0L442.3 303.6L442.9 303.3L443.4 300.7L444.0 303.9L444.5 303.0L445.1 302.2L445.6 304.4L446.2 303.8L446.7 299.7L447.3 301.6L447.8 303.1L448.4 303.1L448.9 302.1L449.5 300.7L450.0 303.5L450.6 304.6L451.1 303.4L451.7 302.6L452.2 303.2L452.8 303.1L453.3 304.1L453.9 303.5L454.4 305.0L455.0 302.6L455.5 302.2L456.1 304.6L456.6 302.9L457.2 302.1L457.7 303.7L458.3 303.0L458.8 303.4L459.4 302.6L459.9 302.2L460.5 304.0L461.0 302.7L461.6 302.8L462.1 302.3L462.7 305.0L463.2 302.5L463.8 303.1L464.3 302.1L464.9 303.6L465.4 303.5L466.0 304.1L466.5 302.9L467.1 302.8L467.6 302.8L468.2 304.7L468.7 302.9L469.3 304.0L469.8 303.1L470.4 303.0L470.9 303.8L471.5 300.2L472.0 302.4L472.6 303.6L473.1 304.5L473.3 331.4Z" fill="#d00000"/>
<path d="M458.4 305.9h.01M420.2 305.5h.01M411.3 305.7h.01M439.3 304.8h.01M428.9 304.5h.01M409.5 305.3h.01M420.2 304.2h.01M444.2 303.6h.01M462.0 303.9h.01M430.7 305.6h.01M460.4 305.9h.01M445.8 306.5h.01M468.6 306.3h.01M462.1 302.0h.01M445.4 307.3h.01M434.5 303.4h.01M428.3 308.1h.01M446.0 303.1h.01M420.9 306.4h.01M426.8 304.0h.01M439.2 304.2h.01M422.0 306.9h.01M460.3 306.3h.01M426.0 308.1h.01M409.8 302.6h.01M464.5 308.0h.01M467.7 303.4h.01M413.8 305.2h.01M411.0 304.2h.01" stroke="#40186c" stroke-width="1.1" stroke-linecap="round" fill="none" opacity=".75"/>
<path d="M442.4 306.4h.01M468.6 308.0h.01M413.7 306.6h.01M459.0 305.7h.01M438.3 308.2h.01M466.2 304.6h.01M404.5 303.0h.01M405.4 305.5h.01M431.7 305.1h.01M454.5 303.1h.01M451.1 307.8h.01M438.2 307.1h.01M428.7 304.7h.01M450.2 306.5h.01M426.1 305.5h.01" stroke="#3a8ce8" stroke-width="1" stroke-linecap="round" fill="none" opacity=".8"/>
<path d="M405.2 304.9V300.3M460.4 304.9V301.1M403.9 304.9V298.6M456.1 304.9V300.5M423.4 304.9V298.4M427.8 304.9V300.7M458.9 304.9V300.4M405.3 304.9V300.4M434.9 304.9V299.8M413.7 304.9V300.0M456.4 304.9V286.3M406.5 304.9V297.5M404.5 304.9V298.0M469.5 304.9V297.0M472.3 304.9V297.6M455.0 304.9V297.5" stroke="#2a86e0" stroke-width=".9" fill="none"/>
<path d="M404.0 299.3a1.2 1.2 0 1 0 2.4 0a1.2 1.2 0 1 0 -2.4 0M459.2 300.1a1.2 1.2 0 1 0 2.4 0a1.2 1.2 0 1 0 -2.4 0M402.7 297.6a1.2 1.2 0 1 0 2.4 0a1.2 1.2 0 1 0 -2.4 0M454.9 299.5a1.2 1.2 0 1 0 2.4 0a1.2 1.2 0 1 0 -2.4 0M422.2 297.4a1.2 1.2 0 1 0 2.4 0a1.2 1.2 0 1 0 -2.4 0M426.6 299.7a1.2 1.2 0 1 0 2.4 0a1.2 1.2 0 1 0 -2.4 0M457.7 299.4a1.2 1.2 0 1 0 2.4 0a1.2 1.2 0 1 0 -2.4 0M404.1 299.4a1.2 1.2 0 1 0 2.4 0a1.2 1.2 0 1 0 -2.4 0M433.7 298.8a1.2 1.2 0 1 0 2.4 0a1.2 1.2 0 1 0 -2.4 0M412.5 299.0a1.2 1.2 0 1 0 2.4 0a1.2 1.2 0 1 0 -2.4 0M455.2 285.3a1.2 1.2 0 1 0 2.4 0a1.2 1.2 0 1 0 -2.4 0M405.3 296.5a1.2 1.2 0 1 0 2.4 0a1.2 1.2 0 1 0 -2.4 0M403.3 297.0a1.2 1.2 0 1 0 2.4 0a1.2 1.2 0 1 0 -2.4 0M468.3 296.0a1.2 1.2 0 1 0 2.4 0a1.2 1.2 0 1 0 -2.4 0M471.1 296.6a1.2 1.2 0 1 0 2.4 0a1.2 1.2 0 1 0 -2.4 0M453.8 296.5a1.2 1.2 0 1 0 2.4 0a1.2 1.2 0 1 0 -2.4 0" stroke="#d01828" stroke-width=".8" fill="none"/>
<path d="M473.3 331.4L473.3 304.3L473.9 301.5L474.4 301.8L475.0 304.6L475.5 303.5L476.1 304.1L476.6 302.9L477.2 304.5L477.7 307.5L478.3 303.3L478.8 304.9L479.4 305.2L479.9 306.9L480.5 299.0L481.0 305.6L481.6 303.9L482.1 303.7L482.7 304.5L483.2 304.0L483.8 302.6L484.3 304.5L484.9 304.6L485.4 305.2L486.0 301.9L486.5 303.9L487.1 305.2L487.6 306.6L488.2 302.9L488.7 299.0L489.3 304.5L489.8 303.7L490.4 304.5L490.9 304.3L491.5 304.0L492.0 305.3L492.6 304.5L493.1 303.6L493.7 305.4L494.2 305.4L494.8 304.5L495.3 305.9L495.9 303.7L496.4 304.3L497.0 304.9L497.5 304.7L498.1 304.5L498.6 303.2L499.2 304.2L499.7 300.6L500.3 303.6L500.8 305.0L501.4 303.8L501.9 304.0L502.5 302.2L503.0 305.6L503.6 302.9L504.1 303.8L504.7 305.6L505.2 304.9L505.8 304.2L506.3 303.6L506.9 304.6L507.4 304.0L508.0 305.6L508.5 305.2L509.1 304.3L509.6 301.8L510.2 304.6L510.7 302.7L511.3 302.1L511.8 305.5L512.4 304.5L512.9 302.0L513.5 303.6L514.0 305.2L514.6 304.1L515.1 302.7L515.7 303.9L516.2 304.3L516.8 301.4L517.3 303.3L517.9 304.6L518.4 303.4L519.0 303.9L519.5 303.2L520.1 305.5L520.6 303.6L521.2 303.7L521.7 305.4L522.2 305.2L522.8 303.6L523.3 306.3L523.9 303.3L524.4 301.7L525.0 303.4L525.5 302.0L526.1 304.6L526.6 305.2L527.2 304.4L527.7 304.5L528.3 304.5L528.8 303.0L529.4 301.6L529.9 306.1L530.5 303.5L531.0 306.0L531.6 304.7L532.1 304.2L532.7 304.2L533.2 304.1L533.8 305.3L534.3 305.9L534.9 305.4L535.4 303.8L536.0 304.9L536.5 305.1L537.1 305.1L537.6 305.6L538.2 304.9L538.7 305.5L539.3 304.1L539.8 304.9L540.4 305.5L540.9 304.8L541.5 303.3L542.0 303.0L542.6 304.2L543.1 303.9L543.7 303.4L544.2 304.1L544.8 301.9L545.3 302.3L545.9 304.7L546.3 331.4Z" fill="#d08a00"/>
<path d="M543.7 307.1h.01M480.6 308.0h.01M519.0 306.8h.01M491.2 309.2h.01M501.4 304.9h.01M483.3 308.0h.01M494.4 308.3h.01M520.3 304.0h.01M492.8 308.2h.01M514.9 305.8h.01M480.7 306.4h.01M545.3 303.1h.01M503.9 305.7h.01M528.3 304.3h.01M515.2 303.7h.01M515.9 306.3h.01M488.2 303.9h.01M516.6 303.4h.01M523.4 306.9h.01M513.7 307.8h.01M533.1 306.9h.01M492.1 305.7h.01M503.5 303.1h.01M509.5 305.4h.01M517.1 307.6h.01M477.8 307.8h.01M536.2 304.1h.01M511.2 303.4h.01M539.0 304.1h.01M489.8 304.7h.01" stroke="#40186c" stroke-width="1.1" stroke-linecap="round" fill="none" opacity=".75"/>
<path d="M506.4 309.2h.01M513.7 307.1h.01M495.0 304.4h.01M496.3 303.4h.01M503.4 303.9h.01M531.9 303.8h.01M488.9 309.2h.01M475.3 304.8h.01M503.7 305.1h.01M499.2 304.8h.01M488.3 305.5h.01M536.2 306.7h.01M535.4 309.2h.01M542.9 308.3h.01M476.2 307.1h.01" stroke="#3a8ce8" stroke-width="1" stroke-linecap="round" fill="none" opacity=".8"/>
<path d="M495.1 306.1V299.6M520.6 306.1V301.9M492.3 306.1V300.7M523.1 306.1V299.7M499.0 306.1V301.2M482.8 306.1V302.2M482.4 306.1V300.9M493.4 306.1V300.0M524.5 306.1V301.0M542.4 306.1V301.7M545.6 306.1V291.6M498.4 306.1V297.0M528.0 306.1V297.0M524.0 306.1V297.5" stroke="#2a86e0" stroke-width=".9" fill="none"/>
<path d="M493.9 297.4h2.4v2.4h-2.4zM519.4 299.7h2.4v2.4h-2.4zM491.1 298.5h2.4v2.4h-2.4zM521.9 297.5h2.4v2.4h-2.4zM497.8 299.0h2.4v2.4h-2.4zM481.6 300.0h2.4v2.4h-2.4zM481.2 298.7h2.4v2.4h-2.4zM492.2 297.8h2.4v2.4h-2.4zM523.3 298.8h2.4v2.4h-2.4zM541.2 299.5h2.4v2.4h-2.4zM544.4 289.4h2.4v2.4h-2.4zM497.2 294.8h2.4v2.4h-2.4zM526.8 294.8h2.4v2.4h-2.4zM522.8 295.3h2.4v2.4h-2.4z" stroke="#d89810" stroke-width=".8" fill="none"/>
<path d="M546.3 331.4L546.3 306.5L546.8 306.0L547.4 303.9L547.9 305.8L548.5 306.2L549.0 306.4L549.6 302.9L550.1 306.8L550.7 306.9L551.2 306.0L551.8 305.7L552.3 307.0L552.9 306.3L553.4 304.2L554.0 305.4L554.5 302.1L555.1 303.0L555.6 300.8L556.2 306.5L556.7 306.9L557.3 306.7L557.8 305.9L558.4 306.8L558.9 306.8L559.5 304.3L560.0 306.9L560.6 307.6L561.1 306.9L561.7 306.3L562.2 305.8L562.8 307.3L563.3 306.9L563.9 306.5L564.4 307.1L565.0 306.5L565.5 306.8L566.1 307.8L566.6 308.1L567.2 307.5L567.7 307.2L568.3 307.3L568.8 306.2L569.4 307.5L569.9 302.0L570.5 306.0L571.0 306.6L571.6 306.6L572.1 307.7L572.7 304.9L573.2 307.0L573.8 303.6L574.3 302.2L574.9 303.2L575.4 306.1L576.0 306.8L576.5 307.5L577.1 307.1L577.6 307.3L578.2 306.7L578.7 306.5L579.3 302.3L579.8 305.8L580.4 305.4L580.9 306.6L581.5 304.7L582.0 306.2L582.6 302.2L583.1 306.6L583.7 306.5L584.2 307.5L584.8 307.4L585.3 305.0L585.9 308.0L586.4 306.7L587.0 306.8L587.5 306.1L588.1 306.7L588.6 307.4L589.2 304.0L589.7 306.5L590.3 307.8L590.8 306.2L591.4 308.0L591.9 304.9L592.5 308.5L593.0 305.8L593.6 305.7L594.1 305.3L594.7 303.0L595.2 306.4L595.8 308.0L596.3 306.3L596.9 306.2L597.4 304.0L598.0 305.1L598.5 306.5L599.1 304.9L599.6 305.0L600.2 307.0L600.7 306.9L601.3 307.0L601.8 307.9L602.4 306.1L602.9 307.2L603.5 306.3L604.0 307.6L604.6 306.4L605.1 306.8L605.7 307.7L606.2 306.1L606.8 305.4L607.3 304.1L607.9 307.9L608.4 304.6L609.0 304.9L609.5 306.6L610.1 305.4L610.6 305.6L611.2 306.4L611.7 307.4L612.3 303.0L612.8 307.9L613.4 305.1L613.9 302.4L614.5 304.2L615.0 301.9L615.6 306.1L616.1 303.9L616.7 304.7L617.2 307.0L617.8 306.0L618.3 304.4L618.9 307.0L619.4 301.1L619.6 331.4Z" fill="#86cc00"/>
<path d="M606.7 310.8h.01M563.3 310.3h.01M590.3 305.3h.01M561.1 309.5h.01M584.7 305.7h.01M558.6 310.4h.01M585.9 307.2h.01M616.2 310.1h.01M584.0 309.5h.01M583.2 308.6h.01M597.1 306.5h.01M588.7 308.0h.01M605.3 310.5h.01M589.1 307.2h.01M585.5 306.2h.01M552.8 309.2h.01M556.8 305.5h.01M613.0 308.3h.01M598.5 307.9h.01M607.9 309.4h.01M547.9 305.6h.01M614.8 309.0h.01M600.5 309.7h.01M564.1 306.2h.01M570.4 308.0h.01M594.6 310.5h.01M558.5 306.7h.01M604.4 308.8h.01M611.9 310.5h.01M606.6 306.7h.01M595.7 307.3h.01M587.8 307.8h.01" stroke="#40186c" stroke-width="1.1" stroke-linecap="round" fill="none" opacity=".75"/>
<path d="M551.6 310.2h.01M580.2 311.1h.01M599.7 305.6h.01M572.5 308.0h.01M562.7 311.2h.01M567.9 308.7h.01M612.9 309.1h.01M579.1 306.7h.01M588.2 309.3h.01M578.1 306.7h.01M552.2 311.0h.01M590.1 308.8h.01M581.9 307.0h.01" stroke="#3a8ce8" stroke-width="1" stroke-linecap="round" fill="none" opacity=".8"/>
<path d="M583.0 308.3V303.3M607.1 308.3V303.6M587.8 308.3V302.2M558.8 308.3V303.6M604.9 308.3V304.5M574.8 308.3V304.1M554.5 308.3V303.7M557.5 308.3V302.5M569.4 308.3V302.8M548.3 308.3V304.6M559.5 308.3V296.5M578.5 308.3V298.0M613.0 308.3V298.0M583.0 308.3V299.0" stroke="#2a86e0" stroke-width=".9" fill="none"/>
<path d="M581.8 301.1h2.4v2.4h-2.4zM605.9 301.4h2.4v2.4h-2.4zM586.6 300.0h2.4v2.4h-2.4zM557.6 301.4h2.4v2.4h-2.4zM603.7 302.3h2.4v2.4h-2.4zM573.6 301.9h2.4v2.4h-2.4zM553.3 301.5h2.4v2.4h-2.4zM556.3 300.3h2.4v2.4h-2.4zM568.2 300.6h2.4v2.4h-2.4zM547.1 302.4h2.4v2.4h-2.4zM558.3 294.3h2.4v2.4h-2.4zM577.3 295.8h2.4v2.4h-2.4zM611.8 295.8h2.4v2.4h-2.4zM581.8 296.8h2.4v2.4h-2.4z" stroke="#98d418" stroke-width=".8" fill="none"/>
<path d="M655.2 331.4L655.2 299.7L655.8 304.9L656.3 301.9L656.8 305.2L657.4 305.5L657.9 304.0L658.5 305.8L659.0 304.4L659.6 304.6L660.1 306.7L660.7 304.5L661.2 305.9L661.8 305.4L662.3 306.3L662.9 305.5L663.4 306.4L664.0 305.3L664.5 304.2L665.1 304.6L665.6 305.0L666.2 305.5L666.7 299.6L667.3 301.5L667.8 304.7L668.4 305.7L668.9 305.5L669.5 304.9L670.0 305.7L670.6 305.5L671.1 306.6L671.7 298.8L672.2 304.2L672.8 299.6L673.3 305.5L673.9 299.7L674.4 304.2L675.0 305.7L675.5 305.3L676.1 301.7L676.6 305.5L677.2 305.1L677.7 304.3L678.3 305.4L678.8 306.0L679.4 305.0L679.9 304.5L680.5 304.6L681.0 303.7L681.6 305.0L682.1 305.6L682.7 304.5L683.2 304.4L683.8 306.0L684.3 304.7L684.9 305.1L685.4 305.1L686.0 305.8L686.5 305.5L687.1 304.6L687.6 299.4L688.2 304.0L688.7 305.7L689.3 305.2L689.8 301.6L690.4 304.8L690.9 305.7L691.0 331.4Z" fill="#00cc86"/>
<path d="M656.2 303.8h.01M664.0 307.6h.01M657.3 310.0h.01M678.9 308.2h.01M661.0 304.5h.01M664.0 306.9h.01M678.5 310.1h.01M658.1 309.8h.01M675.5 306.3h.01M679.3 304.5h.01M680.0 306.8h.01M668.3 306.5h.01M679.0 307.4h.01M656.7 304.2h.01M683.7 308.3h.01M661.5 310.0h.01" stroke="#40186c" stroke-width="1.1" stroke-linecap="round" fill="none" opacity=".75"/>
<path d="M678.4 306.5h.01M685.1 305.1h.01M687.9 307.4h.01M686.4 305.0h.01M667.7 305.3h.01M669.3 304.0h.01" stroke="#3a8ce8" stroke-width="1" stroke-linecap="round" fill="none" opacity=".8"/>
<path d="M682.5 306.7V301.5M669.7 306.7V302.1M656.9 306.7V299.6M671.7 306.7V302.1M674.3 306.7V300.2M675.0 306.7V296.0M681.0 306.7V296.0M668.0 306.7V300.0" stroke="#2a86e0" stroke-width=".9" fill="none"/>
<path d="M681.3 300.5a1.2 1.2 0 1 0 2.4 0a1.2 1.2 0 1 0 -2.4 0M668.5 301.1a1.2 1.2 0 1 0 2.4 0a1.2 1.2 0 1 0 -2.4 0M655.7 298.6a1.2 1.2 0 1 0 2.4 0a1.2 1.2 0 1 0 -2.4 0M670.5 301.1a1.2 1.2 0 1 0 2.4 0a1.2 1.2 0 1 0 -2.4 0M673.1 299.2a1.2 1.2 0 1 0 2.4 0a1.2 1.2 0 1 0 -2.4 0M673.8 295.0a1.2 1.2 0 1 0 2.4 0a1.2 1.2 0 1 0 -2.4 0M679.8 295.0a1.2 1.2 0 1 0 2.4 0a1.2 1.2 0 1 0 -2.4 0M666.8 299.0a1.2 1.2 0 1 0 2.4 0a1.2 1.2 0 1 0 -2.4 0" stroke="#10d490" stroke-width=".8" fill="none"/>
</svg>
<div class="t" style="left:401.5px;top:225.90px;font-size:7.5px;line-height:9px;color:#fff;">Rng 21 dBm</div>
<div class="t" style="right:800.5px;top:234.90px;font-size:7.5px;line-height:9px;color:#fff;">3</div>
<div class="t" style="right:800.5px;top:243.90px;font-size:7.5px;line-height:9px;color:#fff;">%</div>
<div class="t" style="right:800.5px;top:260.90px;font-size:7.5px;line-height:9px;color:#fff;">LinMag</div>
<div class="t" style="right:800.5px;top:278.90px;font-size:7.5px;line-height:9px;color:#fff;">300</div>
<div class="t" style="right:800.5px;top:287.90px;font-size:7.5px;line-height:9px;color:#fff;">m%</div>
<div class="t" style="right:800.5px;top:296.90px;font-size:7.5px;line-height:9px;color:#fff;">/div</div>
<div class="t" style="right:800.5px;top:313.90px;font-size:7.5px;line-height:9px;color:#fff;">0</div>
<div class="t" style="right:800.5px;top:322.90px;font-size:7.5px;line-height:9px;color:#fff;">%</div>
<div class="t" style="left:401.5px;top:331.90px;font-size:7.5px;line-height:9px;color:#fff;">Start -2.036 kcarrier</div>
<div class="t" style="left:401.5px;top:340.90px;font-size:7.5px;line-height:9px;color:#fff;">Res BW 78.125 kHz</div>
<div class="t" style="right:508.70000000000005px;top:331.90px;font-size:7.5px;line-height:9px;color:#fff;">Stop 2.036 kcarrier</div>
<div class="t" style="right:508.70000000000005px;top:340.90px;font-size:7.5px;line-height:9px;color:#fff;">TimeLen 4  Sym</div>
<svg style="left:0;top:0" width="1200" height="675" viewBox="0 0 1200 675">
<path d="M782.39 234.9V330.6M827.58 234.9V330.6M872.77 234.9V330.6M917.96 234.9V330.6M963.15 234.9V330.6M1008.34 234.9V330.6M1053.53 234.9V330.6M1098.72 234.9V330.6M1143.91 234.9V330.6M737.2 244.47H1189.1M737.2 254.04H1189.1M737.2 263.61H1189.1M737.2 273.18H1189.1M737.2 282.75H1189.1M737.2 292.32H1189.1M737.2 301.89H1189.1M737.2 311.46H1189.1M737.2 321.03H1189.1" stroke="#313131" stroke-width="1.15" fill="none"/><rect x="737.2" y="234.9" width="451.89999999999986" height="95.70000000000002" fill="none" stroke="#525252" stroke-width="1.8"/>
<path d="M737.4 331.3V281" stroke="#10d890" stroke-width="1.7" fill="none"/>
<path d="M887.6 331.3V277M1038.7 331.3V276" stroke="#10d890" stroke-width="2.9" fill="none"/>
<path d="M1188.9 331.3V276" stroke="#10d890" stroke-width="1.8" fill="none"/>
<path d="M737.4 277V264" stroke="#2890a8" stroke-width="1.1"/><path d="M737.4 283V276.8" stroke="#d8b010" stroke-width="1.5"/><path d="M737.4 278.5v-1.7" stroke="#e07010" stroke-width="1.5"/><path d="M737.4 263.8v-2.6" stroke="#e01010" stroke-width="1.9"/>
<path d="M887.6 285.5V277.5" stroke="#c8d020" stroke-width="2.6"/><path d="M887.6 281V278.5" stroke="#e8a010" stroke-width="1.4"/><path d="M887.6 278V276.6" stroke="#e83010" stroke-width="2.8"/>
<path d="M1038.7 276V271.5" stroke="#20c0c8" stroke-width="1"/><path d="M1038.7 278.5V276" stroke="#108868" stroke-width="2.8"/><path d="M1038.7 285V278.5" stroke="#d8c020" stroke-width="2.2"/><path d="M1038.7 280.5v-2" stroke="#e82810" stroke-width="2.2"/><circle cx="1038.7" cy="270" r="1.7" fill="none" stroke="#c87808" stroke-width=".9"/>
<path d="M1188.9 283V278" stroke="#e07010" stroke-width="1.6"/><path d="M1188.9 278V275.5" stroke="#40d020" stroke-width="1.5"/>
<path d="M736.5 312.7H813V312.2H1190" stroke="#fff" stroke-width="1.8" fill="none"/>
</svg>
<div class="t" style="left:736.3px;top:225.90px;font-size:7.5px;line-height:9px;color:#fff;">Rng 3.548134  V</div>
<div class="t" style="right:465.5px;top:234.90px;font-size:7.5px;line-height:9px;color:#fff;">2</div>
<div class="t" style="right:465.5px;top:243.90px;font-size:7.5px;line-height:9px;color:#fff;">%</div>
<div class="t" style="right:465.5px;top:260.90px;font-size:7.5px;line-height:9px;color:#fff;">LinMag</div>
<div class="t" style="right:465.5px;top:278.90px;font-size:7.5px;line-height:9px;color:#fff;">200</div>
<div class="t" style="right:465.5px;top:287.90px;font-size:7.5px;line-height:9px;color:#fff;">m%</div>
<div class="t" style="right:465.5px;top:296.90px;font-size:7.5px;line-height:9px;color:#fff;">/div</div>
<div class="t" style="right:465.5px;top:313.90px;font-size:7.5px;line-height:9px;color:#fff;">0</div>
<div class="t" style="right:465.5px;top:322.90px;font-size:7.5px;line-height:9px;color:#fff;">%</div>
<div class="t" style="left:736.3px;top:331.90px;font-size:7.5px;line-height:9px;color:#fff;">Start 0  sym</div>
<div class="t" style="right:10.5px;top:331.90px;font-size:7.5px;line-height:9px;color:#fff;">Stop 3  sym</div>
<div class="t" style="left:736.3px;top:86.90px;font-size:7.5px;line-height:9px;color:#8fe0a4;">EVM(dB)</div>
<div class="t" style="left:783.8px;top:86.90px;font-size:7.5px;line-height:9px;color:#8fe0a4;">Subcarrier(Start)</div>
<div class="t" style="left:862.6px;top:86.90px;font-size:7.5px;line-height:9px;color:#8fe0a4;">Subcarrier(Stop)</div>
<div class="t" style="left:937px;top:86.90px;font-size:7.5px;line-height:9px;color:#8fe0a4;">Size</div>
<div class="t" style="left:976px;top:86.90px;font-size:7.5px;line-height:9px;color:#8fe0a4;">Pwr(dBm)</div>
<div class="t" style="left:1023px;top:86.90px;font-size:7.5px;line-height:9px;color:#8fe0a4;">Total_Users</div>
<div class="t" style="left:1080.3px;top:86.90px;font-size:7.5px;line-height:9px;color:#8fe0a4;">Total_Streams</div>
<div style="position:absolute;left:705.5px;top:97px;width:484.5px;height:1px;background:#5c9c74"></div>
<div class="t" style="left:709.5px;top:100.90px;font-size:7.5px;line-height:9px;color:#c4002c;">RU1</div>
<div class="t" style="left:736.3px;top:100.90px;font-size:7.5px;line-height:9px;color:#c4002c;">-47.816</div>
<div class="t" style="left:783.8px;top:100.90px;font-size:7.5px;line-height:9px;color:#c4002c;">-2036</div>
<div class="t" style="left:862.6px;top:100.90px;font-size:7.5px;line-height:9px;color:#c4002c;">-1036</div>
<div class="t" style="left:937px;top:100.90px;font-size:7.5px;line-height:9px;color:#c4002c;">996</div>
<div class="t" style="left:976px;top:100.90px;font-size:7.5px;line-height:9px;color:#c4002c;">-5.7655</div>
<div class="t" style="left:1023px;top:100.90px;font-size:7.5px;line-height:9px;color:#c4002c;">1</div>
<div class="t" style="left:1080.3px;top:100.90px;font-size:7.5px;line-height:9px;color:#c4002c;">1</div>
<div class="t" style="left:709.5px;top:109.90px;font-size:7.5px;line-height:9px;color:#d08200;">RU2</div>
<div class="t" style="left:736.3px;top:109.90px;font-size:7.5px;line-height:9px;color:#d08200;">-47.977</div>
<div class="t" style="left:783.8px;top:109.90px;font-size:7.5px;line-height:9px;color:#d08200;">-1012</div>
<div class="t" style="left:862.6px;top:109.90px;font-size:7.5px;line-height:9px;color:#d08200;">-12</div>
<div class="t" style="left:937px;top:109.90px;font-size:7.5px;line-height:9px;color:#d08200;">996</div>
<div class="t" style="left:976px;top:109.90px;font-size:7.5px;line-height:9px;color:#d08200;">-5.6254</div>
<div class="t" style="left:1023px;top:109.90px;font-size:7.5px;line-height:9px;color:#d08200;">1</div>
<div class="t" style="left:1080.3px;top:109.90px;font-size:7.5px;line-height:9px;color:#d08200;">1</div>
<div class="t" style="left:709.5px;top:118.90px;font-size:7.5px;line-height:9px;color:#96c400;">RU3</div>
<div class="t" style="left:736.3px;top:118.90px;font-size:7.5px;line-height:9px;color:#96c400;">-48.319</div>
<div class="t" style="left:783.8px;top:118.90px;font-size:7.5px;line-height:9px;color:#96c400;">12</div>
<div class="t" style="left:862.6px;top:118.90px;font-size:7.5px;line-height:9px;color:#96c400;">1012</div>
<div class="t" style="left:937px;top:118.90px;font-size:7.5px;line-height:9px;color:#96c400;">996</div>
<div class="t" style="left:976px;top:118.90px;font-size:7.5px;line-height:9px;color:#96c400;">-5.5337</div>
<div class="t" style="left:1023px;top:118.90px;font-size:7.5px;line-height:9px;color:#96c400;">1</div>
<div class="t" style="left:1080.3px;top:118.90px;font-size:7.5px;line-height:9px;color:#96c400;">1</div>
<div class="t" style="left:709.5px;top:127.90px;font-size:7.5px;line-height:9px;color:#22bc00;">RU4</div>
<div class="t" style="left:736.3px;top:127.90px;font-size:7.5px;line-height:9px;color:#22bc00;">***</div>
<div class="t" style="left:783.8px;top:127.90px;font-size:7.5px;line-height:9px;color:#22bc00;">1036</div>
<div class="t" style="left:862.6px;top:127.90px;font-size:7.5px;line-height:9px;color:#22bc00;">1524</div>
<div class="t" style="left:937px;top:127.90px;font-size:7.5px;line-height:9px;color:#22bc00;">484</div>
<div class="t" style="left:976px;top:127.90px;font-size:7.5px;line-height:9px;color:#22bc00;">-57.1</div>
<div class="t" style="left:1023px;top:127.90px;font-size:7.5px;line-height:9px;color:#22bc00;">1</div>
<div class="t" style="left:1080.3px;top:127.90px;font-size:7.5px;line-height:9px;color:#22bc00;">1</div>
<div class="t" style="left:709.5px;top:136.90px;font-size:7.5px;line-height:9px;color:#00b48c;">RU5</div>
<div class="t" style="left:736.3px;top:136.90px;font-size:7.5px;line-height:9px;color:#00b48c;">-48.465</div>
<div class="t" style="left:783.8px;top:136.90px;font-size:7.5px;line-height:9px;color:#00b48c;">1548</div>
<div class="t" style="left:862.6px;top:136.90px;font-size:7.5px;line-height:9px;color:#00b48c;">2036</div>
<div class="t" style="left:937px;top:136.90px;font-size:7.5px;line-height:9px;color:#00b48c;">484</div>
<div class="t" style="left:976px;top:136.90px;font-size:7.5px;line-height:9px;color:#00b48c;">-8.7543</div>
<div class="t" style="left:1023px;top:136.90px;font-size:7.5px;line-height:9px;color:#00b48c;">1</div>
<div class="t" style="left:1080.3px;top:136.90px;font-size:7.5px;line-height:9px;color:#00b48c;">1</div>
<div class="t" style="left:62.6px;top:394.90px;font-size:7.5px;line-height:9px;color:#e2124c;">Avg</div>
<div class="t" style="left:124.3px;top:394.90px;font-size:7.5px;line-height:9px;color:#e2124c;">Ch1</div>
<div class="t" style="left:164.3px;top:394.90px;font-size:7.5px;line-height:9px;color:#e2124c;">Ch2</div>
<div class="t" style="left:203px;top:394.90px;font-size:7.5px;line-height:9px;color:#e2124c;">Ch3</div>
<div style="position:absolute;left:11px;top:405px;width:225.5px;height:1px;background:#b01040"></div>
<div class="t" style="left:14.8px;top:408.90px;font-size:7.5px;line-height:9px;color:#e2124c;">EVM</div>
<div class="t" style="left:62.6px;top:408.90px;font-size:7.5px;line-height:9px;color:#e2124c;">-48.072</div>
<div class="t" style="right:1088.6px;top:408.90px;font-size:7.5px;line-height:9px;color:#e2124c;">dB</div>
<div class="t" style="left:124.3px;top:408.90px;font-size:7.5px;line-height:9px;color:#e2124c;">-48.072</div>
<div class="t" style="left:164.3px;top:408.90px;font-size:7.5px;line-height:9px;color:#e2124c;">***</div>
<div class="t" style="left:203px;top:408.90px;font-size:7.5px;line-height:9px;color:#e2124c;">***</div>
<div class="t" style="left:14.8px;top:417.90px;font-size:7.5px;line-height:9px;color:#e2124c;">EVMPeak</div>
<div class="t" style="left:62.6px;top:417.90px;font-size:7.5px;line-height:9px;color:#e2124c;">-37.01</div>
<div class="t" style="right:1088.6px;top:417.90px;font-size:7.5px;line-height:9px;color:#e2124c;">dB</div>
<div class="t" style="left:124.3px;top:417.90px;font-size:7.5px;line-height:9px;color:#e2124c;">-37.01</div>
<div class="t" style="left:164.3px;top:417.90px;font-size:7.5px;line-height:9px;color:#e2124c;">***</div>
<div class="t" style="left:203px;top:417.90px;font-size:7.5px;line-height:9px;color:#e2124c;">***</div>
<div class="t" style="left:14.8px;top:426.90px;font-size:7.5px;line-height:9px;color:#e2124c;">PilotEVM</div>
<div class="t" style="left:62.6px;top:426.90px;font-size:7.5px;line-height:9px;color:#e2124c;">-48.149</div>
<div class="t" style="right:1088.6px;top:426.90px;font-size:7.5px;line-height:9px;color:#e2124c;">dB</div>
<div class="t" style="left:124.3px;top:426.90px;font-size:7.5px;line-height:9px;color:#e2124c;">-48.149</div>
<div class="t" style="left:164.3px;top:426.90px;font-size:7.5px;line-height:9px;color:#e2124c;">***</div>
<div class="t" style="left:203px;top:426.90px;font-size:7.5px;line-height:9px;color:#e2124c;">***</div>
<div class="t" style="left:14.8px;top:435.90px;font-size:7.5px;line-height:9px;color:#e2124c;">DataEVM</div>
<div class="t" style="left:62.6px;top:435.90px;font-size:7.5px;line-height:9px;color:#e2124c;">-48.07</div>
<div class="t" style="right:1088.6px;top:435.90px;font-size:7.5px;line-height:9px;color:#e2124c;">dB</div>
<div class="t" style="left:124.3px;top:435.90px;font-size:7.5px;line-height:9px;color:#e2124c;">-48.07</div>
<div class="t" style="left:164.3px;top:435.90px;font-size:7.5px;line-height:9px;color:#e2124c;">***</div>
<div class="t" style="left:203px;top:435.90px;font-size:7.5px;line-height:9px;color:#e2124c;">***</div>
<div class="t" style="left:14.8px;top:448.90px;font-size:7.5px;line-height:9px;color:#e2124c;">FreqErr</div>
<div class="t" style="left:62.6px;top:448.90px;font-size:7.5px;line-height:9px;color:#e2124c;">1.6412</div>
<div class="t" style="right:1088.6px;top:448.90px;font-size:7.5px;line-height:9px;color:#e2124c;">Hz</div>
<div class="t" style="left:124.3px;top:448.90px;font-size:7.5px;line-height:9px;color:#e2124c;">***</div>
<div class="t" style="left:164.3px;top:448.90px;font-size:7.5px;line-height:9px;color:#e2124c;">***</div>
<div class="t" style="left:203px;top:448.90px;font-size:7.5px;line-height:9px;color:#e2124c;">***</div>
<div class="t" style="left:14.8px;top:457.90px;font-size:7.5px;line-height:9px;color:#e2124c;">SymClkErr</div>
<div class="t" style="left:62.6px;top:457.90px;font-size:7.5px;line-height:9px;color:#e2124c;">0.00366</div>
<div class="t" style="right:1088.6px;top:457.90px;font-size:7.5px;line-height:9px;color:#e2124c;">ppm</div>
<div class="t" style="left:124.3px;top:457.90px;font-size:7.5px;line-height:9px;color:#e2124c;">***</div>
<div class="t" style="left:164.3px;top:457.90px;font-size:7.5px;line-height:9px;color:#e2124c;">***</div>
<div class="t" style="left:203px;top:457.90px;font-size:7.5px;line-height:9px;color:#e2124c;">***</div>
<div class="t" style="left:14.8px;top:466.90px;font-size:7.5px;line-height:9px;color:#e2124c;">CPE</div>
<div class="t" style="left:62.6px;top:466.90px;font-size:7.5px;line-height:9px;color:#e2124c;">0.0128</div>
<div class="t" style="right:1088.6px;top:466.90px;font-size:7.5px;line-height:9px;color:#e2124c;">%rms</div>
<div class="t" style="left:124.3px;top:466.90px;font-size:7.5px;line-height:9px;color:#e2124c;">***</div>
<div class="t" style="left:164.3px;top:466.90px;font-size:7.5px;line-height:9px;color:#e2124c;">***</div>
<div class="t" style="left:203px;top:466.90px;font-size:7.5px;line-height:9px;color:#e2124c;">***</div>
<div class="t" style="left:14.8px;top:480.90px;font-size:7.5px;line-height:9px;color:#e2124c;">IQOffset</div>
<div class="t" style="left:62.6px;top:480.90px;font-size:7.5px;line-height:9px;color:#e2124c;">-63.351</div>
<div class="t" style="right:1088.6px;top:480.90px;font-size:7.5px;line-height:9px;color:#e2124c;">dB</div>
<div class="t" style="left:124.3px;top:480.90px;font-size:7.5px;line-height:9px;color:#e2124c;">-63.351</div>
<div class="t" style="left:164.3px;top:480.90px;font-size:7.5px;line-height:9px;color:#e2124c;">***</div>
<div class="t" style="left:203px;top:480.90px;font-size:7.5px;line-height:9px;color:#e2124c;">***</div>
<div class="t" style="left:14.8px;top:489.90px;font-size:7.5px;line-height:9px;color:#e2124c;">IQQuadErr</div>
<div class="t" style="left:62.6px;top:489.90px;font-size:7.5px;line-height:9px;color:#e2124c;">0.00676</div>
<div class="t" style="right:1088.6px;top:489.90px;font-size:7.5px;line-height:9px;color:#e2124c;">deg</div>
<div class="t" style="left:124.3px;top:489.90px;font-size:7.5px;line-height:9px;color:#e2124c;">0.00676</div>
<div class="t" style="left:164.3px;top:489.90px;font-size:7.5px;line-height:9px;color:#e2124c;">***</div>
<div class="t" style="left:203px;top:489.90px;font-size:7.5px;line-height:9px;color:#e2124c;">***</div>
<div class="t" style="left:14.8px;top:498.90px;font-size:7.5px;line-height:9px;color:#e2124c;">IQGainImb</div>
<div class="t" style="left:62.6px;top:498.90px;font-size:7.5px;line-height:9px;color:#e2124c;">-0.00112</div>
<div class="t" style="right:1088.6px;top:498.90px;font-size:7.5px;line-height:9px;color:#e2124c;">dB</div>
<div class="t" style="left:124.3px;top:498.90px;font-size:7.5px;line-height:9px;color:#e2124c;">-0.0011</div>
<div class="t" style="left:164.3px;top:498.90px;font-size:7.5px;line-height:9px;color:#e2124c;">***</div>
<div class="t" style="left:203px;top:498.90px;font-size:7.5px;line-height:9px;color:#e2124c;">***</div>
<div class="t" style="left:14.8px;top:507.90px;font-size:7.5px;line-height:9px;color:#e2124c;">IQTimeSkew</div>
<div class="t" style="left:62.6px;top:507.90px;font-size:7.5px;line-height:9px;color:#e2124c;">0.00004</div>
<div class="t" style="right:1088.6px;top:507.90px;font-size:7.5px;line-height:9px;color:#e2124c;">ns</div>
<div class="t" style="left:124.3px;top:507.90px;font-size:7.5px;line-height:9px;color:#e2124c;">0.00004</div>
<div class="t" style="left:164.3px;top:507.90px;font-size:7.5px;line-height:9px;color:#e2124c;">***</div>
<div class="t" style="left:203px;top:507.90px;font-size:7.5px;line-height:9px;color:#e2124c;">***</div>
<div class="t" style="left:14.8px;top:520.90px;font-size:7.5px;line-height:9px;color:#e2124c;">CrossPwr</div>
<div class="t" style="left:62.6px;top:520.90px;font-size:7.5px;line-height:9px;color:#e2124c;">***</div>
<div class="t" style="left:124.3px;top:520.90px;font-size:7.5px;line-height:9px;color:#e2124c;">***</div>
<div class="t" style="left:164.3px;top:520.90px;font-size:7.5px;line-height:9px;color:#e2124c;">***</div>
<div class="t" style="left:203px;top:520.90px;font-size:7.5px;line-height:9px;color:#e2124c;">***</div>
<div class="t" style="left:14.8px;top:529.90px;font-size:7.5px;line-height:9px;color:#e2124c;">SyncCorr</div>
<div class="t" style="left:62.6px;top:529.90px;font-size:7.5px;line-height:9px;color:#e2124c;">0.99308</div>
<div class="t" style="left:124.3px;top:529.90px;font-size:7.5px;line-height:9px;color:#e2124c;">0.99308</div>
<div class="t" style="left:164.3px;top:529.90px;font-size:7.5px;line-height:9px;color:#e2124c;">***</div>
<div class="t" style="left:203px;top:529.90px;font-size:7.5px;line-height:9px;color:#e2124c;">***</div>
<div class="t" style="left:14.8px;top:538.90px;font-size:7.5px;line-height:9px;color:#e2124c;">SymTimeAdj</div>
<div class="t" style="left:62.6px;top:538.90px;font-size:7.5px;line-height:9px;color:#e2124c;">-3.125</div>
<div class="t" style="right:1088.6px;top:538.90px;font-size:7.5px;line-height:9px;color:#e2124c;">%</div>
<div class="t" style="left:124.3px;top:538.90px;font-size:7.5px;line-height:9px;color:#e2124c;">-3.125</div>
<div class="t" style="left:164.3px;top:538.90px;font-size:7.5px;line-height:9px;color:#e2124c;">***</div>
<div class="t" style="left:203px;top:538.90px;font-size:7.5px;line-height:9px;color:#e2124c;">***</div>
<div class="t" style="left:14.8px;top:547.90px;font-size:7.5px;line-height:9px;color:#e2124c;">EVM(w/LO)</div>
<div class="t" style="left:62.6px;top:547.90px;font-size:7.5px;line-height:9px;color:#e2124c;">-48.08</div>
<div class="t" style="right:1088.6px;top:547.90px;font-size:7.5px;line-height:9px;color:#e2124c;">dB</div>
<div class="t" style="left:124.3px;top:547.90px;font-size:7.5px;line-height:9px;color:#e2124c;">-48.08</div>
<div class="t" style="left:164.3px;top:547.90px;font-size:7.5px;line-height:9px;color:#e2124c;">***</div>
<div class="t" style="left:203px;top:547.90px;font-size:7.5px;line-height:9px;color:#e2124c;">***</div>
<div class="t" style="left:307px;top:394.90px;font-size:7.5px;line-height:9px;color:#d808d8;">ModFmt</div>
<div class="t" style="left:363.8px;top:394.90px;font-size:7.5px;line-height:9px;color:#d808d8;">Len(sym)</div>
<div class="t" style="left:421px;top:394.90px;font-size:7.5px;line-height:9px;color:#d808d8;">Pwr(dBm)</div>
<div class="t" style="left:477.8px;top:394.90px;font-size:7.5px;line-height:9px;color:#d808d8;">EVM(dB)</div>
<div style="position:absolute;left:251px;top:405px;width:440.5px;height:1px;background:#a008a0"></div>
<div class="t" style="left:250.8px;top:407.90px;font-size:7.5px;line-height:9px;color:#d808d8;">L-STF</div>
<div class="t" style="left:307px;top:407.90px;font-size:7.5px;line-height:9px;color:#d808d8;">BPSK</div>
<div class="t" style="left:363.8px;top:407.90px;font-size:7.5px;line-height:9px;color:#d808d8;">2</div>
<div class="t" style="left:421px;top:407.90px;font-size:7.5px;line-height:9px;color:#d808d8;">-0.54049</div>
<div class="t" style="left:477.8px;top:407.90px;font-size:7.5px;line-height:9px;color:#d808d8;">***</div>
<div class="t" style="left:250.8px;top:416.90px;font-size:7.5px;line-height:9px;color:#d808d8;">L-LTF</div>
<div class="t" style="left:307px;top:416.90px;font-size:7.5px;line-height:9px;color:#d808d8;">BPSK</div>
<div class="t" style="left:363.8px;top:416.90px;font-size:7.5px;line-height:9px;color:#d808d8;">2</div>
<div class="t" style="left:421px;top:416.90px;font-size:7.5px;line-height:9px;color:#d808d8;">-0.54479</div>
<div class="t" style="left:477.8px;top:416.90px;font-size:7.5px;line-height:9px;color:#d808d8;">***</div>
<div class="t" style="left:250.8px;top:425.90px;font-size:7.5px;line-height:9px;color:#d808d8;">L-SIG</div>
<div class="t" style="left:307px;top:425.90px;font-size:7.5px;line-height:9px;color:#d808d8;">BPSK</div>
<div class="t" style="left:363.8px;top:425.90px;font-size:7.5px;line-height:9px;color:#d808d8;">1</div>
<div class="t" style="left:421px;top:425.90px;font-size:7.5px;line-height:9px;color:#d808d8;">-0.31080</div>
<div class="t" style="left:477.8px;top:425.90px;font-size:7.5px;line-height:9px;color:#d808d8;">-45.194</div>
<div class="t" style="left:250.8px;top:434.90px;font-size:7.5px;line-height:9px;color:#d808d8;">RL-SIG</div>
<div class="t" style="left:307px;top:434.90px;font-size:7.5px;line-height:9px;color:#d808d8;">BPSK</div>
<div class="t" style="left:363.8px;top:434.90px;font-size:7.5px;line-height:9px;color:#d808d8;">1</div>
<div class="t" style="left:421px;top:434.90px;font-size:7.5px;line-height:9px;color:#d808d8;">-0.30635</div>
<div class="t" style="left:477.8px;top:434.90px;font-size:7.5px;line-height:9px;color:#d808d8;">-45.096</div>
<div class="t" style="left:250.8px;top:443.90px;font-size:7.5px;line-height:9px;color:#d808d8;">EHT-U-SIG1</div>
<div class="t" style="left:307px;top:443.90px;font-size:7.5px;line-height:9px;color:#d808d8;">BPSK</div>
<div class="t" style="left:363.8px;top:443.90px;font-size:7.5px;line-height:9px;color:#d808d8;">1</div>
<div class="t" style="left:421px;top:443.90px;font-size:7.5px;line-height:9px;color:#d808d8;">0.09068</div>
<div class="t" style="left:477.8px;top:443.90px;font-size:7.5px;line-height:9px;color:#d808d8;">-43.248</div>
<div class="t" style="left:250.8px;top:452.90px;font-size:7.5px;line-height:9px;color:#d808d8;">EHT-U-SIG2</div>
<div class="t" style="left:307px;top:452.90px;font-size:7.5px;line-height:9px;color:#d808d8;">BPSK</div>
<div class="t" style="left:363.8px;top:452.90px;font-size:7.5px;line-height:9px;color:#d808d8;">1</div>
<div class="t" style="left:421px;top:452.90px;font-size:7.5px;line-height:9px;color:#d808d8;">-0.02860</div>
<div class="t" style="left:477.8px;top:452.90px;font-size:7.5px;line-height:9px;color:#d808d8;">-43.551</div>
<div class="t" style="left:250.8px;top:461.90px;font-size:7.5px;line-height:9px;color:#d808d8;">EHT-SIG</div>
<div class="t" style="left:307px;top:461.90px;font-size:7.5px;line-height:9px;color:#d808d8;">QPSK</div>
<div class="t" style="left:363.8px;top:461.90px;font-size:7.5px;line-height:9px;color:#d808d8;">1</div>
<div class="t" style="left:421px;top:461.90px;font-size:7.5px;line-height:9px;color:#d808d8;">-0.01284</div>
<div class="t" style="left:477.8px;top:461.90px;font-size:7.5px;line-height:9px;color:#d808d8;">-45.955</div>
<div class="t" style="left:250.8px;top:470.90px;font-size:7.5px;line-height:9px;color:#d808d8;">EHT-STF</div>
<div class="t" style="left:307px;top:470.90px;font-size:7.5px;line-height:9px;color:#d808d8;">BPSK</div>
<div class="t" style="left:363.8px;top:470.90px;font-size:7.5px;line-height:9px;color:#d808d8;">1</div>
<div class="t" style="left:421px;top:470.90px;font-size:7.5px;line-height:9px;color:#d808d8;">-0.31826</div>
<div class="t" style="left:477.8px;top:470.90px;font-size:7.5px;line-height:9px;color:#d808d8;">***</div>
<div class="t" style="left:250.8px;top:479.90px;font-size:7.5px;line-height:9px;color:#d808d8;">EHT-LTF</div>
<div class="t" style="left:307px;top:479.90px;font-size:7.5px;line-height:9px;color:#d808d8;">BPSK</div>
<div class="t" style="left:363.8px;top:479.90px;font-size:7.5px;line-height:9px;color:#d808d8;">1</div>
<div class="t" style="left:421px;top:479.90px;font-size:7.5px;line-height:9px;color:#d808d8;">-0.15722</div>
<div class="t" style="left:477.8px;top:479.90px;font-size:7.5px;line-height:9px;color:#d808d8;">***</div>
<div class="t" style="left:250.8px;top:488.90px;font-size:7.5px;line-height:9px;color:#d808d8;">EHT-DATA</div>
<div class="t" style="left:307px;top:488.90px;font-size:7.5px;line-height:9px;color:#d808d8;">4096QAM</div>
<div class="t" style="left:363.8px;top:488.90px;font-size:7.5px;line-height:9px;color:#d808d8;">4</div>
<div class="t" style="left:421px;top:488.90px;font-size:7.5px;line-height:9px;color:#d808d8;">-0.21442</div>
<div class="t" style="left:477.8px;top:488.90px;font-size:7.5px;line-height:9px;color:#d808d8;">-48.072</div>
<div class="t" style="left:250.8px;top:497.90px;font-size:7.5px;line-height:9px;color:#d808d8;">Total</div>
<div class="t" style="left:307px;top:497.90px;font-size:7.5px;line-height:9px;color:#d808d8;">***</div>
<div class="t" style="left:363.8px;top:497.90px;font-size:7.5px;line-height:9px;color:#d808d8;">15</div>
<div class="t" style="left:421px;top:497.90px;font-size:7.5px;line-height:9px;color:#d808d8;">-0.26697</div>
<div class="t" style="left:477.8px;top:497.90px;font-size:7.5px;line-height:9px;color:#d808d8;">-45.733</div>
<div class="t" style="left:255px;top:511.90px;font-size:7.5px;line-height:9px;color:#d808d8;">Format</div>
<div class="t" style="left:307px;top:511.90px;font-size:7.5px;line-height:9px;color:#d808d8;">320  MHz EHT 1  stream</div>
<div class="t" style="left:255px;top:520.90px;font-size:7.5px;line-height:9px;color:#d808d8;">Standard</div>
<div class="t" style="left:307px;top:520.90px;font-size:7.5px;line-height:9px;color:#d808d8;">EHT MUPPDU</div>
<div class="t" style="left:255px;top:529.90px;font-size:7.5px;line-height:9px;color:#d808d8;">EHT-U-SIG</div>
<div class="t" style="left:307px;top:529.90px;font-size:7.5px;line-height:9px;color:#d808d8;">CRCPassed</div>
<div class="t" style="left:255px;top:538.90px;font-size:7.5px;line-height:9px;color:#d808d8;">L-SIG</div>
<div class="t" style="left:307px;top:538.90px;font-size:7.5px;line-height:9px;color:#d808d8;">ParityOK</div>
<div class="t" style="left:709.6px;top:394.90px;font-size:7.5px;line-height:9px;color:#7a40e8;">EHT-U-SIG</div>
<div class="t" style="left:770.7px;top:394.90px;font-size:7.5px;line-height:9px;color:#7a40e8;">CRCPassed</div>
<div class="t" style="left:709.6px;top:408.90px;font-size:7.5px;line-height:9px;color:#7a40e8;">PHY Version</div>
<div class="t" style="left:770.7px;top:408.90px;font-size:7.5px;line-height:9px;color:#7a40e8;">0</div>
<div class="t" style="left:818.6px;top:408.90px;font-size:7.5px;line-height:9px;color:#7a40e8;">BW</div>
<div class="t" style="left:880.2px;top:408.90px;font-size:7.5px;line-height:9px;color:#7a40e8;">320MHz</div>
<div class="t" style="left:928.2px;top:408.90px;font-size:7.5px;line-height:9px;color:#7a40e8;">UL/DL</div>
<div class="t" style="left:989.2px;top:408.90px;font-size:7.5px;line-height:9px;color:#7a40e8;">DL</div>
<div class="t" style="left:709.6px;top:417.90px;font-size:7.5px;line-height:9px;color:#7a40e8;">BSS Color</div>
<div class="t" style="left:770.7px;top:417.90px;font-size:7.5px;line-height:9px;color:#7a40e8;">5</div>
<div class="t" style="left:818.6px;top:417.90px;font-size:7.5px;line-height:9px;color:#7a40e8;">TXOP</div>
<div class="t" style="left:880.2px;top:417.90px;font-size:7.5px;line-height:9px;color:#7a40e8;">8us</div>
<div class="t" style="left:928.2px;top:417.90px;font-size:7.5px;line-height:9px;color:#7a40e8;">Disregard</div>
<div class="t" style="left:989.2px;top:417.90px;font-size:7.5px;line-height:9px;color:#7a40e8;">0x1</div>
<div class="t" style="left:709.6px;top:426.90px;font-size:7.5px;line-height:9px;color:#7a40e8;">Validate</div>
<div class="t" style="left:770.7px;top:426.90px;font-size:7.5px;line-height:9px;color:#7a40e8;">1</div>
<div class="t" style="left:709.6px;top:435.90px;font-size:7.5px;line-height:9px;color:#7a40e8;">PPDUType</div>
<div class="t" style="left:770.7px;top:435.90px;font-size:7.5px;line-height:9px;color:#7a40e8;">MU</div>
<div class="t" style="left:818.6px;top:435.90px;font-size:7.5px;line-height:9px;color:#7a40e8;">Compression</div>
<div class="t" style="left:880.2px;top:435.90px;font-size:7.5px;line-height:9px;color:#7a40e8;">Y</div>
<div class="t" style="left:928.2px;top:435.90px;font-size:7.5px;line-height:9px;color:#7a40e8;">Validate</div>
<div class="t" style="left:989.2px;top:435.90px;font-size:7.5px;line-height:9px;color:#7a40e8;">1</div>
<div class="t" style="left:709.6px;top:444.90px;font-size:7.5px;line-height:9px;color:#7a40e8;">Punc  Value</div>
<div class="t" style="left:770.7px;top:444.90px;font-size:7.5px;line-height:9px;color:#7a40e8;">7</div>
<div class="t" style="left:818.6px;top:444.90px;font-size:7.5px;line-height:9px;color:#7a40e8;">Punc  Pattern</div>
<div class="t" style="left:880.2px;top:444.90px;font-size:7.5px;line-height:9px;color:#7a40e8;">111111x1</div>
<div class="t" style="left:928.2px;top:444.90px;font-size:7.5px;line-height:9px;color:#7a40e8;">Validate</div>
<div class="t" style="left:989.2px;top:444.90px;font-size:7.5px;line-height:9px;color:#7a40e8;">1</div>
<div class="t" style="left:709.6px;top:453.90px;font-size:7.5px;line-height:9px;color:#7a40e8;">EHT-SIG  MCS</div>
<div class="t" style="left:770.7px;top:453.90px;font-size:7.5px;line-height:9px;color:#7a40e8;">MCS1</div>
<div class="t" style="left:818.6px;top:453.90px;font-size:7.5px;line-height:9px;color:#7a40e8;">EHT-SIG  Syms</div>
<div class="t" style="left:880.2px;top:453.90px;font-size:7.5px;line-height:9px;color:#7a40e8;">1</div>
<div class="t" style="left:928.2px;top:453.90px;font-size:7.5px;line-height:9px;color:#7a40e8;">CRC</div>
<div class="t" style="left:989.2px;top:453.90px;font-size:7.5px;line-height:9px;color:#7a40e8;">0x6</div>
<div class="t" style="left:709.6px;top:462.90px;font-size:7.5px;line-height:9px;color:#7a40e8;">Tail</div>
<div class="t" style="left:770.7px;top:462.90px;font-size:7.5px;line-height:9px;color:#7a40e8;">0x0</div>
<div class="t" style="left:709.6px;top:480.90px;font-size:7.5px;line-height:9px;color:#7a40e8;">EHT-SIG1</div>
<div class="t" style="left:770.7px;top:480.90px;font-size:7.5px;line-height:9px;color:#7a40e8;">CRCPassed</div>
<div class="t" style="left:709.6px;top:493.90px;font-size:7.5px;line-height:9px;color:#7a40e8;">SpatialR</div>
<div class="t" style="left:770.7px;top:493.90px;font-size:7.5px;line-height:9px;color:#7a40e8;">1</div>
<div class="t" style="left:818.6px;top:493.90px;font-size:7.5px;line-height:9px;color:#7a40e8;">GI</div>
<div class="t" style="left:880.2px;top:493.90px;font-size:7.5px;line-height:9px;color:#7a40e8;">3.2us</div>
<div class="t" style="left:928.2px;top:493.90px;font-size:7.5px;line-height:9px;color:#7a40e8;">EHT-LTF  Size</div>
<div class="t" style="left:989.2px;top:493.90px;font-size:7.5px;line-height:9px;color:#7a40e8;">4x</div>
<div class="t" style="left:709.6px;top:502.90px;font-size:7.5px;line-height:9px;color:#7a40e8;">EHT-LTF  Syms</div>
<div class="t" style="left:770.7px;top:502.90px;font-size:7.5px;line-height:9px;color:#7a40e8;">1</div>
<div class="t" style="left:818.6px;top:502.90px;font-size:7.5px;line-height:9px;color:#7a40e8;">LDPC Extra</div>
<div class="t" style="left:880.2px;top:502.90px;font-size:7.5px;line-height:9px;color:#7a40e8;">N</div>
<div class="t" style="left:928.2px;top:502.90px;font-size:7.5px;line-height:9px;color:#7a40e8;">Pre-FEC  Pad</div>
<div class="t" style="left:989.2px;top:502.90px;font-size:7.5px;line-height:9px;color:#7a40e8;">4</div>
<div class="t" style="left:709.6px;top:511.90px;font-size:7.5px;line-height:9px;color:#7a40e8;">PE  Disamb</div>
<div class="t" style="left:770.7px;top:511.90px;font-size:7.5px;line-height:9px;color:#7a40e8;">0</div>
<div class="t" style="left:818.6px;top:511.90px;font-size:7.5px;line-height:9px;color:#7a40e8;">Disregard</div>
<div class="t" style="left:880.2px;top:511.90px;font-size:7.5px;line-height:9px;color:#7a40e8;">0x1</div>
<div class="t" style="left:928.2px;top:511.90px;font-size:7.5px;line-height:9px;color:#7a40e8;">Users</div>
<div class="t" style="left:989.2px;top:511.90px;font-size:7.5px;line-height:9px;color:#7a40e8;">1</div>
<div class="t" style="left:709.6px;top:520.90px;font-size:7.5px;line-height:9px;color:#7a40e8;">CRC</div>
<div class="t" style="left:770.7px;top:520.90px;font-size:7.5px;line-height:9px;color:#7a40e8;">0x8</div>
<div class="t" style="left:818.6px;top:520.90px;font-size:7.5px;line-height:9px;color:#7a40e8;">Tail</div>
<div class="t" style="left:880.2px;top:520.90px;font-size:7.5px;line-height:9px;color:#7a40e8;">0x0</div>
<div class="t" style="left:709.6px;top:538.90px;font-size:7.5px;line-height:9px;color:#7a40e8;">L-SIG</div>
<div class="t" style="left:770.7px;top:538.90px;font-size:7.5px;line-height:9px;color:#7a40e8;">ParityOK</div>
<div class="t" style="left:709.6px;top:552.90px;font-size:7.5px;line-height:9px;color:#7a40e8;">Rate</div>
<div class="t" style="left:770.7px;top:552.90px;font-size:7.5px;line-height:9px;color:#7a40e8;">0xd</div>
<div class="t" style="left:818.6px;top:552.90px;font-size:7.5px;line-height:9px;color:#7a40e8;">Reserved</div>
<div class="t" style="left:880.2px;top:552.90px;font-size:7.5px;line-height:9px;color:#7a40e8;">0</div>
<div class="t" style="left:928.2px;top:552.90px;font-size:7.5px;line-height:9px;color:#7a40e8;">Length</div>
<div class="t" style="left:989.2px;top:552.90px;font-size:7.5px;line-height:9px;color:#7a40e8;">72</div>
<div class="t" style="left:709.6px;top:561.90px;font-size:7.5px;line-height:9px;color:#7a40e8;">Parity</div>
<div class="t" style="left:770.7px;top:561.90px;font-size:7.5px;line-height:9px;color:#7a40e8;">1</div>
<div class="t" style="left:818.6px;top:561.90px;font-size:7.5px;line-height:9px;color:#7a40e8;">Tail</div>
<div class="t" style="left:880.2px;top:561.90px;font-size:7.5px;line-height:9px;color:#7a40e8;">0x0</div>
</div></body></html>
